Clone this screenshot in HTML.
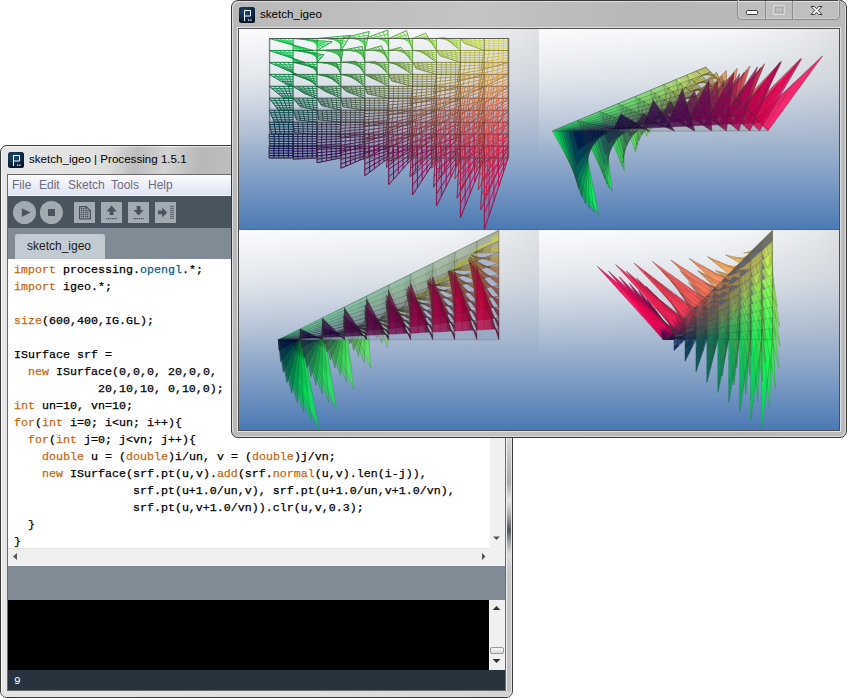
<!DOCTYPE html>
<html><head><meta charset="utf-8">
<style>
*{margin:0;padding:0;box-sizing:border-box}
html,body{width:847px;height:698px;overflow:hidden;background:#fff;position:relative;font-family:"Liberation Sans",sans-serif}
.a{position:absolute}
.ttl{font-size:11.6px;color:#000;white-space:nowrap;letter-spacing:0}
</style></head><body>
<!-- ============ Processing window ============ -->
<div class="a" style="left:0;top:145px;width:513px;height:553px;border:1px solid #3c3c3c;border-radius:7px 7px 7px 7px;overflow:hidden;
 background:linear-gradient(90deg,#e6e6e6 0,#e2e2e2 90px,#d2d2d2 135px,#c8c8c8 190px,#c4c4c4 260px,#bababa 513px);box-shadow:inset 1px 1px 0 #f4f4f4,inset -1px -1px 0 #f0f0f0">
 <div class="a" style="left:0;top:545px;width:513px;height:8px;background:linear-gradient(90deg,#e4e4e4,#e0e0e0 60%,#d4d4d4)"></div>
</div>
<div class="a" style="left:1px;top:146px;width:230px;height:28px;background:linear-gradient(100deg,rgba(0,0,0,0) 0,rgba(0,0,0,0) 110px,rgba(0,0,0,.1) 135px,rgba(255,255,255,.12) 165px,rgba(0,0,0,.08) 200px,rgba(0,0,0,.04) 230px)"></div>
<svg class="a" style="left:8px;top:152px" width="16" height="16" viewBox="0 0 16 16"><defs><radialGradient id="ig" cx="0.4" cy="0.3" r="0.9"><stop offset="0" stop-color="#1d4f7a"/><stop offset="0.6" stop-color="#0b2440"/><stop offset="1" stop-color="#000"/></radialGradient></defs><rect width="16" height="16" rx="2.5" fill="url(#ig)"/><path d="M5.5 14V3.5H11.5V9H5.5" fill="none" stroke="#fff" stroke-width="1"/><rect x="9" y="12.5" width="1.3" height="1.3" fill="#fff"/><rect x="11.3" y="12.5" width="1.3" height="1.3" fill="#fff"/></svg>
<div class="a ttl" style="left:29px;top:152px">sketch_igeo | Processing 1.5.1</div>
<div class="a" style="left:506px;top:438px;width:6px;height:253px;border-left:1px solid #eee;border-right:1px solid #e4e4e4;background:linear-gradient(#d8d8d8 0,#bcbcbc 25px,#ababab 45px,#e6e6e6 62px,#a8a8a8 78px,#4e565e 92px,#9ea2a6 104px,#dedede 116px,#c6c6c6 135px,#c2c2c2 253px)"></div>
<!-- client -->
<div class="a" style="left:7px;top:174px;width:499px;height:517px;border:1px solid #6a6a6a;background:#fff;overflow:hidden">
 <div class="a" style="left:0;top:0;width:497px;height:21px;background:linear-gradient(#fcfcfe,#eef1f8 45%,#dde3f1);border-bottom:1px solid #f6f7fb;font-size:12px;color:#6d6d80">
  <span class="a" style="left:4px;top:3px">File</span><span class="a" style="left:31px;top:3px">Edit</span><span class="a" style="left:60px;top:3px">Sketch</span><span class="a" style="left:103px;top:3px">Tools</span><span class="a" style="left:140px;top:3px">Help</span>
 </div>
 <div class="a" style="left:0;top:21px;width:497px;height:32px;background:#4a545e">
  <svg class="a" style="left:0;top:0" width="180" height="32" viewBox="8 196 180 32">
   <circle cx="24.5" cy="212.5" r="11.5" fill="#a2aab2"/>
   <path d="M21.8 208.2L30.5 212.6L21.8 217Z" fill="#4a545e"/>
   <circle cx="51.4" cy="212.5" r="11.5" fill="#a2aab2"/>
   <rect x="48" y="209" width="7" height="7" fill="#4a545e"/>
   <rect x="74" y="202" width="21" height="21" fill="#a2aab2"/>
   <path d="M79.6 206.6H86.2L90.4 210.8V218.9H79.6Z" fill="none" stroke="#4a545e" stroke-width="1.3"/>
   <path d="M86 206.6V211H90.4" fill="none" stroke="#4a545e" stroke-width="1.2"/>
   <g fill="#4a545e"><rect x="81" y="208" width="1.4" height="1.4"/><rect x="83" y="208" width="1.4" height="1.4"/><rect x="81" y="210" width="1.4" height="1.4"/><rect x="83" y="210" width="1.4" height="1.4"/><rect x="81" y="212" width="1.4" height="1.4"/><rect x="83" y="212" width="1.4" height="1.4"/><rect x="85" y="212" width="1.4" height="1.4"/><rect x="87" y="212" width="1.4" height="1.4"/><rect x="81" y="214" width="1.4" height="1.4"/><rect x="83" y="214" width="1.4" height="1.4"/><rect x="85" y="214" width="1.4" height="1.4"/><rect x="87" y="214" width="1.4" height="1.4"/><rect x="81" y="216" width="1.4" height="1.4"/><rect x="83" y="216" width="1.4" height="1.4"/><rect x="85" y="216" width="1.4" height="1.4"/><rect x="87" y="216" width="1.4" height="1.4"/></g>
   <rect x="101" y="202" width="21" height="21" fill="#a2aab2"/>
   <path d="M106.5 211.4L111.6 205.6L116.7 211.4H113.5V215H109.7V211.4Z" fill="#4a545e"/>
   <path d="M106.3 218.6H117.3" stroke="#4a545e" stroke-width="1.4" stroke-dasharray="1.2 .65"/>
   <rect x="128" y="202" width="21" height="21" fill="#a2aab2"/>
   <path d="M133.5 210L138.6 215.6L143.7 210H140.5V206H136.7V210Z" fill="#4a545e"/>
   <path d="M133.3 218.6H144.3" stroke="#4a545e" stroke-width="1.4" stroke-dasharray="1.2 .65"/>
   <rect x="155" y="202" width="21" height="21" fill="#a2aab2"/>
   <path d="M158 210.6H162.2V207.4L167.2 212.4L162.2 217.4V214.2H158Z" fill="#4a545e"/>
   <path d="M171 205.8V219.5M173.1 205.8V219.5" stroke="#4a545e" stroke-width="1.4" stroke-dasharray="1.2 .8"/>
  </svg>
 </div>
 <div class="a" style="left:0;top:53px;width:497px;height:31px;background:#818b95">
  <div class="a" style="left:7px;top:6px;width:90px;height:25px;background:#c2cad2;border-radius:3px 3px 0 0"></div>
  <span class="a" style="left:19px;top:11px;font-size:12px;color:#1a1a1a">sketch_igeo</span>
 </div>
 <div class="a" style="left:0;top:84px;width:481px;height:289px;background:#fff"></div>
 <pre class="a" style="left:6px;top:87px;font-family:'Liberation Mono',monospace;font-size:11.67px;line-height:17px;color:#000;-webkit-text-stroke:.25px"><span style="color:#c66a12">import</span> processing.<span style="color:#0a6088">opengl</span>.*;
<span style="color:#c66a12">import</span> igeo.*;

<span style="color:#c66a12">size</span>(600,400,IG.GL);

ISurface srf =
  <span style="color:#c66a12">new</span> ISurface(0,0,0, 20,0,0,
            20,10,10, 0,10,0);
<span style="color:#c66a12">int</span> un=10, vn=10;
<span style="color:#c66a12">for</span>(<span style="color:#c66a12">int</span> i=0; i&lt;un; i++){
  <span style="color:#c66a12">for</span>(<span style="color:#c66a12">int</span> j=0; j&lt;vn; j++){
    <span style="color:#c66a12">double</span> u = (<span style="color:#c66a12">double</span>)i/un, v = (<span style="color:#c66a12">double</span>)j/vn;
    <span style="color:#c66a12">new</span> ISurface(srf.pt(u,v).<span style="color:#c66a12">add</span>(srf.<span style="color:#c66a12">normal</span>(u,v).len(i-j)),
                 srf.pt(u+1.0/un,v), srf.pt(u+1.0/un,v+1.0/vn),
                 srf.pt(u,v+1.0/vn)).clr(u,v,0.3);
  }
}</pre>
 <!-- editor v scrollbar -->
 <div class="a" style="left:481px;top:84px;width:16px;height:289px;background:#f0f0f0;border-left:1px solid #f8f8f8"></div>
 <!-- h scrollbar -->
 <div class="a" style="left:0;top:373px;width:481px;height:18px;background:#efefef;border-top:1px solid #e2e2e2"></div>
 <div class="a" style="left:481px;top:373px;width:16px;height:18px;background:#f0f0f0"></div>
 <div class="a" style="left:0;top:391px;width:497px;height:34px;background:#818b95"></div>
 <div class="a" style="left:0;top:425px;width:481px;height:70px;background:#000"></div>
 <div class="a" style="left:481px;top:425px;width:16px;height:70px;background:#f0f0f0"></div>
 <div class="a" style="left:482px;top:472px;width:14px;height:7px;border:1px solid #9a9a9a;border-radius:2px;background:linear-gradient(#f6f6f6,#dcdcdc)"></div>
 <div class="a" style="left:0;top:495px;width:497px;height:20px;background:#29333d"></div>
 <svg class="a" style="left:0;top:0" width="497" height="517" viewBox="8 175 497 517">
  <path d="M493 536.5H500L496.5 540Z" fill="#555"/>
  <path d="M13 556.5L17 553V560Z" fill="#555"/>
  <path d="M482 553V560L485.5 556.5Z" fill="#555"/>
  <path d="M492.5 610L496.5 606L500.5 610Z" fill="#333"/>
  <path d="M492.5 659H500.5L496.5 663Z" fill="#333"/>
 </svg>
 <span class="a" style="left:6px;top:500px;font-family:'Liberation Mono',monospace;font-size:11px;color:#fff">9</span>
</div>
<!-- ============ Sketch window ============ -->
<div class="a" style="left:231px;top:0;width:616px;height:438px;border:1px solid #383838;border-radius:7px;
 background:linear-gradient(90deg,#b9b9b9,#bfbfbf 25%,#c4c4c4 40%,#b7b7b7 65%,#bababa 100%);box-shadow:inset 1px 1px 0 #dedede,inset -1px -1px 0 #dcdcdc"></div>
<div class="a" style="left:237px;top:27px;width:604px;height:405px;border:1px solid #e4e2de;border-right-color:#e0e0e0"></div>
<svg class="a" style="left:239px;top:7px" width="16" height="16" viewBox="0 0 16 16"><rect width="16" height="16" rx="2.5" fill="url(#ig)"/><path d="M5.5 14V3.5H11.5V9H5.5" fill="none" stroke="#fff" stroke-width="1"/><rect x="9" y="12.5" width="1.3" height="1.3" fill="#fff"/><rect x="11.3" y="12.5" width="1.3" height="1.3" fill="#fff"/></svg>
<div class="a ttl" style="left:260px;top:7px">sketch_igeo</div>
<!-- caption buttons -->
<svg class="a" style="left:737px;top:0" width="104" height="21" viewBox="737 0 104 21">
 <path d="M737.5 0V15.5Q737.5 19.5 741.5 19.5H835.5Q839.5 19.5 839.5 15.5V0" fill="rgba(255,255,255,.08)" stroke="#8c8c8c"/>
 <path d="M738.5 0V15Q738.5 18.5 742 18.5H835Q838.5 18.5 838.5 15V0" fill="none" stroke="#d6d6d6" stroke-opacity=".7"/>
 <path d="M765.5 1V19M792.5 1V19" stroke="#8c8c8c"/>
 <path d="M766.5 1V19M793.5 1V19" stroke="#d0d0d0" stroke-opacity=".6"/>
 <rect x="746.5" y="10.5" width="11" height="4" rx="1" fill="#fff" stroke="#3a3a3a"/>
 <rect x="773.5" y="5.5" width="11" height="9" fill="none" stroke="#d8d8d8"/>
 <rect x="775.5" y="7.5" width="7" height="5" fill="none" stroke="#a8a8a8"/>
 <path d="M811 6.5H814.5L816.5 8.8L818.5 6.5H822L818.3 10.5L822 14.5H818.5L816.5 12.2L814.5 14.5H811L814.7 10.5Z" fill="#fff" stroke="#3a3a3a" stroke-width="1" stroke-linejoin="round"/>
</svg>
<!-- sketch client -->
<div class="a" style="left:238px;top:28px;width:602px;height:403px;border:1px solid #4e4e4e;overflow:hidden;background:#4a78b2">
<svg class="a" style="left:0;top:0" width="600" height="401" viewBox="239 29 600 401"><defs><linearGradient id="gv" x1="0" y1="0" x2="0" y2="1"><stop offset="0" stop-color="#f8f9fb"/><stop offset="0.25" stop-color="#dde2e9"/><stop offset="0.5" stop-color="#b0bfd4"/><stop offset="0.75" stop-color="#7f9dc4"/><stop offset="1" stop-color="#4a79b4"/></linearGradient><linearGradient id="gh" x1="0" y1="0" x2="1" y2="0"><stop offset="0" stop-color="#fff" stop-opacity=".3"/><stop offset=".45" stop-color="#fff" stop-opacity="0"/><stop offset="1" stop-color="#606870" stop-opacity=".16"/></linearGradient><linearGradient id="gm" x1="0" y1="0" x2="0" y2="1"><stop offset="0" stop-color="#fff"/><stop offset=".65" stop-color="#000"/></linearGradient><pattern id="stripe" width="4" height="3" patternUnits="userSpaceOnUse"><rect width="4" height="2" fill="#fff"/><rect y="2" width="4" height="1" fill="#fff" fill-opacity=".35"/></pattern><pattern id="hstripe" width="6" height="3" patternUnits="userSpaceOnUse" y="38.5"><rect width="6" height="1" fill="#6c7280" fill-opacity=".45"/></pattern><mask id="mt" maskContentUnits="objectBoundingBox"><rect width="1" height="1" fill="url(#gm)"/></mask><mask id="mstripe" maskUnits="userSpaceOnUse" x="239" y="29" width="300" height="201"><rect x="239" y="29" width="300" height="201" fill="url(#stripe)"/></mask><clipPath id="c_top"><rect x="239" y="29" width="300" height="201"/></clipPath><clipPath id="c_persp"><rect x="539" y="29" width="300" height="201"/></clipPath><clipPath id="c_front"><rect x="239" y="230" width="300" height="200"/></clipPath><clipPath id="c_right"><rect x="539" y="230" width="300" height="200"/></clipPath></defs><style>.vtop path{fill-opacity:0.1;stroke-opacity:0;stroke-width:0.6}.vpersp path{fill-opacity:0.8;stroke-opacity:0.5;stroke-width:0.6}.vfront path{fill-opacity:0.75;stroke-opacity:0.55;stroke-width:0.6}.vright path{fill-opacity:0.88;stroke-opacity:0.6;stroke-width:0.6}</style><g clip-path="url(#c_top)"><rect x="239" y="29" width="300" height="201" fill="url(#gv)"/><rect x="239" y="29" width="300" height="201" fill="url(#gh)" mask="url(#mt)"/><rect x="269.2" y="107.5" width="239" height="50.5" fill="url(#hstripe)"/><g class="vtop"><path fill="#00e64c" d="M313.3 50.5L293.1 50.4L293.1 38.5L269.2 38.5Z"/><path fill="#00cc4c" d="M304.7 62.4L293.1 62.4L293.1 50.4L269.2 50.5Z"/><path fill="#00b24c" d="M296.8 74.4L293.1 74.4L293.1 62.4L269.2 62.4Z"/><path fill="#00994c" d="M289.8 86.3L293.1 86.3L293.1 74.4L269.2 74.4Z"/><path fill="#00804c" d="M283.7 98.2L293.1 98.2L293.1 86.3L269.2 86.3Z"/><path fill="#00664c" d="M278.6 110.2L293.1 110.2L293.1 98.2L269.2 98.2Z"/><path fill="#004c4c" d="M274.5 122.2L293.1 122.2L293.1 110.2L269.2 110.2Z"/><path fill="#1ae64c" d="M332.2 41.8L317 50.4L317 38.5L293.1 38.5Z"/><path fill="#00334c" d="M271.6 134.1L293.1 134.1L293.1 122.1L269.2 122.2Z"/><path fill="#1acc4c" d="M324 54.7L317 62.4L317 50.4L293.1 50.4Z"/><path fill="#1ab24c" d="M316.7 67.6L317 74.4L317 62.4L293.1 62.4Z"/><path fill="#1a994c" d="M310.2 80.6L317 86.3L317 74.4L293.1 74.4Z"/><path fill="#001a4c" d="M269.8 146.1L293.1 146.1L293.1 134.1L269.2 134.1Z"/><path fill="#1a804c" d="M304.6 93.6L317 98.2L317 86.3L293.1 86.3Z"/><path fill="#1a664c" d="M300.1 106.7L317 110.2L317 98.2L293.1 98.2Z"/><path fill="#bfc7d6" style="fill-opacity:0" d="M269.2 158L293.1 158L293.1 146.1L269.2 146.1Z"/><path fill="#00004c" d="M269.2 158L293.1 158L293.1 146.1L269.2 146.1Z"/><path fill="#1a4c4c" d="M296.6 119.8L317 122.2L317 110.2L293.1 110.2Z"/><path fill="#bfc7d6" style="fill-opacity:0" d="M269.2 146.1L293.1 146.1L293.1 134.1L269.2 134.1Z"/><path fill="#bfc7d6" style="fill-opacity:0" d="M293.1 158L317 158L317 146.1L293.1 146.1Z"/><path fill="#bfc7d6" style="fill-opacity:0" d="M269.2 134.1L293.1 134.1L293.1 122.2L269.2 122.2Z"/><path fill="#bfc7d6" style="fill-opacity:0" d="M317 158L340.9 158L340.9 146.1L317 146.1Z"/><path fill="#1a334c" d="M294.3 132.9L317 134.1L317 122.2L293.1 122.1Z"/><path fill="#bfc7d6" style="fill-opacity:0" d="M269.2 122.2L293.1 122.2L293.1 110.2L269.2 110.2Z"/><path fill="#bfc7d6" style="fill-opacity:0" d="M340.9 158L364.8 158L364.8 146.1L340.9 146.1Z"/><path fill="#bfc7d6" style="fill-opacity:0" d="M269.2 110.2L293.1 110.2L293.1 98.2L269.2 98.2Z"/><path fill="#bfc7d6" style="fill-opacity:0" d="M364.8 158L388.7 158L388.7 146.1L364.8 146.1Z"/><path fill="#bfc7d6" style="fill-opacity:0" d="M293.1 146.1L317 146.1L317 134.1L293.1 134.1Z"/><path fill="#1a1a4c" d="M293.1 146.1L317 146.1L317 134.1L293.1 134.1Z"/><path fill="#bfc7d6" style="fill-opacity:0" d="M269.2 98.2L293.1 98.2L293.1 86.3L269.2 86.3Z"/><path fill="#bfc7d6" style="fill-opacity:0" d="M388.7 158L412.6 158L412.6 146.1L388.7 146.1Z"/><path fill="#1a004c" d="M293.1 159.2L317 158L317 146.1L293.1 146.1Z"/><path fill="#bfc7d6" style="fill-opacity:0" d="M269.2 86.3L293.1 86.3L293.1 74.4L269.2 74.4Z"/><path fill="#bfc7d6" style="fill-opacity:0" d="M412.6 158L436.5 158L436.5 146.1L412.6 146.1Z"/><path fill="#bfc7d6" style="fill-opacity:0" d="M269.2 74.4L293.1 74.4L293.1 62.4L269.2 62.4Z"/><path fill="#bfc7d6" style="fill-opacity:0" d="M436.5 158L460.4 158L460.4 146.1L436.5 146.1Z"/><path fill="#bfc7d6" style="fill-opacity:0" d="M293.1 134.1L317 134.1L317 122.2L293.1 122.2Z"/><path fill="#bfc7d6" style="fill-opacity:0" d="M317 146.1L340.9 146.1L340.9 134.1L317 134.1Z"/><path fill="#bfc7d6" style="fill-opacity:0" d="M269.2 62.4L293.1 62.4L293.1 50.4L269.2 50.5Z"/><path fill="#bfc7d6" style="fill-opacity:0" d="M460.4 158L484.3 158L484.3 146.1L460.4 146.1Z"/><path fill="#bfc7d6" style="fill-opacity:0" d="M269.2 50.5L293.1 50.4L293.1 38.5L269.2 38.5Z"/><path fill="#bfc7d6" style="fill-opacity:0" d="M484.3 158L508.2 158L508.2 146.1L484.3 146.1Z"/><path fill="#bfc7d6" style="fill-opacity:0" d="M293.1 122.2L317 122.2L317 110.2L293.1 110.2Z"/><path fill="#bfc7d6" style="fill-opacity:0" d="M340.9 146.1L364.8 146.1L364.8 134.1L340.9 134.1Z"/><path fill="#33004c" d="M317 162.7L340.9 158L340.9 146.1L317 146.1Z"/><path fill="#331a4c" d="M316.4 148.4L340.9 146.1L340.9 134.1L317 134.1Z"/><path fill="#bfc7d6" style="fill-opacity:0" d="M317 134.1L340.9 134.1L340.9 122.2L317 122.2Z"/><path fill="#33334c" d="M317 134.1L340.9 134.1L340.9 122.2L317 122.2Z"/><path fill="#334c4c" d="M318.7 119.8L340.9 122.2L340.9 110.2L317 110.2Z"/><path fill="#33664c" d="M321.6 105.6L340.9 110.2L340.9 98.2L317 98.2Z"/><path fill="#33804c" d="M325.5 91.4L340.9 98.2L340.9 86.3L317 86.3Z"/><path fill="#bfc7d6" style="fill-opacity:0" d="M293.1 110.2L317 110.2L317 98.2L293.1 98.2Z"/><path fill="#bfc7d6" style="fill-opacity:0" d="M364.8 146.1L388.7 146.1L388.7 134.1L364.8 134.1Z"/><path fill="#33994c" d="M330.5 77.3L340.9 86.3L340.9 74.4L317 74.4Z"/><path fill="#33b24c" d="M336.4 63.3L340.9 74.4L340.9 62.4L317 62.4Z"/><path fill="#33cc4c" d="M343.2 49.3L340.9 62.4L340.9 50.5L317 50.4Z"/><path fill="#33e64c" d="M350.8 35.4L340.9 50.5L340.9 38.5L317 38.5Z"/><path fill="#bfc7d6" style="fill-opacity:0" d="M388.7 146.1L412.6 146.1L412.6 134.1L388.7 134.1Z"/><path fill="#bfc7d6" style="fill-opacity:0" d="M293.1 98.2L317 98.2L317 86.3L293.1 86.3Z"/><path fill="#bfc7d6" style="fill-opacity:0" d="M340.9 134.1L364.8 134.1L364.8 122.2L340.9 122.2Z"/><path fill="#bfc7d6" style="fill-opacity:0" d="M317 122.2L340.9 122.2L340.9 110.2L317 110.2Z"/><path fill="#4c004c" d="M340.9 168.3L364.8 158L364.8 146.1L340.9 146.1Z"/><path fill="#bfc7d6" style="fill-opacity:0" d="M293.1 86.3L317 86.3L317 74.4L293.1 74.4Z"/><path fill="#bfc7d6" style="fill-opacity:0" d="M412.6 146.1L436.5 146.1L436.5 134.1L412.6 134.1Z"/><path fill="#4c1a4c" d="M339.8 152.9L364.8 146.1L364.8 134.1L340.9 134.1Z"/><path fill="#4c334c" d="M339.8 137.5L364.8 134.1L364.8 122.2L340.9 122.2Z"/><path fill="#bfc7d6" style="fill-opacity:0" d="M293.1 74.4L317 74.4L317 62.4L293.1 62.4Z"/><path fill="#bfc7d6" style="fill-opacity:0" d="M317 110.2L340.9 110.2L340.9 98.2L317 98.2Z"/><path fill="#bfc7d6" style="fill-opacity:0" d="M364.8 134.1L388.7 134.1L388.7 122.2L364.8 122.2Z"/><path fill="#bfc7d6" style="fill-opacity:0" d="M436.5 146.1L460.4 146.1L460.4 134.1L436.5 134.1Z"/><path fill="#66004c" d="M364.8 175.8L388.7 158L388.7 146.1L364.8 146.1Z"/><path fill="#bfc7d6" style="fill-opacity:0" d="M340.9 122.2L364.8 122.2L364.8 110.2L340.9 110.2Z"/><path fill="#4c4c4c" d="M340.9 122.2L364.8 122.2L364.8 110.2L340.9 110.2Z"/><path fill="#bfc7d6" style="fill-opacity:0" d="M460.4 146.1L484.3 146.1L484.3 134.1L460.4 134.1Z"/><path fill="#bfc7d6" style="fill-opacity:0" d="M293.1 62.4L317 62.4L317 50.4L293.1 50.4Z"/><path fill="#4c664c" d="M343.1 106.8L364.8 110.2L364.8 98.2L340.9 98.2Z"/><path fill="#661a4c" d="M363.1 159.4L388.7 146.1L388.7 134.1L364.8 134.1Z"/><path fill="#bfc7d6" style="fill-opacity:0" d="M317 98.2L340.9 98.2L340.9 86.3L317 86.3Z"/><path fill="#bfc7d6" style="fill-opacity:0" d="M388.7 134.1L412.6 134.1L412.6 122.2L388.7 122.2Z"/><path fill="#80004c" d="M388.7 184.7L412.6 158L412.6 146.1L388.7 146.1Z"/><path fill="#bfc7d6" style="fill-opacity:0" d="M293.1 50.4L317 50.4L317 38.5L293.1 38.5Z"/><path fill="#bfc7d6" style="fill-opacity:0" d="M484.3 146.1L508.2 146.1L508.2 134.1L484.3 134.1Z"/><path fill="#4c804c" d="M346.5 91.6L364.8 98.2L364.8 86.3L340.9 86.3Z"/><path fill="#bfc7d6" style="fill-opacity:0" d="M340.9 110.2L364.8 110.2L364.8 98.2L340.9 98.2Z"/><path fill="#bfc7d6" style="fill-opacity:0" d="M364.8 122.2L388.7 122.2L388.7 110.2L364.8 110.2Z"/><path fill="#4c994c" d="M350.8 76.4L364.8 86.3L364.8 74.4L340.9 74.4Z"/><path fill="#66334c" d="M362.6 142.9L388.7 134.1L388.7 122.2L364.8 122.2Z"/><path fill="#99004c" d="M412.6 194.9L436.5 158L436.5 146.1L412.6 146.1Z"/><path fill="#bfc7d6" style="fill-opacity:0" d="M412.6 134.1L436.5 134.1L436.5 122.2L412.6 122.2Z"/><path fill="#bfc7d6" style="fill-opacity:0" d="M317 86.3L340.9 86.3L340.9 74.4L317 74.4Z"/><path fill="#4cb24c" d="M356.1 61.3L364.8 74.4L364.8 62.4L340.9 62.4Z"/><path fill="#801a4c" d="M386.6 167.4L412.6 146.1L412.6 134.1L388.7 134.1Z"/><path fill="#664c4c" d="M363.2 126.5L388.7 122.2L388.7 110.2L364.8 110.2Z"/><path fill="#b2004c" d="M436.5 206L460.4 158L460.4 146.1L436.5 146.1Z"/><path fill="#4ccc4c" d="M362.3 46.4L364.8 62.4L364.8 50.5L340.9 50.5Z"/><path fill="#bfc7d6" style="fill-opacity:0" d="M436.5 134.1L460.4 134.1L460.4 122.2L436.5 122.2Z"/><path fill="#bfc7d6" style="fill-opacity:0" d="M317 74.4L340.9 74.4L340.9 62.4L317 62.4Z"/><path fill="#bfc7d6" style="fill-opacity:0" d="M388.7 122.2L412.6 122.2L412.6 110.2L388.7 110.2Z"/><path fill="#bfc7d6" style="fill-opacity:0" d="M340.9 98.2L364.8 98.2L364.8 86.3L340.9 86.3Z"/><path fill="#cc004c" d="M460.4 217.7L484.3 158L484.3 146.1L460.4 146.1Z"/><path fill="#4ce64c" d="M369.3 31.5L364.8 50.5L364.8 38.5L340.9 38.5Z"/><path fill="#bfc7d6" style="fill-opacity:0" d="M364.8 110.2L388.7 110.2L388.7 98.2L364.8 98.2Z"/><path fill="#66664c" d="M364.8 110.2L388.7 110.2L388.7 98.2L364.8 98.2Z"/><path fill="#80334c" d="M385.5 150.1L412.6 134.1L412.6 122.2L388.7 122.2Z"/><path fill="#991a4c" d="M410 176.8L436.5 146.1L436.5 134.1L412.6 134.1Z"/><path fill="#bfc7d6" style="fill-opacity:0" d="M317 62.4L340.9 62.4L340.9 50.5L317 50.4Z"/><path fill="#bfc7d6" style="fill-opacity:0" d="M460.4 134.1L484.3 134.1L484.3 122.2L460.4 122.2Z"/><path fill="#e6004c" d="M484.3 229.9L508.2 158L508.2 146.1L484.3 146.1Z"/><path fill="#66804c" d="M367.5 93.9L388.7 98.2L388.7 86.3L364.8 86.3Z"/><path fill="#bfc7d6" style="fill-opacity:0" d="M340.9 86.3L364.8 86.3L364.8 74.4L340.9 74.4Z"/><path fill="#bfc7d6" style="fill-opacity:0" d="M412.6 122.2L436.5 122.2L436.5 110.2L412.6 110.2Z"/><path fill="#b21a4c" d="M433.6 187.1L460.4 146.1L460.4 134.1L436.5 134.1Z"/><path fill="#804c4c" d="M385.5 132.7L412.6 122.2L412.6 110.2L388.7 110.2Z"/><path fill="#bfc7d6" style="fill-opacity:0" d="M317 50.4L340.9 50.5L340.9 38.5L317 38.5Z"/><path fill="#bfc7d6" style="fill-opacity:0" d="M484.3 134.1L508.2 134.1L508.2 122.2L484.3 122.2Z"/><path fill="#bfc7d6" style="fill-opacity:0" d="M364.8 98.2L388.7 98.2L388.7 86.3L364.8 86.3Z"/><path fill="#bfc7d6" style="fill-opacity:0" d="M388.7 110.2L412.6 110.2L412.6 98.2L388.7 98.2Z"/><path fill="#66994c" d="M371.2 77.7L388.7 86.3L388.7 74.4L364.8 74.4Z"/><path fill="#99334c" d="M408.5 158.6L436.5 134.1L436.5 122.2L412.6 122.2Z"/><path fill="#bfc7d6" style="fill-opacity:0" d="M436.5 122.2L460.4 122.2L460.4 110.2L436.5 110.2Z"/><path fill="#bfc7d6" style="fill-opacity:0" d="M340.9 74.4L364.8 74.4L364.8 62.4L340.9 62.4Z"/><path fill="#cc1a4c" d="M457.1 198.3L484.3 146.1L484.3 134.1L460.4 134.1Z"/><path fill="#80664c" d="M386.6 115.5L412.6 110.2L412.6 98.2L388.7 98.2Z"/><path fill="#66b24c" d="M375.9 61.7L388.7 74.4L388.7 62.4L364.8 62.4Z"/><path fill="#b2334c" d="M431.6 168.2L460.4 134.1L460.4 122.1L436.5 122.2Z"/><path fill="#e61a4c" d="M480.7 210L508.2 146.1L508.2 134.1L484.3 134.1Z"/><path fill="#994c4c" d="M408 140.4L436.5 122.2L436.5 110.2L412.6 110.2Z"/><path fill="#bfc7d6" style="fill-opacity:0" d="M364.8 86.3L388.7 86.3L388.7 74.4L364.8 74.4Z"/><path fill="#bfc7d6" style="fill-opacity:0" d="M412.6 110.2L436.5 110.2L436.5 98.2L412.6 98.2Z"/><path fill="#66cc4c" d="M381.4 45.8L388.7 62.4L388.7 50.5L364.8 50.5Z"/><path fill="#bfc7d6" style="fill-opacity:0" d="M460.4 122.2L484.3 122.2L484.3 110.2L460.4 110.2Z"/><path fill="#bfc7d6" style="fill-opacity:0" d="M340.9 62.4L364.8 62.4L364.8 50.5L340.9 50.5Z"/><path fill="#bfc7d6" style="fill-opacity:0" d="M388.7 98.2L412.6 98.2L412.6 86.3L388.7 86.3Z"/><path fill="#80804c" d="M388.7 98.2L412.6 98.2L412.6 86.3L388.7 86.3Z"/><path fill="#66e64c" d="M387.8 30L388.7 50.5L388.7 38.5L364.8 38.5Z"/><path fill="#cc334c" d="M454.8 178.8L484.3 134.1L484.3 122.2L460.4 122.2Z"/><path fill="#bfc7d6" style="fill-opacity:0" d="M340.9 50.5L364.8 50.5L364.8 38.5L340.9 38.5Z"/><path fill="#bfc7d6" style="fill-opacity:0" d="M484.3 122.2L508.2 122.2L508.2 110.2L484.3 110.2Z"/><path fill="#99664c" d="M408.6 122.3L436.5 110.2L436.5 98.2L412.6 98.2Z"/><path fill="#80994c" d="M391.8 81.1L412.6 86.3L412.6 74.4L388.7 74.4Z"/><path fill="#bfc7d6" style="fill-opacity:0" d="M436.5 110.2L460.4 110.2L460.4 98.2L436.5 98.2Z"/><path fill="#bfc7d6" style="fill-opacity:0" d="M364.8 74.4L388.7 74.4L388.7 62.4L364.8 62.4Z"/><path fill="#b24c4c" d="M430.7 149.4L460.4 122.2L460.4 110.2L436.5 110.2Z"/><path fill="#bfc7d6" style="fill-opacity:0" d="M412.6 98.2L436.5 98.2L436.5 86.3L412.6 86.3Z"/><path fill="#bfc7d6" style="fill-opacity:0" d="M388.7 86.3L412.6 86.3L412.6 74.4L388.7 74.4Z"/><path fill="#e6334c" d="M478.1 189.9L508.2 134.1L508.2 122.2L484.3 122.2Z"/><path fill="#80b24c" d="M395.8 64.1L412.6 74.4L412.6 62.4L388.7 62.4Z"/><path fill="#99804c" d="M410.1 104.3L436.5 98.2L436.5 86.3L412.6 86.3Z"/><path fill="#bfc7d6" style="fill-opacity:0" d="M364.8 62.4L388.7 62.4L388.7 50.5L364.8 50.5Z"/><path fill="#bfc7d6" style="fill-opacity:0" d="M460.4 110.2L484.3 110.2L484.3 98.2L460.4 98.2Z"/><path fill="#cc4c4c" d="M453.4 159.2L484.3 122.2L484.3 110.2L460.4 110.2Z"/><path fill="#b2664c" d="M430.7 130.5L460.4 110.2L460.4 98.2L436.5 98.2Z"/><path fill="#80cc4c" d="M400.8 47.3L412.6 62.4L412.6 50.5L388.7 50.5Z"/><path fill="#bfc7d6" style="fill-opacity:0" d="M388.7 74.4L412.6 74.4L412.6 62.4L388.7 62.4Z"/><path fill="#bfc7d6" style="fill-opacity:0" d="M436.5 98.2L460.4 98.2L460.4 86.3L436.5 86.3Z"/><path fill="#bfc7d6" style="fill-opacity:0" d="M412.6 86.3L436.5 86.3L436.5 74.4L412.6 74.4Z"/><path fill="#99994c" d="M412.6 86.3L436.5 86.3L436.5 74.4L412.6 74.4Z"/><path fill="#bfc7d6" style="fill-opacity:0" d="M364.8 50.5L388.7 50.5L388.7 38.5L364.8 38.5Z"/><path fill="#bfc7d6" style="fill-opacity:0" d="M484.3 110.2L508.2 110.2L508.2 98.2L484.3 98.2Z"/><path fill="#80e64c" d="M406.5 30.6L412.6 50.5L412.6 38.5L388.7 38.5Z"/><path fill="#e64c4c" d="M476.4 169.8L508.2 122.2L508.2 110.2L484.3 110.2Z"/><path fill="#b2804c" d="M431.7 111.7L460.4 98.2L460.4 86.3L436.5 86.3Z"/><path fill="#cc664c" d="M453 139.7L484.3 110.2L484.3 98.2L460.4 98.2Z"/><path fill="#99b24c" d="M416 68.5L436.5 74.4L436.5 62.4L412.6 62.4Z"/><path fill="#bfc7d6" style="fill-opacity:0" d="M460.4 98.2L484.3 98.2L484.3 86.3L460.4 86.3Z"/><path fill="#bfc7d6" style="fill-opacity:0" d="M388.7 62.4L412.6 62.4L412.6 50.5L388.7 50.5Z"/><path fill="#bfc7d6" style="fill-opacity:0" d="M412.6 74.4L436.5 74.4L436.5 62.4L412.6 62.4Z"/><path fill="#bfc7d6" style="fill-opacity:0" d="M436.5 86.3L460.4 86.3L460.4 74.4L436.5 74.4Z"/><path fill="#b2994c" d="M433.6 93L460.4 86.3L460.4 74.4L436.5 74.4Z"/><path fill="#99cc4c" d="M420.4 50.8L436.5 62.4L436.5 50.5L412.6 50.5Z"/><path fill="#e6664c" d="M475.5 149.7L508.2 110.2L508.2 98.2L484.3 98.2Z"/><path fill="#bfc7d6" style="fill-opacity:0" d="M388.7 50.5L412.6 50.5L412.6 38.5L388.7 38.5Z"/><path fill="#bfc7d6" style="fill-opacity:0" d="M484.3 98.2L508.2 98.2L508.2 86.3L484.3 86.3Z"/><path fill="#cc804c" d="M453.5 120.2L484.3 98.2L484.3 86.3L460.4 86.3Z"/><path fill="#bfc7d6" style="fill-opacity:0" d="M412.6 62.4L436.5 62.4L436.5 50.5L412.6 50.5Z"/><path fill="#bfc7d6" style="fill-opacity:0" d="M460.4 86.3L484.3 86.3L484.3 74.4L460.4 74.4Z"/><path fill="#99e64c" d="M425.5 33.2L436.5 50.5L436.5 38.5L412.6 38.5Z"/><path fill="#bfc7d6" style="fill-opacity:0" d="M436.5 74.4L460.4 74.4L460.4 62.4L436.5 62.4Z"/><path fill="#b2b24c" d="M436.5 74.4L460.4 74.4L460.4 62.4L436.5 62.4Z"/><path fill="#cc994c" d="M454.9 100.8L484.3 86.3L484.3 74.4L460.4 74.4Z"/><path fill="#e6804c" d="M475.6 129.7L508.2 98.2L508.2 86.3L484.3 86.3Z"/><path fill="#bfc7d6" style="fill-opacity:0" d="M412.6 50.5L436.5 50.5L436.5 38.5L412.6 38.5Z"/><path fill="#bfc7d6" style="fill-opacity:0" d="M484.3 86.3L508.2 86.3L508.2 74.4L484.3 74.4Z"/><path fill="#b2cc4c" d="M440.2 55.9L460.4 62.4L460.4 50.5L436.5 50.5Z"/><path fill="#bfc7d6" style="fill-opacity:0" d="M436.5 62.4L460.4 62.4L460.4 50.5L436.5 50.5Z"/><path fill="#bfc7d6" style="fill-opacity:0" d="M460.4 74.4L484.3 74.4L484.3 62.4L460.4 62.4Z"/><path fill="#ccb24c" d="M457.2 81.6L484.3 74.4L484.3 62.4L460.4 62.4Z"/><path fill="#e6994c" d="M476.5 109.7L508.2 86.3L508.2 74.4L484.3 74.4Z"/><path fill="#b2e64c" d="M444.8 37.6L460.4 50.5L460.4 38.5L436.5 38.5Z"/><path fill="#bfc7d6" style="fill-opacity:0" d="M436.5 50.5L460.4 50.5L460.4 38.5L436.5 38.5Z"/><path fill="#bfc7d6" style="fill-opacity:0" d="M484.3 74.4L508.2 74.4L508.2 62.4L484.3 62.4Z"/><path fill="#bfc7d6" style="fill-opacity:0" d="M460.4 62.4L484.3 62.4L484.3 50.4L460.4 50.5Z"/><path fill="#cccc4c" d="M460.4 62.4L484.3 62.4L484.3 50.4L460.4 50.5Z"/><path fill="#e6b24c" d="M478.3 89.8L508.2 74.4L508.2 62.4L484.3 62.4Z"/><path fill="#cce64c" d="M464.4 43.4L484.3 50.4L484.3 38.5L460.4 38.5Z"/><path fill="#bfc7d6" style="fill-opacity:0" d="M460.4 50.5L484.3 50.4L484.3 38.5L460.4 38.5Z"/><path fill="#bfc7d6" style="fill-opacity:0" d="M484.3 62.4L508.2 62.4L508.2 50.5L484.3 50.4Z"/><path fill="#e6cc4c" d="M480.9 70.1L508.2 62.4L508.2 50.5L484.3 50.4Z"/><path fill="#bfc7d6" style="fill-opacity:0" d="M484.3 50.4L508.2 50.5L508.2 38.5L484.3 38.5Z"/><path fill="#e6e64c" d="M484.3 50.4L508.2 50.5L508.2 38.5L484.3 38.5Z"/></g><g fill="none" stroke-width="0.95" stroke-opacity="0.95"><path stroke="#00d346" d="M313.3 50.5L269.2 38.5M313.3 50.5L293.1 50.4M309.3 50.5L274 38.5M304.5 48.1L293.1 48.1M305.2 50.5L278.8 38.5M295.7 45.7L293.1 45.7M301.2 50.4L283.5 38.5M286.9 43.3L293.1 43.3M297.1 50.4L288.3 38.5M278 40.9L293.1 40.9M293.1 50.4L293.1 38.5M269.2 38.5L293.1 38.5"/><path stroke="#00bc46" d="M304.7 62.4L269.2 50.5M304.7 62.4L293.1 62.4M302.4 62.4L274 50.5M297.6 60L293.1 60M300.1 62.4L278.8 50.5M290.5 57.6L293.1 57.6M297.7 62.4L283.5 50.4M283.4 55.2L293.1 55.2M295.4 62.4L288.3 50.4M276.3 52.8L293.1 52.8M293.1 62.4L293.1 50.4M269.2 50.5L293.1 50.4"/><path stroke="#00a446" d="M296.8 74.4L269.2 62.4M296.8 74.4L293.1 74.4M296.1 74.3L274 62.4M291.3 72L293.1 72M295.3 74.4L278.8 62.4M285.8 69.6L293.1 69.6M294.6 74.4L283.5 62.4M280.3 67.2L293.1 67.2M293.8 74.4L288.3 62.4M274.7 64.8L293.1 64.8M293.1 74.4L293.1 62.4M269.2 62.4L293.1 62.4"/><path stroke="#008d46" d="M289.8 86.3L269.2 74.4M289.8 86.3L293.1 86.3M290.5 86.3L274 74.3M285.7 83.9L293.1 83.9M291.1 86.3L278.8 74.4M281.6 81.5L293.1 81.5M291.8 86.3L283.5 74.4M277.4 79.1L293.1 79.1M292.4 86.3L288.3 74.4M273.3 76.7L293.1 76.7M293.1 86.3L293.1 74.4M269.2 74.4L293.1 74.4"/><path stroke="#007546" d="M283.7 98.2L269.2 86.3M283.7 98.2L293.1 98.2M285.6 98.2L274 86.3M280.8 95.9L293.1 95.9M287.5 98.2L278.8 86.3M277.9 93.5L293.1 93.5M289.3 98.2L283.5 86.3M275 91.1L293.1 91.1M291.2 98.2L288.3 86.3M272.1 88.7L293.1 88.7M293.1 98.2L293.1 86.3M269.2 86.3L293.1 86.3"/><path stroke="#005e46" d="M278.6 110.2L269.2 98.2M278.6 110.2L293.1 110.2M281.5 110.2L274 98.2M276.7 107.8L293.1 107.8M284.4 110.2L278.8 98.2M274.8 105.4L293.1 105.4M287.3 110.2L283.5 98.2M272.9 103L293.1 103M290.2 110.2L288.3 98.2M271.1 100.6L293.1 100.6M293.1 110.2L293.1 98.2M269.2 98.2L293.1 98.2"/><path stroke="#004646" d="M274.5 122.2L269.2 110.2M274.5 122.2L293.1 122.2M278.2 122.2L274 110.2M273.5 119.8L293.1 119.8M282 122.2L278.8 110.2M272.4 117.4L293.1 117.4M285.7 122.2L283.5 110.2M271.3 115L293.1 115M289.4 122.2L288.3 110.2M270.3 112.6L293.1 112.6M293.1 122.2L293.1 110.2M269.2 110.2L293.1 110.2"/><path stroke="#17d346" d="M332.2 41.8L293.1 38.5M332.2 41.8L317 50.4M329.1 43.5L297.9 38.5M324.4 41.1L317 48.1M326.1 45.2L302.7 38.5M316.5 40.5L317 45.7M323.1 47L307.4 38.5M308.7 39.8L317 43.3M320 48.7L312.2 38.5M300.9 39.2L317 40.9M317 50.4L317 38.5M293.1 38.5L317 38.5"/><path stroke="#002f46" d="M271.6 134.1L269.2 122.2M271.6 134.1L293.1 134.1M275.9 134.1L274 122.2M271.1 131.7L293.1 131.7M280.2 134.1L278.8 122.1M270.6 129.3L293.1 129.3M284.5 134.1L283.5 122.1M270.2 126.9L293.1 126.9M288.8 134.1L288.3 122.1M269.7 124.5L293.1 124.5M293.1 134.1L293.1 122.1M269.2 122.2L293.1 122.1"/><path stroke="#17bc46" d="M324 54.7L293.1 50.4M324 54.7L317 62.4M322.6 56.2L297.9 50.4M317.8 53.8L317 60M321.2 57.8L302.7 50.4M311.7 53L317 57.6M319.8 59.3L307.4 50.4M305.5 52.1L317 55.2M318.4 60.9L312.2 50.4M299.3 51.3L317 52.8M317 62.4L317 50.4M293.1 50.4L317 50.4"/><path stroke="#17a446" d="M316.7 67.6L293.1 62.4M316.7 67.6L317 74.4M316.7 69L297.9 62.4M312 66.6L317 72M316.8 70.3L302.7 62.4M307.2 65.5L317 69.6M316.9 71.7L307.4 62.4M302.5 64.5L317 67.2M316.9 73L312.2 62.4M297.8 63.4L317 64.8M317 74.4L317 62.4M293.1 62.4L317 62.4"/><path stroke="#178d46" d="M310.2 80.6L293.1 74.4M310.2 80.6L317 86.3M311.6 81.7L297.9 74.3M306.8 79.4L317 83.9M312.9 82.9L302.7 74.4M303.4 78.1L317 81.5M314.3 84L307.4 74.4M299.9 76.9L317 79.1M315.6 85.2L312.2 74.4M296.5 75.6L317 76.7M317 86.3L317 74.4M293.1 74.4L317 74.4"/><path stroke="#001746" d="M269.8 146.1L269.2 134.1M269.8 146.1L293.1 146.1M274.5 146.1L274 134.1M269.7 143.7L293.1 143.7M279.1 146.1L278.8 134.1M269.6 141.3L293.1 141.3M283.8 146.1L283.5 134.1M269.4 138.9L293.1 138.9M288.4 146.1L288.3 134.1M269.3 136.5L293.1 136.5M293.1 146.1L293.1 134.1M269.2 134.1L293.1 134.1"/><path stroke="#177546" d="M304.6 93.6L293.1 86.3M304.6 93.6L317 98.2M307.1 94.6L297.9 86.3M302.3 92.2L317 95.9M309.6 95.5L302.7 86.3M300 90.7L317 93.5M312.1 96.4L307.4 86.3M297.7 89.2L317 91.1M314.5 97.3L312.2 86.3M295.4 87.8L317 88.7M317 98.2L317 86.3M293.1 86.3L317 86.3"/><path stroke="#175e46" d="M300.1 106.7L293.1 98.2M300.1 106.7L317 110.2M303.5 107.4L297.9 98.2M298.7 105L317 107.8M306.9 108.1L302.7 98.2M297.3 103.3L317 105.4M310.2 108.8L307.4 98.2M295.9 101.6L317 103M313.6 109.5L312.2 98.2M294.5 99.9L317 100.6M317 110.2L317 98.2M293.1 98.2L317 98.2"/><path stroke="#000046" d="M269.2 158L269.2 146.1M269.2 158L293.1 158M274 158L274 146.1M269.2 155.6L293.1 155.6M278.8 158L278.8 146.1M269.2 153.2L293.1 153.2M283.5 158L283.5 146.1M269.2 150.8L293.1 150.8M288.3 158L288.3 146.1M269.2 148.4L293.1 148.4M293.1 158L293.1 146.1M269.2 146.1L293.1 146.1"/><path stroke="#174646" d="M296.6 119.8L293.1 110.2M296.6 119.8L317 122.2M300.7 120.3L297.9 110.2M295.9 117.9L317 119.8M304.8 120.7L302.7 110.2M295.2 116L317 117.4M308.9 121.2L307.4 110.2M294.5 114L317 115M312.9 121.7L312.2 110.2M293.8 112.1L317 112.6M317 122.2L317 110.2M293.1 110.2L317 110.2"/><path stroke="#172f46" d="M294.3 132.9L293.1 122.1M294.3 132.9L317 134.1M298.8 133.2L297.9 122.1M294 130.8L317 131.7M303.4 133.4L302.7 122.1M293.8 128.6L317 129.3M307.9 133.6L307.4 122.1M293.6 126.5L317 126.9M312.5 133.9L312.2 122.2M293.3 124.3L317 124.5M317 134.1L317 122.2M293.1 122.1L317 122.2"/><path stroke="#171746" d="M293.1 146.1L293.1 134.1M293.1 146.1L317 146.1M297.9 146L297.9 134.1M293.1 143.7L317 143.7M302.7 146.1L302.7 134.1M293.1 141.3L317 141.3M307.4 146.1L307.4 134.1M293.1 138.9L317 138.9M312.2 146.1L312.2 134.1M293.1 136.5L317 136.5M317 146.1L317 134.1M293.1 134.1L317 134.1"/><path stroke="#170046" d="M293.1 159.2L293.1 146.1M293.1 159.2L317 158M297.9 159L297.9 146M293.1 156.6L317 155.6M302.7 158.7L302.7 146.1M293.1 153.9L317 153.2M307.4 158.5L307.4 146.1M293.1 151.3L317 150.8M312.2 158.2L312.2 146.1M293.1 148.7L317 148.4M317 158L317 146.1M293.1 146.1L317 146.1"/><path stroke="#2f0046" d="M317 162.7L317 146.1M317 162.7L340.9 158M321.8 161.7L321.8 146.1M317 159.4L340.9 155.6M326.6 160.8L326.6 146.1M317 156L340.9 153.2M331.3 159.9L331.3 146.1M317 152.7L340.9 150.8M336.1 158.9L336.1 146.1M317 149.4L340.9 148.4M340.9 158L340.9 146.1M317 146.1L340.9 146.1"/><path stroke="#2f1746" d="M316.4 148.4L317 134.1M316.4 148.4L340.9 146.1M321.3 147.9L321.8 134.1M316.5 145.5L340.9 143.7M326.2 147.5L326.6 134.1M316.6 142.7L340.9 141.3M331.1 147L331.3 134.1M316.8 139.8L340.9 138.9M336 146.5L336.1 134.1M316.9 137L340.9 136.5M340.9 146.1L340.9 134.1M317 134.1L340.9 134.1"/><path stroke="#2f2f46" d="M317 134.1L317 122.2M317 134.1L340.9 134.1M321.8 134.1L321.8 122.2M317 131.7L340.9 131.7M326.6 134.1L326.6 122.2M317 129.3L340.9 129.3M331.3 134.1L331.3 122.2M317 126.9L340.9 126.9M336.1 134.1L336.1 122.2M317 124.5L340.9 124.5M340.9 134.1L340.9 122.2M317 122.2L340.9 122.2"/><path stroke="#2f4646" d="M318.7 119.8L317 110.2M318.7 119.8L340.9 122.2M323.2 120.3L321.8 110.2M318.4 117.9L340.9 119.8M327.6 120.8L326.6 110.2M318 116L340.9 117.4M332 121.2L331.3 110.2M317.7 114.1L340.9 115M336.5 121.7L336.1 110.2M317.3 112.1L340.9 112.6M340.9 122.2L340.9 110.2M317 110.2L340.9 110.2"/><path stroke="#2f5e46" d="M321.6 105.6L317 98.2M321.6 105.6L340.9 110.2M325.5 106.5L321.8 98.2M320.7 104.1L340.9 107.8M329.3 107.4L326.6 98.2M319.8 102.7L340.9 105.4M333.2 108.4L331.3 98.2M318.8 101.2L340.9 103M337 109.3L336.1 98.2M317.9 99.7L340.9 100.6M340.9 110.2L340.9 98.2M317 98.2L340.9 98.2"/><path stroke="#2f7546" d="M325.5 91.4L317 86.3M325.5 91.4L340.9 98.2M328.6 92.8L321.8 86.3M323.8 90.4L340.9 95.9M331.7 94.2L326.6 86.3M322.1 89.4L340.9 93.5M334.8 95.5L331.3 86.3M320.4 88.3L340.9 91.1M337.8 96.9L336.1 86.3M318.7 87.3L340.9 88.7M340.9 98.2L340.9 86.3M317 86.3L340.9 86.3"/><path stroke="#2f8d46" d="M330.5 77.3L317 74.4M330.5 77.3L340.9 86.3M332.6 79.1L321.8 74.3M327.8 76.7L340.9 83.9M334.7 80.9L326.6 74.4M325.1 76.1L340.9 81.5M336.7 82.7L331.3 74.4M322.4 75.5L340.9 79.1M338.8 84.5L336.1 74.4M319.7 74.9L340.9 76.7M340.9 86.3L340.9 74.4M317 74.4L340.9 74.4"/><path stroke="#2fa446" d="M336.4 63.3L317 62.4M336.4 63.3L340.9 74.4M337.3 65.5L321.8 62.4M332.5 63.1L340.9 72M338.2 67.7L326.6 62.4M328.6 62.9L340.9 69.6M339.1 69.9L331.3 62.4M324.8 62.7L340.9 67.2M340 72.1L336.1 62.4M320.9 62.6L340.9 64.8M340.9 74.4L340.9 62.4M317 62.4L340.9 62.4"/><path stroke="#2fbc46" d="M343.2 49.3L317 50.4M343.2 49.3L340.9 62.4M342.7 51.9L321.8 50.4M337.9 49.5L340.9 60M342.3 54.5L326.6 50.4M332.7 49.8L340.9 57.6M341.8 57.2L331.3 50.5M327.5 50L340.9 55.2M341.4 59.8L336.1 50.5M322.2 50.2L340.9 52.8M340.9 62.4L340.9 50.5M317 50.4L340.9 50.5"/><path stroke="#2fd346" d="M350.8 35.4L317 38.5M350.8 35.4L340.9 50.5M348.8 38.4L321.8 38.5M344 36.1L340.9 48.1M346.8 41.4L326.6 38.5M337.3 36.7L340.9 45.7M344.8 44.4L331.3 38.5M330.5 37.3L340.9 43.3M342.9 47.4L336.1 38.5M323.8 37.9L340.9 40.9M340.9 50.5L340.9 38.5M317 38.5L340.9 38.5"/><path stroke="#460046" d="M340.9 168.3L340.9 146.1M340.9 168.3L364.8 158M345.7 166.2L345.7 146.1M340.9 163.9L364.8 155.6M350.5 164.2L350.5 146.1M340.9 159.4L364.8 153.2M355.2 162.1L355.2 146.1M340.9 155L364.8 150.8M360 160.1L360 146.1M340.9 150.5L364.8 148.4M364.8 158L364.8 146.1M340.9 146.1L364.8 146.1"/><path stroke="#461746" d="M339.8 152.9L340.9 134.1M339.8 152.9L364.8 146.1M344.8 151.5L345.7 134.1M340 149.1L364.8 143.7M349.8 150.2L350.5 134.1M340.2 145.4L364.8 141.3M354.8 148.8L355.2 134.1M340.4 141.6L364.8 138.9M359.8 147.4L360 134.1M340.7 137.9L364.8 136.5M364.8 146.1L364.8 134.1M340.9 134.1L364.8 134.1"/><path stroke="#462f46" d="M339.8 137.5L340.9 122.2M339.8 137.5L364.8 134.1M344.8 136.8L345.7 122.2M340 134.4L364.8 131.7M349.8 136.2L350.5 122.2M340.2 131.4L364.8 129.3M354.8 135.5L355.2 122.2M340.4 128.3L364.8 126.9M359.8 134.8L360 122.2M340.7 125.2L364.8 124.5M364.8 134.1L364.8 122.2M340.9 122.2L364.8 122.2"/><path stroke="#5e0046" d="M364.8 175.8L364.8 146.1M364.8 175.8L388.7 158M369.6 172.2L369.6 146.1M364.8 169.8L388.7 155.6M374.4 168.7L374.4 146.1M364.8 163.9L388.7 153.2M379.1 165.1L379.1 146.1M364.8 157.9L388.7 150.8M383.9 161.6L383.9 146.1M364.8 152L388.7 148.4M388.7 158L388.7 146.1M364.8 146.1L388.7 146.1"/><path stroke="#464646" d="M340.9 122.2L340.9 110.2M340.9 122.2L364.8 122.2M345.7 122.2L345.7 110.2M340.9 119.8L364.8 119.8M350.5 122.2L350.5 110.2M340.9 117.4L364.8 117.4M355.2 122.2L355.2 110.2M340.9 115L364.8 115M360 122.2L360 110.2M340.9 112.6L364.8 112.6M364.8 122.2L364.8 110.2M340.9 110.2L364.8 110.2"/><path stroke="#465e46" d="M343.1 106.8L340.9 98.2M343.1 106.8L364.8 110.2M347.5 107.5L345.7 98.2M342.7 105.1L364.8 107.8M351.8 108.2L350.5 98.2M342.2 103.4L364.8 105.4M356.1 108.9L355.2 98.2M341.8 101.7L364.8 103M360.5 109.5L360 98.2M341.3 100L364.8 100.6M364.8 110.2L364.8 98.2M340.9 98.2L364.8 98.2"/><path stroke="#5e1746" d="M363.1 159.4L364.8 134.1M363.1 159.4L388.7 146.1M368.2 156.7L369.6 134.1M363.5 154.3L388.7 143.7M373.4 154L374.4 134.1M363.8 149.3L388.7 141.3M378.5 151.4L379.1 134.1M364.1 144.2L388.7 138.9M383.6 148.7L383.9 134.1M364.5 139.2L388.7 136.5M388.7 146.1L388.7 134.1M364.8 134.1L388.7 134.1"/><path stroke="#750046" d="M388.7 184.7L388.7 146.1M388.7 184.7L412.6 158M393.5 179.4L393.5 146.1M388.7 177L412.6 155.6M398.3 174L398.3 146.1M388.7 169.3L412.6 153.2M403 168.7L403 146.1M388.7 161.5L412.6 150.8M407.8 163.3L407.8 146.1M388.7 153.8L412.6 148.4M412.6 158L412.6 146.1M388.7 146.1L412.6 146.1"/><path stroke="#467546" d="M346.5 91.6L340.9 86.3M346.5 91.6L364.8 98.2M350.1 92.9L345.7 86.3M345.4 90.5L364.8 95.9M353.8 94.2L350.5 86.3M344.2 89.5L364.8 93.5M357.5 95.6L355.2 86.3M343.1 88.4L364.8 91.1M361.1 96.9L360 86.3M342 87.4L364.8 88.7M364.8 98.2L364.8 86.3M340.9 86.3L364.8 86.3"/><path stroke="#468d46" d="M350.8 76.4L340.9 74.4M350.8 76.4L364.8 86.3M353.6 78.4L345.7 74.3M348.8 76L364.8 83.9M356.4 80.4L350.5 74.4M346.8 75.6L364.8 81.5M359.2 82.3L355.2 74.4M344.9 75.2L364.8 79.1M362 84.3L360 74.4M342.9 74.8L364.8 76.7M364.8 86.3L364.8 74.4M340.9 74.4L364.8 74.4"/><path stroke="#5e2f46" d="M362.6 142.9L364.8 122.2M362.6 142.9L388.7 134.1M367.8 141.2L369.6 122.2M363 138.8L388.7 131.7M373 139.4L374.4 122.2M363.5 134.6L388.7 129.3M378.3 137.6L379.1 122.2M363.9 130.5L388.7 126.9M383.5 135.9L383.9 122.2M364.4 126.3L388.7 124.5M388.7 134.1L388.7 122.2M364.8 122.2L388.7 122.2"/><path stroke="#8d0046" d="M412.6 194.9L412.6 146.1M412.6 194.9L436.5 158M417.4 187.5L417.4 146.1M412.6 185.1L436.5 155.6M422.2 180.1L422.2 146.1M412.6 175.4L436.5 153.2M426.9 172.8L426.9 146.1M412.6 165.6L436.5 150.8M431.7 165.4L431.7 146.1M412.6 155.8L436.5 148.4M436.5 158L436.5 146.1M412.6 146.1L436.5 146.1"/><path stroke="#46a446" d="M356.1 61.3L340.9 62.4M356.1 61.3L364.8 74.4M357.8 63.9L345.7 62.4M353.1 61.5L364.8 72M359.6 66.5L350.5 62.4M350 61.8L364.8 69.6M361.3 69.1L355.2 62.4M347 62L364.8 67.2M363.1 71.7L360 62.4M343.9 62.2L364.8 64.8M364.8 74.4L364.8 62.4M340.9 62.4L364.8 62.4"/><path stroke="#751746" d="M386.6 167.4L388.7 134.1M386.6 167.4L412.6 146.1M391.8 163.1L393.5 134.1M387 160.7L412.6 143.7M397 158.9L398.3 134.1M387.4 154.1L412.6 141.3M402.2 154.6L403 134.1M387.8 147.4L412.6 138.9M407.4 150.3L407.8 134.1M388.3 140.8L412.6 136.5M412.6 146.1L412.6 134.1M388.7 134.1L412.6 134.1"/><path stroke="#5e4646" d="M363.2 126.5L364.8 110.2M363.2 126.5L388.7 122.2M368.3 125.7L369.6 110.2M363.5 123.3L388.7 119.8M373.4 124.8L374.4 110.2M363.8 120L388.7 117.4M378.5 123.9L379.1 110.2M364.1 116.7L388.7 115M383.6 123L383.9 110.2M364.5 113.5L388.7 112.6M388.7 122.2L388.7 110.2M364.8 110.2L388.7 110.2"/><path stroke="#a40046" d="M436.5 206L436.5 146.1M436.5 206L460.4 158M441.3 196.4L441.3 146.1M436.5 194L460.4 155.6M446.1 186.8L446.1 146.1M436.5 182L460.4 153.2M450.8 177.2L450.8 146.1M436.5 170L460.4 150.8M455.6 167.6L455.6 146.1M436.5 158L460.4 148.4M460.4 158L460.4 146.1M436.5 146.1L460.4 146.1"/><path stroke="#46bc46" d="M362.3 46.4L340.9 50.5M362.3 46.4L364.8 62.4M362.8 49.6L345.7 50.5M358 47.2L364.8 60M363.3 52.8L350.5 50.5M353.7 48L364.8 57.6M363.8 56L355.2 50.5M349.5 48.8L364.8 55.2M364.3 59.2L360 50.5M345.2 49.6L364.8 52.8M364.8 62.4L364.8 50.5M340.9 50.5L364.8 50.5"/><path stroke="#bc0046" d="M460.4 217.7L460.4 146.1M460.4 217.7L484.3 158M465.2 205.8L465.2 146.1M460.4 203.4L484.3 155.6M470 193.8L470 146.1M460.4 189.1L484.3 153.2M474.7 181.9L474.7 146.1M460.4 174.7L484.3 150.8M479.5 169.9L479.5 146.1M460.4 160.4L484.3 148.4M484.3 158L484.3 146.1M460.4 146.1L484.3 146.1"/><path stroke="#46d346" d="M369.3 31.5L340.9 38.5M369.3 31.5L364.8 50.5M368.4 35.3L345.7 38.5M363.6 32.9L364.8 48.1M367.5 39.1L350.5 38.5M357.9 34.3L364.8 45.7M366.6 42.9L355.2 38.5M352.3 35.7L364.8 43.3M365.7 46.7L360 38.5M346.6 37.1L364.8 40.9M364.8 50.5L364.8 38.5M340.9 38.5L364.8 38.5"/><path stroke="#5e5e46" d="M364.8 110.2L364.8 98.2M364.8 110.2L388.7 110.2M369.6 110.2L369.6 98.2M364.8 107.8L388.7 107.8M374.4 110.2L374.4 98.2M364.8 105.4L388.7 105.4M379.1 110.2L379.1 98.2M364.8 103L388.7 103M383.9 110.2L383.9 98.2M364.8 100.6L388.7 100.6M388.7 110.2L388.7 98.2M364.8 98.2L388.7 98.2"/><path stroke="#752f46" d="M385.5 150.1L388.7 122.2M385.5 150.1L412.6 134.1M390.9 146.9L393.5 122.2M386.1 144.5L412.6 131.7M396.3 143.7L398.3 122.2M386.8 138.9L412.6 129.3M401.8 140.5L403 122.2M387.4 133.3L412.6 126.9M407.2 137.3L407.8 122.2M388.1 127.7L412.6 124.5M412.6 134.1L412.6 122.2M388.7 122.2L412.6 122.2"/><path stroke="#8d1746" d="M410 176.8L412.6 134.1M410 176.8L436.5 146.1M415.3 170.6L417.4 134.1M410.6 168.2L436.5 143.7M420.6 164.5L422.2 134.1M411.1 159.7L436.5 141.3M425.9 158.3L426.9 134.1M411.6 151.2L436.5 138.9M431.2 152.2L431.7 134.1M412.1 142.6L436.5 136.5M436.5 146.1L436.5 134.1M412.6 134.1L436.5 134.1"/><path stroke="#d30046" d="M484.3 229.9L484.3 146.1M484.3 229.9L508.2 158M489.1 215.6L489.1 146.1M484.3 213.2L508.2 155.6M493.9 201.2L493.9 146.1M484.3 196.4L508.2 153.2M498.6 186.8L498.6 146.1M484.3 179.6L508.2 150.8M503.4 172.4L503.4 146.1M484.3 162.8L508.2 148.4M508.2 158L508.2 146.1M484.3 146.1L508.2 146.1"/><path stroke="#5e7546" d="M367.5 93.9L364.8 86.3M367.5 93.9L388.7 98.2M371.7 94.8L369.6 86.3M367 92.4L388.7 95.9M376 95.7L374.4 86.3M366.4 90.9L388.7 93.5M380.2 96.5L379.1 86.3M365.9 89.4L388.7 91.1M384.5 97.4L383.9 86.3M365.3 87.8L388.7 88.7M388.7 98.2L388.7 86.3M364.8 86.3L388.7 86.3"/><path stroke="#a41746" d="M433.6 187.1L436.5 134.1M433.6 187.1L460.4 146.1M438.9 178.9L441.3 134.1M434.2 176.5L460.4 143.7M444.3 170.7L446.1 134.1M434.7 165.9L460.4 141.3M449.7 162.5L450.8 134.1M435.3 155.3L460.4 138.9M455 154.3L455.6 134.1M435.9 144.7L460.4 136.5M460.4 146.1L460.4 134.1M436.5 134.1L460.4 134.1"/><path stroke="#754646" d="M385.5 132.7L388.7 110.2M385.5 132.7L412.6 122.2M390.9 130.6L393.5 110.2M386.2 128.2L412.6 119.8M396.4 128.5L398.3 110.2M386.8 123.7L412.6 117.4M401.8 126.4L403 110.2M387.4 119.2L412.6 115M407.2 124.3L407.8 110.2M388.1 114.7L412.6 112.6M412.6 122.2L412.6 110.2M388.7 110.2L412.6 110.2"/><path stroke="#5e8d46" d="M371.2 77.7L364.8 74.4M371.2 77.7L388.7 86.3M374.7 79.5L369.6 74.3M369.9 77.1L388.7 83.9M378.2 81.2L374.4 74.4M368.6 76.4L388.7 81.5M381.7 82.9L379.1 74.4M367.4 75.7L388.7 79.1M385.2 84.6L383.9 74.4M366.1 75L388.7 76.7M388.7 86.3L388.7 74.4M364.8 74.4L388.7 74.4"/><path stroke="#8d2f46" d="M408.5 158.6L412.6 122.2M408.5 158.6L436.5 134.1M414.1 153.7L417.4 122.2M409.3 151.3L436.5 131.7M419.7 148.8L422.2 122.2M410.1 144L436.5 129.3M425.3 143.9L426.9 122.2M411 136.7L436.5 126.9M430.9 139L431.7 122.2M411.8 129.4L436.5 124.5M436.5 134.1L436.5 122.2M412.6 122.2L436.5 122.2"/><path stroke="#bc1746" d="M457.1 198.3L460.4 134.1M457.1 198.3L484.3 146.1M462.6 187.8L465.2 134.1M457.8 185.4L484.3 143.7M468 177.4L470 134.1M458.4 172.6L484.3 141.3M473.4 166.9L474.7 134.1M459.1 159.8L484.3 138.9M478.9 156.5L479.5 134.1M459.7 146.9L484.3 136.5M484.3 146.1L484.3 134.1M460.4 134.1L484.3 134.1"/><path stroke="#755e46" d="M386.6 115.5L388.7 98.2M386.6 115.5L412.6 110.2M391.8 114.4L393.5 98.2M387 112L412.6 107.8M397 113.4L398.3 98.2M387.4 108.6L412.6 105.4M402.2 112.3L403 98.2M387.9 105.1L412.6 103M407.4 111.3L407.8 98.2M388.3 101.7L412.6 100.6M412.6 110.2L412.6 98.2M388.7 98.2L412.6 98.2"/><path stroke="#5ea446" d="M375.9 61.7L364.8 62.4M375.9 61.7L388.7 74.4M378.4 64.2L369.6 62.4M373.7 61.8L388.7 72M381 66.8L374.4 62.4M371.4 62L388.7 69.6M383.6 69.3L379.1 62.4M369.2 62.1L388.7 67.2M386.1 71.8L383.9 62.4M367 62.3L388.7 64.8M388.7 74.4L388.7 62.4M364.8 62.4L388.7 62.4"/><path stroke="#a42f46" d="M431.6 168.2L436.5 122.2M431.6 168.2L460.4 134.1M437.4 161.4L441.3 122.2M432.6 159L460.4 131.7M443.1 154.6L446.1 122.1M433.6 149.8L460.4 129.3M448.9 147.8L450.8 122.1M434.5 140.6L460.4 126.9M454.6 140.9L455.6 122.1M435.5 131.4L460.4 124.5M460.4 134.1L460.4 122.1M436.5 122.2L460.4 122.1"/><path stroke="#d31746" d="M480.7 210L484.3 134.1M480.7 210L508.2 146.1M486.2 197.2L489.1 134.1M481.5 194.8L508.2 143.7M491.7 184.4L493.9 134.1M482.2 179.6L508.2 141.3M497.2 171.6L498.6 134.1M482.9 164.4L508.2 138.9M502.7 158.8L503.4 134.1M483.6 149.3L508.2 136.5M508.2 146.1L508.2 134.1M484.3 134.1L508.2 134.1"/><path stroke="#8d4646" d="M408 140.4L412.6 110.2M408 140.4L436.5 122.2M413.7 136.8L417.4 110.2M408.9 134.4L436.5 119.8M419.4 133.1L422.2 110.2M409.9 128.3L436.5 117.4M425.1 129.5L426.9 110.2M410.8 122.3L436.5 115M430.8 125.8L431.7 110.2M411.7 116.2L436.5 112.6M436.5 122.2L436.5 110.2M412.6 110.2L436.5 110.2"/><path stroke="#5ebc46" d="M381.4 45.8L364.8 50.5M381.4 45.8L388.7 62.4M382.9 49.1L369.6 50.5M378.1 46.7L388.7 60M384.3 52.4L374.4 50.5M374.8 47.6L388.7 57.6M385.8 55.7L379.1 50.5M371.5 48.6L388.7 55.2M387.2 59.1L383.9 50.5M368.1 49.5L388.7 52.8M388.7 62.4L388.7 50.5M364.8 50.5L388.7 50.5"/><path stroke="#757546" d="M388.7 98.2L388.7 86.3M388.7 98.2L412.6 98.2M393.5 98.2L393.5 86.3M388.7 95.9L412.6 95.9M398.3 98.2L398.3 86.3M388.7 93.5L412.6 93.5M403 98.2L403 86.3M388.7 91.1L412.6 91.1M407.8 98.2L407.8 86.3M388.7 88.7L412.6 88.7M412.6 98.2L412.6 86.3M388.7 86.3L412.6 86.3"/><path stroke="#5ed346" d="M387.8 30L364.8 38.5M387.8 30L388.7 50.5M388 34.1L369.6 38.5M383.2 31.7L388.7 48.1M388.2 38.2L374.4 38.5M378.6 33.4L388.7 45.7M388.4 42.3L379.1 38.5M374 35.1L388.7 43.3M388.5 46.4L383.9 38.5M369.4 36.8L388.7 40.9M388.7 50.5L388.7 38.5M364.8 38.5L388.7 38.5"/><path stroke="#bc2f46" d="M454.8 178.8L460.4 122.2M454.8 178.8L484.3 134.1M460.7 169.8L465.2 122.2M455.9 167.4L484.3 131.7M466.6 160.9L470 122.2M457.1 156.1L484.3 129.3M472.5 152L474.7 122.2M458.2 144.8L484.3 126.9M478.4 143L479.5 122.2M459.3 133.5L484.3 124.5M484.3 134.1L484.3 122.2M460.4 122.2L484.3 122.2"/><path stroke="#8d5e46" d="M408.6 122.3L412.6 98.2M408.6 122.3L436.5 110.2M414.1 119.9L417.4 98.2M409.4 117.5L436.5 107.8M419.7 117.5L422.2 98.2M410.2 112.7L436.5 105.4M425.3 115L426.9 98.2M411 107.9L436.5 103M430.9 112.6L431.7 98.2M411.8 103.1L436.5 100.6M436.5 110.2L436.5 98.2M412.6 98.2L436.5 98.2"/><path stroke="#758d46" d="M391.8 81.1L388.7 74.4M391.8 81.1L412.6 86.3M396 82.2L393.5 74.3M391.2 79.8L412.6 83.9M400.1 83.2L398.3 74.4M390.6 78.4L412.6 81.5M404.3 84.2L403 74.4M389.9 77.1L412.6 79.1M408.4 85.3L407.8 74.4M389.3 75.7L412.6 76.7M412.6 86.3L412.6 74.4M388.7 74.4L412.6 74.4"/><path stroke="#a44646" d="M430.7 149.4L436.5 110.2M430.7 149.4L460.4 122.2M436.6 143.9L441.3 110.2M431.8 141.5L460.4 119.8M442.6 138.5L446.1 110.2M433 133.7L460.4 117.4M448.5 133L450.8 110.2M434.2 125.9L460.4 115M454.5 127.6L455.6 110.2M435.3 118L460.4 112.6M460.4 122.2L460.4 110.2M436.5 110.2L460.4 110.2"/><path stroke="#d32f46" d="M478.1 189.9L484.3 122.2M478.1 189.9L508.2 134.1M484.1 178.7L489.1 122.2M479.3 176.4L508.2 131.7M490.1 167.6L493.9 122.2M480.6 162.8L508.2 129.3M496.2 156.4L498.6 122.2M481.8 149.3L508.2 126.9M502.2 145.3L503.4 122.2M483.1 135.7L508.2 124.5M508.2 134.1L508.2 122.2M484.3 122.2L508.2 122.2"/><path stroke="#75a446" d="M395.8 64.1L388.7 62.4M395.8 64.1L412.6 74.4M399.2 66.2L393.5 62.4M394.4 63.8L412.6 72M402.5 68.2L398.3 62.4M393 63.4L412.6 69.6M405.9 70.3L403 62.4M391.6 63.1L412.6 67.2M409.2 72.3L407.8 62.4M390.1 62.7L412.6 64.8M412.6 74.4L412.6 62.4M388.7 62.4L412.6 62.4"/><path stroke="#8d7546" d="M410.1 104.3L412.6 86.3M410.1 104.3L436.5 98.2M415.4 103.1L417.4 86.3M410.6 100.7L436.5 95.9M420.7 101.9L422.2 86.3M411.1 97.1L436.5 93.5M425.9 100.7L426.9 86.3M411.6 93.5L436.5 91.1M431.2 99.5L431.7 86.3M412.1 89.9L436.5 88.7M436.5 98.2L436.5 86.3M412.6 86.3L436.5 86.3"/><path stroke="#bc4646" d="M453.4 159.2L460.4 110.2M453.4 159.2L484.3 122.2M459.6 151.8L465.2 110.2M454.8 149.4L484.3 119.8M465.8 144.4L470 110.2M456.2 139.6L484.3 117.4M472 137L474.7 110.2M457.6 129.8L484.3 115M478.1 129.6L479.5 110.2M459 120L484.3 112.6M484.3 122.2L484.3 110.2M460.4 110.2L484.3 110.2"/><path stroke="#a45e46" d="M430.7 130.5L436.5 98.2M430.7 130.5L460.4 110.2M436.6 126.4L441.3 98.2M431.9 124L460.4 107.8M442.6 122.4L446.1 98.2M433 117.6L460.4 105.4M448.5 118.3L450.8 98.2M434.2 111.1L460.4 103M454.5 114.3L455.6 98.2M435.3 104.7L460.4 100.6M460.4 110.2L460.4 98.2M436.5 98.2L460.4 98.2"/><path stroke="#75bc46" d="M400.8 47.3L388.7 50.5M400.8 47.3L412.6 62.4M403.1 50.3L393.5 50.5M398.4 47.9L412.6 60M405.5 53.3L398.3 50.5M395.9 48.6L412.6 57.6M407.9 56.4L403 50.5M393.5 49.2L412.6 55.2M410.2 59.4L407.8 50.5M391.1 49.8L412.6 52.8M412.6 62.4L412.6 50.5M388.7 50.5L412.6 50.5"/><path stroke="#8d8d46" d="M412.6 86.3L412.6 74.4M412.6 86.3L436.5 86.3M417.4 86.3L417.4 74.3M412.6 83.9L436.5 83.9M422.2 86.3L422.2 74.4M412.6 81.5L436.5 81.5M426.9 86.3L426.9 74.4M412.6 79.1L436.5 79.1M431.7 86.3L431.7 74.4M412.6 76.7L436.5 76.7M436.5 86.3L436.5 74.4M412.6 74.4L436.5 74.4"/><path stroke="#75d346" d="M406.5 30.6L388.7 38.5M406.5 30.6L412.6 50.5M407.8 34.6L393.5 38.5M403 32.2L412.6 48.1M409 38.6L398.3 38.5M399.4 33.8L412.6 45.7M410.2 42.5L403 38.5M395.8 35.3L412.6 43.3M411.4 46.5L407.8 38.5M392.3 36.9L412.6 40.9M412.6 50.5L412.6 38.5M388.7 38.5L412.6 38.5"/><path stroke="#d34646" d="M476.4 169.8L484.3 110.2M476.4 169.8L508.2 122.2M482.7 160.3L489.1 110.2M477.9 157.9L508.2 119.8M489.1 150.8L493.9 110.2M479.5 146L508.2 117.4M495.5 141.2L498.6 110.2M481.1 134L508.2 115M501.8 131.7L503.4 110.2M482.7 122.1L508.2 112.6M508.2 122.2L508.2 110.2M484.3 110.2L508.2 110.2"/><path stroke="#a47546" d="M431.7 111.7L436.5 86.3M431.7 111.7L460.4 98.2M437.4 109L441.3 86.3M432.7 106.6L460.4 95.9M443.2 106.3L446.1 86.3M433.6 101.5L460.4 93.5M448.9 103.6L450.8 86.3M434.6 96.5L460.4 91.1M454.7 100.9L455.6 86.3M435.5 91.4L460.4 88.7M460.4 98.2L460.4 86.3M436.5 86.3L460.4 86.3"/><path stroke="#bc5e46" d="M453 139.7L460.4 98.2M453 139.7L484.3 110.2M459.3 133.8L465.2 98.2M454.5 131.4L484.3 107.8M465.5 127.9L470 98.2M456 123.1L484.3 105.4M471.8 122L474.7 98.2M457.4 114.8L484.3 103M478 116.1L479.5 98.2M458.9 106.5L484.3 100.6M484.3 110.2L484.3 98.2M460.4 98.2L484.3 98.2"/><path stroke="#8da446" d="M416 68.5L412.6 62.4M416 68.5L436.5 74.4M420.1 69.6L417.4 62.4M415.3 67.2L436.5 72M424.2 70.8L422.2 62.4M414.7 66L436.5 69.6M428.3 72L426.9 62.4M414 64.8L436.5 67.2M432.4 73.2L431.7 62.4M413.3 63.6L436.5 64.8M436.5 74.4L436.5 62.4M412.6 62.4L436.5 62.4"/><path stroke="#a48d46" d="M433.6 93L436.5 74.4M433.6 93L460.4 86.3M439 91.6L441.3 74.3M434.2 89.2L460.4 83.9M444.3 90.3L446.1 74.4M434.8 85.5L460.4 81.5M449.7 89L450.8 74.4M435.4 81.8L460.4 79.1M455 87.6L455.6 74.4M435.9 78.1L460.4 76.7M460.4 86.3L460.4 74.4M436.5 74.4L460.4 74.4"/><path stroke="#8dbc46" d="M420.4 50.8L412.6 50.5M420.4 50.8L436.5 62.4M423.6 53.1L417.4 50.5M418.8 50.7L436.5 60M426.8 55.4L422.2 50.5M417.3 50.6L436.5 57.6M430 57.7L426.9 50.5M415.7 50.6L436.5 55.2M433.3 60.1L431.7 50.5M414.2 50.5L436.5 52.8M436.5 62.4L436.5 50.5M412.6 50.5L436.5 50.5"/><path stroke="#d35e46" d="M475.5 149.7L484.3 98.2M475.5 149.7L508.2 110.2M482.1 141.8L489.1 98.2M477.3 139.4L508.2 107.8M488.6 133.9L493.9 98.2M479 129.1L508.2 105.4M495.1 126L498.6 98.2M480.8 118.8L508.2 103M501.7 118.1L503.4 98.2M482.5 108.5L508.2 100.6M508.2 110.2L508.2 98.2M484.3 98.2L508.2 98.2"/><path stroke="#bc7546" d="M453.5 120.2L460.4 86.3M453.5 120.2L484.3 98.2M459.7 115.8L465.2 86.3M454.9 113.4L484.3 95.9M465.8 111.4L470 86.3M456.3 106.7L484.3 93.5M472 107L474.7 86.3M457.7 99.9L484.3 91.1M478.1 102.6L479.5 86.3M459 93.1L484.3 88.7M484.3 98.2L484.3 86.3M460.4 86.3L484.3 86.3"/><path stroke="#8dd346" d="M425.5 33.2L412.6 38.5M425.5 33.2L436.5 50.5M427.7 36.7L417.4 38.5M422.9 34.3L436.5 48.1M429.9 40.1L422.2 38.5M420.3 35.3L436.5 45.7M432.1 43.6L426.9 38.5M417.8 36.4L436.5 43.3M434.3 47L431.7 38.5M415.2 37.4L436.5 40.9M436.5 50.5L436.5 38.5M412.6 38.5L436.5 38.5"/><path stroke="#a4a446" d="M436.5 74.4L436.5 62.4M436.5 74.4L460.4 74.4M441.3 74.3L441.3 62.4M436.5 72L460.4 72M446.1 74.4L446.1 62.4M436.5 69.6L460.4 69.6M450.8 74.4L450.8 62.4M436.5 67.2L460.4 67.2M455.6 74.4L455.6 62.4M436.5 64.8L460.4 64.8M460.4 74.4L460.4 62.4M436.5 62.4L460.4 62.4"/><path stroke="#bc8d46" d="M454.9 100.8L460.4 74.4M454.9 100.8L484.3 86.3M460.8 97.9L465.2 74.4M456 95.5L484.3 83.9M466.7 95L470 74.4M457.1 90.2L484.3 81.5M472.6 92.1L474.7 74.4M458.2 84.9L484.3 79.1M478.4 89.2L479.5 74.4M459.3 79.6L484.3 76.7M484.3 86.3L484.3 74.4M460.4 74.4L484.3 74.4"/><path stroke="#d37546" d="M475.6 129.7L484.3 86.3M475.6 129.7L508.2 98.2M482.1 123.4L489.1 86.3M477.3 121L508.2 95.9M488.6 117.1L493.9 86.3M479.1 112.3L508.2 93.5M495.1 110.8L498.6 86.3M480.8 103.7L508.2 91.1M501.7 104.5L503.4 86.3M482.6 95L508.2 88.7M508.2 98.2L508.2 86.3M484.3 86.3L508.2 86.3"/><path stroke="#a4bc46" d="M440.2 55.9L436.5 50.5M440.2 55.9L460.4 62.4M444.3 57.2L441.3 50.5M439.5 54.8L460.4 60M448.3 58.5L446.1 50.5M438.7 53.7L460.4 57.6M452.3 59.8L450.8 50.5M438 52.6L460.4 55.2M456.4 61.1L455.6 50.5M437.2 51.5L460.4 52.8M460.4 62.4L460.4 50.5M436.5 50.5L460.4 50.5"/><path stroke="#bca446" d="M457.2 81.6L460.4 62.4M457.2 81.6L484.3 74.4M462.7 80.1L465.2 62.4M457.9 77.7L484.3 72M468.1 78.7L470 62.4M458.5 73.9L484.3 69.6M473.5 77.2L474.7 62.4M459.1 70.1L484.3 67.2M478.9 75.8L479.5 62.4M459.8 66.2L484.3 64.8M484.3 74.4L484.3 62.4M460.4 62.4L484.3 62.4"/><path stroke="#d38d46" d="M476.5 109.7L484.3 74.4M476.5 109.7L508.2 86.3M482.8 105L489.1 74.3M478.1 102.6L508.2 83.9M489.2 100.3L493.9 74.4M479.6 95.6L508.2 81.5M495.5 95.7L498.6 74.4M481.2 88.5L508.2 79.1M501.9 91L503.4 74.4M482.7 81.4L508.2 76.7M508.2 86.3L508.2 74.4M484.3 74.4L508.2 74.4"/><path stroke="#a4d346" d="M444.8 37.6L436.5 38.5M444.8 37.6L460.4 50.5M447.9 40.2L441.3 38.5M443.1 37.8L460.4 48.1M451 42.7L446.1 38.5M441.5 38L460.4 45.7M454.1 45.3L450.8 38.5M439.8 38.1L460.4 43.3M457.3 47.9L455.6 38.5M438.2 38.3L460.4 40.9M460.4 50.5L460.4 38.5M436.5 38.5L460.4 38.5"/><path stroke="#bcbc46" d="M460.4 62.4L460.4 50.5M460.4 62.4L484.3 62.4M465.2 62.4L465.2 50.5M460.4 60L484.3 60M470 62.4L470 50.5M460.4 57.6L484.3 57.6M474.7 62.4L474.7 50.4M460.4 55.2L484.3 55.2M479.5 62.4L479.5 50.4M460.4 52.8L484.3 52.8M484.3 62.4L484.3 50.4M460.4 50.5L484.3 50.4"/><path stroke="#d3a446" d="M478.3 89.8L484.3 62.4M478.3 89.8L508.2 74.4M484.3 86.7L489.1 62.4M479.5 84.3L508.2 72M490.2 83.6L493.9 62.4M480.7 78.9L508.2 69.6M496.2 80.5L498.6 62.4M481.9 73.4L508.2 67.2M502.2 77.4L503.4 62.4M483.1 67.9L508.2 64.8M508.2 74.4L508.2 62.4M484.3 62.4L508.2 62.4"/><path stroke="#bcd346" d="M464.4 43.4L460.4 38.5M464.4 43.4L484.3 50.4M468.3 44.8L465.2 38.5M463.6 42.4L484.3 48.1M472.3 46.2L470 38.5M462.8 41.4L484.3 45.7M476.3 47.6L474.7 38.5M462 40.5L484.3 43.3M480.3 49L479.5 38.5M461.2 39.5L484.3 40.9M484.3 50.4L484.3 38.5M460.4 38.5L484.3 38.5"/><path stroke="#d3bc46" d="M480.9 70.1L484.3 50.4M480.9 70.1L508.2 62.4M486.4 68.5L489.1 50.4M481.6 66.1L508.2 60M491.8 67L493.9 50.4M482.3 62.2L508.2 57.6M497.3 65.5L498.6 50.5M482.9 58.3L508.2 55.2M502.7 63.9L503.4 50.5M483.6 54.4L508.2 52.8M508.2 62.4L508.2 50.5M484.3 50.4L508.2 50.5"/><path stroke="#d3d346" d="M484.3 50.4L484.3 38.5M484.3 50.4L508.2 50.5M489.1 50.4L489.1 38.5M484.3 48.1L508.2 48.1M493.9 50.4L493.9 38.5M484.3 45.7L508.2 45.7M498.6 50.5L498.6 38.5M484.3 43.3L508.2 43.3M503.4 50.5L503.4 38.5M484.3 40.9L508.2 40.9M508.2 50.5L508.2 38.5M484.3 38.5L508.2 38.5"/></g><path d="M269.2 158L508.2 158L508.2 38.5L269.2 38.5ZM269.2 158L293.1 158L293.1 146.1L269.2 146.1ZM269.8 146.1L293.1 146.1L293.1 134.1L269.2 134.1ZM271.6 134.1L293.1 134.1L293.1 122.1L269.2 122.2ZM274.5 122.2L293.1 122.2L293.1 110.2L269.2 110.2ZM278.6 110.2L293.1 110.2L293.1 98.2L269.2 98.2ZM283.7 98.2L293.1 98.2L293.1 86.3L269.2 86.3ZM289.8 86.3L293.1 86.3L293.1 74.4L269.2 74.4ZM296.8 74.4L293.1 74.4L293.1 62.4L269.2 62.4ZM304.7 62.4L293.1 62.4L293.1 50.4L269.2 50.5ZM313.3 50.5L293.1 50.4L293.1 38.5L269.2 38.5ZM293.1 159.2L317 158L317 146.1L293.1 146.1ZM293.1 146.1L317 146.1L317 134.1L293.1 134.1ZM294.3 132.9L317 134.1L317 122.2L293.1 122.1ZM296.6 119.8L317 122.2L317 110.2L293.1 110.2ZM300.1 106.7L317 110.2L317 98.2L293.1 98.2ZM304.6 93.6L317 98.2L317 86.3L293.1 86.3ZM310.2 80.6L317 86.3L317 74.4L293.1 74.4ZM316.7 67.6L317 74.4L317 62.4L293.1 62.4ZM324 54.7L317 62.4L317 50.4L293.1 50.4ZM332.2 41.8L317 50.4L317 38.5L293.1 38.5ZM317 162.7L340.9 158L340.9 146.1L317 146.1ZM316.4 148.4L340.9 146.1L340.9 134.1L317 134.1ZM317 134.1L340.9 134.1L340.9 122.2L317 122.2ZM318.7 119.8L340.9 122.2L340.9 110.2L317 110.2ZM321.6 105.6L340.9 110.2L340.9 98.2L317 98.2ZM325.5 91.4L340.9 98.2L340.9 86.3L317 86.3ZM330.5 77.3L340.9 86.3L340.9 74.4L317 74.4ZM336.4 63.3L340.9 74.4L340.9 62.4L317 62.4ZM343.2 49.3L340.9 62.4L340.9 50.5L317 50.4ZM350.8 35.4L340.9 50.5L340.9 38.5L317 38.5ZM340.9 168.3L364.8 158L364.8 146.1L340.9 146.1ZM339.8 152.9L364.8 146.1L364.8 134.1L340.9 134.1ZM339.8 137.5L364.8 134.1L364.8 122.2L340.9 122.2ZM340.9 122.2L364.8 122.2L364.8 110.2L340.9 110.2ZM343.1 106.8L364.8 110.2L364.8 98.2L340.9 98.2ZM346.5 91.6L364.8 98.2L364.8 86.3L340.9 86.3ZM350.8 76.4L364.8 86.3L364.8 74.4L340.9 74.4ZM356.1 61.3L364.8 74.4L364.8 62.4L340.9 62.4ZM362.3 46.4L364.8 62.4L364.8 50.5L340.9 50.5ZM369.3 31.5L364.8 50.5L364.8 38.5L340.9 38.5ZM364.8 175.8L388.7 158L388.7 146.1L364.8 146.1ZM363.1 159.4L388.7 146.1L388.7 134.1L364.8 134.1ZM362.6 142.9L388.7 134.1L388.7 122.2L364.8 122.2ZM363.2 126.5L388.7 122.2L388.7 110.2L364.8 110.2ZM364.8 110.2L388.7 110.2L388.7 98.2L364.8 98.2ZM367.5 93.9L388.7 98.2L388.7 86.3L364.8 86.3ZM371.2 77.7L388.7 86.3L388.7 74.4L364.8 74.4ZM375.9 61.7L388.7 74.4L388.7 62.4L364.8 62.4ZM381.4 45.8L388.7 62.4L388.7 50.5L364.8 50.5ZM387.8 30L388.7 50.5L388.7 38.5L364.8 38.5ZM388.7 184.7L412.6 158L412.6 146.1L388.7 146.1ZM386.6 167.4L412.6 146.1L412.6 134.1L388.7 134.1ZM385.5 150.1L412.6 134.1L412.6 122.2L388.7 122.2ZM385.5 132.7L412.6 122.2L412.6 110.2L388.7 110.2ZM386.6 115.5L412.6 110.2L412.6 98.2L388.7 98.2ZM388.7 98.2L412.6 98.2L412.6 86.3L388.7 86.3ZM391.8 81.1L412.6 86.3L412.6 74.4L388.7 74.4ZM395.8 64.1L412.6 74.4L412.6 62.4L388.7 62.4ZM400.8 47.3L412.6 62.4L412.6 50.5L388.7 50.5ZM406.5 30.6L412.6 50.5L412.6 38.5L388.7 38.5ZM412.6 194.9L436.5 158L436.5 146.1L412.6 146.1ZM410 176.8L436.5 146.1L436.5 134.1L412.6 134.1ZM408.5 158.6L436.5 134.1L436.5 122.2L412.6 122.2ZM408 140.4L436.5 122.2L436.5 110.2L412.6 110.2ZM408.6 122.3L436.5 110.2L436.5 98.2L412.6 98.2ZM410.1 104.3L436.5 98.2L436.5 86.3L412.6 86.3ZM412.6 86.3L436.5 86.3L436.5 74.4L412.6 74.4ZM416 68.5L436.5 74.4L436.5 62.4L412.6 62.4ZM420.4 50.8L436.5 62.4L436.5 50.5L412.6 50.5ZM425.5 33.2L436.5 50.5L436.5 38.5L412.6 38.5ZM436.5 206L460.4 158L460.4 146.1L436.5 146.1ZM433.6 187.1L460.4 146.1L460.4 134.1L436.5 134.1ZM431.6 168.2L460.4 134.1L460.4 122.1L436.5 122.2ZM430.7 149.4L460.4 122.2L460.4 110.2L436.5 110.2ZM430.7 130.5L460.4 110.2L460.4 98.2L436.5 98.2ZM431.7 111.7L460.4 98.2L460.4 86.3L436.5 86.3ZM433.6 93L460.4 86.3L460.4 74.4L436.5 74.4ZM436.5 74.4L460.4 74.4L460.4 62.4L436.5 62.4ZM440.2 55.9L460.4 62.4L460.4 50.5L436.5 50.5ZM444.8 37.6L460.4 50.5L460.4 38.5L436.5 38.5ZM460.4 217.7L484.3 158L484.3 146.1L460.4 146.1ZM457.1 198.3L484.3 146.1L484.3 134.1L460.4 134.1ZM454.8 178.8L484.3 134.1L484.3 122.2L460.4 122.2ZM453.4 159.2L484.3 122.2L484.3 110.2L460.4 110.2ZM453 139.7L484.3 110.2L484.3 98.2L460.4 98.2ZM453.5 120.2L484.3 98.2L484.3 86.3L460.4 86.3ZM454.9 100.8L484.3 86.3L484.3 74.4L460.4 74.4ZM457.2 81.6L484.3 74.4L484.3 62.4L460.4 62.4ZM460.4 62.4L484.3 62.4L484.3 50.4L460.4 50.5ZM464.4 43.4L484.3 50.4L484.3 38.5L460.4 38.5ZM484.3 229.9L508.2 158L508.2 146.1L484.3 146.1ZM480.7 210L508.2 146.1L508.2 134.1L484.3 134.1ZM478.1 189.9L508.2 134.1L508.2 122.2L484.3 122.2ZM476.4 169.8L508.2 122.2L508.2 110.2L484.3 110.2ZM475.5 149.7L508.2 110.2L508.2 98.2L484.3 98.2ZM475.6 129.7L508.2 98.2L508.2 86.3L484.3 86.3ZM476.5 109.7L508.2 86.3L508.2 74.4L484.3 74.4ZM478.3 89.8L508.2 74.4L508.2 62.4L484.3 62.4ZM480.9 70.1L508.2 62.4L508.2 50.5L484.3 50.4ZM484.3 50.4L508.2 50.5L508.2 38.5L484.3 38.5Z" fill="none" stroke="#333" stroke-opacity="0.3" stroke-width="0.8"/><rect x="269.7" y="38.5" width="239" height="119.5" fill="none" stroke="#555" stroke-opacity=".8"/></g><g clip-path="url(#c_persp)"><rect x="539" y="29" width="300" height="201" fill="url(#gv)"/><rect x="539" y="29" width="300" height="201" fill="url(#gh)" mask="url(#mt)"/><g class="vpersp"><path fill="#c9c943" stroke="#b5b53c" d="M704.5 69.9L707.4 68.7L705.8 67.1L702.9 68.3Z"/><path fill="#c9c943" stroke="#b5b53c" d="M706.1 71.5L709 70.3L707.4 68.7L704.5 69.9Z"/><path fill="#c9c943" stroke="#b5b53c" d="M701.4 71.1L704.5 69.9L702.9 68.3L699.9 69.6Z"/><path fill="#c9c943" stroke="#b5b53c" d="M707.7 73.1L710.6 72L709 70.3L706.1 71.5Z"/><path fill="#c9c943" stroke="#b5b53c" d="M703 72.7L706.1 71.5L704.5 69.9L701.4 71.1Z"/><path fill="#999e99" style="fill-opacity:0.35" d="M701.5 75.5L710.6 72L705.8 67.1L696.7 70.9Z"/><path fill="#bba63e" stroke="#a89538" d="M709.6 74.1L712.3 73.7L710.6 72L707.7 73.1Z"/><path fill="#c9c943" stroke="#b5b53c" d="M698.3 72.4L701.4 71.1L699.9 69.6L696.7 70.9Z"/><path fill="#c9c943" stroke="#b5b53c" d="M704.6 74.3L707.7 73.1L706.1 71.5L703 72.7Z"/><path fill="#ad9a3a" stroke="#9c8a34" d="M711.5 75.1L714 75.4L712.3 73.7L709.6 74.1Z"/><path fill="#c9c943" stroke="#b5b53c" d="M699.9 73.9L703 72.7L701.4 71.1L698.3 72.4Z"/><path fill="#aa9739" stroke="#998833" d="M706.7 74.5L709.6 74.1L707.7 73.1L704.6 74.3Z"/><path fill="#bfd647" stroke="#acc140" d="M694.9 74.4L698.3 72.4L696.7 70.9L693.5 72.2Z"/><path fill="#9f8d35" stroke="#8f7f30" d="M713.4 76.2L715.7 77.2L714 75.4L711.5 75.1Z"/><path fill="#c9c943" stroke="#b5b53c" d="M701.5 75.5L704.6 74.3L703 72.7L699.9 73.9Z"/><path fill="#999e99" style="fill-opacity:0.35" d="M706.6 80.3L715.7 77.2L710.6 72L701.5 75.5Z"/><path fill="#c7e04b" stroke="#b3ca43" d="M696.4 76.6L699.9 73.9L698.3 72.4L694.9 74.4Z"/><path fill="#ab8539" stroke="#9a7833" d="M715 78.6L717.4 79L715.7 77.2L712.7 78.2Z"/><path fill="#9d8b34" stroke="#8d7d2f" d="M708.8 74.8L711.5 75.1L709.6 74.1L706.7 74.5Z"/><path fill="#cae34c" stroke="#b6cc44" d="M691.5 76.4L694.9 74.4L693.5 72.2L690.2 73.6Z"/><path fill="#988733" stroke="#897a2e" d="M703.8 75L706.7 74.5L704.6 74.3L701.5 75.5Z"/><path fill="#cee74d" stroke="#b9d045" d="M697.9 78.8L701.5 75.5L699.9 73.9L696.4 76.6Z"/><path fill="#d2ed4f" stroke="#bdd547" d="M692.8 79.3L696.4 76.6L694.9 74.4L691.5 76.4Z"/><path fill="#907030" stroke="#81642b" d="M717.3 79L719.2 80.8L717.4 79L715 78.6Z"/><path fill="#908030" stroke="#81732b" d="M711 75.1L713.4 76.2L711.5 75.1L708.8 74.8Z"/><path fill="#d9f451" stroke="#c3dc49" d="M694.2 82.1L697.9 78.8L696.4 76.6L692.8 79.3Z"/><path fill="#999e99" style="fill-opacity:0.35" d="M691.5 79.2L701.5 75.5L696.7 70.9L686.8 75Z"/><path fill="#8f6f30" stroke="#81642b" d="M712.4 78.2L715 78.6L712.7 78.2L709.7 79.2Z"/><path fill="#b2b243" stroke="#a0a03c" d="M699.9 78.2L703.2 77L701.5 75.5L698.3 76.7Z"/><path fill="#d1eb4e" stroke="#bcd447" d="M688 78.5L691.5 76.4L690.2 73.6L686.8 75Z"/><path fill="#908030" stroke="#81732b" d="M706.1 74.5L708.8 74.8L706.7 74.5L703.8 75Z"/><path fill="#d9f451" stroke="#c3dc49" d="M689.2 82L692.8 79.3L691.5 76.4L688 78.5Z"/><path fill="#a48037" stroke="#947331" d="M719.7 79.4L721 82.6L719.2 80.8L717.3 79Z"/><path fill="#999e99" style="fill-opacity:0.35" d="M711.9 85.4L721 82.6L715.7 77.2L706.6 80.3Z"/><path fill="#e0fc54" stroke="#c9e34c" d="M690.4 85.6L694.2 82.1L692.8 79.3L689.2 82Z"/><path fill="#9b6734" stroke="#8c5d2f" d="M720.8 83.3L722.8 84.5L721 82.6L718.1 83.5Z"/><path fill="#b2b243" stroke="#a0a03c" d="M701.6 79.8L704.8 78.6L703.2 77L699.9 78.2Z"/><path fill="#b2b243" stroke="#a0a03c" d="M696.6 79.4L699.9 78.2L698.3 76.7L694.9 77.9Z"/><path fill="#a68137" stroke="#957432" d="M715.3 77.1L717.3 79L715 78.6L712.4 78.2Z"/><path fill="#a47f37" stroke="#937331" d="M709.8 77.7L712.4 78.2L709.7 79.2L706.6 80.3Z"/><path fill="#b2b243" stroke="#a0a03c" d="M703.3 81.4L706.6 80.3L704.8 78.6L701.6 79.8Z"/><path fill="#9c8a34" stroke="#8c7c2f" d="M708.5 74L711 75.1L708.8 74.8L706.1 74.5Z"/><path fill="#b0e34c" stroke="#9fcc44" d="M684.6 79.3L688.3 76.4L686.8 75L683.2 76.5Z"/><path fill="#a87038" stroke="#976532" d="M723.6 83.1L724.7 86.4L722.8 84.5L720.8 83.3Z"/><path fill="#999e99" style="fill-opacity:0.35" d="M696.5 83.7L706.6 80.3L701.5 75.5L691.5 79.2Z"/><path fill="#b2b243" stroke="#a0a03c" d="M698.3 80.9L701.6 79.8L699.9 78.2L696.6 79.4Z"/><path fill="#bbf050" stroke="#a8d848" d="M686 82.1L689.9 77.8L688.3 76.4L684.6 79.3Z"/><path fill="#a4903e" stroke="#948137" d="M705.3 82.3L708.3 81.9L706.6 80.3L703.3 81.4Z"/><path fill="#a36d36" stroke="#936231" d="M718.6 82L720.8 83.3L718.1 83.5L715 84.4Z"/><path fill="#b2b243" stroke="#a0a03c" d="M693.1 80.7L696.6 79.4L694.9 77.9L691.5 79.2Z"/><path fill="#999e99" style="fill-opacity:0.35" d="M717.5 90.7L726.6 88.4L721 82.6L711.9 85.4Z"/><path fill="#bff652" stroke="#acdd4a" d="M687.5 85L691.5 79.2L689.9 77.8L686 82.1Z"/><path fill="#bdf351" stroke="#aadb49" d="M680.9 82.3L684.6 79.3L683.2 76.5L679.6 78Z"/><path fill="#ba903e" stroke="#a78238" d="M718.3 76L719.7 79.4L717.3 79L715.3 77.1Z"/><path fill="#b2b243" stroke="#a0a03c" d="M700 82.5L703.3 81.4L701.6 79.8L698.3 80.9Z"/><path fill="#c08040" stroke="#ad733a" d="M726.5 82.9L726.6 88.4L724.7 86.4L723.6 83.1Z"/><path fill="#c7ff55" stroke="#b3e74d" d="M682.1 86.5L686 82.1L684.6 79.3L680.9 82.3Z"/><path fill="#cdff58" stroke="#b8ed4f" d="M683.4 90.8L687.5 85L686 82.1L682.1 86.5Z"/><path fill="#915030" stroke="#82482b" d="M727 88.3L728.6 90.4L726.6 88.4L723.7 89.1Z"/><path fill="#988539" stroke="#897833" d="M707.3 83.2L710.1 83.6L708.3 81.9L705.3 82.3Z"/><path fill="#b68e3d" stroke="#a48037" d="M713.2 75.1L715.3 77.1L712.4 78.2L709.8 77.7Z"/><path fill="#ceff58" stroke="#b9ee4f" d="M679.4 96.5L683.4 90.8L682.1 86.5L678.2 91Z"/><path fill="#b2b243" stroke="#a0a03c" d="M694.8 82.2L698.3 80.9L696.6 79.4L693.1 80.7Z"/><path fill="#c8ff56" stroke="#b4e74d" d="M678.2 91L682.1 86.5L680.9 82.3L677 85.3Z"/><path fill="#938137" stroke="#847432" d="M702.1 82.6L705.3 82.3L703.3 81.4L700 82.5Z"/><path fill="#999e99" style="fill-opacity:0.35" d="M680.5 83.4L691.5 79.2L686.8 75L675.8 79.6Z"/><path fill="#bff652" stroke="#acdd4a" d="M677 85.3L680.9 82.3L679.6 78L675.8 79.6Z"/><path fill="#a7be47" stroke="#96ab40" d="M689.5 82.7L693.1 80.7L691.5 79.2L688 80.6Z"/><path fill="#b4783c" stroke="#a26c36" d="M716.4 80.7L718.6 82L715 84.4L711.9 85.4Z"/><path fill="#8b7a34" stroke="#7d6e2f" d="M709.3 84.1L711.9 85.4L710.1 83.6L707.3 83.2Z"/><path fill="#c08040" stroke="#ad733a" d="M722.4 79.5L723.6 83.1L720.8 83.3L718.6 82Z"/><path fill="#b1b143" stroke="#a0a03c" d="M696.5 83.7L700 82.5L698.3 80.9L694.8 82.2Z"/><path fill="#bd693f" stroke="#aa5f39" d="M730.4 87.5L730.5 92.4L728.6 90.4L727 88.3Z"/><path fill="#999e99" style="fill-opacity:0.35" d="M701.8 88.3L711.9 85.4L706.6 80.3L696.5 83.7Z"/><path fill="#aec74a" stroke="#9cb343" d="M691 84.9L694.8 82.2L693.1 80.7L689.5 82.7Z"/><path fill="#957038" stroke="#866532" d="M711 86.6L713.7 87.1L711.9 85.4L708.6 86.3Z"/><path fill="#b1623b" stroke="#9f5835" d="M725.3 86.2L727 88.3L723.7 89.1L720.6 89.9Z"/><path fill="#887733" stroke="#7a6b2e" d="M704.3 82.7L707.3 83.2L705.3 82.3L702.1 82.6Z"/><path fill="#999e99" style="fill-opacity:0.35" d="M723.5 96.4L732.5 94.5L726.6 88.4L717.5 90.7Z"/><path fill="#c79b42" stroke="#b38b3c" d="M716.7 72.3L718.3 76L715.3 77.1L713.2 75.1Z"/><path fill="#b2cb4c" stroke="#a0b744" d="M685.7 84.8L689.5 82.7L688 80.6L684.3 82Z"/><path fill="#837231" stroke="#76672c" d="M698.8 83L702.1 82.6L700 82.5L696.5 83.7Z"/><path fill="#b4cd4d" stroke="#a2b945" d="M692.6 87.1L696.5 83.7L694.8 82.2L691 84.9Z"/><path fill="#d37546" stroke="#be6a3f" d="M734 86.6L732.5 94.5L730.5 92.4L730.4 87.5Z"/><path fill="#9f4735" stroke="#8f4030" d="M733.6 93.7L734.6 96.6L732.5 94.5L729.6 95.1Z"/><path fill="#9eed4f" stroke="#8ed647" d="M673.4 84.8L677.3 80.8L675.8 79.6L671.9 81.2Z"/><path fill="#806030" stroke="#73562b" d="M713.4 86.8L715.6 88.9L713.7 87.1L711 86.6Z"/><path fill="#b9d34f" stroke="#a6be47" d="M687.1 87.7L691 84.9L689.5 82.7L685.7 84.8Z"/><path fill="#d58e47" stroke="#c08040" d="M726.4 76.9L726.5 82.9L723.6 83.1L722.4 79.5Z"/><path fill="#817130" stroke="#74652b" d="M706.6 82.8L709.3 84.1L707.3 83.2L704.3 82.7Z"/><path fill="#a6f953" stroke="#96e04b" d="M674.9 88.3L678.9 82.1L677.3 80.8L673.4 84.8Z"/><path fill="#999e99" style="fill-opacity:0.35" d="M685.4 87.4L696.5 83.7L691.5 79.2L680.5 83.4Z"/><path fill="#beda52" stroke="#abc449" d="M688.6 90.7L692.6 87.1L691 84.9L687.1 87.7Z"/><path fill="#846332" stroke="#77592d" d="M708.1 86L711 86.6L708.6 86.3L705.3 87.3Z"/><path fill="#b1ff59" stroke="#9fef50" d="M668.4 108.6L672.4 100.3L670.9 94.5L666.9 100.8Z"/><path fill="#9b9b42" stroke="#8b8b3c" d="M694.7 86.4L698.2 85.2L696.5 83.7L692.9 84.9Z"/><path fill="#ca8743" stroke="#b6793d" d="M721.1 75.7L722.4 79.5L718.6 82L716.4 80.7Z"/><path fill="#b3ff59" stroke="#a1f150" d="M672.4 100.3L676.4 91.9L674.9 88.3L670.9 94.5Z"/><path fill="#b8d34f" stroke="#a6be47" d="M681.8 87L685.7 84.8L684.3 82L680.5 83.4Z"/><path fill="#857432" stroke="#77682d" d="M701.2 82.2L704.3 82.7L702.1 82.6L698.8 83Z"/><path fill="#b0ff58" stroke="#9fee4f" d="M670.9 94.5L674.9 88.3L673.4 84.8L669.4 88.7Z"/><path fill="#a6f953" stroke="#95e04b" d="M676.4 91.9L680.5 83.4L678.9 82.1L674.9 88.3Z"/><path fill="#bd693f" stroke="#aa5e39" d="M723.6 83.9L725.3 86.2L720.6 89.9L717.5 90.7Z"/><path fill="#946f38" stroke="#856432" d="M715.9 87.1L717.5 90.7L715.6 88.9L713.4 86.8Z"/><path fill="#a8fb54" stroke="#97e24b" d="M669.4 88.7L673.4 84.8L671.9 81.2L667.9 82.9Z"/><path fill="#cf5c45" stroke="#ba533e" d="M737.8 92.2L736.7 98.7L734.6 96.6L733.6 93.7Z"/><path fill="#999e99" style="fill-opacity:0.35" d="M707.4 93.3L717.5 90.7L711.9 85.4L701.8 88.3Z"/><path fill="#bfdb52" stroke="#acc54a" d="M683.1 90.6L687.1 87.7L685.7 84.8L681.8 87Z"/><path fill="#d17446" stroke="#bc693f" d="M730.3 82.2L730.4 87.5L727 88.3L725.3 86.2Z"/><path fill="#c5e154" stroke="#b1ca4c" d="M684.5 94.3L688.6 90.7L687.1 87.7L683.1 90.6Z"/><path fill="#adff57" stroke="#9cea4e" d="M666.9 100.8L670.9 94.5L669.4 88.7L665.3 92.8Z"/><path fill="#865432" stroke="#794c2d" d="M717.1 91.1L719.5 92.6L717.5 90.7L714.3 91.6Z"/><path fill="#9b9b42" stroke="#8b8b3c" d="M696.4 87.9L700 86.8L698.2 85.2L694.7 86.4Z"/><path fill="#ba533e" stroke="#a74a38" d="M732.6 90.6L733.6 93.7L729.6 95.1L726.6 95.7Z"/><path fill="#999e99" style="fill-opacity:0.35" d="M729.8 102.5L738.8 100.9L732.5 94.5L723.5 96.4Z"/><path fill="#987239" stroke="#896733" d="M711.1 84.6L713.4 86.8L711 86.6L708.1 86Z"/><path fill="#9b9b42" stroke="#8b8b3c" d="M691 87.6L694.7 86.4L692.9 84.9L689.2 86.1Z"/><path fill="#a6f953" stroke="#96e04b" d="M665.3 92.8L669.4 88.7L667.9 82.9L663.7 84.6Z"/><path fill="#977239" stroke="#886633" d="M705.1 85.4L708.1 86L705.3 87.3L701.8 88.3Z"/><path fill="#ac3939" stroke="#9b3434" d="M740.7 99.4L741 103.1L738.8 100.9L735.9 101.4Z"/><path fill="#8f7d36" stroke="#817130" d="M703.7 81.5L706.6 82.8L704.3 82.7L701.2 82.2Z"/><path fill="#9a9a42" stroke="#8b8b3c" d="M698.2 89.4L701.8 88.3L700 86.8L696.4 87.9Z"/><path fill="#999e99" style="fill-opacity:0.35" d="M668.3 88L680.5 83.4L675.8 79.6L663.7 84.6Z"/><path fill="#e1644b" stroke="#cb5a44" d="M742.1 90.6L738.8 100.9L736.7 98.7L737.8 92.2Z"/><path fill="#97ca4c" stroke="#88b544" d="M678.1 87.7L682.1 84.7L680.5 83.4L676.5 84.9Z"/><path fill="#985f39" stroke="#895633" d="M720 90.7L721.4 94.5L719.5 92.6L717.1 91.1Z"/><path fill="#999e99" style="fill-opacity:0.35" d="M690.7 91.7L701.8 88.3L696.5 83.7L685.4 87.4Z"/><path fill="#9a9a42" stroke="#8b8b3c" d="M692.7 89L696.4 87.9L694.7 86.4L691 87.6Z"/><path fill="#a0d550" stroke="#90c048" d="M679.6 90.6L683.7 86L682.1 84.7L678.1 87.7Z"/><path fill="#8e793d" stroke="#7f6d37" d="M700.3 90.2L703.6 90L701.8 88.3L698.2 89.4Z"/><path fill="#975e39" stroke="#885533" d="M714.6 89.6L717.1 91.1L714.3 91.6L710.9 92.4Z"/><path fill="#dd934a" stroke="#c78542" d="M726.3 70.4L726.4 76.9L722.4 79.5L721.1 75.7Z"/><path fill="#e6804d" stroke="#cf7345" d="M735.5 77.9L734 86.6L730.4 87.5L730.3 82.2Z"/><path fill="#a97f3f" stroke="#987239" d="M714.1 83.2L715.9 87.1L713.4 86.8L711.1 84.6Z"/><path fill="#9a9a42" stroke="#8b8b3b" d="M687.1 88.8L691 87.6L689.2 86.1L685.4 87.4Z"/><path fill="#999e99" style="fill-opacity:0.35" d="M713.4 98.6L723.5 96.4L717.5 90.7L707.4 93.3Z"/><path fill="#c15640" stroke="#ae4d3a" d="M731.4 87.3L732.6 90.6L726.6 95.7L723.5 96.4Z"/><path fill="#a3da52" stroke="#93c449" d="M681.1 93.6L685.4 87.4L683.7 86L679.6 90.6Z"/><path fill="#a3da52" stroke="#93c44a" d="M673.9 90.9L678.1 87.7L676.5 84.9L672.5 86.4Z"/><path fill="#dc4949" stroke="#c64242" d="M745.7 97.2L743.2 105.4L741 103.1L740.7 99.4Z"/><path fill="#ad6c41" stroke="#9c613a" d="M723.1 90.3L723.5 96.4L721.4 94.5L720 90.7Z"/><path fill="#9a9a42" stroke="#8b8b3b" d="M694.5 90.5L698.2 89.4L696.4 87.9L692.7 89Z"/><path fill="#ace556" stroke="#9ace4d" d="M675.4 95.3L679.6 90.6L678.1 87.7L673.9 90.9Z"/><path fill="#d57647" stroke="#c06b40" d="M730.1 76.4L730.3 82.2L725.3 86.2L723.6 83.9Z"/><path fill="#854232" stroke="#783c2d" d="M723.7 96L725.5 98.4L723.5 96.4L720.2 97.1Z"/><path fill="#93ff58" stroke="#84ee4f" d="M657.5 121.7L661 110.7L659 103.4L655.2 111.6Z"/><path fill="#dc6249" stroke="#c65842" d="M739 85.1L737.8 92.2L733.6 93.7L732.6 90.6Z"/><path fill="#b0ea58" stroke="#9ed34f" d="M676.8 99.7L681.1 93.6L679.6 90.6L675.4 95.3Z"/><path fill="#837038" stroke="#766532" d="M702.3 91L705.5 91.6L703.6 90L700.3 90.2Z"/><path fill="#a87e3f" stroke="#977139" d="M708.6 82.3L711.1 84.6L708.1 86L705.1 85.4Z"/><path fill="#89f652" stroke="#7bdd4a" d="M661.1 90.8L665.2 85.7L663.7 84.6L659.4 86.4Z"/><path fill="#999e99" style="fill-opacity:0.35" d="M736.5 108.9L745.5 107.7L738.8 100.9L729.8 102.5Z"/><path fill="#c04040" stroke="#ad3a3a" d="M740.4 95.3L740.7 99.4L735.9 101.4L732.9 101.9Z"/><path fill="#9a9a42" stroke="#8b8b3b" d="M688.9 90.2L692.7 89L691 87.6L687.1 88.8Z"/><path fill="#b1ec59" stroke="#9fd550" d="M672.5 106L676.8 99.7L675.4 95.3L671.1 100Z"/><path fill="#95ff59" stroke="#86f150" d="M661 110.7L664.6 99.5L662.9 95.1L659 103.4Z"/><path fill="#8dfd54" stroke="#7fe44c" d="M662.9 95.1L666.7 86.9L665.2 85.7L661.1 90.8Z"/><path fill="#ade656" stroke="#9ccf4e" d="M671.1 100L675.4 95.3L673.9 90.9L669.7 94Z"/><path fill="#7d6b36" stroke="#706030" d="M696.7 90.5L700.3 90.2L698.2 89.4L694.5 90.5Z"/><path fill="#b7293d" stroke="#a52537" d="M748.3 105.4L747.8 110.1L745.5 107.7L742.6 108.1Z"/><path fill="#999e99" style="fill-opacity:0.35" d="M673.1 91.6L685.4 87.4L680.5 83.4L668.3 88Z"/><path fill="#94ff59" stroke="#86f050" d="M659 103.4L662.9 95.1L661.1 90.8L657 95.9Z"/><path fill="#a6dd53" stroke="#95c74b" d="M669.7 94L673.9 90.9L672.5 86.4L668.3 88Z"/><path fill="#8ea647" stroke="#809540" d="M683.1 90.9L687.1 88.8L685.4 87.4L681.5 88.7Z"/><path fill="#a6673e" stroke="#955d38" d="M712 88L714.6 89.6L710.9 92.4L707.4 93.3Z"/><path fill="#b06e42" stroke="#9e633b" d="M718.5 86.7L720 90.7L717.1 91.1L714.6 89.6Z"/><path fill="#786733" stroke="#6c5c2e" d="M704.5 91.9L707.4 93.3L705.5 91.6L702.3 91Z"/><path fill="#89f752" stroke="#7bde4a" d="M664.6 99.5L668.3 88L666.7 86.9L662.9 95.1Z"/><path fill="#ec4f4f" stroke="#d44747" d="M751 94.9L745.5 107.7L743.2 105.4L745.7 97.2Z"/><path fill="#91ff57" stroke="#83eb4e" d="M655.2 111.6L659 103.4L657 95.9L652.8 101.1Z"/><path fill="#ac5640" stroke="#9b4d3a" d="M727.3 94.9L727.6 100.4L725.5 98.4L723.7 96Z"/><path fill="#9a9a42" stroke="#8a8a3b" d="M690.7 91.7L694.5 90.5L692.7 89L688.9 90.2Z"/><path fill="#8eff55" stroke="#80e74d" d="M657 95.9L661.1 90.8L659.4 86.4L654.9 88.3Z"/><path fill="#999e99" style="fill-opacity:0.35" d="M696.2 96.2L707.4 93.3L701.8 88.3L690.7 91.7Z"/><path fill="#94ad4a" stroke="#859c43" d="M684.7 93.1L688.9 90.2L687.1 88.8L683.1 90.9Z"/><path fill="#805b37" stroke="#735231" d="M706.3 94.3L709.4 95L707.4 93.3L703.8 94.2Z"/><path fill="#a3513d" stroke="#924937" d="M721.7 93.5L723.7 96L720.2 97.1L716.9 97.9Z"/><path fill="#736231" stroke="#67592c" d="M699 90.4L702.3 91L700.3 90.2L696.7 90.5Z"/><path fill="#b68844" stroke="#a47b3d" d="M712.2 79L714.1 83.2L711.1 84.6L708.6 82.3Z"/><path fill="#999e99" style="fill-opacity:0.35" d="M719.8 104.2L729.8 102.5L723.5 96.4L713.4 98.6Z"/><path fill="#e6334d" stroke="#cf2e45" d="M754.4 102.6L750.1 112.5L747.8 110.1L748.3 105.4Z"/><path fill="#706030" stroke="#65572b" d="M693 90.7L696.7 90.5L694.5 90.5L690.7 91.7Z"/><path fill="#99b24c" stroke="#89a045" d="M678.9 93.1L683.1 90.9L681.5 88.7L677.3 90.1Z"/><path fill="#8cfd54" stroke="#7ee34c" d="M652.8 101.1L657 95.9L654.9 88.3L650.3 90.2Z"/><path fill="#c44141" stroke="#b13b3b" d="M740.1 91.1L740.4 95.3L732.9 101.9L729.8 102.5Z"/><path fill="#99b34d" stroke="#8aa145" d="M686.4 95.3L690.7 91.7L688.9 90.2L684.7 93.1Z"/><path fill="#bf5f47" stroke="#ac5640" d="M731 93.7L729.8 102.5L727.6 100.4L727.3 94.9Z"/><path fill="#f06b50" stroke="#d86048" d="M745.8 79.1L742.1 90.6L737.8 92.2L739 85.1Z"/><path fill="#923737" stroke="#833131" d="M730.8 101.3L732 104.6L729.8 102.5L726.6 103Z"/><path fill="#999e99" style="fill-opacity:0.35" d="M654.7 93.1L668.3 88L663.7 84.6L650.3 90.2Z"/><path fill="#999e99" style="fill-opacity:0.35" d="M743.7 115.7L752.5 114.9L745.5 107.7L736.5 108.9Z"/><path fill="#c17948" stroke="#ae6d41" d="M722.7 83.6L723.1 90.3L720 90.7L718.5 86.7Z"/><path fill="#84d34f" stroke="#77be47" d="M665.5 93.3L669.8 89.2L668.3 88L663.9 89.6Z"/><path fill="#735231" stroke="#684a2c" d="M708.8 94.4L711.4 96.8L709.4 95L706.3 94.3Z"/><path fill="#9fb94f" stroke="#8fa647" d="M680.4 96.1L684.7 93.1L683.1 90.9L678.9 93.1Z"/><path fill="#c42c41" stroke="#b0273b" d="M748.9 100.5L748.3 105.4L742.6 108.1L739.6 108.5Z"/><path fill="#e44c4c" stroke="#cd4444" d="M748.5 88.2L745.7 97.2L740.7 99.4L740.4 95.3Z"/><path fill="#e9814e" stroke="#d27446" d="M737.3 68.3L735.5 77.9L730.3 82.2L730.1 76.4Z"/><path fill="#756432" stroke="#695a2d" d="M701.3 90.3L704.5 91.9L702.3 91L699 90.4Z"/><path fill="#dc6249" stroke="#c65842" d="M740.2 77.3L739 85.1L732.6 90.6L731.4 87.3Z"/><path fill="#8adc53" stroke="#7cc64a" d="M667.2 97L671.4 90.4L669.8 89.2L665.5 93.3Z"/><path fill="#999e99" style="fill-opacity:0.35" d="M678.2 95.4L690.7 91.7L685.4 87.4L673.1 91.6Z"/><path fill="#c11540" stroke="#ad133a" d="M756.5 111.9L755 117.4L752.5 114.9L749.7 115.2Z"/><path fill="#b97345" stroke="#a6683e" d="M716.9 82.4L718.5 86.7L714.6 89.6L712 88Z"/><path fill="#795734" stroke="#6d4e2f" d="M703 93.6L706.3 94.3L703.8 94.2L700.1 95.2Z"/><path fill="#a3be52" stroke="#93ab49" d="M682 99.1L686.4 95.3L684.7 93.1L680.4 96.1Z"/><path fill="#838342" stroke="#76763b" d="M688.5 94.3L692.5 93.1L690.7 91.7L686.7 92.9Z"/><path fill="#796834" stroke="#6d5e2f" d="M695.5 89.7L699 90.4L696.7 90.5L693 90.7Z"/><path fill="#9fba50" stroke="#8fa748" d="M674.6 95.3L678.9 93.1L677.3 90.1L673.1 91.6Z"/><path fill="#ad5641" stroke="#9c4e3a" d="M719.6 90.9L721.7 93.5L716.9 97.9L713.4 98.6Z"/><path fill="#75ff58" stroke="#69ec4f" d="M646.7 136.2L649.2 122.3L646.4 113.2L643.1 123.6Z"/><path fill="#855f39" stroke="#775533" d="M711.4 94.5L713.4 98.6L711.4 96.8L708.8 94.4Z"/><path fill="#f43651" stroke="#dc3149" d="M760.8 99.6L752.5 114.9L750.1 112.5L754.4 102.6Z"/><path fill="#bb4646" stroke="#a83f3f" d="M735.1 99.4L734.2 106.7L732 104.6L730.8 101.3Z"/><path fill="#89dc52" stroke="#7cc64a" d="M668.8 100.7L673.1 91.6L671.4 90.4L667.2 97Z"/><path fill="#95ee59" stroke="#86d650" d="M664.6 109.8L668.8 100.7L667.2 97L662.9 103.7Z"/><path fill="#be5f47" stroke="#ab5640" d="M726.9 88.9L727.3 94.9L723.7 96L721.7 93.5Z"/><path fill="#94ed59" stroke="#85d550" d="M660.5 118.9L664.6 109.8L662.9 103.7L658.6 110.5Z"/><path fill="#93ec58" stroke="#85d450" d="M662.9 103.7L667.2 97L665.5 93.3L661.1 97.6Z"/><path fill="#999e99" style="fill-opacity:0.35" d="M702.2 101L713.4 98.6L707.4 93.3L696.2 96.2Z"/><path fill="#8de255" stroke="#7fcb4c" d="M661.1 97.6L665.5 93.3L663.9 89.6L659.4 91.4Z"/><path fill="#a5c052" stroke="#94ad4a" d="M676 99.1L680.4 96.1L678.9 93.1L674.6 95.3Z"/><path fill="#724131" stroke="#663a2c" d="M712.8 98.7L715.5 100.4L713.4 98.6L709.8 99.4Z"/><path fill="#838342" stroke="#76763b" d="M690.3 95.7L694.3 94.7L692.5 93.1L688.5 94.3Z"/><path fill="#a9c555" stroke="#98b24c" d="M677.5 102.9L682 99.1L680.4 96.1L676 99.1Z"/><path fill="#aa4040" stroke="#993939" d="M729.4 97.7L730.8 101.3L726.6 103L723.2 103.6Z"/><path fill="#92e957" stroke="#83d24f" d="M658.6 110.5L662.9 103.7L661.1 97.6L656.6 101.9Z"/><path fill="#76ff59" stroke="#6aef50" d="M649.2 122.3L651.9 108L649.8 102.7L646.4 113.2Z"/><path fill="#999e99" style="fill-opacity:0.35" d="M726.5 110.2L736.5 108.9L729.8 102.5L719.8 104.2Z"/><path fill="#70fc54" stroke="#65e34c" d="M647.6 97.5L651.7 91.2L650.3 90.2L645.5 92.2Z"/><path fill="#8a633b" stroke="#7c5935" d="M706 91.8L708.8 94.4L706.3 94.3L703 93.6Z"/><path fill="#ef1b50" stroke="#d71848" d="M763.7 108.5L757.5 120L755 117.4L756.5 111.9Z"/><path fill="#71fd54" stroke="#65e44c" d="M649.8 102.7L653.2 92.1L651.7 91.2L647.6 97.5Z"/><path fill="#838341" stroke="#76763b" d="M684.3 95.5L688.5 94.3L686.7 92.9L682.5 94.1Z"/><path fill="#827038" stroke="#756432" d="M698.1 88.7L701.3 90.3L699 90.4L695.5 89.7Z"/><path fill="#8a633b" stroke="#7c5935" d="M699.6 92.8L703 93.6L700.1 95.2L696.2 96.2Z"/><path fill="#c62c42" stroke="#b2283b" d="M749.5 95.1L748.9 100.5L739.6 108.5L736.5 108.9Z"/><path fill="#77ff59" stroke="#6bf150" d="M646.4 113.2L649.8 102.7L647.6 97.5L643.5 103.9Z"/><path fill="#9e273b" stroke="#8e2335" d="M738.4 106.8L738.9 111.1L736.5 108.9L733.3 109.3Z"/><path fill="#8de154" stroke="#7fcb4c" d="M656.6 101.9L661.1 97.6L659.4 91.4L654.7 93.1Z"/><path fill="#75ff57" stroke="#69ec4f" d="M643.1 123.6L646.4 113.2L643.5 103.9L639.3 110.4Z"/><path fill="#cb4c4c" stroke="#b74545" d="M739.7 97.4L736.5 108.9L734.2 106.7L735.1 99.4Z"/><path fill="#838341" stroke="#76763b" d="M692.2 97.2L696.2 96.2L694.3 94.7L690.3 95.7Z"/><path fill="#999e99" style="fill-opacity:0.35" d="M659.3 96.2L673.1 91.6L668.3 88L654.7 93.1Z"/><path fill="#999e99" style="fill-opacity:0.35" d="M751.3 123L760 122.6L752.5 114.9L743.7 115.7Z"/><path fill="#7db04b" stroke="#719e44" d="M670.3 96L674.8 92.8L673.1 91.6L668.7 93.1Z"/><path fill="#6cf251" stroke="#61da49" d="M651.9 108L654.7 93.1L653.2 92.1L649.8 102.7Z"/><path fill="#894e3b" stroke="#7b4635" d="M715.8 98L717.6 102.3L715.5 100.4L712.8 98.7Z"/><path fill="#c61642" stroke="#b3143c" d="M758.1 106L756.5 111.9L749.7 115.2L746.7 115.5Z"/><path fill="#74ff57" stroke="#68ea4e" d="M643.5 103.9L647.6 97.5L645.5 92.2L640.5 94.3Z"/><path fill="#f75252" stroke="#df4a4a" d="M757.4 80.4L751 94.9L745.7 97.2L748.5 88.2Z"/><path fill="#c87d4b" stroke="#b47144" d="M722.2 76.3L722.7 83.6L718.5 86.7L716.9 82.4Z"/><path fill="#838341" stroke="#76763b" d="M686.2 96.9L690.3 95.7L688.5 94.3L684.3 95.5Z"/><path fill="#999e99" style="fill-opacity:0.35" d="M683.7 99.4L696.2 96.2L690.7 91.7L678.2 95.4Z"/><path fill="#e9344e" stroke="#d22f46" d="M759.1 91.7L754.4 102.6L748.3 105.4L748.9 100.5Z"/><path fill="#c90043" stroke="#b5003c" d="M765.2 118.9L762.6 125.3L760 122.6L757.2 122.8Z"/><path fill="#cf684e" stroke="#bb5d46" d="M732.4 84L731 93.7L727.3 94.9L726.9 88.9Z"/><path fill="#84b94f" stroke="#77a747" d="M671.9 99L676.5 94.1L674.8 92.8L670.3 96Z"/><path fill="#8a4f3b" stroke="#7c4735" d="M709.9 96.9L712.8 98.7L709.8 99.4L706.1 100.2Z"/><path fill="#77633c" stroke="#6b5936" d="M694.3 97.9L698.2 97.8L696.2 96.2L692.2 97.2Z"/><path fill="#986d41" stroke="#89623b" d="M709.2 90L711.4 94.5L708.8 94.4L706 91.8Z"/><path fill="#e04b4b" stroke="#c94343" d="M751.6 78.2L748.5 88.2L740.4 95.3L740.1 91.1Z"/><path fill="#b14242" stroke="#9f3c3c" d="M728 94L729.4 97.7L723.2 103.6L719.8 104.2Z"/><path fill="#828241" stroke="#75753b" d="M680 96.7L684.3 95.5L682.5 94.1L678.2 95.4Z"/><path fill="#999e99" style="fill-opacity:0.35" d="M708.5 106.2L719.8 104.2L713.4 98.6L702.2 101Z"/><path fill="#c7324b" stroke="#b32d43" d="M743.7 104.2L741.2 113.4L738.9 111.1L738.4 106.8Z"/><path fill="#fb1c54" stroke="#e2194b" d="M771.4 104.8L760 122.6L757.5 120L763.7 108.5Z"/><path fill="#9a5842" stroke="#8b4f3c" d="M719 97.3L719.8 104.2L717.6 102.3L715.8 98Z"/><path fill="#c26149" stroke="#af5741" d="M726.4 82.5L726.9 88.9L721.7 93.5L719.6 90.9Z"/><path fill="#89c052" stroke="#7bad4a" d="M665.7 99.3L670.3 96L668.7 93.1L664.1 94.6Z"/><path fill="#87bd51" stroke="#7aaa49" d="M673.6 102L678.2 95.4L676.5 94.1L671.9 99Z"/><path fill="#72ff55" stroke="#67e74d" d="M639.3 110.4L643.5 103.9L640.5 94.3L635.3 96.5Z"/><path fill="#f06b50" stroke="#d86048" d="M750 66.1L745.8 79.1L739 85.1L740.2 77.3Z"/><path fill="#828241" stroke="#75753b" d="M688 98.3L692.2 97.2L690.3 95.7L686.2 96.9Z"/><path fill="#c84b4b" stroke="#b44343" d="M736.1 91.4L735.1 99.4L730.8 101.3L729.4 97.7Z"/><path fill="#793434" stroke="#6d2f2f" d="M719.8 103.4L722 106.2L719.8 104.2L716.2 104.9Z"/><path fill="#8fc956" stroke="#81b54d" d="M667.3 104L671.9 99L670.3 96L665.7 99.3Z"/><path fill="#986d41" stroke="#89623b" d="M703.1 89.1L706 91.8L703 93.6L699.6 92.8Z"/><path fill="#6e5b37" stroke="#635231" d="M696.5 98.6L700.2 99.4L698.2 97.8L694.3 97.9Z"/><path fill="#af2c42" stroke="#9e273b" d="M737.8 102.3L738.4 106.8L733.3 109.3L730 109.8Z"/><path fill="#999e99" style="fill-opacity:0.35" d="M733.8 116.6L743.7 115.7L736.5 108.9L726.5 110.2Z"/><path fill="#999e99" style="fill-opacity:0.35" d="M639.4 98.9L654.7 93.1L650.3 90.2L635.3 96.5Z"/><path fill="#6dda52" stroke="#62c44a" d="M651.7 99.5L656.2 94.1L654.7 93.1L649.8 95Z"/><path fill="#92cd58" stroke="#84b84f" d="M669 108.7L673.6 102L671.9 99L667.3 104Z"/><path fill="#828241" stroke="#75753b" d="M681.8 98L686.2 96.9L684.3 95.5L680 96.7Z"/><path fill="#f50052" stroke="#dd004a" d="M773.8 114.8L765.3 128L762.6 125.3L765.2 118.9Z"/><path fill="#76ec58" stroke="#6ad450" d="M648.4 133.2L652 121.1L649.6 113.1L645.5 122.1Z"/><path fill="#70df54" stroke="#64c94b" d="M653.6 104.1L657.7 95.2L656.2 94.1L651.7 99.5Z"/><path fill="#675633" stroke="#5d4d2e" d="M690.3 98L694.3 97.9L692.2 97.2L688 98.3Z"/><path fill="#a7153f" stroke="#971339" d="M746.6 112.8L746.2 118.1L743.7 115.7L740.5 116Z"/><path fill="#94cf59" stroke="#85bb50" d="M664.3 115.5L669 108.7L667.3 104L662.6 109.1Z"/><path fill="#999e99" style="fill-opacity:0.35" d="M664.3 99.5L678.2 95.4L673.1 91.6L659.3 96.2Z"/><path fill="#57ff57" stroke="#4eeb4e" d="M635.7 152.4L636.9 135.2L632.8 124.2L630.2 137Z"/><path fill="#9f5b44" stroke="#8f523d" d="M713.9 93.4L715.8 98L712.8 98.7L709.9 96.9Z"/><path fill="#c61642" stroke="#b3143c" d="M759.8 99.5L758.1 106L746.7 115.5L743.7 115.7Z"/><path fill="#999e99" style="fill-opacity:0.35" d="M759.5 130.8L768 130.8L760 122.6L751.3 123Z"/><path fill="#975641" stroke="#874d3a" d="M706.9 95L709.9 96.9L706.1 100.2L702.2 101Z"/><path fill="#91cb57" stroke="#83b74e" d="M662.6 109.1L667.3 104L665.7 99.3L661 102.7Z"/><path fill="#77ed59" stroke="#6bd650" d="M652 121.1L655.6 108.7L653.6 104.1L649.6 113.1Z"/><path fill="#758d46" stroke="#6a7f3f" d="M675.5 98.9L680 96.7L678.2 95.4L673.8 96.7Z"/><path fill="#d43550" stroke="#bf3048" d="M749.3 101.5L743.7 115.7L741.2 113.4L743.7 104.2Z"/><path fill="#8cc454" stroke="#7eb04c" d="M661 102.7L665.7 99.3L664.1 94.6L659.3 96.2Z"/><path fill="#645432" stroke="#5a4b2d" d="M698.7 99.3L702.2 101L700.2 99.4L696.5 98.6Z"/><path fill="#77ee59" stroke="#6bd650" d="M649.6 113.1L653.6 104.1L651.7 99.5L647.1 105.1Z"/><path fill="#9a4242" stroke="#8a3b3b" d="M723.5 101.9L724.2 108.2L722 106.2L719.8 103.4Z"/><path fill="#6dd951" stroke="#62c449" d="M655.6 108.7L659.3 96.2L657.7 95.2L653.6 104.1Z"/><path fill="#828241" stroke="#75753a" d="M683.7 99.4L688 98.3L686.2 96.9L681.8 98Z"/><path fill="#c80043" stroke="#b4003c" d="M768.1 111.9L765.2 118.9L757.2 122.8L754.3 122.9Z"/><path fill="#73e656" stroke="#68cf4e" d="M647.1 105.1L651.7 99.5L649.8 95L644.7 96.9Z"/><path fill="#999e99" style="fill-opacity:0.35" d="M689.6 103.8L702.2 101L696.2 96.2L683.7 99.4Z"/><path fill="#75ea58" stroke="#69d34f" d="M645.5 122.1L649.6 113.1L647.1 105.1L642.5 110.7Z"/><path fill="#7a9349" stroke="#6e8442" d="M677.2 101.1L681.8 98L680 96.7L675.5 98.9Z"/><path fill="#6a4735" stroke="#604030" d="M700.7 101.8L704.2 102.7L702.2 101L698.1 101.9Z"/><path fill="#ec1a4f" stroke="#d51847" d="M770.7 95.5L763.7 108.5L756.5 111.9L758.1 106Z"/><path fill="#943f3f" stroke="#853939" d="M717.4 100.5L719.8 103.4L716.2 104.9L712.4 105.5Z"/><path fill="#58ff58" stroke="#4fed4f" d="M636.9 135.2L638.1 117.4L635.4 111.2L632.8 124.2Z"/><path fill="#a47546" stroke="#94693f" d="M706.9 85.3L709.2 90L706 91.8L703.1 89.1Z"/><path fill="#fc3854" stroke="#e3324c" d="M770.3 82L760.8 99.6L754.4 102.6L759.1 91.7Z"/><path fill="#5f4f30" stroke="#56482b" d="M692.7 97.7L696.5 98.6L694.3 97.9L690.3 98Z"/><path fill="#999e99" style="fill-opacity:0.35" d="M715.3 111.7L726.5 110.2L719.8 104.2L708.5 106.2Z"/><path fill="#55ff55" stroke="#4de64d" d="M632.6 105L636.6 97.3L635.3 96.5L629.9 98.7Z"/><path fill="#d85151" stroke="#c34949" d="M743.3 84.5L739.7 97.4L735.1 99.4L736.1 91.4Z"/><path fill="#d01a4e" stroke="#bb1746" d="M753 109.5L748.7 120.6L746.2 118.1L746.6 112.8Z"/><path fill="#b32d43" stroke="#a1283c" d="M737.3 97.3L737.8 102.3L730 109.8L726.5 110.2Z"/><path fill="#ff0055" stroke="#e6004d" d="M782.9 110.3L768 130.8L765.3 128L773.8 114.8Z"/><path fill="#655533" stroke="#5b4c2e" d="M686.1 98.1L690.3 98L688 98.3L683.7 99.4Z"/><path fill="#aa4949" stroke="#994141" d="M727.5 100.3L726.5 110.2L724.2 108.2L723.5 101.9Z"/><path fill="#7f994c" stroke="#728945" d="M670.8 101.1L675.5 98.9L673.8 96.7L669.1 98.1Z"/><path fill="#54fb54" stroke="#4be24b" d="M635.4 111.2L638 98.1L636.6 97.3L632.6 105Z"/><path fill="#59ff59" stroke="#50f150" d="M632.8 124.2L635.4 111.2L632.6 105L628.6 112.8Z"/><path fill="#58ff58" stroke="#4fed4f" d="M630.2 137L632.8 124.2L628.6 112.8L624.5 120.7Z"/><path fill="#e2324b" stroke="#cc2d44" d="M764.3 79.4L759.1 91.7L748.9 100.5L749.5 95.1Z"/><path fill="#7e984c" stroke="#728844" d="M679 103.3L683.7 99.4L681.8 98L677.2 101.1Z"/><path fill="#72e456" stroke="#67ce4d" d="M642.5 110.7L647.1 105.1L644.7 96.9L639.4 98.9Z"/><path fill="#852639" stroke="#772233" d="M727.3 108.5L728.9 112.3L726.5 110.2L722.9 110.7Z"/><path fill="#ad634a" stroke="#9c5943" d="M718.2 89.7L719 97.3L715.8 98L713.9 93.4Z"/><path fill="#d2694f" stroke="#bd5f47" d="M733.9 73.3L732.4 84L726.9 88.9L726.4 82.5Z"/><path fill="#ce334d" stroke="#b92e45" d="M746.4 94.1L743.7 104.2L738.4 106.8L737.8 102.3Z"/><path fill="#999e99" style="fill-opacity:0.35" d="M643.8 101.4L659.3 96.2L654.7 93.1L639.4 98.9Z"/><path fill="#999e99" style="fill-opacity:0.35" d="M741.5 123.5L751.3 123L743.7 115.7L733.8 116.6Z"/><path fill="#664433" stroke="#5c3d2e" d="M703.3 101.6L706.4 104.4L704.2 102.7L700.7 101.8Z"/><path fill="#4fed4f" stroke="#47d547" d="M638.1 117.4L639.4 98.9L638 98.1L635.4 111.2Z"/><path fill="#c74b4b" stroke="#b34343" d="M737.2 82.6L736.1 91.4L729.4 97.7L728 94Z"/><path fill="#69b84f" stroke="#5ea547" d="M656.2 101.7L660.9 97.3L659.3 96.2L654.4 97.9Z"/><path fill="#b21643" stroke="#a1143c" d="M747 107.2L746.6 112.8L740.5 116L737.2 116.3Z"/><path fill="#849e4f" stroke="#778e47" d="M672.4 104.2L677.2 101.1L675.5 98.9L670.8 101.1Z"/><path fill="#685734" stroke="#5d4e2f" d="M695.1 97.4L698.7 99.3L696.5 98.6L692.7 97.7Z"/><path fill="#58ff58" stroke="#4fed4f" d="M628.6 112.8L632.6 105L629.9 98.7L624.3 101.1Z"/><path fill="#a75f47" stroke="#965640" d="M711.9 88.5L713.9 93.4L709.9 96.9L706.9 95Z"/><path fill="#b00042" stroke="#9e003b" d="M755.4 119.3L754 125.6L751.3 123L748.2 123.2Z"/><path fill="#f45151" stroke="#dc4949" d="M764.7 63.7L757.4 80.4L748.5 88.2L751.6 78.2Z"/><path fill="#999e99" style="fill-opacity:0.35" d="M669.6 103.1L683.7 99.4L678.2 95.4L664.3 99.5Z"/><path fill="#6d4937" stroke="#624231" d="M696.9 100.7L700.7 101.8L698.1 101.9L693.9 102.8Z"/><path fill="#6dbf52" stroke="#62ac4a" d="M658 105.6L662.6 98.4L660.9 97.3L656.2 101.7Z"/><path fill="#88a351" stroke="#7a9249" d="M674.1 107.4L679 103.3L677.2 101.1L672.4 104.2Z"/><path fill="#c60042" stroke="#b2003b" d="M771.1 104.4L768.1 111.9L754.3 122.9L751.3 123Z"/><path fill="#6c6c41" stroke="#61613a" d="M681.1 101.9L685.6 100.8L683.7 99.4L679.2 100.6Z"/><path fill="#6d5b37" stroke="#625231" d="M688.7 96.8L692.7 97.7L690.3 98L686.1 98.1Z"/><path fill="#9d4343" stroke="#8d3c3c" d="M715 97.4L717.4 100.5L712.4 105.5L708.5 106.2Z"/><path fill="#dc1b52" stroke="#c6194a" d="M759.8 105.9L751.3 123L748.7 120.6L753 109.5Z"/><path fill="#ab4949" stroke="#9a4242" d="M722.8 95.1L723.5 101.9L719.8 103.4L717.4 100.5Z"/><path fill="#86a050" stroke="#789048" d="M665.9 103.5L670.8 101.1L669.1 98.1L664.3 99.5Z"/><path fill="#744e3a" stroke="#694634" d="M706 101.4L708.5 106.2L706.4 104.4L703.3 101.6Z"/><path fill="#a73048" stroke="#962b40" d="M732 106.1L731.3 114.5L728.9 112.3L727.3 108.5Z"/><path fill="#999e99" style="fill-opacity:0.35" d="M695.9 108.4L708.5 106.2L702.2 101L689.6 103.8Z"/><path fill="#6dbe52" stroke="#62ab49" d="M659.8 109.5L664.3 99.5L662.6 98.4L658 105.6Z"/><path fill="#72c755" stroke="#66b34d" d="M651.3 106.3L656.2 101.7L654.4 97.9L649.2 99.6Z"/><path fill="#57ff57" stroke="#4eea4e" d="M624.5 120.7L628.6 112.8L624.3 101.1L618.4 103.5Z"/><path fill="#76cf59" stroke="#6aba50" d="M653.3 112.9L658 105.6L656.2 101.7L651.3 106.3Z"/><path fill="#8aa553" stroke="#7c954a" d="M667.5 107.5L672.4 104.2L670.8 101.1L665.9 103.5Z"/><path fill="#77d059" stroke="#6bbb50" d="M655.3 119.5L659.8 109.5L658 105.6L653.3 112.9Z"/><path fill="#603030" stroke="#572b2b" d="M707.6 105.9L710.7 108L708.5 106.2L704.5 106.9Z"/><path fill="#6b6b40" stroke="#61613a" d="M683 103.3L687.6 102.3L685.6 100.8L681.1 101.9Z"/><path fill="#9a2c42" stroke="#8b283b" d="M725.7 104.4L727.3 108.5L722.9 110.7L719.2 111.2Z"/><path fill="#77d059" stroke="#6bbb50" d="M650.9 129.5L655.3 119.5L653.3 112.9L648.6 120.3Z"/><path fill="#ee004f" stroke="#d60047" d="M783.4 99.7L773.8 114.8L765.2 118.9L768.1 111.9Z"/><path fill="#8da955" stroke="#7f994c" d="M669.2 111.5L674.1 107.4L672.4 104.2L667.5 107.5Z"/><path fill="#999e99" style="fill-opacity:0.35" d="M722.6 117.7L733.8 116.6L726.5 110.2L715.3 111.7Z"/><path fill="#58eb58" stroke="#4fd34f" d="M636 149.2L638.6 133.7L635.2 123.7L631.6 135.2Z"/><path fill="#54df54" stroke="#4bc84b" d="M636.3 106.5L640.8 99.7L639.4 98.9L633.9 100.9Z"/><path fill="#999e99" style="fill-opacity:0.35" d="M622.2 105.4L639.4 98.9L635.3 96.5L618.4 103.5Z"/><path fill="#7b523e" stroke="#6f4a38" d="M700.1 98.6L703.3 101.6L700.7 101.8L696.9 100.7Z"/><path fill="#d70051" stroke="#c10049" d="M763.1 115.1L756.7 128.2L754 125.6L755.4 119.3Z"/><path fill="#76ce58" stroke="#6ab94f" d="M648.6 120.3L653.3 112.9L651.3 106.3L646.2 111Z"/><path fill="#ff1c55" stroke="#e61a4d" d="M784.7 83.7L771.4 104.8L763.7 108.5L770.7 95.5Z"/><path fill="#75613a" stroke="#695734" d="M691.3 95.4L695.1 97.4L692.7 97.7L688.7 96.8Z"/><path fill="#b41744" stroke="#a2143d" d="M747.4 101L747 107.2L737.2 116.3L733.8 116.6Z"/><path fill="#6b6b40" stroke="#60603a" d="M676.4 103.1L681.1 101.9L679.2 100.6L674.5 101.8Z"/><path fill="#7c533e" stroke="#704b38" d="M693 99.7L696.9 100.7L693.9 102.8L689.6 103.8Z"/><path fill="#b4344d" stroke="#a22e46" d="M736.8 103.7L733.8 116.6L731.3 114.5L732 106.1Z"/><path fill="#8f143d" stroke="#801237" d="M735.5 113.9L736.3 118.9L733.8 116.6L730.2 117Z"/><path fill="#58eb58" stroke="#4fd44f" d="M638.6 133.7L641.2 117.8L638.7 112.1L635.2 123.7Z"/><path fill="#53de53" stroke="#4bc84b" d="M638.7 112.1L642.3 100.6L640.8 99.7L636.3 106.5Z"/><path fill="#3aff57" stroke="#34ea4e" d="M624.3 170.6L623.6 149.7L617.9 136.5L616.5 152.1Z"/><path fill="#6b6b40" stroke="#60603a" d="M685 104.8L689.6 103.8L687.6 102.3L683 103.3Z"/><path fill="#de3853" stroke="#c8324b" d="M755.7 85.2L749.3 101.5L743.7 104.2L746.4 94.1Z"/><path fill="#999e99" style="fill-opacity:0.35" d="M648.6 104.2L664.3 99.5L659.3 96.2L643.8 101.4Z"/><path fill="#72c856" stroke="#67b44d" d="M646.2 111L651.3 106.3L649.2 99.6L643.8 101.4Z"/><path fill="#999e99" style="fill-opacity:0.35" d="M749.9 130.9L759.5 130.8L751.3 123L741.5 123.5Z"/><path fill="#63954b" stroke="#5a8643" d="M661 104.1L666 100.7L664.3 99.5L659.3 101Z"/><path fill="#793c3c" stroke="#6c3636" d="M710.8 104.9L713 109.8L710.7 108L707.6 105.9Z"/><path fill="#5aef5a" stroke="#51d751" d="M635.2 123.7L638.7 112.1L636.3 106.5L631.7 113.5Z"/><path fill="#b40044" stroke="#a2003d" d="M757 112.5L755.4 119.3L748.2 123.2L744.9 123.3Z"/><path fill="#b4674d" stroke="#a25c45" d="M717.3 81.5L718.2 89.7L713.9 93.4L711.9 88.5Z"/><path fill="#e3194c" stroke="#cc1744" d="M778.6 80.7L770.7 95.5L758.1 106L759.8 99.5Z"/><path fill="#d21a4f" stroke="#bd1847" d="M757.7 97.1L753 109.5L746.6 112.8L747 107.2Z"/><path fill="#50d550" stroke="#48bf48" d="M641.2 117.8L643.8 101.4L642.3 100.6L638.7 112.1Z"/><path fill="#b94f4f" stroke="#a64747" d="M728.5 89.4L727.5 100.3L723.5 101.9L722.8 95.1Z"/><path fill="#58eb58" stroke="#4fd44f" d="M631.6 135.2L635.2 123.7L631.7 113.5L627 120.6Z"/><path fill="#58ea58" stroke="#4fd24f" d="M631.7 113.5L636.3 106.5L633.9 100.9L628.2 103.1Z"/><path fill="#999e99" style="fill-opacity:0.35" d="M675.4 106.8L689.6 103.8L683.7 99.4L669.6 103.1Z"/><path fill="#6b6b40" stroke="#60603a" d="M678.3 104.4L683 103.3L681.1 101.9L676.4 103.1Z"/><path fill="#ca334c" stroke="#b62e44" d="M749.4 82.8L746.4 94.1L737.8 102.3L737.3 97.3Z"/><path fill="#7b3e3e" stroke="#6f3838" d="M704.2 103.7L707.6 105.9L704.5 106.9L700.3 107.7Z"/><path fill="#699d4e" stroke="#5e8d47" d="M662.8 107.1L667.8 101.8L666 100.7L661 104.1Z"/><path fill="#d85151" stroke="#c34949" d="M747.4 70L743.3 84.5L736.1 91.4L737.2 82.6Z"/><path fill="#614d3a" stroke="#574634" d="M687.2 105.2L691.6 105.3L689.6 103.8L685 104.8Z"/><path fill="#875a43" stroke="#79513d" d="M703.3 96.3L706 101.4L703.3 101.6L700.1 98.6Z"/><path fill="#3aff57" stroke="#34ea4e" d="M623.6 149.7L622.9 128L619.4 120.7L617.9 136.5Z"/><path fill="#ae4b4b" stroke="#9d4343" d="M722 87.8L722.8 95.1L717.4 100.5L715 97.4Z"/><path fill="#a02e44" stroke="#90293e" d="M723.9 100L725.7 104.4L719.2 111.2L715.3 111.7Z"/><path fill="#e10054" stroke="#cb004c" d="M771.3 110.7L759.5 130.8L756.7 128.2L763.1 115.1Z"/><path fill="#b1194c" stroke="#9f1744" d="M741.2 110.7L738.9 121.2L736.3 118.9L735.5 113.9Z"/><path fill="#874444" stroke="#7a3d3d" d="M714.1 103.8L715.3 111.7L713 109.8L710.8 104.9Z"/><path fill="#999e99" style="fill-opacity:0.35" d="M702.6 113.4L715.3 111.7L708.5 106.2L695.9 108.4Z"/><path fill="#6a6a40" stroke="#606039" d="M671.5 104.3L676.4 103.1L674.5 101.8L669.6 103.1Z"/><path fill="#39ff56" stroke="#33e74d" d="M615.9 113.4L619.7 104.1L618.4 103.5L612.3 106Z"/><path fill="#b2334c" stroke="#a12e45" d="M732.7 97L732 106.1L727.3 108.5L725.7 104.4Z"/><path fill="#6ea553" stroke="#63954a" d="M655.8 107.6L661 104.1L659.3 101L654 102.6Z"/><path fill="#6b6b40" stroke="#60603a" d="M680.3 105.8L685 104.8L683 103.3L678.3 104.4Z"/><path fill="#6ba050" stroke="#609048" d="M664.6 110.3L669.6 103.1L667.8 101.8L662.8 107.1Z"/><path fill="#885a44" stroke="#7a513d" d="M696.6 95.4L700.1 98.6L696.9 100.7L693 99.7Z"/><path fill="#f73752" stroke="#de314a" d="M781.4 61.2L770.3 82L759.1 91.7L764.3 79.4Z"/><path fill="#57e857" stroke="#4ed14e" d="M627 120.6L631.7 113.5L628.2 103.1L622.2 105.4Z"/><path fill="#3bff58" stroke="#35ee4f" d="M616.5 152.1L617.9 136.5L612.1 122.8L608.2 132.4Z"/><path fill="#6c2436" stroke="#612031" d="M715.1 110.4L717.7 113.7L715.3 111.7L711.3 112.3Z"/><path fill="#3bff59" stroke="#36f150" d="M617.9 136.5L619.4 120.7L615.9 113.4L612.1 122.8Z"/><path fill="#37f752" stroke="#31de4a" d="M619.4 120.7L620.9 104.7L619.7 104.1L615.9 113.4Z"/><path fill="#594735" stroke="#504030" d="M689.5 105.7L693.7 106.8L691.6 105.3L687.2 105.2Z"/><path fill="#9e1744" stroke="#8e143d" d="M734.7 108.6L735.5 113.9L730.2 117L726.5 117.3Z"/><path fill="#73ac56" stroke="#679b4d" d="M657.7 112.6L662.8 107.1L661 104.1L655.8 107.6Z"/><path fill="#999e99" style="fill-opacity:0.35" d="M730.5 124L741.5 123.5L733.8 116.6L722.6 117.7Z"/><path fill="#999e99" style="fill-opacity:0.35" d="M626.3 107.4L643.8 101.4L639.4 98.9L622.2 105.4Z"/><path fill="#33e74d" stroke="#2ed045" d="M622.9 128L622.2 105.4L620.9 104.7L619.4 120.7Z"/><path fill="#51bd51" stroke="#49aa49" d="M640.4 108.2L645.4 102.3L643.8 101.4L638.2 103.3Z"/><path fill="#6a6a40" stroke="#606039" d="M673.4 105.6L678.3 104.4L676.4 103.1L671.5 104.3Z"/><path fill="#75af57" stroke="#699d4f" d="M659.5 117.6L664.6 110.3L662.8 107.1L657.7 112.6Z"/><path fill="#3bff59" stroke="#35f050" d="M612.1 122.8L615.9 113.4L612.3 106L606 108.7Z"/><path fill="#b40044" stroke="#a2003d" d="M758.6 105.1L757 112.5L744.9 123.3L741.5 123.5Z"/><path fill="#8d4646" stroke="#7e3f3f" d="M708.4 99.5L710.8 104.9L707.6 105.9L704.2 103.7Z"/><path fill="#970041" stroke="#88003a" d="M744.4 119.8L744.2 125.9L741.5 123.5L738 123.7Z"/><path fill="#524131" stroke="#493b2c" d="M682.6 105.2L687.2 105.2L685 104.8L680.3 105.8Z"/><path fill="#bc1b51" stroke="#a91849" d="M747.1 107.3L741.5 123.5L738.9 121.2L741.2 110.7Z"/><path fill="#864343" stroke="#793c3c" d="M700.7 101.4L704.2 103.7L700.3 107.7L695.9 108.4Z"/><path fill="#53c153" stroke="#4aad4a" d="M642.5 113.1L646.9 103.3L645.4 102.3L640.4 108.2Z"/><path fill="#999e99" style="fill-opacity:0.35" d="M653.6 107.2L669.6 103.1L664.3 99.5L648.6 104.2Z"/><path fill="#ff0056" stroke="#e7004d" d="M800.7 85.8L782.9 110.3L773.8 114.8L783.4 99.7Z"/><path fill="#5d7445" stroke="#53683e" d="M666.3 106.5L671.5 104.3L669.6 103.1L664.5 104.4Z"/><path fill="#514131" stroke="#493a2c" d="M691.8 106.3L695.9 108.4L693.7 106.8L689.5 105.7Z"/><path fill="#71aa55" stroke="#66994c" d="M650.5 111.2L655.8 107.6L654 102.6L648.6 104.2Z"/><path fill="#872d44" stroke="#7a293d" d="M719 108.4L720.1 115.6L717.7 113.7L715.1 110.4Z"/><path fill="#75af58" stroke="#699e4f" d="M652.4 118.1L657.7 112.6L655.8 107.6L650.5 111.2Z"/><path fill="#77b259" stroke="#6ba050" d="M654.3 125.1L659.5 117.6L657.7 112.6L652.4 118.1Z"/><path fill="#6a6a40" stroke="#5f5f39" d="M675.4 106.8L680.3 105.8L678.3 104.4L673.4 105.6Z"/><path fill="#e21c55" stroke="#cc194c" d="M769.6 86L759.8 105.9L753 109.5L757.7 97.1Z"/><path fill="#d40050" stroke="#bf0048" d="M770.3 100.4L763.1 115.1L755.4 119.3L757 112.5Z"/><path fill="#50bb50" stroke="#48a948" d="M644.7 118L648.6 104.2L646.9 103.3L642.5 113.1Z"/><path fill="#59cf59" stroke="#50ba50" d="M640.9 131.7L644.7 118L642.5 113.1L638.1 123Z"/><path fill="#59cf59" stroke="#50ba50" d="M637.1 145.3L640.9 131.7L638.1 123L633.6 133Z"/><path fill="#59d059" stroke="#50bc50" d="M638.1 123L642.5 113.1L640.4 108.2L635.2 114.2Z"/><path fill="#999e99" style="fill-opacity:0.35" d="M681.5 110.9L695.9 108.4L689.6 103.8L675.4 106.8Z"/><path fill="#57cb57" stroke="#4eb74e" d="M635.2 114.2L640.4 108.2L638.2 103.3L632.4 105.3Z"/><path fill="#e3004c" stroke="#cc0044" d="M794.5 82.4L783.4 99.7L768.1 111.9L771.1 104.4Z"/><path fill="#916149" stroke="#835741" d="M700.4 90.8L703.3 96.3L700.1 98.6L696.6 95.4Z"/><path fill="#3bff58" stroke="#35ee4f" d="M608.2 132.4L612.1 122.8L606 108.7L599.3 111.4Z"/><path fill="#842c42" stroke="#77283b" d="M712.2 106.9L715.1 110.4L711.3 112.3L707 112.8Z"/><path fill="#553333" stroke="#4d2e2e" d="M693.9 108.8L698.1 110L695.9 108.4L691.3 109.2Z"/><path fill="#607848" stroke="#576c41" d="M668.2 108.8L673.4 105.6L671.5 104.3L666.3 106.5Z"/><path fill="#c03752" stroke="#ad314a" d="M740.2 89.1L736.8 103.7L732 106.1L732.7 97Z"/><path fill="#544332" stroke="#4b3c2d" d="M685.1 104.6L689.5 105.7L687.2 105.2L682.6 105.2Z"/><path fill="#cc194c" stroke="#b81745" d="M763.1 83.2L757.7 97.1L747 107.2L747.4 101Z"/><path fill="#3ae957" stroke="#34d24f" d="M623.2 167.4L624.2 147.9L619.4 135.6L616.7 150Z"/><path fill="#bc5050" stroke="#a94848" d="M729.6 77.3L728.5 89.4L722.8 95.1L722 87.8Z"/><path fill="#59cf59" stroke="#50ba50" d="M633.6 133L638.1 123L635.2 114.2L630 120.4Z"/><path fill="#a11745" stroke="#91153e" d="M733.8 102.9L734.7 108.6L726.5 117.3L722.6 117.7Z"/><path fill="#b9004f" stroke="#a60047" d="M751.2 115.7L747 128.4L744.2 125.9L744.4 119.8Z"/><path fill="#999e99" style="fill-opacity:0.35" d="M709.9 118.8L722.6 117.7L715.3 111.7L702.6 113.4Z"/><path fill="#38e154" stroke="#33cb4c" d="M619.1 114.4L623.5 106L622.2 105.4L616 107.7Z"/><path fill="#999e99" style="fill-opacity:0.35" d="M602.6 112.7L622.2 105.4L618.4 103.5L599.3 111.4Z"/><path fill="#94314a" stroke="#852c43" d="M723.1 106.4L722.6 117.7L720.1 115.6L719 108.4Z"/><path fill="#984c4c" stroke="#894444" d="M712.8 95.1L714.1 103.8L710.8 104.9L708.4 99.5Z"/><path fill="#5a4836" stroke="#514130" d="M677.8 105.1L682.6 105.2L680.3 105.8L675.4 106.8Z"/><path fill="#b2334c" stroke="#a02e45" d="M733.4 87L732.7 97L725.7 104.4L723.9 100Z"/><path fill="#657f4c" stroke="#5b7244" d="M661 108.9L666.3 106.5L664.5 104.4L659.2 105.7Z"/><path fill="#b71a4f" stroke="#a51847" d="M743.7 99.2L741.2 110.7L735.5 113.9L734.7 108.6Z"/><path fill="#76143b" stroke="#6a1235" d="M723.2 115.2L725.2 119.7L722.6 117.7L718.6 118Z"/><path fill="#3ae957" stroke="#34d14f" d="M624.2 147.9L625.2 127.9L622.1 121.2L619.4 135.6Z"/><path fill="#647c4b" stroke="#5a7043" d="M670.1 111.1L675.4 106.8L673.4 105.6L668.2 108.8Z"/><path fill="#dc3752" stroke="#c6314a" d="M763.1 66.4L755.7 85.2L746.4 94.1L749.4 82.8Z"/><path fill="#37db52" stroke="#31c54a" d="M622.1 121.2L624.9 106.7L623.5 106L619.1 114.4Z"/><path fill="#57cb57" stroke="#4eb74e" d="M630 120.4L635.2 114.2L632.4 105.3L626.3 107.4Z"/><path fill="#a00045" stroke="#90003e" d="M744.6 113.2L744.4 119.8L738 123.7L734.3 123.9Z"/><path fill="#583535" stroke="#4f2f2f" d="M696.7 108.3L700.3 111.7L698.1 110L693.9 108.8Z"/><path fill="#999e99" style="fill-opacity:0.35" d="M738.9 130.9L749.9 130.9L741.5 123.5L730.5 124Z"/><path fill="#999e99" style="fill-opacity:0.35" d="M630.6 109.5L648.6 104.2L643.8 101.4L626.3 107.4Z"/><path fill="#4e9c4e" stroke="#468c46" d="M644.8 109.9L650.2 105.2L648.6 104.2L642.8 105.9Z"/><path fill="#3cee59" stroke="#36d650" d="M619.4 135.6L622.1 121.2L619.1 114.4L614.5 123Z"/><path fill="#5b4836" stroke="#514131" d="M687.6 104L691.8 106.3L689.5 105.7L685.1 104.6Z"/><path fill="#944a4a" stroke="#854242" d="M705.8 93.8L708.4 99.5L704.2 103.7L700.7 101.4Z"/><path fill="#1dff56" stroke="#1ae84d" d="M612.2 191.3L609.1 166.2L601.4 150.4L601.3 169.1Z"/><path fill="#69834f" stroke="#5e7647" d="M662.8 112.1L668.2 108.8L666.3 106.5L661 108.9Z"/><path fill="#34cf4e" stroke="#2fba46" d="M625.2 127.9L626.3 107.4L624.9 106.7L622.1 121.2Z"/><path fill="#3bec59" stroke="#35d550" d="M616.7 150L619.4 135.6L614.5 123L609.8 131.8Z"/><path fill="#f71b52" stroke="#df194a" d="M800.6 58.6L784.7 83.7L770.7 95.5L778.6 80.7Z"/><path fill="#3bec59" stroke="#35d550" d="M614.5 123L619.1 114.4L616 107.7L609.5 110.2Z"/><path fill="#999e99" style="fill-opacity:0.35" d="M659.1 110.4L675.4 106.8L669.6 103.1L653.6 107.2Z"/><path fill="#603a3a" stroke="#573434" d="M689.6 107.5L693.9 108.8L691.3 109.2L686.5 110.1Z"/><path fill="#c20053" stroke="#af004b" d="M758.4 111.4L749.9 130.9L747 128.4L751.2 115.7Z"/><path fill="#51a151" stroke="#499149" d="M646.8 114L651.9 106.1L650.2 105.2L644.8 109.9Z"/><path fill="#8b2e46" stroke="#7d2a3f" d="M709.3 103.2L712.2 106.9L707 112.8L702.6 113.4Z"/><path fill="#96324b" stroke="#872d44" d="M717.8 100.6L719 108.4L715.1 110.4L712.2 106.9Z"/><path fill="#604d3a" stroke="#564534" d="M680.4 103.4L685.1 104.6L682.6 105.2L677.8 105.1Z"/><path fill="#54543f" stroke="#4c4c39" d="M672.2 109.2L677.4 108.2L675.4 106.8L670.2 108Z"/><path fill="#6c8751" stroke="#617949" d="M664.6 115.4L670.1 111.1L668.2 108.8L662.8 112.1Z"/><path fill="#921849" stroke="#841642" d="M728 112.3L727.8 121.9L725.2 119.7L723.2 115.2Z"/><path fill="#643c3c" stroke="#5a3636" d="M699.5 107.9L702.6 113.4L700.3 111.7L696.7 108.3Z"/><path fill="#6b8650" stroke="#607948" d="M655.4 111.4L661 108.9L659.2 105.7L653.6 107.2Z"/><path fill="#1dff56" stroke="#1ae74d" d="M609.1 166.2L605.9 140L601.4 131.5L601.4 150.4Z"/><path fill="#999e99" style="fill-opacity:0.35" d="M688.2 115.4L702.6 113.4L695.9 108.4L681.5 110.9Z"/><path fill="#1dff56" stroke="#1ae74d" d="M596.9 122.9L600.4 111.9L599.3 111.4L592.4 114.3Z"/><path fill="#50a050" stroke="#489048" d="M648.8 118.2L653.6 107.2L651.9 106.1L646.8 114Z"/><path fill="#56ac56" stroke="#4d9b4d" d="M639.2 114.9L644.8 109.9L642.8 105.9L636.9 107.7Z"/><path fill="#e40056" stroke="#cd004d" d="M785.1 87L771.3 110.7L763.1 115.1L770.3 100.4Z"/><path fill="#6e8a53" stroke="#637c4a" d="M657.2 115.6L662.8 112.1L661 108.9L655.4 111.4Z"/><path fill="#542233" stroke="#4c1e2d" d="M701.3 112.6L705 115.2L702.6 113.4L698 114Z"/><path fill="#891744" stroke="#7b153e" d="M721.1 110.4L723.2 115.2L718.6 118L714.3 118.4Z"/><path fill="#3beb58" stroke="#35d34f" d="M609.8 131.8L614.5 123L609.5 110.2L602.6 112.7Z"/><path fill="#58b158" stroke="#509f50" d="M641.6 122.1L646.8 114L644.8 109.9L639.2 114.9Z"/><path fill="#54543f" stroke="#4c4c39" d="M674.2 110.5L679.4 109.5L677.4 108.2L672.2 109.2Z"/><path fill="#1bf150" stroke="#18d948" d="M601.4 131.5L601.5 112.3L600.4 111.9L596.9 122.9Z"/><path fill="#1eff59" stroke="#1bf050" d="M601.4 150.4L601.4 131.5L596.9 122.9L593.4 134.2Z"/><path fill="#1dff58" stroke="#1aee4f" d="M601.3 169.1L601.4 150.4L593.4 134.2L589.8 145.6Z"/><path fill="#59b159" stroke="#509f50" d="M643.9 129.3L648.8 118.2L646.8 114L641.6 122.1Z"/><path fill="#999e99" style="fill-opacity:0.35" d="M717.8 124.6L730.5 124L722.6 117.7L709.9 118.8Z"/><path fill="#6c4141" stroke="#613a3a" d="M692.8 104.7L696.7 108.3L693.9 108.8L689.6 107.5Z"/><path fill="#999e99" style="fill-opacity:0.35" d="M606.2 114.1L626.3 107.4L622.2 105.4L602.6 112.7Z"/><path fill="#a20045" stroke="#92003e" d="M744.8 106.1L744.6 113.2L734.3 123.9L730.5 124Z"/><path fill="#37c153" stroke="#32ad4a" d="M622.6 115.5L627.7 108.1L626.3 107.4L619.9 109.5Z"/><path fill="#718d55" stroke="#667f4c" d="M659 119.9L664.6 115.4L662.8 112.1L657.2 115.6Z"/><path fill="#c51c54" stroke="#b1194c" d="M753.4 88.9L747.1 107.3L741.2 110.7L743.7 99.2Z"/><path fill="#66523d" stroke="#5c4937" d="M683 101.5L687.6 104L685.1 104.6L680.4 103.4Z"/><path fill="#19e04b" stroke="#16c943" d="M605.9 140L602.6 112.7L601.5 112.3L601.4 131.5Z"/><path fill="#cc004d" stroke="#b80045" d="M778.4 83.7L770.3 100.4L757 112.5L758.6 105.1Z"/><path fill="#9d1a4e" stroke="#8d1847" d="M733.1 109.2L730.5 124L727.8 121.9L728 112.3Z"/><path fill="#6d4141" stroke="#623b3b" d="M685 106.1L689.6 107.5L686.5 110.1L681.5 110.9Z"/><path fill="#59b359" stroke="#50a150" d="M639 140.5L643.9 129.3L641.6 122.1L636.3 130.3Z"/><path fill="#9e4f4f" stroke="#8e4747" d="M711.3 85.7L712.8 95.1L708.4 99.5L705.8 93.8Z"/><path fill="#53533f" stroke="#4b4b38" d="M666.8 110.3L672.2 109.2L670.2 108L664.8 109.1Z"/><path fill="#7f003f" stroke="#720039" d="M732.1 120.5L733.2 126.3L730.5 124L726.4 124.2Z"/><path fill="#1eff59" stroke="#1bf150" d="M593.4 134.2L596.9 122.9L592.4 114.3L585.1 117.4Z"/><path fill="#ba0050" stroke="#a80048" d="M755.9 101.6L751.2 115.7L744.4 119.8L744.6 113.2Z"/><path fill="#59b259" stroke="#50a050" d="M636.3 130.3L641.6 122.1L639.2 114.9L633.5 120Z"/><path fill="#54543f" stroke="#4b4b39" d="M676.3 111.9L681.5 110.9L679.4 109.5L674.2 110.5Z"/><path fill="#37bf52" stroke="#31ac4a" d="M625.3 121.6L629.1 108.8L627.7 108.1L622.6 115.5Z"/><path fill="#999e99" style="fill-opacity:0.35" d="M635.4 111.9L653.6 107.2L648.6 104.2L630.6 109.5Z"/><path fill="#a23651" stroke="#913049" d="M723.7 93.9L723.1 106.4L719 108.4L717.8 100.6Z"/><path fill="#68293e" stroke="#5d2538" d="M704.6 111.2L707.4 117L705 115.2L701.3 112.6Z"/><path fill="#b51a4d" stroke="#a21746" d="M746.5 86.3L743.7 99.2L734.7 108.6L733.8 102.9Z"/><path fill="#57ae57" stroke="#4e9c4e" d="M633.5 120L639.2 114.9L636.9 107.7L630.6 109.5Z"/><path fill="#4a7b4a" stroke="#426e42" d="M649.7 111.8L655.4 108.2L653.6 107.2L647.8 108.7Z"/><path fill="#c03752" stroke="#ad314a" d="M744 72.6L740.2 89.1L732.7 97L733.4 87Z"/><path fill="#3bce58" stroke="#35b94f" d="M622.7 163.3L625.3 145.6L621.3 134.5L617.4 147.4Z"/><path fill="#3acd58" stroke="#35b84f" d="M625.3 145.6L628 127.7L625.3 121.6L621.3 134.5Z"/><path fill="#34b64e" stroke="#2fa446" d="M628 127.7L630.6 109.5L629.1 108.8L625.3 121.6Z"/><path fill="#3cd159" stroke="#36bc50" d="M621.3 134.5L625.3 121.6L622.6 115.5L617.3 123.2Z"/><path fill="#999e99" style="fill-opacity:0.35" d="M665.1 113.8L681.5 110.9L675.4 106.8L659.1 110.4Z"/><path fill="#53533e" stroke="#4b4b38" d="M668.8 111.6L674.2 110.5L672.2 109.2L666.8 110.3Z"/><path fill="#3bce58" stroke="#35b94f" d="M617.3 123.2L622.6 115.5L619.9 109.5L613.2 111.8Z"/><path fill="#dd1c53" stroke="#c7194b" d="M781.1 62.7L769.6 86L757.7 97.1L763.1 83.2Z"/><path fill="#99334d" stroke="#8a2e45" d="M716.4 92.1L717.8 100.6L712.2 106.9L709.3 103.2Z"/><path fill="#744646" stroke="#693f3f" d="M696.1 101.9L699.5 107.9L696.7 108.3L692.8 104.7Z"/><path fill="#6c2b41" stroke="#61273a" d="M697.3 109.9L701.3 112.6L698 114L693.2 114.7Z"/><path fill="#1eff59" stroke="#1bf050" d="M589.8 145.6L593.4 134.2L585.1 117.4L577.5 120.5Z"/><path fill="#4b3838" stroke="#433232" d="M678.6 112.1L683.7 112.4L681.5 110.9L676.3 111.9Z"/><path fill="#4d804d" stroke="#457445" d="M651.6 115L657.3 109.3L655.4 108.2L649.7 111.8Z"/><path fill="#8e1847" stroke="#7f1540" d="M718.8 105.3L721.1 110.4L714.3 118.4L709.9 118.8Z"/><path fill="#9d1a4e" stroke="#8d1746" d="M728.3 101.8L728 112.3L723.2 115.2L721.1 110.4Z"/><path fill="#9b004d" stroke="#8b0046" d="M738 116.5L736 128.6L733.2 126.3L732.1 120.5Z"/><path fill="#3bd059" stroke="#35bb50" d="M617.4 147.4L621.3 134.5L617.3 123.2L611.9 131.1Z"/><path fill="#732e45" stroke="#68293e" d="M708.1 109.6L709.9 118.8L707.4 117L704.6 111.2Z"/><path fill="#f60052" stroke="#de004a" d="M822.4 56L800.7 85.8L783.4 99.7L794.5 82.4Z"/><path fill="#999e99" style="fill-opacity:0.35" d="M695.4 120.1L709.9 118.8L702.6 113.4L688.2 115.4Z"/><path fill="#53533e" stroke="#4a4a38" d="M661.1 111.5L666.8 110.3L664.8 109.1L659.1 110.4Z"/><path fill="#764747" stroke="#6a4040" d="M688.6 100.9L692.8 104.7L689.6 107.5L685 106.1Z"/><path fill="#1de757" stroke="#1ad04e" d="M609.5 188.2L608.4 164.1L601.8 149.2L600.2 166.9Z"/><path fill="#1ce154" stroke="#19cb4c" d="M599.4 123.4L603.8 113.2L602.6 112.7L595.5 115.4Z"/><path fill="#999e99" style="fill-opacity:0.35" d="M580.2 121.2L602.6 112.7L599.3 111.4L577.5 120.5Z"/><path fill="#53533e" stroke="#4b4b38" d="M670.8 112.8L676.3 111.9L674.2 110.5L668.8 111.6Z"/><path fill="#538a53" stroke="#4a7c4a" d="M643.8 115.6L649.7 111.8L647.8 108.7L641.8 110.2Z"/><path fill="#4f834f" stroke="#477647" d="M653.6 118.3L659.1 110.4L657.3 109.3L651.6 115Z"/><path fill="#5e1339" stroke="#551133" d="M709.3 116.8L712.5 120.7L709.9 118.8L705.3 119.2Z"/><path fill="#8c0046" stroke="#7e003f" d="M730.8 114.3L732.1 120.5L726.4 124.2L722.2 124.4Z"/><path fill="#443333" stroke="#3e2e2e" d="M680.9 112.4L685.9 113.8L683.7 112.4L678.6 112.1Z"/><path fill="#3bce58" stroke="#35b94f" d="M611.9 131.1L617.3 123.2L613.2 111.8L606.2 114.1Z"/><path fill="#1de556" stroke="#1ace4d" d="M608.4 164.1L607.3 139.5L603.4 131.4L601.8 149.2Z"/><path fill="#1bd650" stroke="#18c148" d="M603.4 131.4L605 113.7L603.8 113.2L599.4 123.4Z"/><path fill="#999e99" style="fill-opacity:0.35" d="M726.4 131L738.9 130.9L730.5 124L717.8 124.6Z"/><path fill="#999e99" style="fill-opacity:0.35" d="M610.1 115.6L630.6 109.5L626.3 107.4L606.2 114.1Z"/><path fill="#568f56" stroke="#4d804d" d="M645.8 121L651.6 115L649.7 111.8L643.8 115.6Z"/><path fill="#35a050" stroke="#309048" d="M626.5 116.7L632.2 110.3L630.6 109.5L624.1 111.5Z"/><path fill="#53533e" stroke="#4a4a38" d="M663.1 112.6L668.8 111.6L666.8 110.3L661.1 111.5Z"/><path fill="#1eed59" stroke="#1bd550" d="M601.8 149.2L603.4 131.4L599.4 123.4L595 133.9Z"/><path fill="#793149" stroke="#6d2c42" d="M701.6 104.9L704.6 111.2L701.3 112.6L697.3 109.9Z"/><path fill="#19c84b" stroke="#16b443" d="M607.3 139.5L606.2 114.1L605 113.7L603.4 131.4Z"/><path fill="#a40052" stroke="#93004a" d="M744.3 112.4L738.9 130.9L736 128.6L738 116.5Z"/><path fill="#c80056" stroke="#b4004d" d="M768.4 88.8L758.4 111.4L751.2 115.7L755.9 101.6Z"/><path fill="#413131" stroke="#3b2c2c" d="M673.2 111.9L678.6 112.1L676.3 111.9L670.8 112.8Z"/><path fill="#752f46" stroke="#692a3f" d="M693.1 107.1L697.3 109.9L693.2 114.7L688.2 115.4Z"/><path fill="#579157" stroke="#4e824e" d="M647.9 126.5L653.6 118.3L651.6 115L645.8 121Z"/><path fill="#1eec59" stroke="#1bd550" d="M600.2 166.9L601.8 149.2L595 133.9L590.4 144.6Z"/><path fill="#1eee59" stroke="#1bd650" d="M595 133.9L599.4 123.4L595.5 115.4L588 118.2Z"/><path fill="#999e99" style="fill-opacity:0.35" d="M640.5 114.4L659.1 110.4L653.6 107.2L635.4 111.9Z"/><path fill="#36a251" stroke="#309149" d="M628.8 121.9L633.8 111.1L632.2 110.3L626.5 116.7Z"/><path fill="#403030" stroke="#3a2b2b" d="M683.4 112.7L688.2 115.4L685.9 113.8L680.9 112.4Z"/><path fill="#741746" stroke="#68153f" d="M713.4 114.3L715.1 122.6L712.5 120.7L709.3 116.8Z"/><path fill="#445a44" stroke="#3d513d" d="M655.1 113.8L661.1 111.5L659.1 110.4L653.2 111.6Z"/><path fill="#00ff55" stroke="#00e64d" d="M598.7 215.4L592.7 185.1L582.5 166.4L584.1 188.8Z"/><path fill="#568f56" stroke="#4d814d" d="M637.6 119.5L643.8 115.6L641.8 110.2L635.4 111.9Z"/><path fill="#7d4b4b" stroke="#714444" d="M692.5 95.5L696.1 101.9L692.8 104.7L688.6 100.9Z"/><path fill="#52523e" stroke="#4a4a38" d="M665.1 113.8L670.8 112.8L668.8 111.6L663.1 112.6Z"/><path fill="#a81c54" stroke="#97194b" d="M736.2 92.5L733.1 109.2L728 112.3L728.3 101.8Z"/><path fill="#b5004e" stroke="#a30046" d="M761.2 85.7L755.9 101.6L744.6 113.2L744.8 106.1Z"/><path fill="#589358" stroke="#4f844f" d="M639.8 127.1L645.8 121L643.8 115.6L637.6 119.5Z"/><path fill="#a43752" stroke="#94314a" d="M724.3 80L723.7 93.9L717.8 100.6L716.4 92.1Z"/><path fill="#999e99" style="fill-opacity:0.35" d="M671.6 117.6L688.2 115.4L681.5 110.9L665.1 113.8Z"/><path fill="#349d4f" stroke="#2f8d47" d="M631.2 127.3L635.4 111.9L633.8 111.1L628.8 121.9Z"/><path fill="#599559" stroke="#508650" d="M642 134.8L647.9 126.5L645.8 121L639.8 127.1Z"/><path fill="#3aaf58" stroke="#359e4f" d="M620.5 123.3L626.5 116.7L624.1 111.5L617.3 113.5Z"/><path fill="#00fe55" stroke="#00e44c" d="M575.2 133.8L578.4 120.7L577.5 120.5L569.6 123.8Z"/><path fill="#731745" stroke="#67153e" d="M705.8 112.6L709.3 116.8L705.3 119.2L700.5 119.7Z"/><path fill="#412031" stroke="#3a1d2c" d="M685.6 115.3L690.5 116.9L688.2 115.4L682.9 116.1Z"/><path fill="#c21c53" stroke="#af194b" d="M760.7 67.6L753.4 88.9L743.7 99.2L746.5 86.3Z"/><path fill="#3bb259" stroke="#35a050" d="M623.8 133L628.8 121.9L626.5 116.7L620.5 123.3Z"/><path fill="#473535" stroke="#403030" d="M675.7 110.9L680.9 112.4L678.6 112.1L673.2 111.9Z"/><path fill="#00fd54" stroke="#00e34c" d="M592.7 185.1L586.6 153.7L580.9 143.8L582.5 166.4Z"/><path fill="#475e47" stroke="#405540" d="M657.1 116.1L663.1 112.6L661.1 111.5L655.1 113.8Z"/><path fill="#8f0047" stroke="#800040" d="M729.5 107.5L730.8 114.3L722.2 124.4L717.8 124.6Z"/><path fill="#3bb058" stroke="#359e4f" d="M627.1 142.7L631.2 127.3L628.8 121.9L623.8 133Z"/><path fill="#1eed59" stroke="#1bd650" d="M590.4 144.6L595 133.9L588 118.2L580.2 121.2Z"/><path fill="#9d1a4e" stroke="#8d1746" d="M728.7 90.3L728.3 101.8L721.1 110.4L718.8 105.3Z"/><path fill="#82344e" stroke="#752f46" d="M706.1 99.6L708.1 109.6L704.6 111.2L701.6 104.9Z"/><path fill="#00ea4e" stroke="#00d346" d="M580.9 143.8L579.3 121L578.4 120.7L575.2 133.8Z"/><path fill="#a00050" stroke="#900048" d="M740.2 103.2L738 116.5L732.1 120.5L730.8 114.3Z"/><path fill="#999e99" style="fill-opacity:0.35" d="M703.2 125.3L717.8 124.6L709.9 118.8L695.4 120.1Z"/><path fill="#7e194b" stroke="#711744" d="M717.7 111.6L717.8 124.6L715.1 122.6L713.4 114.3Z"/><path fill="#dd0053" stroke="#c7004a" d="M801.7 58.7L785.1 87L770.3 100.4L778.4 83.7Z"/><path fill="#3bb259" stroke="#35a050" d="M622.9 158.2L627.1 142.7L623.8 133L618.7 144.3Z"/><path fill="#999e99" style="fill-opacity:0.35" d="M583.1 121.9L606.2 114.1L602.6 112.7L580.2 121.2Z"/><path fill="#00ff58" stroke="#00ed4f" d="M582.5 166.4L580.9 143.8L575.2 133.8L572 147.1Z"/><path fill="#1cc253" stroke="#19ae4b" d="M602.3 123.9L607.5 114.6L606.2 114.1L598.9 116.6Z"/><path fill="#4d3939" stroke="#453434" d="M667.6 111.6L673.2 111.9L670.8 112.8L665.1 113.8Z"/><path fill="#00d848" stroke="#00c241" d="M586.6 153.7L580.2 121.2L579.3 121L580.9 143.8Z"/><path fill="#00ff58" stroke="#00ee4f" d="M584.1 188.8L582.5 166.4L572 147.1L568.7 160.7Z"/><path fill="#4b644b" stroke="#445a44" d="M648.9 116.3L655.1 113.8L653.2 111.6L647 113Z"/><path fill="#67003e" stroke="#5d0038" d="M718.1 121.3L720.6 126.7L717.8 124.6L713.2 124.9Z"/><path fill="#3cb359" stroke="#36a150" d="M618.7 144.3L623.8 133L620.5 123.3L614.4 130.1Z"/><path fill="#496149" stroke="#425842" d="M659.1 118.4L665.1 113.8L663.1 112.6L657.1 116.1Z"/><path fill="#7f334c" stroke="#732e45" d="M698.3 98.2L701.6 104.9L697.3 109.9L693.1 107.1Z"/><path fill="#00ff59" stroke="#00f150" d="M572 147.1L575.2 133.8L569.6 123.8L561.2 127.3Z"/><path fill="#492537" stroke="#422131" d="M688.5 114.4L692.9 118.5L690.5 116.9L685.6 115.3Z"/><path fill="#1bbb50" stroke="#18a848" d="M605.7 131.3L608.8 115.1L607.5 114.6L602.3 123.9Z"/><path fill="#999e99" style="fill-opacity:0.35" d="M614.3 117.3L635.4 111.9L630.6 109.5L610.1 115.6Z"/><path fill="#4c3939" stroke="#443333" d="M678.3 109.9L683.4 112.7L680.9 112.4L675.7 110.9Z"/><path fill="#3bb058" stroke="#359f4f" d="M614.4 130.1L620.5 123.3L617.3 113.5L610.1 115.6Z"/><path fill="#33804d" stroke="#2e7345" d="M630.8 117.9L637 112.7L635.4 111.9L628.7 113.6Z"/><path fill="#4e684e" stroke="#465d46" d="M650.9 119.7L657.1 116.1L655.1 113.8L648.9 116.3Z"/><path fill="#1dcc57" stroke="#1ab84f" d="M607.1 184.1L608.1 161.5L602.5 147.6L599.4 164.1Z"/><path fill="#811a4e" stroke="#741746" d="M711.6 105.1L713.4 114.3L709.3 116.8L705.8 112.6Z"/><path fill="#1dca56" stroke="#1ab54e" d="M608.1 161.5L609.1 138.7L605.7 131.3L602.5 147.6Z"/><path fill="#19b04b" stroke="#179f44" d="M609.1 138.7L610.1 115.6L608.8 115.1L605.7 131.3Z"/><path fill="#52293d" stroke="#492537" d="M680.5 113.5L685.6 115.3L682.9 116.1L677.4 116.8Z"/><path fill="#1ed059" stroke="#1bbb50" d="M602.5 147.6L605.7 131.3L602.3 123.9L596.9 133.5Z"/><path fill="#999e99" style="fill-opacity:0.35" d="M646.1 117.2L665.1 113.8L659.1 110.4L640.5 114.4Z"/><path fill="#791848" stroke="#6d1641" d="M702.2 108.2L705.8 112.6L700.5 119.7L695.4 120.1Z"/><path fill="#1ed059" stroke="#1bbb50" d="M596.9 133.5L602.3 123.9L598.9 116.6L591.2 119.2Z"/><path fill="#513d3d" stroke="#493737" d="M670.2 109.3L675.7 110.9L673.2 111.9L667.6 111.6Z"/><path fill="#3d3d3d" stroke="#373737" d="M661.1 116L667.2 115L665.1 113.8L659.1 114.9Z"/><path fill="#35834f" stroke="#2f7647" d="M632.9 122.3L638.8 113.5L637 112.7L630.8 117.9Z"/><path fill="#7d004b" stroke="#710044" d="M723.2 117.7L723.4 128.8L720.6 126.7L718.1 121.3Z"/><path fill="#52293e" stroke="#4a2537" d="M691.4 113.6L695.4 120.1L692.9 118.5L688.5 114.4Z"/><path fill="#00ff59" stroke="#00f150" d="M568.7 160.7L572 147.1L561.2 127.3L552.4 131Z"/><path fill="#506a50" stroke="#486048" d="M652.8 123.1L659.1 118.4L657.1 116.1L650.9 119.7Z"/><path fill="#506b50" stroke="#486048" d="M642.4 118.9L648.9 116.3L647 113L640.5 114.4Z"/><path fill="#1ed059" stroke="#1bbb50" d="M599.4 164.1L602.5 147.6L596.9 133.5L591.4 143.3Z"/><path fill="#999e99" style="fill-opacity:0.35" d="M678.6 121.7L695.4 120.1L688.2 115.4L671.6 117.6Z"/><path fill="#ab0056" stroke="#9a004d" d="M750.4 91.2L744.3 112.4L738 116.5L740.2 103.2Z"/><path fill="#999e99" style="fill-opacity:0.35" d="M554.2 131L580.2 121.2L577.5 120.5L552.4 131Z"/><path fill="#00df54" stroke="#00c94b" d="M576.9 133.7L581.1 121.4L580.2 121.2L572 124.3Z"/><path fill="#398f56" stroke="#34814d" d="M624.3 123.3L630.8 117.9L628.7 113.6L621.7 115.4Z"/><path fill="#760047" stroke="#6b0040" d="M715.4 115.6L718.1 121.3L713.2 124.9L708.3 125.1Z"/><path fill="#34834e" stroke="#2f7546" d="M635.1 126.7L640.5 114.4L638.8 113.5L632.9 122.3Z"/><path fill="#471235" stroke="#401030" d="M693.4 118.7L697.9 121.8L695.4 120.1L690.1 120.6Z"/><path fill="#526e52" stroke="#4a634a" d="M644.4 123.4L650.9 119.7L648.9 116.3L642.4 118.9Z"/><path fill="#3d3d3d" stroke="#373737" d="M663.3 117.2L669.3 116.3L667.2 115L661.1 116Z"/><path fill="#873651" stroke="#7a3149" d="M703.9 88.6L706.1 99.6L701.6 104.9L698.3 98.2Z"/><path fill="#5a2d44" stroke="#51293d" d="M683.7 110.1L688.5 114.4L685.6 115.3L680.5 113.5Z"/><path fill="#3b9358" stroke="#35844f" d="M627 131.3L632.9 122.3L630.8 117.9L624.3 123.3Z"/><path fill="#564040" stroke="#4d3a3a" d="M672.8 106.8L678.3 109.9L675.7 110.9L670.2 109.3Z"/><path fill="#1ed059" stroke="#1bbb50" d="M591.4 143.3L596.9 133.5L591.2 119.2L583.1 121.9Z"/><path fill="#a81c54" stroke="#97194b" d="M739.6 73.7L736.2 92.5L728.3 101.8L728.7 90.3Z"/><path fill="#999e99" style="fill-opacity:0.35" d="M711.8 131L726.4 131L717.8 124.6L703.2 125.3Z"/><path fill="#00d04e" stroke="#00bb46" d="M581.8 143.2L582.1 121.7L581.1 121.4L576.9 133.7Z"/><path fill="#999e99" style="fill-opacity:0.35" d="M586.2 122.7L610.1 115.6L606.2 114.1L583.1 121.9Z"/><path fill="#00e556" stroke="#00ce4d" d="M594 212.6L590.4 182.9L581.6 164.8L581.3 186.5Z"/><path fill="#850050" stroke="#780048" d="M728.5 113.8L726.4 131L723.4 128.8L723.2 117.7Z"/><path fill="#9e004f" stroke="#8e0047" d="M742.7 88.4L740.2 103.2L730.8 114.3L729.5 107.5Z"/><path fill="#1ba251" stroke="#189249" d="M605.4 124.4L611.4 116.2L610.1 115.6L602.5 117.9Z"/><path fill="#c30053" stroke="#af004b" d="M780 62.2L768.4 88.8L755.9 101.6L761.2 85.7Z"/><path fill="#8a1c53" stroke="#7c194a" d="M717.6 97.1L717.7 111.6L713.4 114.3L711.6 105.1Z"/><path fill="#5c2e45" stroke="#53293e" d="M675 111.7L680.5 113.5L677.4 116.8L671.6 117.6Z"/><path fill="#00e154" stroke="#00cb4c" d="M590.4 182.9L586.8 152.7L581.8 143.2L581.6 164.8Z"/><path fill="#3a9258" stroke="#35844f" d="M629.6 139.3L635.1 126.7L632.9 122.3L627 131.3Z"/><path fill="#547054" stroke="#4c654c" d="M646.3 128L652.8 123.1L650.9 119.7L644.4 123.4Z"/><path fill="#3c3c3c" stroke="#363636" d="M654.8 117L661.1 116L659.1 114.9L652.8 116Z"/><path fill="#00eb58" stroke="#00d34f" d="M581.6 164.8L581.8 143.2L576.9 133.7L572.5 146.4Z"/><path fill="#00c048" stroke="#00ad41" d="M586.8 152.7L583.1 121.9L582.1 121.7L581.8 143.2Z"/><path fill="#3d3d3d" stroke="#373737" d="M665.4 118.4L671.6 117.6L669.3 116.3L663.3 117.2Z"/><path fill="#561540" stroke="#4d133a" d="M696.9 116.7L700.6 123.6L697.9 121.8L693.4 118.7Z"/><path fill="#999e99" style="fill-opacity:0.35" d="M618.9 119.1L640.5 114.4L635.4 111.9L614.3 117.3Z"/><path fill="#00ee59" stroke="#00d650" d="M572.5 146.4L576.9 133.7L572 124.3L563.3 127.6Z"/><path fill="#1b9f50" stroke="#188f48" d="M608.3 131L612.8 116.7L611.4 116.2L605.4 124.4Z"/><path fill="#306048" stroke="#2b5641" d="M635.6 119.2L642.3 115.3L640.5 114.4L633.7 115.9Z"/><path fill="#841a4f" stroke="#771847" d="M709.5 95.2L711.6 105.1L705.8 112.6L702.2 108.2Z"/><path fill="#3a9258" stroke="#35844f" d="M617.5 128.9L624.3 123.3L621.7 115.4L614.3 117.3Z"/><path fill="#3b9559" stroke="#368650" d="M620.8 140.5L627 131.3L624.3 123.3L617.5 128.9Z"/><path fill="#00ec58" stroke="#00d450" d="M581.3 186.5L581.6 164.8L572.5 146.4L568 159.4Z"/><path fill="#3c9559" stroke="#368650" d="M624 152.1L629.6 139.3L627 131.3L620.8 140.5Z"/><path fill="#613048" stroke="#572b41" d="M687.2 106.5L691.4 113.6L688.5 114.4L683.7 110.1Z"/><path fill="#3c3c3c" stroke="#363636" d="M656.9 118.1L663.3 117.2L661.1 116L654.8 117Z"/><path fill="#999e99" style="fill-opacity:0.35" d="M652.2 120.2L671.6 117.6L665.1 113.8L646.1 117.2Z"/><path fill="#5b1744" stroke="#52143d" d="M688.6 115.4L693.4 118.7L690.1 120.6L684.5 121.1Z"/><path fill="#860050" stroke="#780048" d="M722.9 105.4L723.2 117.7L718.1 121.3L715.4 115.6Z"/><path fill="#7a0049" stroke="#6e0042" d="M712.5 109.5L715.4 115.6L708.3 125.1L703.2 125.3Z"/><path fill="#19984c" stroke="#178944" d="M611.3 137.7L614.3 117.3L612.8 116.7L608.3 131Z"/><path fill="#1db158" stroke="#1b9f50" d="M599.2 133L605.4 124.4L602.5 117.9L594.6 120.3Z"/><path fill="#352435" stroke="#302030" d="M667.8 118.4L673.8 118.9L671.6 117.6L665.4 118.4Z"/><path fill="#32644b" stroke="#2d5a44" d="M637.7 122.6L644.2 116.2L642.3 115.3L635.6 119.2Z"/><path fill="#1eb259" stroke="#1ba050" d="M603.8 145.6L608.3 131L605.4 124.4L599.2 133Z"/><path fill="#5e1847" stroke="#551540" d="M700.6 114.6L703.2 125.3L700.6 123.6L696.9 116.7Z"/><path fill="#1dad57" stroke="#1a9c4e" d="M608.3 158.3L611.3 137.7L608.3 131L603.8 145.6Z"/><path fill="#63314a" stroke="#592c43" d="M678.7 105.5L683.7 110.1L680.5 113.5L675 111.7Z"/><path fill="#00ef59" stroke="#00d751" d="M568 159.4L572.5 146.4L563.3 127.6L554.2 131Z"/><path fill="#999e99" style="fill-opacity:0.35" d="M686.3 126.2L703.2 125.3L695.4 120.1L678.6 121.7Z"/><path fill="#3c3c3c" stroke="#363636" d="M648.1 118.1L654.8 117L652.8 116L646.1 117.2Z"/><path fill="#999e99" style="fill-opacity:0.35" d="M556.1 131L583.1 121.9L580.2 121.2L554.2 131Z"/><path fill="#1db058" stroke="#1a9f4f" d="M605.3 178.9L608.3 158.3L603.8 145.6L599.1 160.5Z"/><path fill="#00c052" stroke="#00ad4a" d="M578.8 133.6L584.1 122.2L583.1 121.9L574.6 124.8Z"/><path fill="#3c3c3c" stroke="#363636" d="M659 119.3L665.4 118.4L663.3 117.2L656.9 118.1Z"/><path fill="#4f003c" stroke="#470036" d="M702 122.4L706 127.2L703.2 125.3L697.9 125.6Z"/><path fill="#376e52" stroke="#31634a" d="M628.7 123.3L635.6 119.2L633.7 115.9L626.5 117.4Z"/><path fill="#33664c" stroke="#2e5c45" d="M639.7 126L646.1 117.2L644.2 116.2L637.7 122.6Z"/><path fill="#1eb359" stroke="#1ba150" d="M599.1 160.5L603.8 145.6L599.2 133L592.7 141.8Z"/><path fill="#312131" stroke="#2c1d2c" d="M670.3 118.4L676.2 120.3L673.8 118.9L667.8 118.4Z"/><path fill="#999e99" style="fill-opacity:0.35" d="M589.7 123.6L614.3 117.3L610.1 115.6L586.2 122.7Z"/><path fill="#65194c" stroke="#5b1744" d="M693 109.3L696.9 116.7L693.4 118.7L688.6 115.4Z"/><path fill="#00b54e" stroke="#00a346" d="M583 142.5L585.1 122.5L584.1 122.2L578.8 133.6Z"/><path fill="#1eb259" stroke="#1ba050" d="M592.7 141.8L599.2 133L594.6 120.3L586.2 122.7Z"/><path fill="#1a824e" stroke="#177546" d="M609 124.9L615.8 117.9L614.3 117.3L606.5 119.3Z"/><path fill="#3c3c3c" stroke="#363636" d="M650.1 119.1L656.9 118.1L654.8 117L648.1 118.1Z"/><path fill="#397155" stroke="#33664c" d="M630.9 129.2L637.7 122.6L635.6 119.2L628.7 123.3Z"/><path fill="#62194a" stroke="#581642" d="M683.5 111.8L688.6 115.4L684.5 121.1L678.6 121.7Z"/><path fill="#342334" stroke="#2f1f2f" d="M661.4 117.8L667.8 118.4L665.4 118.4L659 119.3Z"/><path fill="#8c1c54" stroke="#7e194c" d="M717.6 81.1L717.6 97.1L711.6 105.1L709.5 95.2Z"/><path fill="#a90054" stroke="#98004c" d="M757.4 66.9L750.4 91.2L740.2 103.2L742.7 88.4Z"/><path fill="#8e0055" stroke="#80004d" d="M731 94.5L728.5 113.8L723.2 117.7L722.9 105.4Z"/><path fill="#68344e" stroke="#5e2f46" d="M682.5 98.9L687.2 106.5L683.7 110.1L678.7 105.5Z"/><path fill="#999e99" style="fill-opacity:0.35" d="M623.9 121L646.1 117.2L640.5 114.4L618.9 119.1Z"/><path fill="#00a948" stroke="#009841" d="M587.3 151.5L586.2 122.7L585.1 122.5L583 142.5Z"/><path fill="#5f0048" stroke="#560040" d="M706.4 119.2L708.9 129.1L706 127.2L702 122.4Z"/><path fill="#322132" stroke="#2d1e2d" d="M672.8 118.4L678.6 121.7L676.2 120.3L670.3 118.4Z"/><path fill="#397256" stroke="#33674d" d="M633.1 135.2L639.7 126L637.7 122.6L630.9 129.2Z"/><path fill="#00d059" stroke="#00bb50" d="M573.3 145.4L578.8 133.6L574.6 124.8L565.6 127.8Z"/><path fill="#00cd58" stroke="#00b94f" d="M580.9 162.8L583 142.5L578.8 133.6L573.3 145.4Z"/><path fill="#2c4242" stroke="#273b3b" d="M641.1 120.6L648.1 118.1L646.1 117.2L639.1 118.4Z"/><path fill="#1a834e" stroke="#187647" d="M611.5 130.7L617.3 118.5L615.8 117.9L609 124.9Z"/><path fill="#00c655" stroke="#00b24c" d="M588.4 180.1L587.3 151.5L583 142.5L580.9 162.8Z"/><path fill="#00ca56" stroke="#00b54e" d="M589.5 208.7L588.4 180.1L580.9 162.8L578.7 183.5Z"/><path fill="#3b3b3b" stroke="#353535" d="M652.2 120.2L659 119.3L656.9 118.1L650.1 119.1Z"/><path fill="#397356" stroke="#34674d" d="M621.3 127.5L628.7 123.3L626.5 117.4L618.9 119.1Z"/><path fill="#860050" stroke="#780048" d="M722.6 92L722.9 105.4L715.4 115.6L712.5 109.5Z"/><path fill="#999e99" style="fill-opacity:0.35" d="M658.9 123.5L678.6 121.7L671.6 117.6L652.2 120.2Z"/><path fill="#600048" stroke="#560041" d="M697.8 117.4L702 122.4L697.9 125.6L692.2 125.9Z"/><path fill="#3b7558" stroke="#356a4f" d="M623.8 136L630.9 129.2L628.7 123.3L621.3 127.5Z"/><path fill="#6b1b50" stroke="#601848" d="M697.6 102.8L700.6 114.6L696.9 116.7L693 109.3Z"/><path fill="#382638" stroke="#332233" d="M664 116.4L670.3 118.4L667.8 118.4L661.4 117.8Z"/><path fill="#1d9258" stroke="#1a834f" d="M601.9 132.3L609 124.9L606.5 119.3L598.3 121.4Z"/><path fill="#311031" stroke="#2c0f2c" d="M675.2 121L681.1 123.1L678.6 121.7L672.4 122.2Z"/><path fill="#00cf59" stroke="#00ba50" d="M578.7 183.5L580.9 162.8L573.3 145.4L567.5 157.6Z"/><path fill="#197f4c" stroke="#177244" d="M614.1 136.5L618.9 119.1L617.3 118.5L611.5 130.7Z"/><path fill="#2e4444" stroke="#293e3e" d="M643.1 122.8L650.1 119.1L648.1 118.1L641.1 120.6Z"/><path fill="#66004d" stroke="#5c0045" d="M710.9 115.7L711.8 131L708.9 129.1L706.4 119.2Z"/><path fill="#3b7659" stroke="#356b50" d="M626.3 144.7L633.1 135.2L630.9 129.2L623.8 136Z"/><path fill="#1d9358" stroke="#1b8550" d="M605.6 143.2L611.5 130.7L609 124.9L601.9 132.3Z"/><path fill="#999e99" style="fill-opacity:0.35" d="M694.8 131.1L711.8 131L703.2 125.3L686.3 126.2Z"/><path fill="#00d159" stroke="#00bc51" d="M567.5 157.6L573.3 145.4L565.6 127.8L556.1 131Z"/><path fill="#999e99" style="fill-opacity:0.35" d="M558.2 131.1L586.2 122.7L583.1 121.9L556.1 131Z"/><path fill="#3d293d" stroke="#372537" d="M654.7 117.3L661.4 117.8L659 119.3L652.2 120.2Z"/><path fill="#6a1a4f" stroke="#5f1847" d="M688.8 101.3L693 109.3L688.6 115.4L683.5 111.8Z"/><path fill="#00a251" stroke="#009149" d="M581 133.4L587.3 123L586.2 122.7L577.4 125.4Z"/><path fill="#1d9157" stroke="#1a824e" d="M609.2 154.3L614.1 136.5L611.5 130.7L605.6 143.2Z"/><path fill="#314a4a" stroke="#2c4343" d="M633.7 123.2L641.1 120.6L639.1 118.4L631.7 119.7Z"/><path fill="#2f4747" stroke="#2a4040" d="M645.2 125.2L652.2 120.2L650.1 119.1L643.1 122.8Z"/><path fill="#391339" stroke="#341134" d="M678.2 119.7L683.6 124.6L681.1 123.1L675.2 121Z"/><path fill="#3c283c" stroke="#362436" d="M666.6 114.8L672.8 118.4L670.3 118.4L664 116.4Z"/><path fill="#999e99" style="fill-opacity:0.35" d="M593.5 124.6L618.9 119.1L614.3 117.3L589.7 123.6Z"/><path fill="#19634a" stroke="#165943" d="M613.1 125.4L620.5 119.7L618.9 119.1L610.9 120.8Z"/><path fill="#009a4d" stroke="#008b45" d="M584.6 141.6L588.5 123.3L587.3 123L581 133.4Z"/><path fill="#6b0050" stroke="#600048" d="M703.7 108.4L706.4 119.2L702 122.4L697.8 117.4Z"/><path fill="#1e9459" stroke="#1b8550" d="M594.6 139.9L601.9 132.3L598.3 121.4L589.7 123.6Z"/><path fill="#1e955a" stroke="#1b8651" d="M599.4 156.2L605.6 143.2L601.9 132.3L594.6 139.9Z"/><path fill="#1e9459" stroke="#1b8550" d="M604.2 172.4L609.2 154.3L605.6 143.2L599.4 156.2Z"/><path fill="#334c4c" stroke="#2e4545" d="M635.7 126.7L643.1 122.8L641.1 120.6L633.7 123.2Z"/><path fill="#65004b" stroke="#5b0044" d="M693.2 112L697.8 117.4L692.2 125.9L686.3 126.2Z"/><path fill="#411641" stroke="#3b143b" d="M669 118.7L675.2 121L672.4 122.2L665.8 122.8Z"/><path fill="#412b41" stroke="#3a273a" d="M657.3 114.2L664 116.4L661.4 117.8L654.7 117.3Z"/><path fill="#999e99" style="fill-opacity:0.35" d="M629.5 123.2L652.2 120.2L646.1 117.2L623.9 121Z"/><path fill="#3f153f" stroke="#391339" d="M681.2 118.3L686.3 126.2L683.6 124.6L678.2 119.7Z"/><path fill="#27273a" stroke="#232335" d="M647.2 122.1L654.4 121.2L652.2 120.2L645.1 121.1Z"/><path fill="#009149" stroke="#008341" d="M588.2 149.9L589.7 123.6L588.5 123.3L584.6 141.6Z"/><path fill="#00b159" stroke="#00a050" d="M574.3 144.2L581 133.4L577.4 125.4L568.1 128.1Z"/><path fill="#19664c" stroke="#175b45" d="M615.3 130.2L622.2 120.4L620.5 119.7L613.1 125.4Z"/><path fill="#8e0055" stroke="#80004d" d="M733.8 72.7L731 94.5L722.9 105.4L722.6 92Z"/><path fill="#00b058" stroke="#009e4f" d="M580.5 160.4L584.6 141.6L581 133.4L574.3 144.2Z"/><path fill="#344e4e" stroke="#2f4646" d="M637.8 130.4L645.2 125.2L643.1 122.8L635.7 126.7Z"/><path fill="#355050" stroke="#304848" d="M625.9 125.9L633.7 123.2L631.7 119.7L623.9 121Z"/><path fill="#6f1c53" stroke="#64194b" d="M694.4 90L697.6 102.8L693 109.3L688.8 101.3Z"/><path fill="#999e99" style="fill-opacity:0.35" d="M666.3 127.1L686.3 126.2L678.6 121.7L658.9 123.5Z"/><path fill="#00aa55" stroke="#00994c" d="M586.8 176.5L588.2 149.9L584.6 141.6L580.5 160.4Z"/><path fill="#390039" stroke="#330033" d="M683.5 123.8L689 127.7L686.3 126.2L680 126.5Z"/><path fill="#1d7256" stroke="#1a674d" d="M605.2 131.4L613.1 125.4L610.9 120.8L602.4 122.6Z"/><path fill="#471847" stroke="#401540" d="M672.3 114.4L678.2 119.7L675.2 121L669 118.7Z"/><path fill="#442d44" stroke="#3d293d" d="M660 111.1L666.6 114.8L664 116.4L657.3 114.2Z"/><path fill="#19654c" stroke="#175b44" d="M617.6 135L623.9 121L622.2 120.4L615.3 130.2Z"/><path fill="#710054" stroke="#65004c" d="M709.9 98.8L710.9 115.7L706.4 119.2L703.7 108.4Z"/><path fill="#27273a" stroke="#232334" d="M649.3 123.1L656.6 122.3L654.4 121.2L647.2 122.1Z"/><path fill="#365252" stroke="#314949" d="M628 130.8L635.7 126.7L633.7 123.2L625.9 125.9Z"/><path fill="#00ae57" stroke="#009d4e" d="M585.3 203.5L586.8 176.5L580.5 160.4L576.4 179.7Z"/><path fill="#999e99" style="fill-opacity:0.35" d="M560.6 131.1L589.7 123.6L586.2 122.7L558.2 131.1Z"/><path fill="#00b259" stroke="#00a050" d="M576.4 179.7L580.5 160.4L574.3 144.2L567.4 155.5Z"/><path fill="#1d7457" stroke="#1a684e" d="M608.1 140.4L615.3 130.2L613.1 125.4L605.2 131.4Z"/><path fill="#491849" stroke="#411641" d="M662.4 116.3L669 118.7L665.8 122.8L658.9 123.5Z"/><path fill="#00834f" stroke="#007647" d="M583.5 133.2L590.9 123.9L589.7 123.6L580.5 126Z"/><path fill="#00b359" stroke="#00a150" d="M567.4 155.5L574.3 144.2L568.1 128.1L558.2 131.1Z"/><path fill="#6d0052" stroke="#620049" d="M700.7 96.7L703.7 108.4L697.8 117.4L693.2 112Z"/><path fill="#26263a" stroke="#232334" d="M639.5 123L647.2 122.1L645.1 121.1L637.5 122.1Z"/><path fill="#375353" stroke="#324b4b" d="M630.1 135.9L637.8 130.4L635.7 126.7L628 130.8Z"/><path fill="#430043" stroke="#3c003c" d="M687.2 121.1L691.8 129.4L689 127.7L683.5 123.8Z"/><path fill="#27273a" stroke="#232334" d="M651.6 124.1L658.9 123.5L656.6 122.3L649.3 123.1Z"/><path fill="#999e99" style="fill-opacity:0.35" d="M597.6 125.7L623.9 121L618.9 119.1L593.5 124.6Z"/><path fill="#1d7356" stroke="#1a684e" d="M611 149.4L617.6 135L615.3 130.2L608.1 140.4Z"/><path fill="#174545" stroke="#153e3e" d="M617.7 126L625.7 121.7L623.9 121L615.7 122.5Z"/><path fill="#4b194b" stroke="#441744" d="M675.8 109.9L681.2 118.3L678.2 119.7L672.3 114.4Z"/><path fill="#007f4c" stroke="#007345" d="M586.5 140.5L592.2 124.3L590.9 123.9L583.5 133.2Z"/><path fill="#1d7558" stroke="#1a6a4f" d="M597 137.7L605.2 131.4L602.4 122.6L593.5 124.6Z"/><path fill="#480048" stroke="#410041" d="M677.6 119.7L683.5 123.8L680 126.5L673.4 126.8Z"/><path fill="#262639" stroke="#222234" d="M641.6 123.9L649.3 123.1L647.2 122.1L639.5 123Z"/><path fill="#999e99" style="fill-opacity:0.35" d="M635.6 125.6L658.9 123.5L652.2 120.2L629.5 123.2Z"/><path fill="#1e7759" stroke="#1b6b50" d="M600.6 151L608.1 140.4L605.2 131.4L597 137.7Z"/><path fill="#4d1a4d" stroke="#461746" d="M666 108.7L672.3 114.4L669 118.7L662.4 116.3Z"/><path fill="#221132" stroke="#1e0f2d" d="M654 123.8L661.3 124.6L658.9 123.5L651.6 124.1Z"/><path fill="#480048" stroke="#410041" d="M691 118.3L694.8 131.1L691.8 129.4L687.2 121.1Z"/><path fill="#009358" stroke="#00844f" d="M575.7 142.8L583.5 133.2L580.5 126L570.8 128.5Z"/><path fill="#184848" stroke="#164141" d="M619.7 129.5L627.6 122.5L625.7 121.7L617.7 126Z"/><path fill="#007949" stroke="#006d41" d="M589.6 148L593.5 124.6L592.2 124.3L586.5 140.5Z"/><path fill="#1e7759" stroke="#1b6b50" d="M604.2 164.4L611 149.4L608.1 140.4L600.6 151Z"/><path fill="#999e99" style="fill-opacity:0.35" d="M674.5 131.1L694.8 131.1L686.3 126.2L666.3 127.1Z"/><path fill="#262639" stroke="#222233" d="M631.4 124L639.5 123L637.5 122.1L629.5 123.2Z"/><path fill="#009258" stroke="#00834f" d="M580.6 157.3L586.5 140.5L583.5 133.2L575.7 142.8Z"/><path fill="#262639" stroke="#222234" d="M643.8 124.8L651.6 124.1L649.3 123.1L641.6 123.9Z"/><path fill="#720056" stroke="#67004d" d="M708.9 80L709.9 98.8L703.7 108.4L700.7 96.7Z"/><path fill="#1b5151" stroke="#184949" d="M609.2 130.4L617.7 126L615.7 122.5L606.9 124Z"/><path fill="#201031" stroke="#1d0f2c" d="M656.5 123.4L663.8 125.9L661.3 124.6L654 123.8Z"/><path fill="#4f004f" stroke="#470047" d="M682.1 112.2L687.2 121.1L683.5 123.8L677.6 119.7Z"/><path fill="#184949" stroke="#164242" d="M621.8 133.2L629.5 123.2L627.6 122.5L619.7 129.5Z"/><path fill="#008e55" stroke="#00804d" d="M585.6 172L589.6 148L586.5 140.5L580.6 157.3Z"/><path fill="#999e99" style="fill-opacity:0.35" d="M563.1 131.2L593.5 124.6L589.7 123.6L560.6 131.1Z"/><path fill="#262639" stroke="#222233" d="M633.5 124.8L641.6 123.9L639.5 123L631.4 124Z"/><path fill="#511b51" stroke="#491849" d="M669.9 100.7L675.8 109.9L672.3 114.4L666 108.7Z"/><path fill="#00654c" stroke="#005b44" d="M586.4 132.8L594.8 124.9L593.5 124.6L584 126.6Z"/><path fill="#4d004d" stroke="#450045" d="M671.3 115.2L677.6 119.7L673.4 126.8L666.3 127.1Z"/><path fill="#009559" stroke="#008650" d="M567.5 153L575.7 142.8L570.8 128.5L560.6 131.1Z"/><path fill="#1c5353" stroke="#194b4b" d="M611.5 137L619.7 129.5L617.7 126L609.2 130.4Z"/><path fill="#261338" stroke="#221133" d="M646.3 122.8L654 123.8L651.6 124.1L643.8 124.8Z"/><path fill="#009559" stroke="#008650" d="M574.6 174.9L580.6 157.3L575.7 142.8L567.5 153Z"/><path fill="#999e99" style="fill-opacity:0.35" d="M602.3 126.8L629.5 123.2L623.9 121L597.6 125.7Z"/><path fill="#231235" stroke="#20102f" d="M659.1 123L666.3 127.1L663.8 125.9L656.5 123.4Z"/><path fill="#009258" stroke="#00834f" d="M581.6 196.8L585.6 172L580.6 157.3L574.6 174.9Z"/><path fill="#152a3f" stroke="#132639" d="M622.9 126.5L631.4 124L629.5 123.2L621 124.3Z"/><path fill="#00644b" stroke="#005a43" d="M589 139.1L596.2 125.3L594.8 124.9L586.4 132.8Z"/><path fill="#530053" stroke="#4a004a" d="M686.8 104.4L691 118.3L687.2 121.1L682.1 112.2Z"/><path fill="#262638" stroke="#222233" d="M635.6 125.6L643.8 124.8L641.6 123.9L633.5 124.8Z"/><path fill="#1c5454" stroke="#194b4b" d="M613.8 143.7L621.8 133.2L619.7 129.5L611.5 137Z"/><path fill="#1d5656" stroke="#1a4d4d" d="M600.2 135.1L609.2 130.4L606.9 124L597.6 125.7Z"/><path fill="#999e99" style="fill-opacity:0.35" d="M642.4 128.3L666.3 127.1L658.9 123.5L635.6 125.6Z"/><path fill="#28143c" stroke="#241236" d="M648.8 120.7L656.5 123.4L654 123.8L646.3 122.8Z"/><path fill="#230035" stroke="#20002f" d="M661.8 125.6L668.9 128.4L666.3 127.1L658.8 127.5Z"/><path fill="#007457" stroke="#00684e" d="M577.6 141.1L586.4 132.8L584 126.6L573.9 128.8Z"/><path fill="#162c41" stroke="#14273b" d="M624.9 128.8L633.5 124.8L631.4 124L622.9 126.5Z"/><path fill="#520052" stroke="#4a004a" d="M676.6 102.6L682.1 112.2L677.6 119.7L671.3 115.2Z"/><path fill="#1d5757" stroke="#1a4f4f" d="M602.8 144.8L611.5 137L609.2 130.4L600.2 135.1Z"/><path fill="#006149" stroke="#005741" d="M591.6 145.7L597.6 125.7L596.2 125.3L589 139.1Z"/><path fill="#2c1642" stroke="#27143b" d="M638 121.8L646.3 122.8L643.8 124.8L635.6 125.6Z"/><path fill="#007457" stroke="#00684e" d="M581.4 153.7L589 139.1L586.4 132.8L577.6 141.1Z"/><path fill="#1d5858" stroke="#1a4f4f" d="M605.4 154.7L613.8 143.7L611.5 137L602.8 144.8Z"/><path fill="#183048" stroke="#162b41" d="M613.9 129.2L622.9 126.5L621 124.3L611.9 125.6Z"/><path fill="#2a153f" stroke="#261339" d="M651.5 118.5L659.1 123L656.5 123.4L648.8 120.7Z"/><path fill="#28003c" stroke="#240036" d="M664.8 123.7L671.7 129.8L668.9 128.4L661.8 125.6Z"/><path fill="#162d43" stroke="#14283d" d="M627 131.1L635.6 125.6L633.5 124.8L624.9 128.8Z"/><path fill="#999e99" style="fill-opacity:0.35" d="M566 131.2L597.6 125.7L593.5 124.6L563.1 131.2Z"/><path fill="#004747" stroke="#004040" d="M589.8 132.4L599.1 126L597.6 125.7L587.8 127.4Z"/><path fill="#007155" stroke="#00664c" d="M585.2 166.5L591.6 145.7L589 139.1L581.4 153.7Z"/><path fill="#2e1745" stroke="#29153e" d="M640.6 117.9L648.8 120.7L646.3 122.8L638 121.8Z"/><path fill="#2e0045" stroke="#2a003e" d="M654.1 122.6L661.8 125.6L658.8 127.5L650.9 127.8Z"/><path fill="#007659" stroke="#006b50" d="M568.2 149.9L577.6 141.1L573.9 128.8L563.1 131.2Z"/><path fill="#560056" stroke="#4d004d" d="M682.3 89.1L686.8 104.4L682.1 112.2L676.6 102.6Z"/><path fill="#19314a" stroke="#162c43" d="M615.9 133L624.9 128.8L622.9 126.5L613.9 129.2Z"/><path fill="#999e99" style="fill-opacity:0.35" d="M607.5 128.2L635.6 125.6L629.5 123.2L602.3 126.8Z"/><path fill="#2c0041" stroke="#27003b" d="M668 121.7L674.5 131.1L671.7 129.8L664.8 123.7Z"/><path fill="#121237" stroke="#111132" d="M628.9 127.1L637.8 126.5L635.6 125.6L626.8 126.4Z"/><path fill="#007759" stroke="#006b50" d="M573.4 168.9L581.4 153.7L577.6 141.1L568.2 149.9Z"/><path fill="#004949" stroke="#004141" d="M592 137.5L600.7 126.4L599.1 126L589.8 132.4Z"/><path fill="#1a344e" stroke="#172f46" d="M604.2 132.1L613.9 129.2L611.9 125.6L602.3 126.8Z"/><path fill="#999e99" style="fill-opacity:0.35" d="M650 131.2L674.5 131.1L666.3 127.1L642.4 128.3Z"/><path fill="#19324c" stroke="#172d44" d="M618 136.9L627 131.1L624.9 128.8L615.9 133Z"/><path fill="#007558" stroke="#00694f" d="M578.6 188.2L585.2 166.5L581.4 153.7L573.4 168.9Z"/><path fill="#301848" stroke="#2b1540" d="M643.2 113.7L651.5 118.5L648.8 120.7L640.6 117.9Z"/><path fill="#32004a" stroke="#2d0043" d="M657.4 117.1L664.8 123.7L661.8 125.6L654.1 122.6Z"/><path fill="#005454" stroke="#004c4c" d="M580 139.1L589.8 132.4L587.8 127.4L577.2 129.2Z"/><path fill="#121237" stroke="#111132" d="M631.1 127.9L640 127.3L637.8 126.5L628.9 127.1Z"/><path fill="#004848" stroke="#004141" d="M594.2 142.9L602.3 126.8L600.7 126.4L592 137.5Z"/><path fill="#1b3550" stroke="#183048" d="M606.3 137.5L615.9 133L613.9 129.2L604.2 132.1Z"/><path fill="#33004d" stroke="#2e0045" d="M645.9 119.4L654.1 122.6L650.9 127.8L642.4 128.3Z"/><path fill="#121236" stroke="#101031" d="M619.4 127.9L628.9 127.1L626.8 126.4L617.5 127.3Z"/><path fill="#005555" stroke="#004d4d" d="M582.8 149.3L592 137.5L589.8 132.4L580 139.1Z"/><path fill="#34004e" stroke="#2f0046" d="M661 111.4L668 121.7L664.8 123.7L657.4 117.1Z"/><path fill="#121237" stroke="#101031" d="M633.3 128.7L642.4 128.3L640 127.3L631.1 127.9Z"/><path fill="#999e99" style="fill-opacity:0.35" d="M569.2 131.3L602.3 126.8L597.6 125.7L566 131.2Z"/><path fill="#1b3651" stroke="#183149" d="M608.3 143.1L618 136.9L615.9 133L606.3 137.5Z"/><path fill="#002c42" stroke="#00283c" d="M593.9 131.9L603.9 127.3L602.3 126.8L592 128.2Z"/><path fill="#005454" stroke="#004c4c" d="M585.7 159.8L594.2 142.9L592 137.5L582.8 149.3Z"/><path fill="#360051" stroke="#310049" d="M649.5 110.1L657.4 117.1L654.1 122.6L645.9 119.4Z"/><path fill="#005858" stroke="#004f4f" d="M569.5 146.3L580 139.1L577.2 129.2L566 131.2Z"/><path fill="#999e99" style="fill-opacity:0.35" d="M613.3 129.6L642.4 128.3L635.6 125.6L607.5 128.2Z"/><path fill="#121236" stroke="#101031" d="M621.5 128.5L631.1 127.9L628.9 127.1L619.4 127.9Z"/><path fill="#100030" stroke="#0e002b" d="M635.8 127.8L644.8 129.2L642.4 128.3L633.3 128.7Z"/><path fill="#002e44" stroke="#00293d" d="M595.8 135.7L605.7 127.7L603.9 127.3L593.9 131.9Z"/><path fill="#005858" stroke="#005050" d="M573.1 161.8L582.8 149.3L580 139.1L569.5 146.3Z"/><path fill="#121235" stroke="#101030" d="M609.3 128.6L619.4 127.9L617.5 127.3L607.5 128.2Z"/><path fill="#121236" stroke="#101030" d="M623.7 129.2L633.3 128.7L631.1 127.9L621.5 128.5Z"/><path fill="#380054" stroke="#32004b" d="M653.3 100.3L661 111.4L657.4 117.1L649.5 110.1Z"/><path fill="#003550" stroke="#003048" d="M583.1 136.8L593.9 131.9L592 128.2L581 129.7Z"/><path fill="#110034" stroke="#10002f" d="M638.3 126.9L647.4 130.2L644.8 129.2L635.8 127.8Z"/><path fill="#005858" stroke="#004f4f" d="M576.8 177.7L585.7 159.8L582.8 149.3L573.1 161.8Z"/><path fill="#002e45" stroke="#00293e" d="M597.8 139.6L607.5 128.2L605.7 127.7L595.8 135.7Z"/><path fill="#121235" stroke="#101030" d="M611.3 129.1L621.5 128.5L619.4 127.9L609.3 128.6Z"/><path fill="#14003d" stroke="#120037" d="M626.1 126.3L635.8 127.8L633.3 128.7L623.7 129.2Z"/><path fill="#003651" stroke="#003149" d="M585.2 144.2L595.8 135.7L593.9 131.9L583.1 136.8Z"/><path fill="#120037" stroke="#110032" d="M641 125.9L650 131.2L647.4 130.2L638.3 126.9Z"/><path fill="#999e99" style="fill-opacity:0.35" d="M572.9 131.3L607.5 128.2L602.3 126.8L569.2 131.3Z"/><path fill="#00143b" stroke="#001235" d="M598.5 131.3L609.3 128.6L607.5 128.2L596.7 129.1Z"/><path fill="#121235" stroke="#10102f" d="M613.3 129.6L623.7 129.2L621.5 128.5L611.3 129.1Z"/><path fill="#999e99" style="fill-opacity:0.35" d="M619.9 131.3L650 131.2L642.4 128.3L613.3 129.6Z"/><path fill="#003955" stroke="#00334d" d="M571.5 142.1L583.1 136.8L581 129.7L569.2 131.3Z"/><path fill="#150040" stroke="#13003a" d="M628.6 123.3L638.3 126.9L635.8 127.8L626.1 126.3Z"/><path fill="#003651" stroke="#003149" d="M587.4 151.8L597.8 139.6L595.8 135.7L585.2 144.2Z"/><path fill="#00143d" stroke="#001237" d="M600.4 133.5L611.3 129.1L609.3 128.6L598.5 131.3Z"/><path fill="#170046" stroke="#15003f" d="M615.6 124.7L626.1 126.3L623.7 129.2L613.3 129.6Z"/><path fill="#003956" stroke="#00344d" d="M573.9 153.3L585.2 144.2L583.1 136.8L571.5 142.1Z"/><path fill="#160043" stroke="#14003c" d="M631.2 120.2L641 125.9L638.3 126.9L628.6 123.3Z"/><path fill="#001745" stroke="#00153e" d="M587 134.1L598.5 131.3L596.7 129.1L585.3 130.2Z"/><path fill="#00153f" stroke="#001339" d="M602.4 135.8L613.3 129.6L611.3 129.1L600.4 133.5Z"/><path fill="#003956" stroke="#00344e" d="M576.4 164.9L587.4 151.8L585.2 144.2L573.9 153.3Z"/><path fill="#180049" stroke="#160042" d="M618.1 119.5L628.6 123.3L626.1 126.3L615.6 124.7Z"/><path fill="#001847" stroke="#001540" d="M588.7 138.1L600.4 133.5L598.5 131.3L587 134.1Z"/><path fill="#999e99" style="fill-opacity:0.35" d="M577 131.4L613.3 129.6L607.5 128.2L572.9 131.3Z"/><path fill="#000033" stroke="#00002e" d="M604 130.6L615.4 130.2L613.3 129.6L602.1 130.2Z"/><path fill="#19004b" stroke="#170044" d="M620.7 114.1L631.2 120.2L628.6 123.3L618.1 119.5Z"/><path fill="#00194c" stroke="#001744" d="M574.5 137.1L587 134.1L585.3 130.2L572.9 131.3Z"/><path fill="#001848" stroke="#001641" d="M590.6 142.4L602.4 135.8L600.4 133.5L588.7 138.1Z"/><path fill="#000033" stroke="#00002e" d="M606.1 131L617.6 130.7L615.4 130.2L604 130.6Z"/><path fill="#001a4d" stroke="#001746" d="M576.1 143.2L588.7 138.1L587 134.1L574.5 137.1Z"/><path fill="#000032" stroke="#00002d" d="M591.8 131L604 130.6L602.1 130.2L590.1 130.8Z"/><path fill="#000033" stroke="#00002e" d="M608.2 131.4L619.9 131.3L617.6 130.7L606.1 131Z"/><path fill="#001a4e" stroke="#001746" d="M577.9 149.5L590.6 142.4L588.7 138.1L576.1 143.2Z"/><path fill="#999e99" style="fill-opacity:0.35" d="M581.8 131.5L619.9 131.3L613.3 129.6L577 131.4Z"/><path fill="#000032" stroke="#00002d" d="M593.6 131.2L606.1 131L604 130.6L591.8 131Z"/><path fill="#000031" stroke="#00002c" d="M578.5 131.4L591.8 131L590.1 130.8L577 131.4Z"/><path fill="#000032" stroke="#00002d" d="M595.6 131.4L608.2 131.4L606.1 131L593.6 131.2Z"/><path fill="#000031" stroke="#00002c" d="M580.1 131.4L593.6 131.2L591.8 131L578.5 131.4Z"/><path fill="#000030" stroke="#00002c" d="M581.8 131.5L595.6 131.4L593.6 131.2L580.1 131.4Z"/></g><path d="M581.8 131.5L768 130.8L705.8 67.1L552.4 131ZM581.8 131.5L619.9 131.3L613.3 129.6L577 131.4ZM577.9 149.5L613.3 129.6L607.5 128.2L572.9 131.3ZM576.4 164.9L607.5 128.2L602.3 126.8L569.2 131.3ZM576.8 177.7L602.3 126.8L597.6 125.7L566 131.2ZM578.6 188.2L597.6 125.7L593.5 124.6L563.1 131.2ZM581.6 196.8L593.5 124.6L589.7 123.6L560.6 131.1ZM585.3 203.5L589.7 123.6L586.2 122.7L558.2 131.1ZM589.5 208.7L586.2 122.7L583.1 121.9L556.1 131ZM594 212.6L583.1 121.9L580.2 121.2L554.2 131ZM598.7 215.4L580.2 121.2L577.5 120.5L552.4 131ZM620.7 114.1L650 131.2L642.4 128.3L613.3 129.6ZM613.3 129.6L642.4 128.3L635.6 125.6L607.5 128.2ZM608.3 143.1L635.6 125.6L629.5 123.2L602.3 126.8ZM605.4 154.7L629.5 123.2L623.9 121L597.6 125.7ZM604.2 164.4L623.9 121L618.9 119.1L593.5 124.6ZM604.2 172.4L618.9 119.1L614.3 117.3L589.7 123.6ZM605.3 178.9L614.3 117.3L610.1 115.6L586.2 122.7ZM607.1 184.1L610.1 115.6L606.2 114.1L583.1 121.9ZM609.5 188.2L606.2 114.1L602.6 112.7L580.2 121.2ZM612.2 191.3L602.6 112.7L599.3 111.4L577.5 120.5ZM653.3 100.3L674.5 131.1L666.3 127.1L642.4 128.3ZM643.2 113.7L666.3 127.1L658.9 123.5L635.6 125.6ZM635.6 125.6L658.9 123.5L652.2 120.2L629.5 123.2ZM630.1 135.9L652.2 120.2L646.1 117.2L623.9 121ZM626.3 144.7L646.1 117.2L640.5 114.4L618.9 119.1ZM624 152.1L640.5 114.4L635.4 111.9L614.3 117.3ZM622.9 158.2L635.4 111.9L630.6 109.5L610.1 115.6ZM622.7 163.3L630.6 109.5L626.3 107.4L606.2 114.1ZM623.2 167.4L626.3 107.4L622.2 105.4L602.6 112.7ZM624.3 170.6L622.2 105.4L618.4 103.5L599.3 111.4ZM682.3 89.1L694.8 131.1L686.3 126.2L666.3 127.1ZM669.9 100.7L686.3 126.2L678.6 121.7L658.9 123.5ZM660 111.1L678.6 121.7L671.6 117.6L652.2 120.2ZM652.2 120.2L671.6 117.6L665.1 113.8L646.1 117.2ZM646.3 128L665.1 113.8L659.1 110.4L640.5 114.4ZM642 134.8L659.1 110.4L653.6 107.2L635.4 111.9ZM639 140.5L653.6 107.2L648.6 104.2L630.6 109.5ZM637.1 145.3L648.6 104.2L643.8 101.4L626.3 107.4ZM636 149.2L643.8 101.4L639.4 98.9L622.2 105.4ZM635.7 152.4L639.4 98.9L635.3 96.5L618.4 103.5ZM708.9 80L711.8 131L703.2 125.3L686.3 126.2ZM694.4 90L703.2 125.3L695.4 120.1L678.6 121.7ZM682.5 98.9L695.4 120.1L688.2 115.4L671.6 117.6ZM672.8 106.8L688.2 115.4L681.5 110.9L665.1 113.8ZM665.1 113.8L681.5 110.9L675.4 106.8L659.1 110.4ZM659 119.9L675.4 106.8L669.6 103.1L653.6 107.2ZM654.3 125.1L669.6 103.1L664.3 99.5L648.6 104.2ZM650.9 129.5L664.3 99.5L659.3 96.2L643.8 101.4ZM648.4 133.2L659.3 96.2L654.7 93.1L639.4 98.9ZM646.7 136.2L654.7 93.1L650.3 90.2L635.3 96.5ZM733.8 72.7L726.4 131L717.8 124.6L703.2 125.3ZM717.6 81.1L717.8 124.6L709.9 118.8L695.4 120.1ZM703.9 88.6L709.9 118.8L702.6 113.4L688.2 115.4ZM692.5 95.5L702.6 113.4L695.9 108.4L681.5 110.9ZM683 101.5L695.9 108.4L689.6 103.8L675.4 106.8ZM675.4 106.8L689.6 103.8L683.7 99.4L669.6 103.1ZM669.2 111.5L683.7 99.4L678.2 95.4L664.3 99.5ZM664.3 115.5L678.2 95.4L673.1 91.6L659.3 96.2ZM660.5 118.9L673.1 91.6L668.3 88L654.7 93.1ZM657.5 121.7L668.3 88L663.7 84.6L650.3 90.2ZM757.4 66.9L738.9 130.9L730.5 124L717.8 124.6ZM739.6 73.7L730.5 124L722.6 117.7L709.9 118.8ZM724.3 80L722.6 117.7L715.3 111.7L702.6 113.4ZM711.3 85.7L715.3 111.7L708.5 106.2L695.9 108.4ZM700.4 90.8L708.5 106.2L702.2 101L689.6 103.8ZM691.3 95.4L702.2 101L696.2 96.2L683.7 99.4ZM683.7 99.4L696.2 96.2L690.7 91.7L678.2 95.4ZM677.5 102.9L690.7 91.7L685.4 87.4L673.1 91.6ZM672.5 106L685.4 87.4L680.5 83.4L668.3 88ZM668.4 108.6L680.5 83.4L675.8 79.6L663.7 84.6ZM780 62.2L749.9 130.9L741.5 123.5L730.5 124ZM760.7 67.6L741.5 123.5L733.8 116.6L722.6 117.7ZM744 72.6L733.8 116.6L726.5 110.2L715.3 111.7ZM729.6 77.3L726.5 110.2L719.8 104.2L708.5 106.2ZM717.3 81.5L719.8 104.2L713.4 98.6L702.2 101ZM706.9 85.3L713.4 98.6L707.4 93.3L696.2 96.2ZM698.1 88.7L707.4 93.3L701.8 88.3L690.7 91.7ZM690.7 91.7L701.8 88.3L696.5 83.7L685.4 87.4ZM684.5 94.3L696.5 83.7L691.5 79.2L680.5 83.4ZM679.4 96.5L691.5 79.2L686.8 75L675.8 79.6ZM801.7 58.7L759.5 130.8L751.3 123L741.5 123.5ZM781.1 62.7L751.3 123L743.7 115.7L733.8 116.6ZM763.1 66.4L743.7 115.7L736.5 108.9L726.5 110.2ZM747.4 70L736.5 108.9L729.8 102.5L719.8 104.2ZM733.9 73.3L729.8 102.5L723.5 96.4L713.4 98.6ZM722.2 76.3L723.5 96.4L717.5 90.7L707.4 93.3ZM712.2 79L717.5 90.7L711.9 85.4L701.8 88.3ZM703.7 81.5L711.9 85.4L706.6 80.3L696.5 83.7ZM696.5 83.7L706.6 80.3L701.5 75.5L691.5 79.2ZM690.4 85.6L701.5 75.5L696.7 70.9L686.8 75ZM822.4 56L768 130.8L760 122.6L751.3 123ZM800.6 58.6L760 122.6L752.5 114.9L743.7 115.7ZM781.4 61.2L752.5 114.9L745.5 107.7L736.5 108.9ZM764.7 63.7L745.5 107.7L738.8 100.9L729.8 102.5ZM750 66.1L738.8 100.9L732.5 94.5L723.5 96.4ZM737.3 68.3L732.5 94.5L726.6 88.4L717.5 90.7ZM726.3 70.4L726.6 88.4L721 82.6L711.9 85.4ZM716.7 72.3L721 82.6L715.7 77.2L706.6 80.3ZM708.5 74L715.7 77.2L710.6 72L701.5 75.5ZM701.5 75.5L710.6 72L705.8 67.1L696.7 70.9Z" fill="none" stroke="#333" stroke-opacity="0.45" stroke-width="0.6"/></g><g clip-path="url(#c_front)"><rect x="239" y="230" width="300" height="200" fill="url(#gv)"/><rect x="239" y="230" width="300" height="200" fill="url(#gh)" mask="url(#mt)"/><g class="vfront"><path fill="#69ec4f" stroke="#69ec4f" d="M387.8 347.3L388.1 328.4L383.3 316.4L380.7 330.2Z"/><path fill="#83eb4e" stroke="#83eb4e" d="M405.1 326.9L406.9 311.5L403.3 301.4L399.6 312.9Z"/><path fill="#4fed4f" stroke="#4fed4f" d="M370.7 368L369.3 345.5L363.5 331.4L362 347.7Z"/><path fill="#6df652" stroke="#6df652" d="M380.7 330.2L383.3 316.4L378.6 304.4L373.6 313.1Z"/><path fill="#88f652" stroke="#88f652" d="M399.6 312.9L403.3 301.4L399.6 291.4L394.1 299Z"/><path fill="#9dec4f" stroke="#9dec4f" d="M422.5 307L425.9 294.9L423.3 286.8L418.6 296Z"/><path fill="#52f752" stroke="#52f752" d="M362 347.7L363.5 331.4L357.7 317.4L353.2 327.3Z"/><path fill="#a4f652" stroke="#a4f652" d="M418.6 296L423.3 286.8L420.6 278.6L414.6 285.1Z"/><path fill="#70fb54" stroke="#70fb54" d="M373.6 313.1L378.6 304.4L373.9 292.4L366.6 296Z"/><path fill="#8bfb54" stroke="#8bfb54" d="M394.1 299L399.6 291.4L395.9 281.4L388.6 285.1Z"/><path fill="#54fc54" stroke="#54fc54" d="M353.2 327.3L357.7 317.4L351.9 303.3L344.5 307Z"/><path fill="#35ee4f" stroke="#35ee4f" d="M353.6 388.9L350.6 362.6L343.7 346.5L343.2 365.2Z"/><path fill="#a8fc54" stroke="#a8fc54" d="M414.6 285.1L420.6 278.6L418 270.5L410.6 274.1Z"/><path fill="#37f752" stroke="#37f752" d="M343.2 365.2L343.7 346.5L336.7 330.4L332.9 341.6Z"/><path fill="#38fc54" stroke="#38fc54" d="M332.9 341.6L336.7 330.4L329.8 314.2L322.5 317.9Z"/><path fill="#c4fc54" stroke="#c4fc54" d="M435.2 271.3L441.7 265.9L440 259.5L432.7 263.2Z"/><path fill="#6ffa53" stroke="#6ffa53" d="M378.6 304.4L383.6 295.6L381.3 288.7L373.9 292.4Z"/><path fill="#8bfa53" stroke="#8bfa53" d="M399.6 291.4L405.1 283.9L403.3 277.8L395.9 281.4Z"/><path fill="#53fa53" stroke="#53fa53" d="M357.7 317.4L362.1 307.4L359.2 299.7L351.9 303.3Z"/><path fill="#a6f953" stroke="#a6f953" d="M420.6 278.6L426.7 272.2L425.3 266.8L418 270.5Z"/><path fill="#c0f652" stroke="#c0f652" d="M437.8 279.5L443.4 272.3L441.7 265.9L435.2 271.3Z"/><path fill="#38fa53" stroke="#38fa53" d="M336.7 330.4L340.6 319.2L337.2 310.6L329.8 314.2Z"/><path fill="#1cfc54" stroke="#1cfc54" d="M312.4 355.7L315.8 343.4L307.8 325.2L300.4 328.9Z"/><path fill="#6aed4f" stroke="#6aed4f" d="M383.3 316.4L386 302.5L383.6 295.6L378.6 304.4Z"/><path fill="#bef451" stroke="#bef451" d="M441.7 265.9L448.2 260.5L447.4 255.9L440 259.5Z"/><path fill="#d8f251" stroke="#d8f251" d="M455.9 257.8L462.9 253.4L462.1 248.6L454.7 252.2Z"/><path fill="#84ed4f" stroke="#84ed4f" d="M403.3 301.4L407 290L405.1 283.9L399.6 291.4Z"/><path fill="#b8ed4f" stroke="#b8ed4f" d="M440.3 287.6L445.1 278.8L443.4 272.3L437.8 279.5Z"/><path fill="#4fee4f" stroke="#4fee4f" d="M363.5 331.4L365 315.2L362.1 307.4L357.7 317.4Z"/><path fill="#1cf953" stroke="#1cf953" d="M315.8 343.4L319.1 331L315.1 321.6L307.8 325.2Z"/><path fill="#cce54c" stroke="#cce54c" d="M462.9 253.4L469.8 249L469.4 244.9L462.1 248.6Z"/><path fill="#63df4a" stroke="#63df4a" d="M383.6 295.6L388.6 286.9L388.6 285.1L381.3 288.7Z"/><path fill="#60d948" stroke="#60d948" d="M388.1 328.4L388.3 309.4L386 302.5L383.3 316.4Z"/><path fill="#7bdd4a" stroke="#7bdd4a" d="M405.1 283.9L410.6 276.3L410.6 274.1L403.3 277.8Z"/><path fill="#4be04b" stroke="#4be04b" d="M362.1 307.4L366.6 297.5L366.6 296L359.2 299.7Z"/><path fill="#91d948" stroke="#91d948" d="M426.7 272.2L432.7 265.7L432.7 263.2L425.3 266.8Z"/><path fill="#32e04b" stroke="#32e04b" d="M340.6 319.2L344.5 308L344.5 306.9L337.2 310.6Z"/><path fill="#a6d547" stroke="#a6d547" d="M448.2 260.5L454.7 255.1L454.7 252.2L447.4 255.9Z"/><path fill="#9eed4f" stroke="#9eed4f" d="M423.3 286.8L428 277.5L426.7 272.2L420.6 278.6Z"/><path fill="#78d848" stroke="#78d848" d="M406.9 311.5L408.8 296.1L407 290L403.3 301.4Z"/><path fill="#19df4a" stroke="#19df4a" d="M319.1 331L322.5 318.6L322.5 317.9L315.1 321.6Z"/><path fill="#b9d045" stroke="#b9d045" d="M469.8 249L476.8 244.5L476.8 241.2L469.4 244.9Z"/><path fill="#00fb54" stroke="#00fb54" d="M292 369.8L294.8 356.2L285.7 336.2L278.4 339.8Z"/><path fill="#00f752" stroke="#00f752" d="M294.8 356.2L297.6 342.7L293.1 332.5L285.7 336.2Z"/><path fill="#00dc49" stroke="#00dc49" d="M297.6 342.7L300.4 329.2L300.4 328.9L293.1 332.5Z"/><path fill="#c6c642" stroke="#c6c642" d="M476.8 244.5L484.1 241L484.1 237.6L476.8 241.2Z"/><path fill="#c8c843" stroke="#c8c843" d="M484.1 241L491.5 237.5L491.5 234L484.1 237.6Z"/><path fill="#caca43" stroke="#caca43" d="M491.5 237.5L498.8 234L498.8 230.3L491.5 234Z"/><path fill="#49da49" stroke="#49da49" d="M369.3 345.5L367.9 322.9L365 315.2L363.5 331.4Z"/><path fill="#35ee4f" stroke="#35ee4f" d="M343.7 346.5L344.1 327.8L340.6 319.2L336.7 330.4Z"/><path fill="#1bf752" stroke="#1bf752" d="M324.5 382.6L323.8 361.5L315.8 343.4L312.4 355.7Z"/><path fill="#b6ea4e" stroke="#b6ea4e" d="M443.4 272.3L449.1 265.2L448.2 260.5L441.7 265.9Z"/><path fill="#91d948" stroke="#91d948" d="M425.9 294.9L429.3 282.9L428 277.5L423.3 286.8Z"/><path fill="#d4ef50" stroke="#d4ef50" d="M457.2 263.4L463.7 258.2L462.9 253.4L455.9 257.8Z"/><path fill="#31db49" stroke="#31db49" d="M350.6 362.6L347.6 336.4L344.1 327.8L343.7 346.5Z"/><path fill="#1aed4f" stroke="#1aed4f" d="M323.8 361.5L323.1 340.4L319.1 331L315.8 343.4Z"/><path fill="#1aee4f" stroke="#1aee4f" d="M336.5 409.5L331.8 379.7L323.8 361.5L324.5 382.6Z"/><path fill="#c7e04b" stroke="#c7e04b" d="M463.7 258.2L470.2 253L469.8 249L462.9 253.4Z"/><path fill="#53bb3e" stroke="#53bb3e" d="M386 302.5L388.6 288.7L388.6 286.9L383.6 295.6Z"/><path fill="#69be3f" stroke="#69be3f" d="M407 290L410.6 278.5L410.6 276.3L405.1 283.9Z"/><path fill="#3eba3e" stroke="#3eba3e" d="M365 315.2L366.6 298.9L366.6 297.5L362.1 307.4Z"/><path fill="#81c140" stroke="#81c140" d="M428 277.5L432.7 268.3L432.7 265.7L426.7 272.2Z"/><path fill="#aadb49" stroke="#aadb49" d="M445.1 278.8L449.9 269.9L449.1 265.2L443.4 272.3Z"/><path fill="#29ba3e" stroke="#29ba3e" d="M344.1 327.8L344.5 309.1L344.5 308L340.6 319.2Z"/><path fill="#9ac542" stroke="#9ac542" d="M449.1 265.2L454.7 258L454.7 255.1L448.2 260.5Z"/><path fill="#cfe94e" stroke="#cfe94e" d="M458.4 269L464.5 263.1L463.7 258.2L457.2 263.4Z"/><path fill="#15ba3e" stroke="#15ba3e" d="M323.1 340.4L322.5 319.4L322.5 318.6L319.1 331Z"/><path fill="#b3c943" stroke="#b3c943" d="M470.2 253L476.8 247.8L476.8 244.5L469.8 249Z"/><path fill="#00f652" stroke="#00f652" d="M305.5 399.7L303.8 376.3L294.8 356.2L292 369.8Z"/><path fill="#00ec4f" stroke="#00ec4f" d="M303.8 376.3L302.1 353L297.6 342.7L294.8 356.2Z"/><path fill="#00b93e" stroke="#00b93e" d="M302.1 353L300.4 329.6L300.4 329.2L297.6 342.7Z"/><path fill="#c6c642" stroke="#c6c642" d="M476.8 247.8L484.1 244.4L484.1 241L476.8 244.5Z"/><path fill="#c8c843" stroke="#c8c843" d="M484.1 244.4L491.5 241L491.5 237.5L484.1 241Z"/><path fill="#94a3bd" style="fill-opacity:0.7" d="M278.4 339.8L300.4 329.9L300.4 328.9L278.4 339.8Z"/><path fill="#94a3bd" style="fill-opacity:0.7" d="M300.4 329.9L322.5 320.1L322.5 317.9L300.4 328.9Z"/><path fill="#94a3bd" style="fill-opacity:0.7" d="M322.5 320.1L344.5 310.2L344.5 307L322.5 317.9Z"/><path fill="#94a3bd" style="fill-opacity:0.7" d="M344.5 310.2L366.6 300.4L366.6 296L344.5 307Z"/><path fill="#94a3bd" style="fill-opacity:0.7" d="M366.6 300.4L388.6 290.5L388.6 285.1L366.6 296Z"/><path fill="#94a3bd" style="fill-opacity:0.7" d="M388.6 290.5L410.6 280.7L410.6 274.1L388.6 285.1Z"/><path fill="#94a3bd" style="fill-opacity:0.7" d="M410.6 280.7L432.7 270.8L432.7 263.2L410.6 274.1Z"/><path fill="#94a3bd" style="fill-opacity:0.7" d="M432.7 270.8L454.7 261L454.7 252.2L432.7 263.2Z"/><path fill="#94a3bd" style="fill-opacity:0.7" d="M454.7 261L476.8 251.1L476.8 241.2L454.7 252.2Z"/><path fill="#94a3bd" style="fill-opacity:0.7" d="M476.8 251.1L498.8 241.2L498.8 230.3L476.8 241.2Z"/><path fill="#caca43" stroke="#caca43" d="M491.5 241L498.8 237.6L498.8 234L491.5 237.5Z"/><path fill="#18dc49" stroke="#18dc49" d="M331.8 379.7L327.1 349.9L323.1 340.4L323.8 361.5Z"/><path fill="#c0d848" stroke="#c0d848" d="M464.5 263.1L470.6 257.1L470.2 253L463.7 258.2Z"/><path fill="#469d34" stroke="#469d34" d="M388.3 309.4L388.6 290.5L388.6 288.7L386 302.5Z"/><path fill="#59a136" stroke="#59a136" d="M408.8 296.1L410.6 280.7L410.6 278.5L407 290Z"/><path fill="#349c34" stroke="#349c34" d="M367.9 322.9L366.6 300.4L366.6 298.9L365 315.2Z"/><path fill="#70a838" stroke="#70a838" d="M429.3 282.9L432.7 270.8L432.7 268.3L428 277.5Z"/><path fill="#239d34" stroke="#239d34" d="M347.6 336.4L344.5 310.2L344.5 309.1L344.1 327.8Z"/><path fill="#8bb33c" stroke="#8bb33c" d="M449.9 269.9L454.7 261L454.7 258L449.1 265.2Z"/><path fill="#129e35" stroke="#129e35" d="M327.1 349.9L322.5 320.1L322.5 319.4L323.1 340.4Z"/><path fill="#acc140" stroke="#acc140" d="M470.6 257.1L476.8 251.1L476.8 247.8L470.2 253Z"/><path fill="#00ee4f" stroke="#00ee4f" d="M319.1 429.7L312.9 396.4L303.8 376.3L305.5 399.7Z"/><path fill="#00dc49" stroke="#00dc49" d="M312.9 396.4L306.7 363.2L302.1 353L303.8 376.3Z"/><path fill="#00a035" stroke="#00a035" d="M306.7 363.2L300.4 329.9L300.4 329.6L302.1 353Z"/><path fill="#c7c742" stroke="#c7c742" d="M476.8 251.1L484.1 247.8L484.1 244.4L476.8 247.8Z"/><path fill="#c9c943" stroke="#c9c943" d="M484.1 247.8L491.5 244.5L491.5 241L484.1 244.4Z"/><path fill="#cbcb44" stroke="#cbcb44" d="M491.5 244.5L498.8 241.2L498.8 237.6L491.5 241Z"/><path fill="#69d24f" stroke="#69d24f" d="M381.9 342.9L384.1 327.3L380.7 317.2L376.8 328.7Z"/><path fill="#4fd34f" stroke="#4fd34f" d="M364.2 362.5L365 343.2L360.6 331.1L357.7 345.1Z"/><path fill="#6edb52" stroke="#6edb52" d="M376.8 328.7L380.7 317.2L377.3 307.1L371.7 314.5Z"/><path fill="#52db52" stroke="#52db52" d="M357.7 345.1L360.6 331.1L356.2 319L351.1 327.7Z"/><path fill="#83d24f" stroke="#83d24f" d="M399.7 323.7L403.4 311.5L400.9 303.4L396 312.6Z"/><path fill="#70e054" stroke="#70e054" d="M371.7 314.5L377.3 307.1L373.9 297.1L366.6 300.4Z"/><path fill="#89db52" stroke="#89db52" d="M396 312.6L400.9 303.4L398.4 295.3L392.3 301.6Z"/><path fill="#54e054" stroke="#54e054" d="M351.1 327.7L356.2 319L351.9 306.9L344.5 310.2Z"/><path fill="#8ce054" stroke="#8ce054" d="M392.3 301.6L398.4 295.3L395.9 287.2L388.6 290.5Z"/><path fill="#38e054" stroke="#38e054" d="M330.5 340.8L335.2 331L329.8 316.8L322.5 320.1Z"/><path fill="#a7df54" stroke="#a7df54" d="M413 288.8L419.6 283.6L418 277.4L410.6 280.7Z"/><path fill="#37db52" stroke="#37db52" d="M338.6 361.5L340.6 345.2L335.2 331L330.5 340.8Z"/><path fill="#6fde53" stroke="#6fde53" d="M377.3 307.1L383 299.7L381.3 293.8L373.9 297.1Z"/><path fill="#53de53" stroke="#53de53" d="M356.2 319L361.4 310.4L359.2 303.7L351.9 306.9Z"/><path fill="#8adc53" stroke="#8adc53" d="M398.4 295.3L404.5 289.1L403.3 284L395.9 287.2Z"/><path fill="#35d34f" stroke="#35d34f" d="M346.6 382.3L345.9 359.3L340.6 345.2L338.6 361.5Z"/><path fill="#37dd53" stroke="#37dd53" d="M335.2 331L339.9 321.2L337.2 313.5L329.8 316.8Z"/><path fill="#1cdf54" stroke="#1cdf54" d="M309.9 353.9L314.1 342.9L307.8 326.7L300.4 329.9Z"/><path fill="#a1d751" stroke="#a1d751" d="M419.6 283.6L426.1 278.5L425.3 274.1L418 277.4Z"/><path fill="#bbd650" stroke="#bbd650" d="M433.8 276.2L440.8 272.1L440 267.5L432.7 270.8Z"/><path fill="#a4db52" stroke="#a4db52" d="M415.4 296.9L421.2 289.9L419.6 283.6L413 288.8Z"/><path fill="#1cdd53" stroke="#1cdd53" d="M314.1 342.9L318.3 331.9L315.1 323.4L307.8 326.7Z"/><path fill="#b0c94b" stroke="#b0c94b" d="M440.8 272.1L447.8 268L447.4 264.2L440 267.5Z"/><path fill="#60c148" stroke="#60c148" d="M383 299.7L388.6 292.4L388.6 290.5L381.3 293.8Z"/><path fill="#49c249" stroke="#49c249" d="M361.4 310.4L366.6 301.8L366.6 300.4L359.2 303.7Z"/><path fill="#77be47" stroke="#77be47" d="M404.5 289.1L410.6 282.9L410.6 280.7L403.3 284Z"/><path fill="#31c349" stroke="#31c349" d="M339.9 321.2L344.5 311.3L344.5 310.2L337.2 313.5Z"/><path fill="#8bba46" stroke="#8bba46" d="M426.1 278.5L432.7 273.4L432.7 270.8L425.3 274.1Z"/><path fill="#18c249" stroke="#18c249" d="M318.3 331.9L322.5 320.8L322.5 320.1L315.1 323.4Z"/><path fill="#9eb544" stroke="#9eb544" d="M447.8 268L454.7 263.9L454.7 261L447.4 264.2Z"/><path fill="#69d34f" stroke="#69d34f" d="M380.7 317.2L384.7 305.7L383 299.7L377.3 307.1Z"/><path fill="#9ed34f" stroke="#9ed34f" d="M417.8 305L422.8 296.2L421.2 289.9L415.4 296.9Z"/><path fill="#4fd34f" stroke="#4fd34f" d="M360.6 331.1L363.6 317.2L361.4 310.4L356.2 319Z"/><path fill="#00de53" stroke="#00de53" d="M289.3 366.9L293 354.7L285.7 336.5L278.4 339.8Z"/><path fill="#00db52" stroke="#00db52" d="M293 354.7L296.7 342.5L293.1 333.2L285.7 336.5Z"/><path fill="#00c148" stroke="#00c148" d="M296.7 342.5L300.4 330.3L300.4 329.9L293.1 333.2Z"/><path fill="#abab40" stroke="#abab40" d="M454.7 263.9L462.1 260.7L462.1 257.7L454.7 261Z"/><path fill="#adad41" stroke="#adad41" d="M462.1 260.7L469.4 257.6L469.4 254.4L462.1 257.7Z"/><path fill="#afaf42" stroke="#afaf42" d="M469.4 257.6L476.8 254.4L476.8 251.1L469.4 254.4Z"/><path fill="#83d24f" stroke="#83d24f" d="M400.9 303.4L405.8 294.2L404.5 289.1L398.4 295.3Z"/><path fill="#bfaa40" stroke="#bfaa40" d="M491.1 247.2L498.8 244.9L498.8 241.2L491.5 244.5Z"/><path fill="#9d8c34" stroke="#9d8c34" d="M483.4 249.5L491.1 247.2L491.5 244.5L484.1 247.8Z"/><path fill="#35d34f" stroke="#35d34f" d="M340.6 345.2L342.5 328.8L339.9 321.2L335.2 331Z"/><path fill="#1bdb52" stroke="#1bdb52" d="M319.5 377.9L320.5 359.1L314.1 342.9L309.9 353.9Z"/><path fill="#61c149" stroke="#61c149" d="M384.1 327.3L386.4 311.6L384.7 305.7L380.7 317.2Z"/><path fill="#7d6f2a" stroke="#7d6f2a" d="M475.7 251.8L483.4 249.5L484.1 247.8L476.8 251.1Z"/><path fill="#9bcf4e" stroke="#9bcf4e" d="M421.2 289.9L426.9 282.9L426.1 278.5L419.6 283.6Z"/><path fill="#b8d34f" stroke="#b8d34f" d="M435 281.6L441.6 276.7L440.8 272.1L433.8 276.2Z"/><path fill="#49c249" stroke="#49c249" d="M365 343.2L365.8 324L363.6 317.2L360.6 331.1Z"/><path fill="#79c249" stroke="#79c249" d="M403.4 311.5L407 299.4L405.8 294.2L400.9 303.4Z"/><path fill="#1ad24f" stroke="#1ad24f" d="M320.5 359.1L321.5 340.3L318.3 331.9L314.1 342.9Z"/><path fill="#acc54a" stroke="#acc54a" d="M441.6 276.7L448.1 271.7L447.8 268L440.8 272.1Z"/><path fill="#31c249" stroke="#31c249" d="M345.9 359.3L345.2 336.4L342.5 328.8L340.6 345.2Z"/><path fill="#1ad44f" stroke="#1ad44f" d="M329 401.9L326.8 375.4L320.5 359.1L319.5 377.9Z"/><path fill="#54a83f" stroke="#54a83f" d="M384.7 305.7L388.6 294.2L388.6 292.4L383 299.7Z"/><path fill="#3ea63e" stroke="#3ea63e" d="M363.6 317.2L366.6 303.3L366.6 301.8L361.4 310.4Z"/><path fill="#6aaa40" stroke="#6aaa40" d="M405.8 294.2L410.6 285.1L410.6 282.9L404.5 289.1Z"/><path fill="#29a53e" stroke="#29a53e" d="M342.5 328.8L344.5 312.4L344.5 311.3L339.9 321.2Z"/><path fill="#82ad41" stroke="#82ad41" d="M426.9 282.9L432.7 275.9L432.7 273.4L426.1 278.5Z"/><path fill="#91c249" stroke="#91c249" d="M422.8 296.2L427.7 287.3L426.9 282.9L421.2 289.9Z"/><path fill="#15a43e" stroke="#15a43e" d="M321.5 340.3L322.5 321.6L322.5 320.8L318.3 331.9Z"/><path fill="#99af42" stroke="#99af42" d="M448.1 271.7L454.7 266.8L454.7 263.9L447.8 268Z"/><path fill="#b4ce4d" stroke="#b4ce4d" d="M436.1 287L442.3 281.2L441.6 276.7L435 281.6Z"/><path fill="#94a3bd" style="fill-opacity:0.7" d="M300.4 331L322.5 322.3L322.5 320.1L300.4 329.9Z"/><path fill="#00da52" stroke="#00da52" d="M300.2 394L300.3 372.9L293 354.7L289.3 366.9Z"/><path fill="#00d14e" stroke="#00d14e" d="M300.3 372.9L300.4 351.8L296.7 342.5L293 354.7Z"/><path fill="#00a33d" stroke="#00a33d" d="M300.4 351.8L300.4 330.7L300.4 330.3L296.7 342.5Z"/><path fill="#94a3bd" style="fill-opacity:0.7" d="M278.4 339.8L300.4 331L300.4 329.9L278.4 339.8Z"/><path fill="#94a3bd" style="fill-opacity:0.7" d="M322.5 322.3L344.5 313.5L344.5 310.2L322.5 320.1Z"/><path fill="#94a3bd" style="fill-opacity:0.7" d="M344.5 313.5L366.6 304.8L366.6 300.4L344.5 310.2Z"/><path fill="#94a3bd" style="fill-opacity:0.7" d="M366.6 304.8L388.6 296L388.6 290.5L366.6 300.4Z"/><path fill="#94a3bd" style="fill-opacity:0.7" d="M388.6 296L410.6 287.2L410.6 280.7L388.6 290.5Z"/><path fill="#94a3bd" style="fill-opacity:0.7" d="M410.6 287.2L432.7 278.5L432.7 270.8L410.6 280.7Z"/><path fill="#94a3bd" style="fill-opacity:0.7" d="M432.7 278.5L454.7 269.7L454.7 261L432.7 270.8Z"/><path fill="#94a3bd" style="fill-opacity:0.7" d="M454.7 269.7L476.8 261L476.8 251.1L454.7 261Z"/><path fill="#94a3bd" style="fill-opacity:0.7" d="M476.8 261L498.8 252.2L498.8 241.2L476.8 251.1Z"/><path fill="#abab40" stroke="#abab40" d="M454.7 266.8L462.1 263.8L462.1 260.7L454.7 263.9Z"/><path fill="#aeae41" stroke="#aeae41" d="M462.1 263.8L469.4 260.7L469.4 257.6L462.1 260.7Z"/><path fill="#afaf42" stroke="#afaf42" d="M469.4 260.7L476.8 257.7L476.8 254.4L469.4 257.6Z"/><path fill="#c2ad41" stroke="#c2ad41" d="M490.8 249.9L498.8 248.6L498.8 244.9L491.1 247.2Z"/><path fill="#18c349" stroke="#18c349" d="M326.8 375.4L324.6 348.8L321.5 340.3L320.5 359.1Z"/><path fill="#a7be47" stroke="#a7be47" d="M442.3 281.2L448.5 275.5L448.1 271.7L441.6 276.7Z"/><path fill="#489036" stroke="#489036" d="M386.4 311.6L388.6 296L388.6 294.2L384.7 305.7Z"/><path fill="#358d35" stroke="#358d35" d="M365.8 324L366.6 304.8L366.6 303.3L363.6 317.2Z"/><path fill="#5d9538" stroke="#5d9538" d="M407 299.4L410.6 287.2L410.6 285.1L405.8 294.2Z"/><path fill="#a29036" stroke="#a29036" d="M482.7 251.2L490.8 249.9L491.1 247.2L483.4 249.5Z"/><path fill="#238d35" stroke="#238d35" d="M345.2 336.4L344.5 313.5L344.5 312.4L342.5 328.8Z"/><path fill="#769e3b" stroke="#769e3b" d="M427.7 287.3L432.7 278.5L432.7 275.9L426.9 282.9Z"/><path fill="#128d35" stroke="#128d35" d="M324.6 348.8L322.5 322.3L322.5 321.6L321.5 340.3Z"/><path fill="#94a93f" stroke="#94a93f" d="M448.5 275.5L454.7 269.7L454.7 266.8L448.1 271.7Z"/><path fill="#81732b" stroke="#81732b" d="M474.7 252.5L482.7 251.2L483.4 249.5L475.7 251.8Z"/><path fill="#00d34f" stroke="#00d34f" d="M311.1 421.1L307.6 391.1L300.3 372.9L300.2 394Z"/><path fill="#00c349" stroke="#00c349" d="M307.6 391.1L304 361.1L300.4 351.8L300.3 372.9Z"/><path fill="#008e35" stroke="#008e35" d="M304 361.1L300.4 331L300.4 330.7L300.4 351.8Z"/><path fill="#acac40" stroke="#acac40" d="M454.7 269.7L462.1 266.8L462.1 263.8L454.7 266.8Z"/><path fill="#aeae41" stroke="#aeae41" d="M462.1 266.8L469.4 263.9L469.4 260.7L462.1 263.8Z"/><path fill="#b0b042" stroke="#b0b042" d="M469.4 263.9L476.8 261L476.8 257.7L469.4 260.7Z"/><path fill="#c3ad41" stroke="#c3ad41" d="M490.4 252.5L498.8 252.2L498.8 248.6L490.8 249.9Z"/><path fill="#54c454" stroke="#54c454" d="M349.2 327.9L355 320.7L351.9 310.6L344.5 313.5Z"/><path fill="#70c454" stroke="#70c454" d="M370 315.9L376.2 309.9L373.9 301.8L366.6 304.8Z"/><path fill="#38c454" stroke="#38c454" d="M328.4 339.9L333.8 331.5L329.8 319.4L322.5 322.3Z"/><path fill="#52c052" stroke="#52c052" d="M353.9 342.2L358.1 330.7L355 320.7L349.2 327.9Z"/><path fill="#8bc353" stroke="#8bc353" d="M390.8 304.1L397.4 299.2L395.9 293.1L388.6 296Z"/><path fill="#6ec052" stroke="#6ec052" d="M373.4 327L378.4 317.9L376.2 309.9L370 315.9Z"/><path fill="#53c153" stroke="#53c153" d="M355 320.7L360.8 313.4L359.2 307.7L351.9 310.6Z"/><path fill="#4fb84f" stroke="#4fb84f" d="M358.5 356.6L361.2 340.8L358.1 330.7L353.9 342.2Z"/><path fill="#6dbf52" stroke="#6dbf52" d="M376.2 309.9L382.4 303.8L381.3 298.9L373.9 301.8Z"/><path fill="#1cc354" stroke="#1cc354" d="M307.7 352L312.6 342.3L307.8 328.1L300.4 331Z"/><path fill="#37c153" stroke="#37c153" d="M333.8 331.5L339.2 323.1L337.2 316.4L329.8 319.4Z"/><path fill="#85ba50" stroke="#85ba50" d="M397.4 299.2L404 294.3L403.3 290.2L395.9 293.1Z"/><path fill="#69b84f" stroke="#69b84f" d="M376.8 338.1L380.7 325.9L378.4 317.9L373.4 327Z"/><path fill="#9fb94f" stroke="#9fb94f" d="M411.7 292.4L418.7 288.6L418 284.3L410.6 287.2Z"/><path fill="#a59237" stroke="#a59237" d="M482 252.8L490.4 252.5L490.8 249.9L482.7 251.2Z"/><path fill="#37c052" stroke="#37c052" d="M334.4 357.6L337.8 343.6L333.8 331.5L328.4 339.9Z"/><path fill="#1bc052" stroke="#1bc052" d="M312.6 342.3L317.5 332.7L315.1 325.2L307.8 328.1Z"/><path fill="#94ad4a" stroke="#94ad4a" d="M418.7 288.6L425.7 284.8L425.3 281.4L418 284.3Z"/><path fill="#47a547" stroke="#47a547" d="M360.8 313.4L366.6 306.2L366.6 304.8L359.2 307.7Z"/><path fill="#5da246" stroke="#5da246" d="M382.4 303.8L388.6 297.8L388.6 296L381.3 298.9Z"/><path fill="#2fa647" stroke="#2fa647" d="M339.2 323.1L344.5 314.6L344.5 313.5L337.2 316.4Z"/><path fill="#719f44" stroke="#719f44" d="M404 294.3L410.6 289.4L410.6 287.2L403.3 290.2Z"/><path fill="#88bf52" stroke="#88bf52" d="M393 312.1L398.9 305.3L397.4 299.2L390.8 304.1Z"/><path fill="#18a647" stroke="#18a647" d="M317.5 332.7L322.5 323L322.5 322.3L315.1 325.2Z"/><path fill="#849a42" stroke="#849a42" d="M425.7 284.8L432.7 281L432.7 278.5L425.3 281.4Z"/><path fill="#00c253" stroke="#00c253" d="M286.9 363.9L291.4 353.1L285.7 336.9L278.4 339.8Z"/><path fill="#91913e" stroke="#91913e" d="M432.7 281L440 278.2L440 275.6L432.7 278.5Z"/><path fill="#93933f" stroke="#93933f" d="M440 278.2L447.4 275.4L447.4 272.6L440 275.6Z"/><path fill="#959540" stroke="#959540" d="M447.4 275.4L454.7 272.6L454.7 269.7L447.4 272.6Z"/><path fill="#00bf52" stroke="#00bf52" d="M291.4 353.1L295.9 342.2L293.1 334L285.7 336.9Z"/><path fill="#00a547" stroke="#00a547" d="M295.9 342.2L300.4 331.4L300.4 331L293.1 334Z"/><path fill="#a4903e" stroke="#a4903e" d="M469.1 266.1L476.8 264.2L476.8 261L469.4 263.9Z"/><path fill="#35b94f" stroke="#35b94f" d="M340.4 375.2L341.8 355.8L337.8 343.6L334.4 357.6Z"/><path fill="#b38b3c" stroke="#b38b3c" d="M490.8 256.9L498.8 255.9L498.8 252.2L491.5 255.1Z"/><path fill="#847432" stroke="#847432" d="M461.4 268L469.1 266.1L469.4 263.9L462.1 266.8Z"/><path fill="#4fb74f" stroke="#4fb74f" d="M358.1 330.7L362.3 319.2L360.8 313.4L355 320.7Z"/><path fill="#68b74e" stroke="#68b74e" d="M378.4 317.9L383.5 308.8L382.4 303.8L376.2 309.9Z"/><path fill="#83b84f" stroke="#83b84f" d="M395.2 320.2L400.3 311.4L398.9 305.3L393 312.1Z"/><path fill="#665926" stroke="#665926" d="M453.8 269.9L461.4 268L462.1 266.8L454.7 269.7Z"/><path fill="#1bbf52" stroke="#1bbf52" d="M314.9 372.9L317.5 356.5L312.6 342.3L307.7 352Z"/><path fill="#34b84f" stroke="#34b84f" d="M337.8 343.6L341.1 329.7L339.2 323.1L333.8 331.5Z"/><path fill="#765c27" stroke="#765c27" d="M482.9 257.9L490.8 256.9L491.5 255.1L484.1 258Z"/><path fill="#85762c" stroke="#85762c" d="M473.6 253.2L482 252.8L482.7 251.2L474.7 252.5Z"/><path fill="#80b44d" stroke="#80b44d" d="M398.9 305.3L404.8 298.5L404 294.3L397.4 299.2Z"/><path fill="#9db74e" stroke="#9db74e" d="M412.8 297.6L419.4 292.9L418.7 288.6L411.7 292.4Z"/><path fill="#82652b" stroke="#82652b" d="M474.9 259L482.9 257.9L484.1 258L476.8 261Z"/><path fill="#1ab74e" stroke="#1ab74e" d="M317.5 356.5L320 340.1L317.5 332.7L312.6 342.3Z"/><path fill="#91aa49" stroke="#91aa49" d="M419.4 292.9L426 288.3L425.7 284.8L418.7 288.6Z"/><path fill="#49aa49" stroke="#49aa49" d="M361.2 340.8L363.9 325L362.3 319.2L358.1 330.7Z"/><path fill="#61a949" stroke="#61a949" d="M380.7 325.9L384.7 313.7L383.5 308.8L378.4 317.9Z"/><path fill="#3e913e" stroke="#3e913e" d="M362.3 319.2L366.6 307.7L366.6 306.2L360.8 313.4Z"/><path fill="#54933f" stroke="#54933f" d="M383.5 308.8L388.6 299.7L388.6 297.8L382.4 303.8Z"/><path fill="#29903e" stroke="#29903e" d="M341.1 329.7L344.5 315.7L344.5 314.6L339.2 323.1Z"/><path fill="#6a9540" stroke="#6a9540" d="M404.8 298.5L410.6 291.6L410.6 289.4L404 294.3Z"/><path fill="#1ab94f" stroke="#1ab94f" d="M322.2 393.9L322.3 370.7L317.5 356.5L314.9 372.9Z"/><path fill="#30aa49" stroke="#30aa49" d="M341.8 355.8L343.1 336.3L341.1 329.7L337.8 343.6Z"/><path fill="#148e3d" stroke="#148e3d" d="M320 340.1L322.5 323.7L322.5 323L317.5 332.7Z"/><path fill="#809640" stroke="#809640" d="M426 288.3L432.7 283.6L432.7 281L425.7 284.8Z"/><path fill="#79a948" stroke="#79a948" d="M400.3 311.4L405.5 302.6L404.8 298.5L398.9 305.3Z"/><path fill="#99b34d" stroke="#99b34d" d="M413.8 302.8L420.1 297.3L419.4 292.9L412.8 297.6Z"/><path fill="#94a3bd" style="fill-opacity:0.7" d="M278.4 339.8L300.4 332.1L300.4 331L278.4 339.8Z"/><path fill="#94a3bd" style="fill-opacity:0.7" d="M300.4 332.1L322.5 324.5L322.5 322.3L300.4 331Z"/><path fill="#94a3bd" style="fill-opacity:0.7" d="M322.5 324.5L344.5 316.8L344.5 313.5L322.5 322.3Z"/><path fill="#94a3bd" style="fill-opacity:0.7" d="M344.5 316.8L366.6 309.1L366.6 304.8L344.5 313.5Z"/><path fill="#94a3bd" style="fill-opacity:0.7" d="M366.6 309.1L388.6 301.5L388.6 296L366.6 304.8Z"/><path fill="#94a3bd" style="fill-opacity:0.7" d="M388.6 301.5L410.6 293.8L410.6 287.2L388.6 296Z"/><path fill="#94a3bd" style="fill-opacity:0.7" d="M410.6 293.8L432.7 286.1L432.7 278.5L410.6 287.2Z"/><path fill="#94a3bd" style="fill-opacity:0.7" d="M432.7 286.1L454.7 278.5L454.7 269.7L432.7 278.5Z"/><path fill="#94a3bd" style="fill-opacity:0.7" d="M454.7 278.5L476.8 270.8L476.8 261L454.7 269.7Z"/><path fill="#94a3bd" style="fill-opacity:0.7" d="M476.8 270.8L498.8 263.2L498.8 252.2L476.8 261Z"/><path fill="#00be52" stroke="#00be52" d="M295.4 388L297.1 369.3L291.4 353.1L286.9 363.9Z"/><path fill="#00b64e" stroke="#00b64e" d="M297.1 369.3L298.8 350.5L295.9 342.2L291.4 353.1Z"/><path fill="#008d3d" stroke="#008d3d" d="M298.8 350.5L300.4 331.8L300.4 331.4L295.9 342.2Z"/><path fill="#91913e" stroke="#91913e" d="M432.7 283.6L440 280.9L440 278.2L432.7 281Z"/><path fill="#93933f" stroke="#93933f" d="M440 280.9L447.4 278.2L447.4 275.4L440 278.2Z"/><path fill="#959540" stroke="#959540" d="M447.4 278.2L454.7 275.6L454.7 272.6L447.4 275.4Z"/><path fill="#a7923e" stroke="#a7923e" d="M468.8 268.4L476.8 267.5L476.8 264.2L469.1 266.1Z"/><path fill="#18aa49" stroke="#18aa49" d="M322.3 370.7L322.4 347.6L320 340.1L317.5 356.5Z"/><path fill="#b58d3c" stroke="#b58d3c" d="M490.2 258.7L498.8 259.5L498.8 255.9L490.8 256.9Z"/><path fill="#8da547" stroke="#8da547" d="M420.1 297.3L426.4 291.7L426 288.3L419.4 292.9Z"/><path fill="#877633" stroke="#877633" d="M460.8 269.2L468.8 268.4L469.1 266.1L461.4 268Z"/><path fill="#367e36" stroke="#367e36" d="M363.9 325L366.6 309.1L366.6 307.7L362.3 319.2Z"/><path fill="#4a8238" stroke="#4a8238" d="M384.7 313.7L388.6 301.5L388.6 299.7L383.5 308.8Z"/><path fill="#247c35" stroke="#247c35" d="M343.1 336.3L344.5 316.8L344.5 315.7L341.1 329.7Z"/><path fill="#62893b" stroke="#62893b" d="M405.5 302.6L410.6 293.8L410.6 291.6L404.8 298.5Z"/><path fill="#695c27" stroke="#695c27" d="M452.8 270.1L460.8 269.2L461.4 268L453.8 269.9Z"/><path fill="#127c35" stroke="#127c35" d="M322.4 347.6L322.5 324.5L322.5 323.7L320 340.1Z"/><path fill="#7c903e" stroke="#7c903e" d="M426.4 291.7L432.7 286.1L432.7 283.6L426 288.3Z"/><path fill="#7d612a" stroke="#7d612a" d="M481.6 257.9L490.2 258.7L490.8 256.9L482.9 257.9Z"/><path fill="#00a949" stroke="#00a949" d="M302.7 385.5L301.6 358.8L298.8 350.5L297.1 369.3Z"/><path fill="#93933f" stroke="#93933f" d="M440 283.6L447.4 281L447.4 278.2L440 280.9Z"/><path fill="#00b84f" stroke="#00b84f" d="M303.9 412.1L302.7 385.5L297.1 369.3L295.4 388Z"/><path fill="#007b35" stroke="#007b35" d="M301.6 358.8L300.4 332.1L300.4 331.8L298.8 350.5Z"/><path fill="#91913e" stroke="#91913e" d="M432.7 286.1L440 283.6L440 280.9L432.7 283.6Z"/><path fill="#959540" stroke="#959540" d="M447.4 281L454.7 278.5L454.7 275.6L447.4 278.2Z"/><path fill="#a7923f" stroke="#a7923f" d="M468.4 270.6L476.8 270.8L476.8 267.5L468.8 268.4Z"/><path fill="#b28b3b" stroke="#b28b3b" d="M489.6 260.5L498.8 263.2L498.8 259.5L490.2 258.7Z"/><path fill="#7d612a" stroke="#7d612a" d="M473.1 257L481.6 257.9L482.9 257.9L474.9 259Z"/><path fill="#54a754" stroke="#54a754" d="M347.6 328L353.9 322.2L351.9 314.2L344.5 316.8Z"/><path fill="#38a754" stroke="#38a754" d="M326.6 338.9L332.6 331.9L329.8 321.9L322.5 324.5Z"/><path fill="#6ea653" stroke="#6ea653" d="M368.5 317.1L375.2 312.5L373.9 306.6L366.6 309.1Z"/><path fill="#8a7834" stroke="#8a7834" d="M460.1 270.4L468.4 270.6L468.8 268.4L460.8 269.2Z"/><path fill="#51a251" stroke="#51a251" d="M353.9 322.2L360.2 316.4L359.2 311.7L351.9 314.2Z"/><path fill="#1ca753" stroke="#1ca753" d="M305.7 349.9L311.3 341.7L307.8 329.6L300.4 332.1Z"/><path fill="#36a352" stroke="#36a352" d="M332.6 331.9L338.6 324.9L337.2 319.4L329.8 321.9Z"/><path fill="#839d4e" stroke="#839d4e" d="M389.6 306.5L396.6 303L395.9 298.9L388.6 301.5Z"/><path fill="#699e4f" stroke="#699e4f" d="M375.2 312.5L381.9 307.9L381.3 304L373.9 306.6Z"/><path fill="#1ba352" stroke="#1ba352" d="M311.3 341.7L316.9 333.4L315.1 327L307.8 329.6Z"/><path fill="#799149" stroke="#799149" d="M396.6 303L403.6 299.5L403.3 296.4L395.9 298.9Z"/><path fill="#448744" stroke="#448744" d="M360.2 316.4L366.6 310.6L366.6 309.1L359.2 311.7Z"/><path fill="#2e8945" stroke="#2e8945" d="M338.6 324.9L344.5 317.9L344.5 316.8L337.2 319.4Z"/><path fill="#588442" stroke="#588442" d="M381.9 307.9L388.6 303.3L388.6 301.5L381.3 304Z"/><path fill="#178a45" stroke="#178a45" d="M316.9 333.4L322.5 325.2L322.5 324.5L315.1 327Z"/><path fill="#6a8040" stroke="#6a8040" d="M403.6 299.5L410.6 296L410.6 293.8L403.3 296.4Z"/><path fill="#52a452" stroke="#52a452" d="M350.6 339.2L355.9 330.1L353.9 322.2L347.6 328Z"/><path fill="#00a653" stroke="#00a653" d="M284.7 360.8L290 351.4L285.7 337.2L278.4 339.8Z"/><path fill="#00a251" stroke="#00a251" d="M290 351.4L295.2 341.9L293.1 334.7L285.7 337.2Z"/><path fill="#008945" stroke="#008945" d="M295.2 341.9L300.4 332.5L300.4 332.1L293.1 334.7Z"/><path fill="#77773b" stroke="#77773b" d="M410.6 296L418 293.6L418 291.3L410.6 293.8Z"/><path fill="#79793c" stroke="#79793c" d="M418 293.6L425.3 291.1L425.3 288.7L418 291.3Z"/><path fill="#7b7b3d" stroke="#7b7b3d" d="M425.3 291.1L432.7 288.7L432.7 286.1L425.3 288.7Z"/><path fill="#8a763b" stroke="#8a763b" d="M447.1 282.9L454.7 281.4L454.7 278.5L447.4 281Z"/><path fill="#37a452" stroke="#37a452" d="M330.8 353.4L335.4 341.9L332.6 331.9L326.6 338.9Z"/><path fill="#987239" stroke="#987239" d="M468.9 274.7L476.8 274.1L476.8 270.8L469.4 273.4Z"/><path fill="#6ca351" stroke="#6ca351" d="M370.5 325.1L376.5 318.5L375.2 312.5L368.5 317.1Z"/><path fill="#6c5c2e" stroke="#6c5c2e" d="M439.4 284.3L447.1 282.9L447.4 281L440 283.6Z"/><path fill="#a66e37" stroke="#a66e37" d="M490.7 266.6L498.8 266.8L498.8 263.2L491.5 265.7Z"/><path fill="#504522" stroke="#504522" d="M431.8 285.8L439.4 284.3L440 283.6L432.7 286.1Z"/><path fill="#6c5f29" stroke="#6c5f29" d="M451.8 270.2L460.1 270.4L460.8 269.2L452.8 270.1Z"/><path fill="#4f9e4f" stroke="#4f9e4f" d="M353.7 350.3L358 338.1L355.9 330.1L350.6 339.2Z"/><path fill="#5f4724" stroke="#5f4724" d="M460.9 275.3L468.9 274.7L469.4 273.4L462.1 275.9Z"/><path fill="#4e9b4e" stroke="#4e9b4e" d="M355.9 330.1L361.2 321.1L360.2 316.4L353.9 322.2Z"/><path fill="#1ba452" stroke="#1ba452" d="M310.9 367.7L314.8 353.8L311.3 341.7L305.7 349.9Z"/><path fill="#359e4f" stroke="#359e4f" d="M334.9 367.9L338.1 351.9L335.4 341.9L330.8 353.4Z"/><path fill="#349c4e" stroke="#349c4e" d="M335.4 341.9L339.9 330.5L338.6 324.9L332.6 331.9Z"/><path fill="#819b4d" stroke="#819b4d" d="M390.5 311.4L397.2 307L396.6 303L389.6 306.5Z"/><path fill="#65984c" stroke="#65984c" d="M376.5 318.5L382.6 311.8L381.9 307.9L375.2 312.5Z"/><path fill="#764e27" stroke="#764e27" d="M482.5 266.4L490.7 266.6L491.5 265.7L484.1 268.3Z"/><path fill="#7d5e2f" stroke="#7d5e2f" d="M453 275.8L460.9 275.3L462.1 275.9L454.7 278.5Z"/><path fill="#699d4f" stroke="#699d4f" d="M372.5 333.1L377.8 324.4L376.5 318.5L370.5 325.1Z"/><path fill="#81642b" stroke="#81642b" d="M480.4 257.8L489.6 260.5L490.2 258.7L481.6 257.9Z"/><path fill="#1a9c4e" stroke="#1a9c4e" d="M314.8 353.8L318.6 339.8L316.9 333.4L311.3 341.7Z"/><path fill="#778f47" stroke="#778f47" d="M397.2 307L403.9 302.6L403.6 299.5L396.6 303Z"/><path fill="#3e7b3e" stroke="#3e7b3e" d="M361.2 321.1L366.6 312.1L366.6 310.6L360.2 316.4Z"/><path fill="#297a3d" stroke="#297a3d" d="M339.9 330.5L344.5 319L344.5 317.9L338.6 324.9Z"/><path fill="#9c6834" stroke="#9c6834" d="M474.4 266.2L482.5 266.4L484.1 268.3L476.8 270.8Z"/><path fill="#537c3e" stroke="#537c3e" d="M382.6 311.8L388.6 305.1L388.6 303.3L381.9 307.9Z"/><path fill="#14793c" stroke="#14793c" d="M318.6 339.8L322.5 325.9L322.5 325.2L316.9 333.4Z"/><path fill="#687d3e" stroke="#687d3e" d="M403.9 302.6L410.6 298.2L410.6 296L403.6 299.5Z"/><path fill="#489148" stroke="#489148" d="M358 338.1L362.3 325.8L361.2 321.1L355.9 330.1Z"/><path fill="#94a3bd" style="fill-opacity:0.7" d="M278.4 339.8L300.4 333.2L300.4 332.1L278.4 339.8Z"/><path fill="#94a3bd" style="fill-opacity:0.7" d="M300.4 333.2L322.5 326.7L322.5 324.5L300.4 332.1Z"/><path fill="#94a3bd" style="fill-opacity:0.7" d="M322.5 326.7L344.5 320.1L344.5 316.8L322.5 324.5Z"/><path fill="#94a3bd" style="fill-opacity:0.7" d="M344.5 320.1L366.6 313.5L366.6 309.1L344.5 316.8Z"/><path fill="#94a3bd" style="fill-opacity:0.7" d="M366.6 313.5L388.6 307L388.6 301.5L366.6 309.1Z"/><path fill="#94a3bd" style="fill-opacity:0.7" d="M388.6 307L410.6 300.4L410.6 293.8L388.6 301.5Z"/><path fill="#94a3bd" style="fill-opacity:0.7" d="M410.6 300.4L432.7 293.8L432.7 286.1L410.6 293.8Z"/><path fill="#94a3bd" style="fill-opacity:0.7" d="M432.7 293.8L454.7 287.2L454.7 278.5L432.7 286.1Z"/><path fill="#94a3bd" style="fill-opacity:0.7" d="M454.7 287.2L476.8 280.7L476.8 270.8L454.7 278.5Z"/><path fill="#94a3bd" style="fill-opacity:0.7" d="M476.8 280.7L498.8 274.1L498.8 263.2L476.8 270.8Z"/><path fill="#00a351" stroke="#00a351" d="M291.1 381.8L294.2 365.5L290 351.4L284.7 360.8Z"/><path fill="#009b4d" stroke="#009b4d" d="M294.2 365.5L297.3 349.2L295.2 341.9L290 351.4Z"/><path fill="#00783c" stroke="#00783c" d="M297.3 349.2L300.4 332.9L300.4 332.5L295.2 341.9Z"/><path fill="#77773c" stroke="#77773c" d="M410.6 298.2L418 295.9L418 293.6L410.6 296Z"/><path fill="#79793d" stroke="#79793d" d="M418 295.9L425.3 293.6L425.3 291.1L418 293.6Z"/><path fill="#7b7b3e" stroke="#7b7b3e" d="M425.3 293.6L432.7 291.3L432.7 288.7L425.3 291.1Z"/><path fill="#1a9e4f" stroke="#1a9e4f" d="M316.2 385.4L318.3 365.8L314.8 353.8L310.9 367.7Z"/><path fill="#309148" stroke="#309148" d="M338.1 351.9L341.3 336L339.9 330.5L335.4 341.9Z"/><path fill="#7e974c" stroke="#7e974c" d="M391.5 316.4L397.9 311.1L397.2 307L390.5 311.4Z"/><path fill="#609048" stroke="#609048" d="M377.8 324.4L383.2 315.7L382.6 311.8L376.5 318.5Z"/><path fill="#8c783c" stroke="#8c783c" d="M446.8 284.7L454.7 284.3L454.7 281.4L447.1 282.9Z"/><path fill="#9a733a" stroke="#9a733a" d="M468.3 276L476.8 277.4L476.8 274.1L468.9 274.7Z"/><path fill="#189148" stroke="#189148" d="M318.3 365.8L320.4 346.3L318.6 339.8L314.8 353.8Z"/><path fill="#6e5e2f" stroke="#6e5e2f" d="M438.9 285.1L446.8 284.7L447.1 282.9L439.4 284.3Z"/><path fill="#748b45" stroke="#748b45" d="M397.9 311.1L404.2 305.7L403.9 302.6L397.2 307Z"/><path fill="#a66f37" stroke="#a66f37" d="M489.9 267.5L498.8 270.5L498.8 266.8L490.7 266.6Z"/><path fill="#376f37" stroke="#376f37" d="M362.3 325.8L366.6 313.5L366.6 312.1L361.2 321.1Z"/><path fill="#246c36" stroke="#246c36" d="M341.3 336L344.5 320.1L344.5 319L339.9 330.5Z"/><path fill="#534723" stroke="#534723" d="M430.9 285.4L438.9 285.1L439.4 284.3L431.8 285.8Z"/><path fill="#775c28" stroke="#775c28" d="M471.2 255.1L480.4 257.8L481.6 257.9L473.1 257Z"/><path fill="#4d733a" stroke="#4d733a" d="M383.2 315.7L388.6 307L388.6 305.1L382.6 311.8Z"/><path fill="#126a35" stroke="#126a35" d="M320.4 346.3L322.5 326.7L322.5 325.9L318.6 339.8Z"/><path fill="#65793c" stroke="#65793c" d="M404.2 305.7L410.6 300.4L410.6 298.2L403.9 302.6Z"/><path fill="#644b26" stroke="#644b26" d="M459.8 274.6L468.3 276L468.9 274.7L460.9 275.3Z"/><path fill="#009d4f" stroke="#009d4f" d="M297.4 402.7L298.4 379.6L294.2 365.5L291.1 381.8Z"/><path fill="#009048" stroke="#009048" d="M298.4 379.6L299.4 356.4L297.3 349.2L294.2 365.5Z"/><path fill="#006935" stroke="#006935" d="M299.4 356.4L300.4 333.2L300.4 332.9L297.3 349.2Z"/><path fill="#77773c" stroke="#77773c" d="M410.6 300.4L418 298.2L418 295.9L410.6 298.2Z"/><path fill="#79793d" stroke="#79793d" d="M418 298.2L425.3 296L425.3 293.6L418 295.9Z"/><path fill="#7b7b3e" stroke="#7b7b3e" d="M425.3 296L432.7 293.8L432.7 291.3L425.3 293.6Z"/><path fill="#8c783c" stroke="#8c783c" d="M446.5 286.5L454.7 287.2L454.7 284.3L446.8 284.7Z"/><path fill="#6d4924" stroke="#6d4924" d="M480.9 264.5L489.9 267.5L490.7 266.6L482.5 266.4Z"/><path fill="#977138" stroke="#977138" d="M467.7 277.3L476.8 280.7L476.8 277.4L468.3 276Z"/><path fill="#795b2d" stroke="#795b2d" d="M451.4 273.2L459.8 274.6L460.9 275.3L453 275.8Z"/><path fill="#706030" stroke="#706030" d="M438.3 285.8L446.5 286.5L446.8 284.7L438.9 285.1Z"/><path fill="#378a53" stroke="#378a53" d="M325.1 337.8L331.6 332.3L329.8 324.5L322.5 326.7Z"/><path fill="#528952" stroke="#528952" d="M346.2 328L353 323.6L351.9 317.9L344.5 320.1Z"/><path fill="#a06b35" stroke="#a06b35" d="M489.1 268.3L498.8 274.1L498.8 270.5L489.9 267.5Z"/><path fill="#1c8a53" stroke="#1c8a53" d="M304 347.7L310.2 340.9L307.8 331L300.4 333.2Z"/><path fill="#67804d" stroke="#67804d" d="M367.4 318.3L374.5 315.1L373.9 311.3L366.6 313.5Z"/><path fill="#358550" stroke="#358550" d="M331.6 332.3L338 326.7L337.2 322.3L329.8 324.5Z"/><path fill="#4d814d" stroke="#4d814d" d="M353 323.6L359.8 319.3L359.2 315.7L351.9 317.9Z"/><path fill="#1b8650" stroke="#1b8650" d="M310.2 340.9L316.3 334.2L315.1 328.9L307.8 331Z"/><path fill="#5e7647" stroke="#5e7647" d="M374.5 315.1L381.5 311.9L381.3 309.1L373.9 311.3Z"/><path fill="#2b6d41" stroke="#2b6d41" d="M338 326.7L344.5 321.2L344.5 320.1L337.2 322.3Z"/><path fill="#406a40" stroke="#406a40" d="M359.8 319.3L366.6 315L366.6 313.5L359.2 315.7Z"/><path fill="#166e42" stroke="#166e42" d="M316.3 334.2L322.5 327.4L322.5 326.7L315.1 328.9Z"/><path fill="#52663d" stroke="#52663d" d="M381.5 311.9L388.6 308.8L388.6 307L381.3 309.1Z"/><path fill="#008a53" stroke="#008a53" d="M282.9 357.5L288.7 349.5L285.7 337.6L278.4 339.8Z"/><path fill="#008650" stroke="#008650" d="M288.7 349.5L294.6 341.6L293.1 335.4L285.7 337.6Z"/><path fill="#006e42" stroke="#006e42" d="M294.6 341.6L300.4 333.6L300.4 333.2L293.1 335.4Z"/><path fill="#5e5e39" stroke="#5e5e39" d="M388.6 308.8L395.9 306.7L395.9 304.8L388.6 307Z"/><path fill="#60603a" stroke="#60603a" d="M395.9 306.7L403.3 304.6L403.3 302.6L395.9 304.8Z"/><path fill="#62623b" stroke="#62623b" d="M403.3 304.6L410.6 302.6L410.6 300.4L403.3 302.6Z"/><path fill="#705e38" stroke="#705e38" d="M425.1 297.4L432.7 296.4L432.7 293.8L425.3 296Z"/><path fill="#7e5a36" stroke="#7e5a36" d="M446.9 290.3L454.7 290.2L454.7 287.2L447.4 289.4Z"/><path fill="#55472a" stroke="#55472a" d="M417.5 298.5L425.1 297.4L425.3 296L418 298.2Z"/><path fill="#8b5734" stroke="#8b5734" d="M468.7 283.2L476.8 284L476.8 280.7L469.4 282.9Z"/><path fill="#554924" stroke="#554924" d="M430 285.1L438.3 285.8L438.9 285.1L430.9 285.4Z"/><path fill="#4d4027" stroke="#4d4027" d="M409.9 299.5L417.5 298.5L418 298.2L410.6 300.4Z"/><path fill="#985533" stroke="#985533" d="M490.6 276.3L498.8 277.8L498.8 274.1L491.5 276.3Z"/><path fill="#563e25" stroke="#563e25" d="M439 290.4L446.9 290.3L447.4 289.4L440 291.6Z"/><path fill="#368851" stroke="#368851" d="M327.7 349L333.3 340.1L331.6 332.3L325.1 337.8Z"/><path fill="#518651" stroke="#518651" d="M347.9 335.9L354.1 329.4L353 323.6L346.2 328Z"/><path fill="#966432" stroke="#966432" d="M472 261.5L480.9 264.5L482.5 266.4L474.4 266.2Z"/><path fill="#72472b" stroke="#72472b" d="M460.7 282.5L468.7 283.2L469.4 282.9L462.1 285.1Z"/><path fill="#765533" stroke="#765533" d="M431.2 290.5L439 290.4L440 291.6L432.7 293.8Z"/><path fill="#1b8851" stroke="#1b8851" d="M307.5 362.2L312.5 350.8L310.2 340.9L304 347.7Z"/><path fill="#684e27" stroke="#684e27" d="M458.7 273.9L467.7 277.3L468.3 276L459.8 274.6Z"/><path fill="#657f4c" stroke="#657f4c" d="M368.2 323L375 318.9L374.5 315.1L367.4 318.3Z"/><path fill="#33804d" stroke="#33804d" d="M333.3 340.1L338.9 331.2L338 326.7L331.6 332.3Z"/><path fill="#4b7d4b" stroke="#4b7d4b" d="M354.1 329.4L360.4 322.9L359.8 319.3L353 323.6Z"/><path fill="#894c2e" stroke="#894c2e" d="M482.3 274.8L490.6 276.3L491.5 276.3L484.1 278.5Z"/><path fill="#1a804d" stroke="#1a804d" d="M312.5 350.8L317.5 339.5L316.3 334.2L310.2 340.9Z"/><path fill="#5d7446" stroke="#5d7446" d="M375 318.9L381.8 314.7L381.5 311.9L374.5 315.1Z"/><path fill="#935c37" stroke="#935c37" d="M452.6 281.8L460.7 282.5L462.1 285.1L454.7 287.2Z"/><path fill="#34834f" stroke="#34834f" d="M330.4 360.1L335.1 347.9L333.3 340.1L327.7 349Z"/><path fill="#4e824e" stroke="#4e824e" d="M349.7 343.8L355.3 335.1L354.1 329.4L347.9 335.9Z"/><path fill="#28643c" stroke="#28643c" d="M338.9 331.2L344.5 322.3L344.5 321.2L338 326.7Z"/><path fill="#3c643c" stroke="#3c643c" d="M360.4 322.9L366.6 316.4L366.6 315L359.8 319.3Z"/><path fill="#14633b" stroke="#14633b" d="M317.5 339.5L322.5 328.1L322.5 327.4L316.3 334.2Z"/><path fill="#50643c" stroke="#50643c" d="M381.8 314.7L388.6 310.6L388.6 308.8L381.5 311.9Z"/><path fill="#008751" stroke="#008751" d="M287.3 375.2L291.7 361.5L288.7 349.5L282.9 357.5Z"/><path fill="#00804d" stroke="#00804d" d="M291.7 361.5L296.1 347.7L294.6 341.6L288.7 349.5Z"/><path fill="#00623b" stroke="#00623b" d="M296.1 347.7L300.4 334L300.4 333.6L294.6 341.6Z"/><path fill="#5e5e39" stroke="#5e5e39" d="M388.6 310.6L395.9 308.7L395.9 306.7L388.6 308.8Z"/><path fill="#60603a" stroke="#60603a" d="M395.9 308.7L403.3 306.7L403.3 304.6L395.9 306.7Z"/><path fill="#62623b" stroke="#62623b" d="M403.3 306.7L410.6 304.8L410.6 302.6L403.3 304.6Z"/><path fill="#94a3bd" style="fill-opacity:0.7" d="M278.4 339.8L300.4 334.3L300.4 333.2L278.4 339.8Z"/><path fill="#94a3bd" style="fill-opacity:0.7" d="M300.4 334.3L322.5 328.9L322.5 326.7L300.4 333.2Z"/><path fill="#94a3bd" style="fill-opacity:0.7" d="M322.5 328.9L344.5 323.4L344.5 320.1L322.5 326.7Z"/><path fill="#94a3bd" style="fill-opacity:0.7" d="M344.5 323.4L366.6 317.9L366.6 313.5L344.5 320.1Z"/><path fill="#94a3bd" style="fill-opacity:0.7" d="M366.6 317.9L388.6 312.4L388.6 307L366.6 313.5Z"/><path fill="#94a3bd" style="fill-opacity:0.7" d="M388.6 312.4L410.6 307L410.6 300.4L388.6 307Z"/><path fill="#94a3bd" style="fill-opacity:0.7" d="M410.6 307L432.7 301.5L432.7 293.8L410.6 300.4Z"/><path fill="#94a3bd" style="fill-opacity:0.7" d="M432.7 301.5L454.7 296L454.7 287.2L432.7 293.8Z"/><path fill="#94a3bd" style="fill-opacity:0.7" d="M454.7 296L476.8 290.5L476.8 280.7L454.7 287.2Z"/><path fill="#94a3bd" style="fill-opacity:0.7" d="M476.8 290.5L498.8 285.1L498.8 274.1L476.8 280.7Z"/><path fill="#aa5e39" stroke="#aa5e39" d="M474.1 273.3L482.3 274.8L484.1 278.5L476.8 280.7Z"/><path fill="#715f39" stroke="#715f39" d="M424.8 298.8L432.7 298.9L432.7 296.4L425.1 297.4Z"/><path fill="#1a834f" stroke="#1a834f" d="M311.1 376.6L314.9 360.7L312.5 350.8L307.5 362.2Z"/><path fill="#637c4b" stroke="#637c4b" d="M369.1 327.8L375.6 322.7L375 318.9L368.2 323Z"/><path fill="#7f5b36" stroke="#7f5b36" d="M446.4 291.1L454.7 293.1L454.7 290.2L446.9 290.3Z"/><path fill="#307848" stroke="#307848" d="M335.1 347.9L339.8 335.6L338.9 331.2L333.3 340.1Z"/><path fill="#477647" stroke="#477647" d="M355.3 335.1L360.9 326.5L360.4 322.9L354.1 329.4Z"/><path fill="#57482b" stroke="#57482b" d="M417 298.7L424.8 298.8L425.1 297.4L417.5 298.5Z"/><path fill="#684623" stroke="#684623" d="M479.3 262.6L489.1 268.3L489.9 267.5L480.9 264.5Z"/><path fill="#8b5734" stroke="#8b5734" d="M468 283.6L476.8 287.2L476.8 284L468.7 283.2Z"/><path fill="#187848" stroke="#187848" d="M314.9 360.7L318.7 344.8L317.5 339.5L312.5 350.8Z"/><path fill="#74572b" stroke="#74572b" d="M449.7 270.6L458.7 273.9L459.8 274.6L451.4 273.2Z"/><path fill="#5b7144" stroke="#5b7144" d="M375.6 322.7L382.1 317.6L381.8 314.7L375 318.9Z"/><path fill="#4b3f26" stroke="#4b3f26" d="M409.1 298.6L417 298.7L417.5 298.5L409.9 299.5Z"/><path fill="#975432" stroke="#975432" d="M489.7 276.2L498.8 281.4L498.8 277.8L490.6 276.3Z"/><path fill="#245b36" stroke="#245b36" d="M339.8 335.6L344.5 323.4L344.5 322.3L338.9 331.2Z"/><path fill="#385e38" stroke="#385e38" d="M360.9 326.5L366.6 317.9L366.6 316.4L360.4 322.9Z"/><path fill="#125935" stroke="#125935" d="M318.7 344.8L322.5 328.9L322.5 328.1L317.5 339.5Z"/><path fill="#533b23" stroke="#533b23" d="M438.1 289.2L446.4 291.1L446.9 290.3L439 290.4Z"/><path fill="#4e613a" stroke="#4e613a" d="M382.1 317.6L388.6 312.4L388.6 310.6L381.8 314.7Z"/><path fill="#00824e" stroke="#00824e" d="M291.8 392.9L294.7 373.4L291.7 361.5L287.3 375.2Z"/><path fill="#007747" stroke="#007747" d="M294.7 373.4L297.5 353.9L296.1 347.7L291.7 361.5Z"/><path fill="#005734" stroke="#005734" d="M297.5 353.9L300.4 334.3L300.4 334L296.1 347.7Z"/><path fill="#5e5e39" stroke="#5e5e39" d="M388.6 312.4L395.9 310.6L395.9 308.7L388.6 310.6Z"/><path fill="#60603a" stroke="#60603a" d="M395.9 310.6L403.3 308.8L403.3 306.7L395.9 308.7Z"/><path fill="#62623b" stroke="#62623b" d="M403.3 308.8L410.6 307L410.6 304.8L403.3 306.7Z"/><path fill="#715e39" stroke="#715e39" d="M424.6 300.2L432.7 301.5L432.7 298.9L424.8 298.8Z"/><path fill="#6c4328" stroke="#6c4328" d="M459.3 279.9L468 283.6L468.7 283.2L460.7 282.5Z"/><path fill="#735231" stroke="#735231" d="M429.7 287.2L438.1 289.2L439 290.4L431.2 290.5Z"/><path fill="#7c5935" stroke="#7c5935" d="M445.9 292L454.7 296L454.7 293.1L446.4 291.1Z"/><path fill="#58492c" stroke="#58492c" d="M416.4 299L424.6 300.2L424.8 298.8L417 298.7Z"/><path fill="#875432" stroke="#875432" d="M467.3 284L476.8 290.5L476.8 287.2L468 283.6Z"/><path fill="#366c51" stroke="#366c51" d="M323.9 336.6L330.8 332.6L329.8 327L322.5 328.9Z"/><path fill="#1b6d52" stroke="#1b6d52" d="M302.6 345.4L309.2 340.1L307.8 332.5L300.4 334.3Z"/><path fill="#4b644b" stroke="#4b644b" d="M345.2 327.9L352.3 325.1L351.9 321.6L344.5 323.4Z"/><path fill="#32654b" stroke="#32654b" d="M330.8 332.6L337.6 328.5L337.2 325.2L329.8 327Z"/><path fill="#1a684e" stroke="#1a684e" d="M309.2 340.1L315.9 334.8L315.1 330.7L307.8 332.5Z"/><path fill="#445b44" stroke="#445b44" d="M352.3 325.1L359.4 322.2L359.2 319.7L351.9 321.6Z"/><path fill="#28513d" stroke="#28513d" d="M337.6 328.5L344.5 324.5L344.5 323.4L337.2 325.2Z"/><path fill="#80472b" stroke="#80472b" d="M480.5 271.1L489.7 276.2L490.6 276.3L482.3 274.8Z"/><path fill="#15533e" stroke="#15533e" d="M315.9 334.8L322.5 329.6L322.5 328.9L315.1 330.7Z"/><path fill="#3a4e3a" stroke="#3a4e3a" d="M359.4 322.2L366.6 319.4L366.6 317.9L359.2 319.7Z"/><path fill="#00694f" stroke="#00694f" d="M287.7 347.6L294.1 341.2L293.1 336.2L285.7 338Z"/><path fill="#00543f" stroke="#00543f" d="M294.1 341.2L300.4 334.7L300.4 334.3L293.1 336.2Z"/><path fill="#484836" stroke="#484836" d="M373.9 317.7L381.3 316L381.3 314.2L373.9 316.1Z"/><path fill="#006d52" stroke="#006d52" d="M281.3 354.1L287.7 347.6L285.7 338L278.4 339.8Z"/><path fill="#474735" stroke="#474735" d="M366.6 319.4L373.9 317.7L373.9 316.1L366.6 317.9Z"/><path fill="#4a4a38" stroke="#4a4a38" d="M381.3 316L388.6 314.2L388.6 312.4L381.3 314.2Z"/><path fill="#584635" stroke="#584635" d="M403.1 309.8L410.6 309.1L410.6 307L403.3 308.8Z"/><path fill="#4a3d25" stroke="#4a3d25" d="M408.3 297.8L416.4 299L417 298.7L409.1 298.6Z"/><path fill="#8e5f2f" stroke="#8e5f2f" d="M469.6 256.8L479.3 262.6L480.9 264.5L472 261.5Z"/><path fill="#654332" stroke="#654332" d="M424.9 303.7L432.7 304L432.7 301.5L425.3 303.3Z"/><path fill="#915130" stroke="#915130" d="M488.8 276.2L498.8 285.1L498.8 281.4L489.7 276.2Z"/><path fill="#403326" stroke="#403326" d="M395.5 310.4L403.1 309.8L403.3 308.8L395.9 310.6Z"/><path fill="#714131" stroke="#714131" d="M446.8 297.7L454.7 298.9L454.7 296L447.4 297.8Z"/><path fill="#48392b" stroke="#48392b" d="M388 311L395.5 310.4L395.9 310.6L388.6 312.4Z"/><path fill="#7e3f2f" stroke="#7e3f2f" d="M468.7 291.8L476.8 293.8L476.8 290.5L469.4 292.4Z"/><path fill="#533729" stroke="#533729" d="M417.2 303.3L424.9 303.7L425.3 303.3L418 305.1Z"/><path fill="#8b3e2e" stroke="#8b3e2e" d="M490.6 285.9L498.8 288.7L498.8 285.1L491.5 286.9Z"/><path fill="#8f5935" stroke="#8f5935" d="M450.5 276.3L459.3 279.9L460.7 282.5L452.6 281.8Z"/><path fill="#523a23" stroke="#523a23" d="M437.1 287.9L445.9 292L446.4 291.1L438.1 289.2Z"/><path fill="#6d4937" stroke="#6d4937" d="M409.4 303L417.2 303.3L418 305.1L410.6 307Z"/><path fill="#6d3f2f" stroke="#6d3f2f" d="M438.8 296.4L446.8 297.7L447.4 297.8L440 299.7Z"/><path fill="#356a4f" stroke="#356a4f" d="M325.3 344.4L331.7 338.1L330.8 332.6L323.9 336.6Z"/><path fill="#844231" stroke="#844231" d="M460.6 289.7L468.7 291.8L469.4 292.4L462.1 294.2Z"/><path fill="#1b6b50" stroke="#1b6b50" d="M304.7 356.4L310.7 347.7L309.2 340.1L302.6 345.4Z"/><path fill="#4a634a" stroke="#4a634a" d="M345.9 332.4L352.8 328.6L352.3 325.1L345.2 327.9Z"/><path fill="#894e3b" stroke="#894e3b" d="M430.9 295.2L438.8 296.4L440 299.7L432.7 301.5Z"/><path fill="#316249" stroke="#316249" d="M331.7 338.1L338.1 331.8L337.6 328.5L330.8 332.6Z"/><path fill="#19644b" stroke="#19644b" d="M310.7 347.7L316.6 339L315.9 334.8L309.2 340.1Z"/><path fill="#435a43" stroke="#435a43" d="M352.8 328.6L359.7 324.7L359.4 322.2L352.3 325.1Z"/><path fill="#974332" stroke="#974332" d="M482.3 283.2L490.6 285.9L491.5 286.9L484.1 288.7Z"/><path fill="#274d3a" stroke="#274d3a" d="M338.1 331.8L344.5 325.6L344.5 324.5L337.6 328.5Z"/><path fill="#134d3a" stroke="#134d3a" d="M316.6 339L322.5 330.3L322.5 329.6L315.9 334.8Z"/><path fill="#394c39" stroke="#394c39" d="M359.7 324.7L366.6 320.8L366.6 319.4L359.4 322.2Z"/><path fill="#00644b" stroke="#00644b" d="M289.6 357.3L295 346.2L294.1 341.2L287.7 347.6Z"/><path fill="#004c39" stroke="#004c39" d="M295 346.2L300.4 335.1L300.4 334.7L294.1 341.2Z"/><path fill="#494936" stroke="#494936" d="M373.9 319.2L381.3 317.7L381.3 316L373.9 317.7Z"/><path fill="#94a3bd" style="fill-opacity:0.7" d="M278.4 339.8L300.4 335.4L300.4 334.3L278.4 339.8Z"/><path fill="#94a3bd" style="fill-opacity:0.7" d="M300.4 335.4L322.5 331L322.5 328.9L300.4 334.3Z"/><path fill="#94a3bd" style="fill-opacity:0.7" d="M322.5 331L344.5 326.7L344.5 323.4L322.5 328.9Z"/><path fill="#94a3bd" style="fill-opacity:0.7" d="M344.5 326.7L366.6 322.3L366.6 317.9L344.5 323.4Z"/><path fill="#94a3bd" style="fill-opacity:0.7" d="M366.6 322.3L388.6 317.9L388.6 312.4L366.6 317.9Z"/><path fill="#94a3bd" style="fill-opacity:0.7" d="M388.6 317.9L410.6 313.5L410.6 307L388.6 312.4Z"/><path fill="#94a3bd" style="fill-opacity:0.7" d="M410.6 313.5L432.7 309.1L432.7 301.5L410.6 307Z"/><path fill="#94a3bd" style="fill-opacity:0.7" d="M432.7 309.1L454.7 304.8L454.7 296L432.7 301.5Z"/><path fill="#94a3bd" style="fill-opacity:0.7" d="M454.7 304.8L476.8 300.4L476.8 290.5L454.7 296Z"/><path fill="#94a3bd" style="fill-opacity:0.7" d="M476.8 300.4L498.8 296L498.8 285.1L476.8 290.5Z"/><path fill="#006b50" stroke="#006b50" d="M284.2 368.4L289.6 357.3L287.7 347.6L281.3 354.1Z"/><path fill="#474735" stroke="#474735" d="M366.6 320.8L373.9 319.2L373.9 317.7L366.6 319.4Z"/><path fill="#4a4a38" stroke="#4a4a38" d="M381.3 317.7L388.6 316.1L388.6 314.2L381.3 316Z"/><path fill="#9f503c" stroke="#9f503c" d="M452.5 287.7L460.6 289.7L462.1 294.2L454.7 296Z"/><path fill="#594735" stroke="#594735" d="M402.9 310.8L410.6 311.3L410.6 309.1L403.1 309.8Z"/><path fill="#33674d" stroke="#33674d" d="M326.7 352.1L332.7 343.6L331.7 338.1L325.3 344.4Z"/><path fill="#654333" stroke="#654333" d="M424.5 304.1L432.7 306.6L432.7 304L424.9 303.7Z"/><path fill="#a45b37" stroke="#a45b37" d="M471.4 265.9L480.5 271.1L482.3 274.8L474.1 273.3Z"/><path fill="#653f26" stroke="#653f26" d="M457.8 277.4L467.3 284L468 283.6L459.3 279.9Z"/><path fill="#413427" stroke="#413427" d="M395.1 310.2L402.9 310.8L403.1 309.8L395.5 310.4Z"/><path fill="#6f4f2f" stroke="#6f4f2f" d="M428.3 283.9L437.1 287.9L438.1 289.2L429.7 287.2Z"/><path fill="#b24f3b" stroke="#b24f3b" d="M474.1 280.4L482.3 283.2L484.1 288.7L476.8 290.5Z"/><path fill="#1a684e" stroke="#1a684e" d="M306.9 367.5L312.1 355.3L310.7 347.7L304.7 356.4Z"/><path fill="#496149" stroke="#496149" d="M346.6 337L353.2 332.1L352.8 328.6L345.9 332.4Z"/><path fill="#714130" stroke="#714130" d="M446.2 297.5L454.7 301.8L454.7 298.9L446.8 297.7Z"/><path fill="#2f5d46" stroke="#2f5d46" d="M332.7 343.6L338.6 335.1L338.1 331.8L331.7 338.1Z"/><path fill="#47382a" stroke="#47382a" d="M387.3 309.6L395.1 310.2L395.5 310.4L388 311Z"/><path fill="#7d3f2f" stroke="#7d3f2f" d="M467.9 291.2L476.8 297.1L476.8 293.8L468.7 291.8Z"/><path fill="#185e47" stroke="#185e47" d="M312.1 355.3L317.3 343.2L316.6 339L310.7 347.7Z"/><path fill="#425842" stroke="#425842" d="M353.2 332.1L359.9 327.2L359.7 324.7L352.8 328.6Z"/><path fill="#503528" stroke="#503528" d="M416.3 301.5L424.5 304.1L424.9 303.7L417.2 303.3Z"/><path fill="#8a3d2e" stroke="#8a3d2e" d="M489.7 285L498.8 292.4L498.8 288.7L490.6 285.9Z"/><path fill="#244936" stroke="#244936" d="M338.6 335.1L344.5 326.7L344.5 325.6L338.1 331.8Z"/><path fill="#124735" stroke="#124735" d="M317.3 343.2L322.5 331L322.5 330.3L316.6 339Z"/><path fill="#384a38" stroke="#384a38" d="M359.9 327.2L366.6 322.3L366.6 320.8L359.7 324.7Z"/><path fill="#00674e" stroke="#00674e" d="M287 382.7L291.5 367L289.6 357.3L284.2 368.4Z"/><path fill="#005e47" stroke="#005e47" d="M291.5 367L296 351.2L295 346.2L289.6 357.3Z"/><path fill="#004534" stroke="#004534" d="M296 351.2L300.4 335.4L300.4 335.1L295 346.2Z"/><path fill="#474735" stroke="#474735" d="M366.6 322.3L373.9 320.8L373.9 319.2L366.6 320.8Z"/><path fill="#494936" stroke="#494936" d="M373.9 320.8L381.3 319.4L381.3 317.7L373.9 319.2Z"/><path fill="#4a4a38" stroke="#4a4a38" d="M381.3 319.4L388.6 317.9L388.6 316.1L381.3 317.7Z"/><path fill="#584735" stroke="#584735" d="M402.6 311.8L410.6 313.5L410.6 311.3L402.9 310.8Z"/><path fill="#6b4735" stroke="#6b4735" d="M408.2 299L416.3 301.5L417.2 303.3L409.4 303Z"/><path fill="#683b2d" stroke="#683b2d" d="M437.7 293.2L446.2 297.5L446.8 297.7L438.8 296.4Z"/><path fill="#764227" stroke="#764227" d="M478.7 267.4L488.8 276.2L489.7 276.2L480.5 271.1Z"/><path fill="#634232" stroke="#634232" d="M424.1 304.4L432.7 309.1L432.7 306.6L424.5 304.1Z"/><path fill="#423527" stroke="#423527" d="M394.7 310L402.6 311.8L402.9 310.8L395.1 310.2Z"/><path fill="#6e3f2f" stroke="#6e3f2f" d="M445.6 297.4L454.7 304.8L454.7 301.8L446.2 297.5Z"/><path fill="#885533" stroke="#885533" d="M448.4 270.8L457.8 277.4L459.3 279.9L450.5 276.3Z"/><path fill="#7c3e2f" stroke="#7c3e2f" d="M459 285.2L467.9 291.2L468.7 291.8L460.6 289.7Z"/><path fill="#45372a" stroke="#45372a" d="M386.7 308.3L394.7 310L395.1 310.2L387.3 309.6Z"/><path fill="#1a4f4f" stroke="#1a4f4f" d="M301.5 343L308.5 339.2L307.8 334L300.4 335.4Z"/><path fill="#314949" stroke="#314949" d="M323 335.3L330.2 332.8L329.8 329.6L322.5 331Z"/><path fill="#184949" stroke="#184949" d="M308.5 339.2L315.5 335.5L315.1 332.5L307.8 334Z"/><path fill="#2c4242" stroke="#2c4242" d="M330.2 332.8L337.4 330.3L337.2 328.1L329.8 329.6Z"/><path fill="#133939" stroke="#133939" d="M315.5 335.5L322.5 331.8L322.5 331L315.1 332.5Z"/><path fill="#253737" stroke="#253737" d="M337.4 330.3L344.5 327.8L344.5 326.7L337.2 328.1Z"/><path fill="#003b3b" stroke="#003b3b" d="M293.6 340.7L300.4 335.8L300.4 335.4L293.1 336.9Z"/><path fill="#005050" stroke="#005050" d="M280 350.6L286.8 345.7L285.7 338.3L278.4 339.8Z"/><path fill="#004c4c" stroke="#004c4c" d="M286.8 345.7L293.6 340.7L293.1 336.9L285.7 338.3Z"/><path fill="#313131" stroke="#313131" d="M344.5 327.8L351.9 326.4L351.9 325.2L344.5 326.7Z"/><path fill="#333333" stroke="#333333" d="M351.9 326.4L359.2 325.1L359.2 323.7L351.9 325.2Z"/><path fill="#343434" stroke="#343434" d="M359.2 325.1L366.6 323.7L366.6 322.3L359.2 323.7Z"/><path fill="#793d2d" stroke="#793d2d" d="M467.1 290.6L476.8 300.4L476.8 297.1L467.9 291.2Z"/><path fill="#413131" stroke="#413131" d="M381.1 319.9L388.6 319.7L388.6 317.9L381.3 319.4Z"/><path fill="#4d2e2e" stroke="#4d2e2e" d="M403 314.9L410.6 315.7L410.6 313.5L403.3 315Z"/><path fill="#2f2323" stroke="#2f2323" d="M373.6 320.2L381.1 319.9L381.3 319.4L373.9 320.8Z"/><path fill="#854c39" stroke="#854c39" d="M429.1 288.9L437.7 293.2L438.8 296.4L430.9 295.2Z"/><path fill="#592d2d" stroke="#592d2d" d="M424.9 309.9L432.7 311.7L432.7 309.1L425.3 310.6Z"/><path fill="#403030" stroke="#403030" d="M366.1 320.4L373.6 320.2L373.9 320.8L366.6 322.3Z"/><path fill="#652b2b" stroke="#652b2b" d="M446.8 305.1L454.7 307.7L454.7 304.8L447.4 306.2Z"/><path fill="#4d2e2e" stroke="#4d2e2e" d="M395.3 314.1L403 314.9L403.3 315L395.9 316.4Z"/><path fill="#712b2b" stroke="#712b2b" d="M468.7 300.3L476.8 303.7L476.8 300.4L469.4 301.8Z"/><path fill="#4d3326" stroke="#4d3326" d="M415.5 299.7L424.1 304.4L424.5 304.1L416.3 301.5Z"/><path fill="#7f2a2a" stroke="#7f2a2a" d="M490.6 295.6L498.8 299.7L498.8 296L491.5 297.5Z"/><path fill="#623b3b" stroke="#623b3b" d="M387.6 313.3L395.3 314.1L395.9 316.4L388.6 317.9Z"/><path fill="#853b2c" stroke="#853b2c" d="M488.8 284L498.8 296L498.8 292.4L489.7 285Z"/><path fill="#663333" stroke="#663333" d="M417 308.2L424.9 309.9L425.3 310.6L418 312.1Z"/><path fill="#8d3f2f" stroke="#8d3f2f" d="M480.5 277.6L489.7 285L490.6 285.9L482.3 283.2Z"/><path fill="#7c3535" stroke="#7c3535" d="M438.8 302.4L446.8 305.1L447.4 306.2L440 307.7Z"/><path fill="#7c3e3e" stroke="#7c3e3e" d="M409.2 306.4L417 308.2L418 312.1L410.6 313.5Z"/><path fill="#1a4e4e" stroke="#1a4e4e" d="M302.6 350.5L309.2 344.5L308.5 339.2L301.5 343Z"/><path fill="#304848" stroke="#304848" d="M323.5 339.6L330.5 336L330.2 332.8L323 335.3Z"/><path fill="#903636" stroke="#903636" d="M460.6 296.9L468.7 300.3L469.4 301.8L462.1 303.3Z"/><path fill="#184747" stroke="#184747" d="M309.2 344.5L315.9 338.5L315.5 335.5L308.5 339.2Z"/><path fill="#2b4141" stroke="#2b4141" d="M330.5 336L337.5 332.4L337.4 330.3L330.2 332.8Z"/><path fill="#923f3f" stroke="#923f3f" d="M430.9 299.8L438.8 302.4L440 307.7L432.7 309.1Z"/><path fill="#123737" stroke="#123737" d="M315.9 338.5L322.5 332.5L322.5 331.8L315.5 335.5Z"/><path fill="#243636" stroke="#243636" d="M337.5 332.4L344.5 328.9L344.5 327.8L337.4 330.3Z"/><path fill="#a13636" stroke="#a13636" d="M482.5 291.5L490.6 295.6L491.5 297.5L484.1 298.9Z"/><path fill="#004949" stroke="#004949" d="M287.9 353L294.2 344.6L293.6 340.7L286.8 345.7Z"/><path fill="#003737" stroke="#003737" d="M294.2 344.6L300.4 336.2L300.4 335.8L293.6 340.7Z"/><path fill="#94a3bd" style="fill-opacity:0.7" d="M278.4 339.8L300.4 336.5L300.4 335.4L278.4 339.8Z"/><path fill="#94a3bd" style="fill-opacity:0.7" d="M300.4 336.5L322.5 333.2L322.5 331L300.4 335.4Z"/><path fill="#94a3bd" style="fill-opacity:0.7" d="M322.5 333.2L344.5 329.9L344.5 326.7L322.5 331Z"/><path fill="#94a3bd" style="fill-opacity:0.7" d="M344.5 329.9L366.6 326.7L366.6 322.3L344.5 326.7Z"/><path fill="#94a3bd" style="fill-opacity:0.7" d="M366.6 326.7L388.6 323.4L388.6 317.9L366.6 322.3Z"/><path fill="#94a3bd" style="fill-opacity:0.7" d="M388.6 323.4L410.6 320.1L410.6 313.5L388.6 317.9Z"/><path fill="#94a3bd" style="fill-opacity:0.7" d="M410.6 320.1L432.7 316.8L432.7 309.1L410.6 313.5Z"/><path fill="#94a3bd" style="fill-opacity:0.7" d="M432.7 316.8L454.7 313.5L454.7 304.8L432.7 309.1Z"/><path fill="#94a3bd" style="fill-opacity:0.7" d="M454.7 313.5L476.8 310.2L476.8 300.4L454.7 304.8Z"/><path fill="#94a3bd" style="fill-opacity:0.7" d="M476.8 310.2L498.8 307L498.8 296L476.8 300.4Z"/><path fill="#333333" stroke="#333333" d="M351.9 327.6L359.2 326.4L359.2 325.1L351.9 326.4Z"/><path fill="#004f4f" stroke="#004f4f" d="M281.7 361.5L287.9 353L286.8 345.7L280 350.6Z"/><path fill="#313131" stroke="#313131" d="M344.5 328.9L351.9 327.6L351.9 326.4L344.5 327.8Z"/><path fill="#343434" stroke="#343434" d="M359.2 326.4L366.6 325.2L366.6 323.7L359.2 325.1Z"/><path fill="#9a4d3a" stroke="#9a4d3a" d="M450.2 279.3L459 285.2L460.6 289.7L452.5 287.7Z"/><path fill="#423131" stroke="#423131" d="M380.9 320.5L388.6 321.6L388.6 319.7L381.1 319.9Z"/><path fill="#674534" stroke="#674534" d="M406.9 295L415.5 299.7L416.3 301.5L408.2 299Z"/><path fill="#62382a" stroke="#62382a" d="M436.5 290L445.6 297.4L446.2 297.5L437.7 293.2Z"/><path fill="#4e2f2f" stroke="#4e2f2f" d="M402.6 314.8L410.6 317.9L410.6 315.7L403 314.9Z"/><path fill="#2e2323" stroke="#2e2323" d="M373.2 319.5L380.9 320.5L381.1 319.9L373.6 320.2Z"/><path fill="#a63e3e" stroke="#a63e3e" d="M452.6 293.5L460.6 296.9L462.1 303.3L454.7 304.8Z"/><path fill="#592c2c" stroke="#592c2c" d="M424.4 309.3L432.7 314.2L432.7 311.7L424.9 309.9Z"/><path fill="#3f2f2f" stroke="#3f2f2f" d="M365.5 318.5L373.2 319.5L373.6 320.2L366.1 320.4Z"/><path fill="#9b5634" stroke="#9b5634" d="M468.7 258.5L478.7 267.4L480.5 271.1L471.4 265.9Z"/><path fill="#652b2b" stroke="#652b2b" d="M446.2 303.9L454.7 310.6L454.7 307.7L446.8 305.1Z"/><path fill="#194c4c" stroke="#194c4c" d="M303.7 358.1L310 349.8L309.2 344.5L302.6 350.5Z"/><path fill="#2f4747" stroke="#2f4747" d="M324.1 343.9L330.9 339.2L330.5 336L323.5 339.6Z"/><path fill="#b83d3d" stroke="#b83d3d" d="M474.3 287.5L482.5 291.5L484.1 298.9L476.8 300.4Z"/><path fill="#4a2d2d" stroke="#4a2d2d" d="M394.6 311.7L402.6 314.8L403 314.9L395.3 314.1Z"/><path fill="#174444" stroke="#174444" d="M310 349.8L316.2 341.5L315.9 338.5L309.2 344.5Z"/><path fill="#2a3f3f" stroke="#2a3f3f" d="M330.9 339.2L337.7 334.6L337.5 332.4L330.5 336Z"/><path fill="#712a2a" stroke="#712a2a" d="M468 298.7L476.8 306.9L476.8 303.7L468.7 300.3Z"/><path fill="#113434" stroke="#113434" d="M316.2 341.5L322.5 333.2L322.5 332.5L315.9 338.5Z"/><path fill="#233535" stroke="#233535" d="M337.7 334.6L344.5 329.9L344.5 328.9L337.5 332.4Z"/><path fill="#7e2a2a" stroke="#7e2a2a" d="M489.8 293.7L498.8 303.3L498.8 299.7L490.6 295.6Z"/><path fill="#004c4c" stroke="#004c4c" d="M283.3 372.3L289 360.4L287.9 353L281.7 361.5Z"/><path fill="#004545" stroke="#004545" d="M289 360.4L294.7 348.4L294.2 344.6L287.9 353Z"/><path fill="#003333" stroke="#003333" d="M294.7 348.4L300.4 336.5L300.4 336.2L294.2 344.6Z"/><path fill="#313131" stroke="#313131" d="M344.5 329.9L351.9 328.9L351.9 327.6L344.5 328.9Z"/><path fill="#333333" stroke="#333333" d="M351.9 328.9L359.2 327.8L359.2 326.4L351.9 327.6Z"/><path fill="#343434" stroke="#343434" d="M359.2 327.8L366.6 326.7L366.6 325.2L359.2 326.4Z"/><path fill="#733a2b" stroke="#733a2b" d="M457.5 280.8L467.1 290.6L467.9 291.2L459 285.2Z"/><path fill="#603a3a" stroke="#603a3a" d="M386.6 308.6L394.6 311.7L395.3 314.1L387.6 313.3Z"/><path fill="#ad4d3a" stroke="#ad4d3a" d="M471.4 270.3L480.5 277.6L482.3 283.2L474.1 280.4Z"/><path fill="#623131" stroke="#623131" d="M416.1 304.3L424.4 309.3L424.9 309.9L417 308.2Z"/><path fill="#413131" stroke="#413131" d="M380.7 321.1L388.6 323.4L388.6 321.6L380.9 320.5Z"/><path fill="#4c2e2e" stroke="#4c2e2e" d="M402.3 314.7L410.6 320.1L410.6 317.9L402.6 314.8Z"/><path fill="#2e2323" stroke="#2e2323" d="M372.9 318.9L380.7 321.1L380.9 320.5L373.2 319.5Z"/><path fill="#7f4937" stroke="#7f4937" d="M427.3 282.6L436.5 290L437.7 293.2L429.1 288.9Z"/><path fill="#572c2c" stroke="#572c2c" d="M423.9 308.6L432.7 316.8L432.7 314.2L424.4 309.3Z"/><path fill="#763333" stroke="#763333" d="M437.6 297.2L446.2 303.9L446.8 305.1L438.8 302.4Z"/><path fill="#3e2e2e" stroke="#3e2e2e" d="M365 316.6L372.9 318.9L373.2 319.5L365.5 318.5Z"/><path fill="#793d3d" stroke="#793d3d" d="M407.8 299.3L416.1 304.3L417 308.2L409.2 306.4Z"/><path fill="#622a2a" stroke="#622a2a" d="M445.6 302.7L454.7 313.5L454.7 310.6L446.2 303.9Z"/><path fill="#172f46" stroke="#172f46" d="M300.8 340.5L308 338.3L307.8 335.4L300.4 336.5Z"/><path fill="#15293e" stroke="#15293e" d="M308 338.3L315.3 336.1L315.1 334.3L307.8 335.4Z"/><path fill="#112233" stroke="#112233" d="M315.3 336.1L322.5 334L322.5 333.2L315.1 334.3Z"/><path fill="#00334d" stroke="#00334d" d="M279.1 347.1L286.2 343.7L285.7 338.7L278.4 339.8Z"/><path fill="#002f46" stroke="#002f46" d="M286.2 343.7L293.3 340.3L293.1 337.6L285.7 338.7Z"/><path fill="#002335" stroke="#002335" d="M293.3 340.3L300.4 336.9L300.4 336.5L293.1 337.6Z"/><path fill="#1e1e2d" stroke="#1e1e2d" d="M322.5 334L329.8 333L329.8 332.1L322.5 333.2Z"/><path fill="#1f1f2e" stroke="#1f1f2e" d="M329.8 333L337.2 332L337.2 331L329.8 332.1Z"/><path fill="#202030" stroke="#202030" d="M337.2 332L344.5 331L344.5 329.9L337.2 331Z"/><path fill="#2d1e2d" stroke="#2d1e2d" d="M359.1 327.9L366.6 328.1L366.6 326.7L359.2 327.8Z"/><path fill="#381c2a" stroke="#381c2a" d="M381 323.9L388.6 325.2L388.6 323.4L381.3 324.5Z"/><path fill="#281b28" stroke="#281b28" d="M351.6 327.7L359.1 327.9L359.2 327.8L351.9 328.9Z"/><path fill="#482b2b" stroke="#482b2b" d="M394 309.3L402.3 314.7L402.6 314.8L394.6 311.7Z"/><path fill="#431b28" stroke="#431b28" d="M403 320L410.6 322.3L410.6 320.1L403.3 321.2Z"/><path fill="#342334" stroke="#342334" d="M344.2 327.6L351.6 327.7L351.9 328.9L344.5 329.9Z"/><path fill="#823a2b" stroke="#823a2b" d="M478.7 272.1L488.8 284L489.7 285L480.5 277.6Z"/><path fill="#4e1a27" stroke="#4e1a27" d="M424.9 316.2L432.7 319.4L432.7 316.8L425.3 317.9Z"/><path fill="#442233" stroke="#442233" d="M373.5 322.6L381 323.9L381.3 324.5L373.9 325.6Z"/><path fill="#591a26" stroke="#591a26" d="M446.9 312.4L454.7 316.4L454.7 313.5L447.4 314.6Z"/><path fill="#6e2929" stroke="#6e2929" d="M467.3 297.2L476.8 310.2L476.8 306.9L468 298.7Z"/><path fill="#542a3f" stroke="#542a3f" d="M365.9 321.4L373.5 322.6L373.9 325.6L366.6 326.7Z"/><path fill="#661926" stroke="#661926" d="M468.8 308.8L476.8 313.5L476.8 310.2L469.4 311.3Z"/><path fill="#873333" stroke="#873333" d="M459.2 290.5L468 298.7L468.7 300.3L460.6 296.9Z"/><path fill="#5d2538" stroke="#5d2538" d="M395.3 317.7L403 320L403.3 321.2L395.9 322.3Z"/><path fill="#731a26" stroke="#731a26" d="M490.8 305.3L498.8 310.6L498.8 306.9L491.5 308Z"/><path fill="#732639" stroke="#732639" d="M417.1 313L424.9 316.2L425.3 317.9L418 319Z"/><path fill="#6e2c42" stroke="#6e2c42" d="M387.6 315.4L395.3 317.7L395.9 322.3L388.6 323.4Z"/><path fill="#7b2929" stroke="#7b2929" d="M489 291.9L498.8 307L498.8 303.3L489.8 293.7Z"/><path fill="#86263a" stroke="#86263a" d="M439 308.5L446.9 312.4L447.4 314.6L440 315.7Z"/><path fill="#8f3d3d" stroke="#8f3d3d" d="M429.1 290.5L437.6 297.2L438.8 302.4L430.9 299.8Z"/><path fill="#5d3838" stroke="#5d3838" d="M385.7 304L394 309.3L394.6 311.7L386.6 308.6Z"/><path fill="#842c42" stroke="#842c42" d="M409.4 309.8L417.1 313L418 319L410.6 320.1Z"/><path fill="#172e45" stroke="#172e45" d="M301.2 344.5L308.3 341.2L308 338.3L300.8 340.5Z"/><path fill="#5c2e2e" stroke="#5c2e2e" d="M415.2 300.4L423.9 308.6L424.4 309.3L416.1 304.3Z"/><path fill="#15293e" stroke="#15293e" d="M308.3 341.2L315.4 338L315.3 336.1L308 338.3Z"/><path fill="#982639" stroke="#982639" d="M460.9 304.1L468.8 308.8L469.4 311.3L462.1 312.4Z"/><path fill="#112232" stroke="#112232" d="M315.4 338L322.5 334.7L322.5 334L315.3 336.1Z"/><path fill="#963232" stroke="#963232" d="M480.9 284.2L489.8 293.7L490.6 295.6L482.5 291.5Z"/><path fill="#00324c" stroke="#00324c" d="M279.9 354.3L286.7 348.6L286.2 343.7L279.1 347.1Z"/><path fill="#002e44" stroke="#002e44" d="M286.7 348.6L293.6 342.9L293.3 340.3L286.2 343.7Z"/><path fill="#002233" stroke="#002233" d="M293.6 342.9L300.4 337.2L300.4 336.9L293.3 340.3Z"/><path fill="#1e1e2d" stroke="#1e1e2d" d="M322.5 334.7L329.8 333.8L329.8 333L322.5 334Z"/><path fill="#1f1f2e" stroke="#1f1f2e" d="M329.8 333.8L337.2 333L337.2 332L329.8 333Z"/><path fill="#94a3bd" style="fill-opacity:0.7" d="M278.4 339.8L300.4 337.6L300.4 336.5L278.4 339.8Z"/><path fill="#94a3bd" style="fill-opacity:0.7" d="M300.4 337.6L322.5 335.4L322.5 333.2L300.4 336.5Z"/><path fill="#94a3bd" style="fill-opacity:0.7" d="M322.5 335.4L344.5 333.2L344.5 329.9L322.5 333.2Z"/><path fill="#94a3bd" style="fill-opacity:0.7" d="M344.5 333.2L366.6 331L366.6 326.7L344.5 329.9Z"/><path fill="#94a3bd" style="fill-opacity:0.7" d="M366.6 331L388.6 328.9L388.6 323.4L366.6 326.7Z"/><path fill="#94a3bd" style="fill-opacity:0.7" d="M388.6 328.9L410.6 326.7L410.6 320.1L388.6 323.4Z"/><path fill="#94a3bd" style="fill-opacity:0.7" d="M410.6 326.7L432.7 324.5L432.7 316.8L410.6 320.1Z"/><path fill="#94a3bd" style="fill-opacity:0.7" d="M432.7 324.5L454.7 322.3L454.7 313.5L432.7 316.8Z"/><path fill="#94a3bd" style="fill-opacity:0.7" d="M454.7 322.3L476.8 320.1L476.8 310.2L454.7 313.5Z"/><path fill="#94a3bd" style="fill-opacity:0.7" d="M476.8 320.1L498.8 317.9L498.8 307L476.8 310.2Z"/><path fill="#202030" stroke="#202030" d="M337.2 333L344.5 332.1L344.5 331L337.2 332Z"/><path fill="#2d1e2d" stroke="#2d1e2d" d="M359 328.1L366.6 329.6L366.6 328.1L359.1 327.9Z"/><path fill="#934937" stroke="#934937" d="M447.9 271L457.5 280.8L459 285.2L450.2 279.3Z"/><path fill="#a82538" stroke="#a82538" d="M482.8 299.9L490.8 305.3L491.5 308L484.1 309.1Z"/><path fill="#381c2a" stroke="#381c2a" d="M380.8 323.4L388.6 327L388.6 325.2L381 323.9Z"/><path fill="#982c41" stroke="#982c41" d="M431.2 304.5L439 308.5L440 315.7L432.7 316.8Z"/><path fill="#281a28" stroke="#281a28" d="M351.4 326.6L359 328.1L359.1 327.9L351.6 327.7Z"/><path fill="#431b28" stroke="#431b28" d="M402.6 318.8L410.6 324.5L410.6 322.3L403 320Z"/><path fill="#342334" stroke="#342334" d="M343.8 325.2L351.4 326.6L351.6 327.7L344.2 327.6Z"/><path fill="#4e1a27" stroke="#4e1a27" d="M424.5 314.5L432.7 321.9L432.7 319.4L424.9 316.2Z"/><path fill="#422131" stroke="#422131" d="M373 319.7L380.8 323.4L381 323.9L373.5 322.6Z"/><path fill="#ab2b40" stroke="#ab2b40" d="M453 299.4L460.9 304.1L462.1 312.4L454.7 313.5Z"/><path fill="#5a1a27" stroke="#5a1a27" d="M446.4 310.3L454.7 319.4L454.7 316.4L446.9 312.4Z"/><path fill="#172e44" stroke="#172e44" d="M301.5 348.5L308.5 344.1L308.3 341.2L301.2 344.5Z"/><path fill="#6e2f2f" stroke="#6e2f2f" d="M436.4 292L445.6 302.7L446.2 303.9L437.6 297.2Z"/><path fill="#14283c" stroke="#14283c" d="M308.5 344.1L315.5 339.8L315.4 338L308.3 341.2Z"/><path fill="#a13d3d" stroke="#a13d3d" d="M450.4 282.3L459.2 290.5L460.6 296.9L452.6 293.5Z"/><path fill="#53293e" stroke="#53293e" d="M365.2 316.1L373 319.7L373.5 322.6L365.9 321.4Z"/><path fill="#661a26" stroke="#661a26" d="M468.3 306.3L476.8 316.8L476.8 313.5L468.8 308.8Z"/><path fill="#bc2a3f" stroke="#bc2a3f" d="M474.9 294.6L482.8 299.9L484.1 309.1L476.8 310.2Z"/><path fill="#102131" stroke="#102131" d="M315.5 339.8L322.5 335.4L322.5 334.7L315.4 338Z"/><path fill="#00314a" stroke="#00314a" d="M280.6 361.6L287.2 353.6L286.7 348.6L279.9 354.3Z"/><path fill="#002c42" stroke="#002c42" d="M287.2 353.6L293.8 345.6L293.6 342.9L286.7 348.6Z"/><path fill="#002131" stroke="#002131" d="M293.8 345.6L300.4 337.6L300.4 337.2L293.6 342.9Z"/><path fill="#1e1e2d" stroke="#1e1e2d" d="M322.5 335.4L329.8 334.7L329.8 333.8L322.5 334.7Z"/><path fill="#1f1f2e" stroke="#1f1f2e" d="M329.8 334.7L337.2 334L337.2 333L329.8 333.8Z"/><path fill="#202030" stroke="#202030" d="M337.2 334L344.5 333.2L344.5 332.1L337.2 333Z"/><path fill="#592435" stroke="#592435" d="M394.6 313.2L402.6 318.8L403 320L395.3 317.7Z"/><path fill="#2d1e2d" stroke="#2d1e2d" d="M358.9 328.3L366.6 331L366.6 329.6L359 328.1Z"/><path fill="#731a26" stroke="#731a26" d="M490.2 302.5L498.8 314.2L498.8 310.6L490.8 305.3Z"/><path fill="#753a3a" stroke="#753a3a" d="M406.4 292.2L415.2 300.4L416.1 304.3L407.8 299.3Z"/><path fill="#371c2a" stroke="#371c2a" d="M380.6 322.8L388.6 328.9L388.6 327L380.8 323.4Z"/><path fill="#271a27" stroke="#271a27" d="M351.2 325.5L358.9 328.3L359 328.1L351.4 326.6Z"/><path fill="#6d2437" stroke="#6d2437" d="M416.3 307L424.5 314.5L424.9 316.2L417.1 313Z"/><path fill="#421a28" stroke="#421a28" d="M402.3 317.6L410.6 326.7L410.6 324.5L402.6 318.8Z"/><path fill="#332233" stroke="#332233" d="M343.5 322.8L351.2 325.5L351.4 326.6L343.8 325.2Z"/><path fill="#6b2b40" stroke="#6b2b40" d="M386.6 307.5L394.6 313.2L395.3 317.7L387.6 315.4Z"/><path fill="#4d1a27" stroke="#4d1a27" d="M424.1 312.7L432.7 324.5L432.7 321.9L424.5 314.5Z"/><path fill="#7d2f2f" stroke="#7d2f2f" d="M457.8 284.1L467.3 297.2L468 298.7L459.2 290.5Z"/><path fill="#a34936" stroke="#a34936" d="M468.7 260.1L478.7 272.1L480.5 277.6L471.4 270.3Z"/><path fill="#3f2030" stroke="#3f2030" d="M372.5 316.8L380.6 322.8L380.8 323.4L373 319.7Z"/><path fill="#b23b3b" stroke="#b23b3b" d="M471.9 274.6L480.9 284.2L482.5 291.5L474.3 287.5Z"/><path fill="#0e0e2a" stroke="#0e0e2a" d="M307.8 337.4L315.1 336.8L315.1 336.2L307.8 336.9Z"/><path fill="#001642" stroke="#001642" d="M278.6 343.4L285.9 341.6L285.7 339.1L278.4 339.8Z"/><path fill="#00133a" stroke="#00133a" d="M285.9 341.6L293.2 339.8L293.1 338.3L285.7 339.1Z"/><path fill="#000f2e" stroke="#000f2e" d="M293.2 339.8L300.4 338L300.4 337.6L293.1 338.3Z"/><path fill="#0d0d28" stroke="#0d0d28" d="M300.4 338L307.8 337.4L307.8 336.9L300.4 337.6Z"/><path fill="#0e0e2b" stroke="#0e0e2b" d="M315.1 336.8L322.5 336.2L322.5 335.4L315.1 336.2Z"/><path fill="#1b0d28" stroke="#1b0d28" d="M337.1 333.7L344.5 334.3L344.5 333.2L337.2 334Z"/><path fill="#250c25" stroke="#250c25" d="M359.1 330.8L366.6 332.5L366.6 331L359.2 331.8Z"/><path fill="#1e0f2d" stroke="#1e0f2d" d="M329.7 333.2L337.1 333.7L337.2 334L329.8 334.7Z"/><path fill="#261339" stroke="#261339" d="M322.3 332.6L329.7 333.2L329.8 334.7L322.5 335.4Z"/><path fill="#2f0c23" stroke="#2f0c23" d="M381.1 327.9L388.6 330.7L388.6 328.9L381.3 329.6Z"/><path fill="#7f2436" stroke="#7f2436" d="M438 301.2L446.4 310.3L446.9 312.4L439 308.5Z"/><path fill="#381338" stroke="#381338" d="M351.6 329.1L359.1 330.8L359.2 331.8L351.9 332.5Z"/><path fill="#3a0c23" stroke="#3a0c23" d="M403.1 325.1L410.6 328.9L410.6 326.7L403.3 327.4Z"/><path fill="#591926" stroke="#591926" d="M445.9 308.1L454.7 322.3L454.7 319.4L446.4 310.3Z"/><path fill="#460c23" stroke="#460c23" d="M425.1 322.4L432.7 327L432.7 324.5L425.3 325.2Z"/><path fill="#431643" stroke="#431643" d="M344.2 327.3L351.6 329.1L351.9 332.5L344.5 333.2Z"/><path fill="#50143c" stroke="#50143c" d="M373.6 325.1L381.1 327.9L381.3 329.6L373.9 330.3Z"/><path fill="#520c23" stroke="#520c23" d="M447.1 319.8L454.7 325.2L454.7 322.3L447.4 323Z"/><path fill="#5d0c23" stroke="#5d0c23" d="M469.1 317.3L476.8 323.4L476.8 320.1L469.4 320.8Z"/><path fill="#680c23" stroke="#680c23" d="M491.1 314.9L498.8 321.6L498.8 317.9L491.5 318.6Z"/><path fill="#66143d" stroke="#66143d" d="M395.5 321.4L403.1 325.1L403.3 327.4L395.9 328.1Z"/><path fill="#5c1745" stroke="#5c1745" d="M366 322.3L373.6 325.1L373.9 330.3L366.6 331Z"/><path fill="#50283c" stroke="#50283c" d="M364.5 310.8L372.5 316.8L373 319.7L365.2 316.1Z"/><path fill="#661926" stroke="#661926" d="M467.7 303.8L476.8 320.1L476.8 316.8L468.3 306.3Z"/><path fill="#812b40" stroke="#812b40" d="M408.1 299.5L416.3 307L417.1 313L409.4 309.8Z"/><path fill="#7b143d" stroke="#7b143d" d="M417.5 317.8L425.1 322.4L425.3 325.2L418 325.9Z"/><path fill="#542232" stroke="#542232" d="M394 308.6L402.3 317.6L402.6 318.8L394.6 313.2Z"/><path fill="#883a3a" stroke="#883a3a" d="M427.3 281.2L436.4 292L437.6 297.2L429.1 290.5Z"/><path fill="#731745" stroke="#731745" d="M387.9 317.6L395.5 321.4L395.9 328.1L388.6 328.9Z"/><path fill="#8f2436" stroke="#8f2436" d="M459.8 295.8L468.3 306.3L468.8 308.8L460.9 304.1Z"/><path fill="#8d143c" stroke="#8d143c" d="M439.4 314.5L447.1 319.8L447.4 323L440 323.7Z"/><path fill="#721926" stroke="#721926" d="M489.5 299.7L498.8 317.9L498.8 314.2L490.2 302.5Z"/><path fill="#8a2e2e" stroke="#8a2e2e" d="M479.2 276.8L489 291.9L489.8 293.7L480.9 284.2Z"/><path fill="#94a3bd" style="fill-opacity:0.7" d="M300.4 338.7L322.5 337.6L322.5 335.4L300.4 337.6Z"/><path fill="#0d0d28" stroke="#0d0d28" d="M300.4 338.3L307.8 337.9L307.8 337.4L300.4 338Z"/><path fill="#0e0e2a" stroke="#0e0e2a" d="M307.8 337.9L315.1 337.4L315.1 336.8L307.8 337.4Z"/><path fill="#00133a" stroke="#00133a" d="M286 344.2L293.2 341.3L293.2 339.8L285.9 341.6Z"/><path fill="#000f2e" stroke="#000f2e" d="M293.2 341.3L300.4 338.3L300.4 338L293.2 339.8Z"/><path fill="#0e0e2b" stroke="#0e0e2b" d="M315.1 337.4L322.5 336.9L322.5 336.2L315.1 336.8Z"/><path fill="#94a3bd" style="fill-opacity:0.7" d="M278.4 339.8L300.4 338.7L300.4 337.6L278.4 339.8Z"/><path fill="#94a3bd" style="fill-opacity:0.7" d="M322.5 337.6L344.5 336.5L344.5 333.2L322.5 335.4Z"/><path fill="#94a3bd" style="fill-opacity:0.7" d="M344.5 336.5L366.6 335.4L366.6 331L344.5 333.2Z"/><path fill="#94a3bd" style="fill-opacity:0.7" d="M366.6 335.4L388.6 334.3L388.6 328.9L366.6 331Z"/><path fill="#94a3bd" style="fill-opacity:0.7" d="M388.6 334.3L410.6 333.2L410.6 326.7L388.6 328.9Z"/><path fill="#94a3bd" style="fill-opacity:0.7" d="M410.6 333.2L432.7 332.1L432.7 324.5L410.6 326.7Z"/><path fill="#94a3bd" style="fill-opacity:0.7" d="M432.7 332.1L454.7 331L454.7 322.3L432.7 324.5Z"/><path fill="#94a3bd" style="fill-opacity:0.7" d="M454.7 331L476.8 329.9L476.8 320.1L454.7 322.3Z"/><path fill="#94a3bd" style="fill-opacity:0.7" d="M476.8 329.9L498.8 328.9L498.8 317.9L476.8 320.1Z"/><path fill="#001642" stroke="#001642" d="M278.8 347.1L286 344.2L285.9 341.6L278.6 343.4Z"/><path fill="#1b0d28" stroke="#1b0d28" d="M337.1 333.5L344.5 335.4L344.5 334.3L337.1 333.7Z"/><path fill="#891744" stroke="#891744" d="M409.9 313.2L417.5 317.8L418 325.9L410.6 326.7Z"/><path fill="#9e143b" stroke="#9e143b" d="M461.4 311.3L469.1 317.3L469.4 320.8L462.1 321.6Z"/><path fill="#250c25" stroke="#250c25" d="M359 329.8L366.6 334L366.6 332.5L359.1 330.8Z"/><path fill="#1e0f2d" stroke="#1e0f2d" d="M329.6 331.6L337.1 333.5L337.1 333.7L329.7 333.2Z"/><path fill="#261339" stroke="#261339" d="M322.1 329.7L329.6 331.6L329.7 333.2L322.3 332.6Z"/><path fill="#300c24" stroke="#300c24" d="M380.9 326.2L388.6 332.5L388.6 330.7L381.1 327.9Z"/><path fill="#ae133a" stroke="#ae133a" d="M483.4 308.3L491.1 314.9L491.5 318.6L484.1 319.4Z"/><path fill="#361236" stroke="#361236" d="M351.4 325.6L359 329.8L359.1 330.8L351.6 329.1Z"/><path fill="#9c1643" stroke="#9c1643" d="M431.8 309.1L439.4 314.5L440 323.7L432.7 324.5Z"/><path fill="#3a0c23" stroke="#3a0c23" d="M402.9 322.8L410.6 331L410.6 328.9L403.1 325.1Z"/><path fill="#9d2334" stroke="#9d2334" d="M481.6 290.7L490.2 302.5L490.8 305.3L482.8 299.9Z"/><path fill="#662233" stroke="#662233" d="M415.5 301L424.1 312.7L424.5 314.5L416.3 307Z"/><path fill="#942a40" stroke="#942a40" d="M429.7 292.1L438 301.2L439 308.5L431.2 304.5Z"/><path fill="#450c23" stroke="#450c23" d="M424.8 319.6L432.7 329.6L432.7 327L425.1 322.4Z"/><path fill="#421642" stroke="#421642" d="M343.8 321.5L351.4 325.6L351.6 329.1L344.2 327.3Z"/><path fill="#67293e" stroke="#67293e" d="M385.7 299.6L394 308.6L394.6 313.2L386.6 307.5Z"/><path fill="#af1641" stroke="#af1641" d="M453.7 305.3L461.4 311.3L462.1 321.6L454.7 322.3Z"/><path fill="#4d133a" stroke="#4d133a" d="M373.2 319.9L380.9 326.2L381.1 327.9L373.6 325.1Z"/><path fill="#510c23" stroke="#510c23" d="M446.8 316.7L454.7 328.1L454.7 325.2L447.1 319.8Z"/><path fill="#001339" stroke="#001339" d="M286.1 346.7L293.3 342.7L293.2 341.3L286 344.2Z"/><path fill="#0d0d28" stroke="#0d0d28" d="M300.4 338.7L307.8 338.3L307.8 337.9L300.4 338.3Z"/><path fill="#0e0e2a" stroke="#0e0e2a" d="M307.8 338.3L315.1 338L315.1 337.4L307.8 337.9Z"/><path fill="#0e0e2b" stroke="#0e0e2b" d="M315.1 338L322.5 337.6L322.5 336.9L315.1 337.4Z"/><path fill="#001641" stroke="#001641" d="M279 350.7L286.1 346.7L286 344.2L278.8 347.1Z"/><path fill="#000f2d" stroke="#000f2d" d="M293.3 342.7L300.4 338.7L300.4 338.3L293.2 341.3Z"/><path fill="#1b0d28" stroke="#1b0d28" d="M337 333.3L344.5 336.5L344.5 335.4L337.1 333.5Z"/><path fill="#5d0c23" stroke="#5d0c23" d="M468.7 313.9L476.8 326.7L476.8 323.4L469.1 317.3Z"/><path fill="#c01540" stroke="#c01540" d="M475.7 301.7L483.4 308.3L484.1 319.4L476.8 320.1Z"/><path fill="#250c25" stroke="#250c25" d="M358.9 328.8L366.6 335.4L366.6 334L359 329.8Z"/><path fill="#1d0f2c" stroke="#1d0f2c" d="M329.5 330.1L337 333.3L337.1 333.5L329.6 331.6Z"/><path fill="#6a0c23" stroke="#6a0c23" d="M490.7 311.2L498.8 325.2L498.8 321.6L491.1 314.9Z"/><path fill="#62143b" stroke="#62143b" d="M395.1 314.6L402.9 322.8L403.1 325.1L395.5 321.4Z"/><path fill="#5b1744" stroke="#5b1744" d="M365.5 313.6L373.2 319.9L373.6 325.1L366 322.3Z"/><path fill="#251338" stroke="#251338" d="M321.9 326.9L329.5 330.1L329.6 331.6L322.1 329.7Z"/><path fill="#993a3a" stroke="#993a3a" d="M448.3 271.1L457.8 284.1L459.2 290.5L450.4 282.3Z"/><path fill="#300c24" stroke="#300c24" d="M380.7 324.5L388.6 334.3L388.6 332.5L380.9 326.2Z"/><path fill="#762232" stroke="#762232" d="M437 293.9L445.9 308.1L446.4 310.3L438 301.2Z"/><path fill="#a62a3e" stroke="#a62a3e" d="M451.3 285.3L459.8 295.8L460.9 304.1L453 299.4Z"/><path fill="#341134" stroke="#341134" d="M351.2 322.2L358.9 328.8L359 329.8L351.4 325.6Z"/><path fill="#3a0c23" stroke="#3a0c23" d="M402.6 320.5L410.6 333.2L410.6 331L402.9 322.8Z"/><path fill="#74133a" stroke="#74133a" d="M416.9 309.7L424.8 319.6L425.1 322.4L417.5 317.8Z"/><path fill="#000027" stroke="#000027" d="M293.1 339.3L300.4 339.1L300.4 338.7L293.1 339.1Z"/><path fill="#000023" stroke="#000023" d="M278.4 339.8L285.7 339.6L285.7 339.4L278.4 339.8Z"/><path fill="#000025" stroke="#000025" d="M285.7 339.6L293.1 339.3L293.1 339.1L285.7 339.4Z"/><path fill="#0c0023" stroke="#0c0023" d="M315.1 337.4L322.5 338.3L322.5 337.6L315.1 338Z"/><path fill="#110032" stroke="#110032" d="M307.8 336.4L315.1 337.4L315.1 338L307.8 338.3Z"/><path fill="#180024" stroke="#180024" d="M337.2 335.5L344.5 337.6L344.5 336.5L337.2 336.9Z"/><path fill="#15003e" stroke="#15003e" d="M300.4 335.4L307.8 336.4L307.8 338.3L300.4 338.7Z"/><path fill="#460c23" stroke="#460c23" d="M424.5 316.9L432.7 332.1L432.7 329.6L424.8 319.6Z"/><path fill="#260026" stroke="#260026" d="M359.2 333.6L366.6 336.9L366.6 335.4L359.2 335.8Z"/><path fill="#28003c" stroke="#28003c" d="M329.8 333.3L337.2 335.5L337.2 336.9L329.8 337.2Z"/><path fill="#350028" stroke="#350028" d="M381.3 331.9L388.6 336.2L388.6 334.3L381.3 334.7Z"/><path fill="#2f0047" stroke="#2f0047" d="M322.5 331.2L329.8 333.3L329.8 337.2L322.5 337.6Z"/><path fill="#430028" stroke="#430028" d="M403.3 330.2L410.6 335.4L410.6 333.2L403.3 333.6Z"/><path fill="#401540" stroke="#401540" d="M343.5 315.6L351.2 322.2L351.4 325.6L343.8 321.5Z"/><path fill="#400040" stroke="#400040" d="M351.9 330.4L359.2 333.6L359.2 335.8L351.9 336.2Z"/><path fill="#711744" stroke="#711744" d="M387.3 306.4L395.1 314.6L395.5 321.4L387.9 317.6Z"/><path fill="#500028" stroke="#500028" d="M425.3 328.7L432.7 334.7L432.7 332.1L425.3 332.5Z"/><path fill="#7c293e" stroke="#7c293e" d="M406.9 289.2L415.5 301L416.3 307L408.1 299.5Z"/><path fill="#5b0027" stroke="#5b0027" d="M447.4 327.2L454.7 334L454.7 331L447.4 331.4Z"/><path fill="#490049" stroke="#490049" d="M344.5 327.1L351.9 330.4L351.9 336.2L344.5 336.5Z"/><path fill="#570041" stroke="#570041" d="M373.9 327.6L381.3 331.9L381.3 334.7L373.9 335.1Z"/><path fill="#491237" stroke="#491237" d="M372.9 314.7L380.7 324.5L380.9 326.2L373.2 319.9Z"/><path fill="#660026" stroke="#660026" d="M469.4 325.9L476.8 333.2L476.8 329.9L469.4 330.3Z"/><path fill="#520c23" stroke="#520c23" d="M446.5 313.5L454.7 331L454.7 328.1L446.8 316.7Z"/><path fill="#700025" stroke="#700025" d="M491.5 324.6L498.8 332.5L498.8 328.9L491.5 329.2Z"/><path fill="#6c0041" stroke="#6c0041" d="M395.9 325L403.3 330.2L403.3 333.6L395.9 334Z"/><path fill="#851339" stroke="#851339" d="M438.8 305.2L446.8 316.7L447.1 319.8L439.4 314.5Z"/><path fill="#610048" stroke="#610048" d="M366.6 323.3L373.9 327.6L373.9 335.1L366.6 335.4Z"/><path fill="#842131" stroke="#842131" d="M458.6 287.5L467.7 303.8L468.3 306.3L459.8 295.8Z"/><path fill="#800040" stroke="#800040" d="M418 322.7L425.3 328.7L425.3 332.5L418 332.9Z"/><path fill="#5e0c23" stroke="#5e0c23" d="M468.4 310.4L476.8 329.9L476.8 326.7L468.7 313.9Z"/><path fill="#b7293d" stroke="#b7293d" d="M472.9 278.9L481.6 290.7L482.8 299.9L474.9 294.6Z"/><path fill="#770047" stroke="#770047" d="M388.6 319.8L395.9 325L395.9 334L388.6 334.3Z"/><path fill="#94a3bd" style="fill-opacity:0.7" d="M300.4 339.8L322.5 339.8L322.5 337.6L300.4 338.7Z"/><path fill="#94a3bd" style="fill-opacity:0.7" d="M278.4 339.8L300.4 339.8L300.4 338.7L278.4 339.8Z"/><path fill="#94a3bd" style="fill-opacity:0.7" d="M322.5 339.8L344.5 339.8L344.5 336.5L322.5 337.6Z"/><path fill="#94a3bd" style="fill-opacity:0.7" d="M344.5 339.8L366.6 339.8L366.6 335.4L344.5 336.5Z"/><path fill="#94a3bd" style="fill-opacity:0.7" d="M366.6 339.8L388.6 339.8L388.6 334.3L366.6 335.4Z"/><path fill="#94a3bd" style="fill-opacity:0.7" d="M388.6 339.8L410.6 339.8L410.6 333.2L388.6 334.3Z"/><path fill="#94a3bd" style="fill-opacity:0.7" d="M410.6 339.8L432.7 339.8L432.7 332.1L410.6 333.2Z"/><path fill="#94a3bd" style="fill-opacity:0.7" d="M432.7 339.8L454.7 339.8L454.7 331L432.7 332.1Z"/><path fill="#94a3bd" style="fill-opacity:0.7" d="M454.7 339.8L476.8 339.8L476.8 329.9L454.7 331Z"/><path fill="#94a3bd" style="fill-opacity:0.7" d="M476.8 339.8L498.8 339.8L498.8 328.9L476.8 329.9Z"/><path fill="#000023" stroke="#000023" d="M278.4 339.8L285.7 339.7L285.7 339.6L278.4 339.8Z"/><path fill="#000025" stroke="#000025" d="M285.7 339.7L293.1 339.6L293.1 339.3L285.7 339.6Z"/><path fill="#000027" stroke="#000027" d="M293.1 339.6L300.4 339.4L300.4 339.1L293.1 339.3Z"/><path fill="#92003f" stroke="#92003f" d="M440 320.5L447.4 327.2L447.4 331.4L440 331.8Z"/><path fill="#0c0023" stroke="#0c0023" d="M315.1 336.8L322.5 339.1L322.5 338.3L315.1 337.4Z"/><path fill="#110032" stroke="#110032" d="M307.8 334.5L315.1 336.8L315.1 337.4L307.8 336.4Z"/><path fill="#180024" stroke="#180024" d="M337.2 334.1L344.5 338.7L344.5 337.6L337.2 335.5Z"/><path fill="#14003d" stroke="#14003d" d="M300.4 332.2L307.8 334.5L307.8 336.4L300.4 335.4Z"/><path fill="#861643" stroke="#861643" d="M409.1 299.8L416.9 309.7L417.5 317.8L409.9 313.2Z"/><path fill="#260026" stroke="#260026" d="M359.2 331.5L366.6 338.3L366.6 336.9L359.2 333.6Z"/><path fill="#6b0c24" stroke="#6b0c24" d="M490.4 307.5L498.8 328.9L498.8 325.2L490.7 311.2Z"/><path fill="#5b1237" stroke="#5b1237" d="M394.6 307.9L402.6 320.5L402.9 322.8L395.1 314.6Z"/><path fill="#a3003d" stroke="#a3003d" d="M462.1 318.5L469.4 325.9L469.4 330.3L462.1 330.7Z"/><path fill="#951338" stroke="#951338" d="M460.7 301.1L468.7 313.9L469.1 317.3L461.4 311.3Z"/><path fill="#8c0046" stroke="#8c0046" d="M410.6 316.6L418 322.7L418 332.9L410.6 333.2Z"/><path fill="#27003b" stroke="#27003b" d="M329.8 329.4L337.2 334.1L337.2 335.5L329.8 333.3Z"/><path fill="#a93838" stroke="#a93838" d="M469.4 261.7L479.2 276.8L480.9 284.2L471.9 274.6Z"/><path fill="#571642" stroke="#571642" d="M365 305L372.9 314.7L373.2 319.9L365.5 313.6Z"/><path fill="#330027" stroke="#330027" d="M381.3 329.1L388.6 338L388.6 336.2L381.3 331.9Z"/><path fill="#2e0046" stroke="#2e0046" d="M322.5 324.8L329.8 329.4L329.8 333.3L322.5 331.2Z"/><path fill="#b2003b" stroke="#b2003b" d="M484.1 316.7L491.5 324.6L491.5 329.2L484.1 329.6Z"/><path fill="#400027" stroke="#400027" d="M403.3 326.8L410.6 337.6L410.6 335.4L403.3 330.2Z"/><path fill="#3e003e" stroke="#3e003e" d="M351.9 324.6L359.2 331.5L359.2 333.6L351.9 330.4Z"/><path fill="#9f0044" stroke="#9f0044" d="M432.7 313.8L440 320.5L440 331.8L432.7 332.1Z"/><path fill="#4c0026" stroke="#4c0026" d="M425.3 324.8L432.7 337.2L432.7 334.7L425.3 328.7Z"/><path fill="#912030" stroke="#912030" d="M480.3 281.5L489.5 299.7L490.2 302.5L481.6 290.7Z"/><path fill="#8e283d" stroke="#8e283d" d="M428.2 279.8L437 293.9L438 301.2L429.7 292.1Z"/><path fill="#000023" stroke="#000023" d="M278.4 339.8L285.7 339.8L285.7 339.7L278.4 339.8Z"/><path fill="#000025" stroke="#000025" d="M285.7 339.8L293.1 339.8L293.1 339.6L285.7 339.7Z"/><path fill="#000027" stroke="#000027" d="M293.1 339.8L300.4 339.8L300.4 339.4L293.1 339.6Z"/><path fill="#580026" stroke="#580026" d="M447.4 323L454.7 336.9L454.7 334L447.4 327.2Z"/><path fill="#a31236" stroke="#a31236" d="M482.7 297.3L490.7 311.2L491.1 314.9L483.4 308.3Z"/><path fill="#0c0023" stroke="#0c0023" d="M315.1 336.2L322.5 339.8L322.5 339.1L315.1 336.8Z"/><path fill="#470047" stroke="#470047" d="M344.5 317.7L351.9 324.6L351.9 330.4L344.5 327.1Z"/><path fill="#b10042" stroke="#b10042" d="M454.7 311.2L462.1 318.5L462.1 330.7L454.7 331Z"/><path fill="#54003f" stroke="#54003f" d="M373.9 320.1L381.3 329.1L381.3 331.9L373.9 327.6Z"/><path fill="#100031" stroke="#100031" d="M307.8 332.5L315.1 336.2L315.1 336.8L307.8 334.5Z"/><path fill="#180024" stroke="#180024" d="M337.2 332.6L344.5 339.8L344.5 338.7L337.2 334.1Z"/><path fill="#14003c" stroke="#14003c" d="M300.4 328.9L307.8 332.5L307.8 334.5L300.4 332.2Z"/><path fill="#6c1236" stroke="#6c1236" d="M416.4 301.6L424.5 316.9L424.8 319.6L416.9 309.7Z"/><path fill="#620025" stroke="#620025" d="M469.4 321.4L476.8 336.5L476.8 333.2L469.4 325.9Z"/><path fill="#981641" stroke="#981641" d="M430.9 293.7L438.8 305.2L439.4 314.5L431.8 309.1Z"/><path fill="#250025" stroke="#250025" d="M359.2 329.3L366.6 339.8L366.6 338.3L359.2 331.5Z"/><path fill="#260039" stroke="#260039" d="M329.8 325.5L337.2 332.6L337.2 334.1L329.8 329.4Z"/><path fill="#6d0024" stroke="#6d0024" d="M491.5 320L498.8 336.2L498.8 332.5L491.5 324.6Z"/><path fill="#c20041" stroke="#c20041" d="M476.8 308.8L484.1 316.7L484.1 329.6L476.8 329.9Z"/><path fill="#320025" stroke="#320025" d="M381.3 326.2L388.6 339.8L388.6 338L381.3 329.1Z"/><path fill="#67003e" stroke="#67003e" d="M395.9 316.1L403.3 326.8L403.3 330.2L395.9 325Z"/><path fill="#6d1641" stroke="#6d1641" d="M386.6 295.2L394.6 307.9L395.1 314.6L387.3 306.4Z"/><path fill="#2d0044" stroke="#2d0044" d="M322.5 318.3L329.8 325.5L329.8 329.4L322.5 324.8Z"/><path fill="#5f0047" stroke="#5f0047" d="M366.6 311.2L373.9 320.1L373.9 327.6L366.6 323.3Z"/><path fill="#3e0025" stroke="#3e0025" d="M403.3 323.5L410.6 339.8L410.6 337.6L403.3 326.8Z"/><path fill="#3b003b" stroke="#3b003b" d="M351.9 318.8L359.2 329.3L359.2 331.5L351.9 324.6Z"/><path fill="#4a0025" stroke="#4a0025" d="M425.3 321L432.7 339.8L432.7 337.2L425.3 324.8Z"/><path fill="#7b1235" stroke="#7b1235" d="M438.2 295.9L446.5 313.5L446.8 316.7L438.8 305.2Z"/><path fill="#7a003d" stroke="#7a003d" d="M418 312.4L425.3 324.8L425.3 328.7L418 322.7Z"/><path fill="#aa1540" stroke="#aa1540" d="M452.7 288.2L460.7 301.1L461.4 311.3L453.7 305.3Z"/><path fill="#550025" stroke="#550025" d="M447.4 318.9L454.7 339.8L454.7 336.9L447.4 323Z"/><path fill="#9e283b" stroke="#9e283b" d="M449.6 271.1L458.6 287.5L459.8 295.8L451.3 285.3Z"/><path fill="#740046" stroke="#740046" d="M388.6 305.3L395.9 316.1L395.9 325L388.6 319.8Z"/><path fill="#450045" stroke="#450045" d="M344.5 308.3L351.9 318.8L351.9 324.6L344.5 317.7Z"/><path fill="#4e003b" stroke="#4e003b" d="M373.9 312.7L381.3 326.2L381.3 329.1L373.9 320.1Z"/><path fill="#8a003b" stroke="#8a003b" d="M440 309.2L447.4 323L447.4 327.2L440 320.5Z"/><path fill="#600024" stroke="#600024" d="M469.4 317L476.8 339.8L476.8 336.5L469.4 321.4Z"/><path fill="#801540" stroke="#801540" d="M408.3 286.3L416.4 301.6L416.9 309.7L409.1 299.8Z"/><path fill="#891133" stroke="#891133" d="M460.1 290.8L468.4 310.4L468.7 313.9L460.7 301.1Z"/><path fill="#6b0024" stroke="#6b0024" d="M491.5 315.4L498.8 339.8L498.8 336.2L491.5 320Z"/><path fill="#ba153e" stroke="#ba153e" d="M474.6 283.3L482.7 297.3L483.4 308.3L475.7 301.7Z"/><path fill="#9a003a" stroke="#9a003a" d="M462.1 306.4L469.4 321.4L469.4 325.9L462.1 318.5Z"/><path fill="#60003a" stroke="#60003a" d="M395.9 307.2L403.3 323.5L403.3 326.8L395.9 316.1Z"/><path fill="#890044" stroke="#890044" d="M410.6 300.1L418 312.4L418 322.7L410.6 316.6Z"/><path fill="#5b0044" stroke="#5b0044" d="M366.6 299.1L373.9 312.7L373.9 320.1L366.6 311.2Z"/><path fill="#a80038" stroke="#a80038" d="M484.1 303.8L491.5 320L491.5 324.6L484.1 316.7Z"/><path fill="#961132" stroke="#961132" d="M481.9 286.2L490.4 307.5L490.7 311.2L482.7 297.3Z"/><path fill="#ad263a" stroke="#ad263a" d="M471 263.3L480.3 281.5L481.6 290.7L472.9 278.9Z"/><path fill="#710038" stroke="#710038" d="M418 302.2L425.3 321L425.3 324.8L418 312.4Z"/><path fill="#9b0043" stroke="#9b0043" d="M432.7 295.4L440 309.2L440 320.5L432.7 313.8Z"/><path fill="#91153e" stroke="#91153e" d="M430 278.4L438.2 295.9L438.8 305.2L430.9 293.7Z"/><path fill="#700043" stroke="#700043" d="M388.6 290.8L395.9 307.2L395.9 316.1L388.6 305.3Z"/><path fill="#800037" stroke="#800037" d="M440 297.9L447.4 318.9L447.4 323L440 309.2Z"/><path fill="#ad0041" stroke="#ad0041" d="M454.7 291.3L462.1 306.4L462.1 318.5L454.7 311.2Z"/><path fill="#a2143d" stroke="#a2143d" d="M451.7 271.2L460.1 290.8L460.7 301.1L452.7 288.2Z"/><path fill="#8e0035" stroke="#8e0035" d="M462.1 294.2L469.4 317L469.4 321.4L462.1 306.4Z"/><path fill="#830041" stroke="#830041" d="M410.6 283.5L418 302.2L418 312.4L410.6 300.1Z"/><path fill="#bd003f" stroke="#bd003f" d="M476.8 287.7L484.1 303.8L484.1 316.7L476.8 308.8Z"/><path fill="#9b0034" stroke="#9b0034" d="M484.1 291L491.5 315.4L491.5 320L484.1 303.8Z"/><path fill="#b1143b" stroke="#b1143b" d="M473.5 264.9L481.9 286.2L482.7 297.3L474.6 283.3Z"/><path fill="#940040" stroke="#940040" d="M432.7 277L440 297.9L440 309.2L432.7 295.4Z"/><path fill="#a4003e" stroke="#a4003e" d="M454.7 271.4L462.1 294.2L462.1 306.4L454.7 291.3Z"/><path fill="#b3003c" stroke="#b3003c" d="M476.8 266.5L484.1 291L484.1 303.8L476.8 287.7Z"/></g><path d="M278.4 339.8L498.8 339.8L498.8 230.3L278.4 339.8ZM278.4 339.8L300.4 339.8L300.4 338.7L278.4 339.8ZM279 350.7L300.4 338.7L300.4 337.6L278.4 339.8ZM280.6 361.6L300.4 337.6L300.4 336.5L278.4 339.8ZM283.3 372.3L300.4 336.5L300.4 335.4L278.4 339.8ZM287 382.7L300.4 335.4L300.4 334.3L278.4 339.8ZM291.8 392.9L300.4 334.3L300.4 333.2L278.4 339.8ZM297.4 402.7L300.4 333.2L300.4 332.1L278.4 339.8ZM303.9 412.1L300.4 332.1L300.4 331L278.4 339.8ZM311.1 421.1L300.4 331L300.4 329.9L278.4 339.8ZM319.1 429.7L300.4 329.9L300.4 328.9L278.4 339.8ZM300.4 328.9L322.5 339.8L322.5 337.6L300.4 338.7ZM300.4 338.7L322.5 337.6L322.5 335.4L300.4 337.6ZM301.5 348.5L322.5 335.4L322.5 333.2L300.4 336.5ZM303.7 358.1L322.5 333.2L322.5 331L300.4 335.4ZM306.9 367.5L322.5 331L322.5 328.9L300.4 334.3ZM311.1 376.6L322.5 328.9L322.5 326.7L300.4 333.2ZM316.2 385.4L322.5 326.7L322.5 324.5L300.4 332.1ZM322.2 393.9L322.5 324.5L322.5 322.3L300.4 331ZM329 401.9L322.5 322.3L322.5 320.1L300.4 329.9ZM336.5 409.5L322.5 320.1L322.5 317.9L300.4 328.9ZM322.5 318.3L344.5 339.8L344.5 336.5L322.5 337.6ZM321.9 326.9L344.5 336.5L344.5 333.2L322.5 335.4ZM322.5 335.4L344.5 333.2L344.5 329.9L322.5 333.2ZM324.1 343.9L344.5 329.9L344.5 326.7L322.5 331ZM326.7 352.1L344.5 326.7L344.5 323.4L322.5 328.9ZM330.4 360.1L344.5 323.4L344.5 320.1L322.5 326.7ZM334.9 367.9L344.5 320.1L344.5 316.8L322.5 324.5ZM340.4 375.2L344.5 316.8L344.5 313.5L322.5 322.3ZM346.6 382.3L344.5 313.5L344.5 310.2L322.5 320.1ZM353.6 388.9L344.5 310.2L344.5 306.9L322.5 317.9ZM344.5 308.3L366.6 339.8L366.6 335.4L344.5 336.5ZM343.5 315.6L366.6 335.4L366.6 331L344.5 333.2ZM343.5 322.8L366.6 331L366.6 326.7L344.5 329.9ZM344.5 329.9L366.6 326.7L366.6 322.3L344.5 326.7ZM346.6 337L366.6 322.3L366.6 317.9L344.5 323.4ZM349.7 343.8L366.6 317.9L366.6 313.5L344.5 320.1ZM353.7 350.3L366.6 313.5L366.6 309.1L344.5 316.8ZM358.5 356.6L366.6 309.1L366.6 304.8L344.5 313.5ZM364.2 362.5L366.6 304.8L366.6 300.4L344.5 310.2ZM370.7 368L366.6 300.4L366.6 296L344.5 307ZM366.6 299.1L388.6 339.8L388.6 334.3L366.6 335.4ZM365 305L388.6 334.3L388.6 328.9L366.6 331ZM364.5 310.8L388.6 328.9L388.6 323.4L366.6 326.7ZM365 316.6L388.6 323.4L388.6 317.9L366.6 322.3ZM366.6 322.3L388.6 317.9L388.6 312.4L366.6 317.9ZM369.1 327.8L388.6 312.4L388.6 307L366.6 313.5ZM372.5 333.1L388.6 307L388.6 301.5L366.6 309.1ZM376.8 338.1L388.6 301.5L388.6 296L366.6 304.8ZM381.9 342.9L388.6 296L388.6 290.5L366.6 300.4ZM387.8 347.3L388.6 290.5L388.6 285.1L366.6 296ZM388.6 290.8L410.6 339.8L410.6 333.2L388.6 334.3ZM386.6 295.2L410.6 333.2L410.6 326.7L388.6 328.9ZM385.7 299.6L410.6 326.7L410.6 320.1L388.6 323.4ZM385.7 304L410.6 320.1L410.6 313.5L388.6 317.9ZM386.7 308.3L410.6 313.5L410.6 307L388.6 312.4ZM388.6 312.4L410.6 307L410.6 300.4L388.6 307ZM391.5 316.4L410.6 300.4L410.6 293.8L388.6 301.5ZM395.2 320.2L410.6 293.8L410.6 287.2L388.6 296ZM399.7 323.7L410.6 287.2L410.6 280.7L388.6 290.5ZM405.1 326.9L410.6 280.7L410.6 274.1L388.6 285.1ZM410.6 283.5L432.7 339.8L432.7 332.1L410.6 333.2ZM408.3 286.3L432.7 332.1L432.7 324.5L410.6 326.7ZM406.9 289.2L432.7 324.5L432.7 316.8L410.6 320.1ZM406.4 292.2L432.7 316.8L432.7 309.1L410.6 313.5ZM406.9 295L432.7 309.1L432.7 301.5L410.6 307ZM408.3 297.8L432.7 301.5L432.7 293.8L410.6 300.4ZM410.6 300.4L432.7 293.8L432.7 286.1L410.6 293.8ZM413.8 302.8L432.7 286.1L432.7 278.5L410.6 287.2ZM417.8 305L432.7 278.5L432.7 270.8L410.6 280.7ZM422.5 307L432.7 270.8L432.7 263.2L410.6 274.1ZM432.7 277L454.7 339.8L454.7 331L432.7 332.1ZM430 278.4L454.7 331L454.7 322.3L432.7 324.5ZM428.2 279.8L454.7 322.3L454.7 313.5L432.7 316.8ZM427.3 281.2L454.7 313.5L454.7 304.8L432.7 309.1ZM427.3 282.6L454.7 304.8L454.7 296L432.7 301.5ZM428.3 283.9L454.7 296L454.7 287.2L432.7 293.8ZM430 285.1L454.7 287.2L454.7 278.5L432.7 286.1ZM432.7 286.1L454.7 278.5L454.7 269.7L432.7 278.5ZM436.1 287L454.7 269.7L454.7 261L432.7 270.8ZM440.3 287.6L454.7 261L454.7 252.2L432.7 263.2ZM454.7 271.4L476.8 339.8L476.8 329.9L454.7 331ZM451.7 271.2L476.8 329.9L476.8 320.1L454.7 322.3ZM449.6 271.1L476.8 320.1L476.8 310.2L454.7 313.5ZM448.3 271.1L476.8 310.2L476.8 300.4L454.7 304.8ZM447.9 271L476.8 300.4L476.8 290.5L454.7 296ZM448.4 270.8L476.8 290.5L476.8 280.7L454.7 287.2ZM449.7 270.6L476.8 280.7L476.8 270.8L454.7 278.5ZM451.8 270.2L476.8 270.8L476.8 261L454.7 269.7ZM454.7 269.7L476.8 261L476.8 251.1L454.7 261ZM458.4 269L476.8 251.1L476.8 241.2L454.7 252.2ZM476.8 266.5L498.8 339.8L498.8 328.9L476.8 329.9ZM473.5 264.9L498.8 328.9L498.8 317.9L476.8 320.1ZM471 263.3L498.8 317.9L498.8 306.9L476.8 310.2ZM469.4 261.7L498.8 307L498.8 296L476.8 300.4ZM468.7 260.1L498.8 296L498.8 285.1L476.8 290.5ZM468.7 258.5L498.8 285.1L498.8 274.1L476.8 280.7ZM469.6 256.8L498.8 274.1L498.8 263.2L476.8 270.8ZM471.2 255.1L498.8 263.2L498.8 252.2L476.8 261ZM473.6 253.2L498.8 252.2L498.8 241.2L476.8 251.1ZM476.8 251.1L498.8 241.2L498.8 230.3L476.8 241.2Z" fill="none" stroke="#333" stroke-opacity="0.3" stroke-width="0.6"/></g><g clip-path="url(#c_right)"><rect x="539" y="230" width="300" height="200" fill="url(#gv)"/><rect x="539" y="230" width="300" height="200" fill="url(#gh)" mask="url(#mt)"/><g class="vright"><path fill="#d3bb46" stroke="#e8ce4d" d="M749.6 252.3L751.2 251L756.4 249.4L755.6 251.7Z"/><path fill="#d38c46" stroke="#e89a4d" d="M728.9 266L731.3 266.2L739.7 268.1L739.7 270.6Z"/><path fill="#d8a848" stroke="#eeb94f" d="M742.3 258.8L743.9 257.8L750.6 257.9L750.6 260.8Z"/><path fill="#dec64a" stroke="#f5d952" d="M755.6 251.7L756.4 249.4L761.6 247.7L761.6 251Z"/><path fill="#dddd4a" stroke="#f3f351" d="M761.6 251L761.6 247.7L765.2 244.3L765.2 247.7Z"/><path fill="#dede4a" stroke="#f4f451" d="M765.2 247.7L765.2 244.3L768.9 240.9L768.9 244.4Z"/><path fill="#dede4a" stroke="#f5f552" d="M768.9 244.4L768.9 240.9L772.5 237.5L772.5 241.1Z"/><path fill="#c4ae41" stroke="#d7bf48" d="M746 252.7L748.3 252.4L752.7 249.7L751.2 251Z"/><path fill="#cfb845" stroke="#e4cb4c" d="M751.2 251L752.7 249.7L757.1 247.1L756.4 249.4Z"/><path fill="#c55842" stroke="#d96048" d="M706.2 283L710.2 285.7L717.9 286.7L717.9 288.5Z"/><path fill="#ca7043" stroke="#df7c4a" d="M718.7 274.6L721.9 276.1L728.8 276.1L728.8 278.3Z"/><path fill="#d08b45" stroke="#e5994c" d="M731.3 266.2L733.7 266.4L739.7 265.5L739.7 268.1Z"/><path fill="#d6a747" stroke="#ecb84f" d="M743.9 257.8L745.4 256.7L750.6 255L750.6 257.9Z"/><path fill="#dcc349" stroke="#f2d751" d="M756.4 249.4L757.1 247.1L761.6 244.4L761.6 247.7Z"/><path fill="#dcdc49" stroke="#f2f251" d="M761.6 247.7L761.6 244.4L765.2 240.9L765.2 244.3Z"/><path fill="#dddd4a" stroke="#f3f351" d="M765.2 244.3L765.2 240.9L768.9 237.4L768.9 240.9Z"/><path fill="#dede4a" stroke="#f4f451" d="M768.9 240.9L768.9 237.4L772.5 233.8L772.5 237.5Z"/><path fill="#f2a151" stroke="#ffb159" d="M721.6 268.2L728.8 273.9L732.4 270.3L727.7 267.3Z"/><path fill="#e1af4b" stroke="#f8c153" d="M735 260.3L739.7 263L743.4 259.3L740.2 258.5Z"/><path fill="#f46c51" stroke="#ff7759" d="M702.5 284.8L710.6 292.1L714.2 288.5L710.2 285.7Z"/><path fill="#ea824e" stroke="#ff8f56" d="M715.1 276L721.5 281.2L725.1 277.6L721.9 276.1Z"/><path fill="#de944a" stroke="#f4a351" d="M727.7 267.3L732.4 270.3L736.1 266.6L733.7 266.4Z"/><path fill="#cea045" stroke="#e3b04c" d="M740.2 258.5L743.4 259.3L747 255.7L745.4 256.7Z"/><path fill="#c9b243" stroke="#ddc44a" d="M748.3 252.4L750.6 252.1L754.3 248.4L752.7 249.7Z"/><path fill="#cab443" stroke="#dfc64a" d="M752.7 249.7L754.3 248.4L757.9 244.8L757.1 247.1Z"/><path fill="#cd5b44" stroke="#e1644b" d="M710.2 285.7L714.2 288.5L717.9 284.9L717.9 286.7Z"/><path fill="#c56d42" stroke="#d97848" d="M721.9 276.1L725.1 277.6L728.8 273.9L728.8 276.1Z"/><path fill="#d44747" stroke="#e94e4e" d="M698.4 295.4L703.3 299.4L706.9 295.8L706.9 297.2Z"/><path fill="#c98643" stroke="#dd934a" d="M733.7 266.4L736.1 266.6L739.7 263L739.7 265.5Z"/><path fill="#db3149" stroke="#f13550" d="M686.7 305L692.3 310.4L696 306.7L696 307.8Z"/><path fill="#d1a246" stroke="#e5b24c" d="M745.4 256.7L747 255.7L750.6 252.1L750.6 255Z"/><path fill="#e1194b" stroke="#f71b52" d="M674.9 314.7L681.4 321.3L685.1 317.6L685.1 318.4Z"/><path fill="#d8c048" stroke="#edd34f" d="M757.1 247.1L757.9 244.8L761.6 241.1L761.6 244.4Z"/><path fill="#e6004d" stroke="#fd0054" d="M663.2 324.3L670.5 332.2L674.1 328.6L674.1 328.9Z"/><path fill="#dcdc49" stroke="#f2f251" d="M761.6 244.4L761.6 241.1L765.2 237.5L765.2 240.9Z"/><path fill="#dddd4a" stroke="#f3f351" d="M765.2 240.9L765.2 237.5L768.9 233.8L768.9 237.4Z"/><path fill="#dede4a" stroke="#f4f451" d="M768.9 237.4L768.9 233.8L772.5 230.2L772.5 233.8Z"/><path fill="#00194a" stroke="#001b52" d="M674.1 350.4L674.1 346.4L677.8 343.9L677.8 346.8Z"/><path fill="#003149" stroke="#003651" d="M688.7 354L688.7 348.3L692.3 343.4L692.3 346.8Z"/><path fill="#005c45" stroke="#00664c" d="M714.2 353.8L714.2 347.3L717.9 337.7L717.9 339.5Z"/><path fill="#00334d" stroke="#003854" d="M685.1 361.3L685.1 353.3L688.7 348.3L688.7 354Z"/><path fill="#007345" stroke="#007f4c" d="M725.1 357.2L725.1 349.2L728.8 337.3L728.8 339.5Z"/><path fill="#004a4a" stroke="#005151" d="M699.6 361.1L699.6 352.7L703.3 345.4L703.3 350.3Z"/><path fill="#008a45" stroke="#00984c" d="M736.1 360.4L736.1 351L739.7 336.9L739.7 339.5Z"/><path fill="#004d4d" stroke="#005555" d="M696 371.9L696 360L699.6 352.7L699.6 361.1Z"/><path fill="#00a145" stroke="#00b14c" d="M747 363.6L747 352.8L750.6 336.6L750.6 339.5Z"/><path fill="#00624a" stroke="#006c51" d="M710.6 368.1L710.6 357L714.2 347.3L714.2 353.8Z"/><path fill="#00b845" stroke="#00ca4c" d="M757.9 366.6L757.9 354.4L761.6 336.2L761.6 339.5Z"/><path fill="#007b4a" stroke="#008751" d="M721.5 374.8L721.5 361.1L725.1 349.2L725.1 357.2Z"/><path fill="#00ce45" stroke="#00e34c" d="M768.9 369.4L768.9 355.9L772.5 335.9L772.5 339.5Z"/><path fill="#00674e" stroke="#007255" d="M706.9 382.4L706.9 366.6L710.6 357L710.6 368.1Z"/><path fill="#343438" style="fill-opacity:0.95" d="M663.2 339.5L663.2 339.5L674.1 338.4L674.1 339.5Z"/><path fill="#45454a" style="fill-opacity:0.95" d="M685.1 339.5L685.1 337.3L696 336.2L696 339.5Z"/><path fill="#4d4d53" style="fill-opacity:0.95" d="M696 339.5L696 336.2L706.9 335.1L706.9 339.5Z"/><path fill="#56565b" style="fill-opacity:0.95" d="M706.9 339.5L706.9 335.1L717.9 334L717.9 339.5Z"/><path fill="#5d5d64" style="fill-opacity:0.95" d="M717.9 339.5L717.9 334L728.8 332.9L728.8 339.5Z"/><path fill="#65656c" style="fill-opacity:0.95" d="M728.8 339.5L728.8 332.9L739.7 331.8L739.7 339.5Z"/><path fill="#6c6c73" style="fill-opacity:0.95" d="M739.7 339.5L739.7 331.8L750.6 330.8L750.6 339.5Z"/><path fill="#73737b" style="fill-opacity:0.95" d="M750.6 339.5L750.6 330.8L761.6 329.7L761.6 339.5Z"/><path fill="#7a7a82" style="fill-opacity:0.95" d="M761.6 339.5L761.6 329.7L772.5 328.6L772.5 339.5Z"/><path fill="#3d3d41" style="fill-opacity:0.95" d="M674.1 339.5L674.1 338.4L685.1 337.3L685.1 339.5Z"/><path fill="#00334c" stroke="#003853" d="M688.7 348.3L688.7 342.6L692.3 340L692.3 343.4Z"/><path fill="#009349" stroke="#00a251" d="M732.4 381.4L732.4 365.1L736.1 351L736.1 360.4Z"/><path fill="#003550" stroke="#003b58" d="M685.1 353.3L685.1 345.3L688.7 342.6L688.7 348.3Z"/><path fill="#004d4d" stroke="#005555" d="M699.6 352.7L699.6 344.3L703.3 340.4L703.3 345.4Z"/><path fill="#008f47" stroke="#009d4f" d="M736.1 351L736.1 341.6L739.7 334.4L739.7 336.9Z"/><path fill="#00814d" stroke="#008e55" d="M717.9 392.5L717.9 373L721.5 361.1L721.5 374.8Z"/><path fill="#005252" stroke="#005a5a" d="M696 360L696 348.1L699.6 344.3L699.6 352.7Z"/><path fill="#00a647" stroke="#00b74e" d="M747 352.8L747 341.9L750.6 333.7L750.6 336.6Z"/><path fill="#00684e" stroke="#007255" d="M710.6 357L710.6 345.9L714.2 340.9L714.2 347.3Z"/><path fill="#00be47" stroke="#00d14e" d="M757.9 354.4L757.9 342.2L761.6 332.9L761.6 336.2Z"/><path fill="#00ab49" stroke="#00bc51" d="M743.4 387.6L743.4 368.9L747 352.8L747 363.6Z"/><path fill="#00824e" stroke="#008f56" d="M721.5 361.1L721.5 347.4L725.1 341.3L725.1 349.2Z"/><path fill="#00d547" stroke="#00ea4e" d="M768.9 355.9L768.9 342.4L772.5 332.2L772.5 335.9Z"/><path fill="#006e52" stroke="#00795b" d="M706.9 366.6L706.9 350.9L710.6 345.9L710.6 357Z"/><path fill="#009c4e" stroke="#00ab56" d="M732.4 365.1L732.4 348.8L736.1 341.6L736.1 351Z"/><path fill="#008952" stroke="#00975b" d="M717.9 373L717.9 353.5L721.5 347.4L721.5 361.1Z"/><path fill="#009b4d" stroke="#00aa55" d="M728.8 402.3L728.8 379.2L732.4 365.1L732.4 381.4Z"/><path fill="#00c349" stroke="#00d650" d="M754.3 393.6L754.3 372.5L757.9 354.4L757.9 366.6Z"/><path fill="#00b54e" stroke="#00c755" d="M743.4 368.9L743.4 350.2L747 341.9L747 352.8Z"/><path fill="#00a552" stroke="#00b55b" d="M728.8 379.2L728.8 356.1L732.4 348.8L732.4 365.1Z"/><path fill="#00ce4d" stroke="#00e355" d="M754.3 372.5L754.3 351.5L757.9 342.2L757.9 354.4Z"/><path fill="#007659" stroke="#008261" d="M706.9 350.9L706.9 335.1L710.6 334.8L710.6 345.9Z"/><path fill="#00ae57" stroke="#00bf60" d="M732.4 348.8L732.4 332.6L736.1 332.2L736.1 341.6Z"/><path fill="#009559" stroke="#00a462" d="M717.9 353.5L717.9 334L721.5 333.7L721.5 347.4Z"/><path fill="#00cc57" stroke="#00e060" d="M743.4 350.2L743.4 331.5L747 331.1L747 341.9Z"/><path fill="#00da49" stroke="#00f050" d="M765.2 399.3L765.2 376L768.9 355.9L768.9 369.4Z"/><path fill="#00b45a" stroke="#00c663" d="M728.8 356.1L728.8 332.9L732.4 332.6L732.4 348.8Z"/><path fill="#00e957" stroke="#00ff60" d="M754.3 351.5L754.3 330.4L757.9 330L757.9 342.2Z"/><path fill="#00e74d" stroke="#00ff55" d="M765.2 376L765.2 352.6L768.9 342.4L768.9 355.9Z"/><path fill="#00b44d" stroke="#00c655" d="M739.7 411.7L739.7 385.1L743.4 368.9L743.4 387.6Z"/><path fill="#00c052" stroke="#00d35a" d="M739.7 385.1L739.7 358.5L743.4 350.2L743.4 368.9Z"/><path fill="#00ff57" stroke="#00ff60" d="M765.2 352.6L765.2 329.3L768.9 328.9L768.9 342.4Z"/><path fill="#00d25a" stroke="#00e763" d="M739.7 358.5L739.7 331.8L743.4 331.5L743.4 350.2Z"/><path fill="#00ef5a" stroke="#00ff63" d="M750.6 360.7L750.6 330.8L754.3 330.4L754.3 351.5Z"/><path fill="#00ff5a" stroke="#00ff63" d="M761.6 362.8L761.6 329.7L765.2 329.3L765.2 352.6Z"/><path fill="#00da52" stroke="#00f05a" d="M750.6 390.7L750.6 360.7L754.3 351.5L754.3 372.5Z"/><path fill="#180049" stroke="#1b0050" d="M662.1 328.6L662.5 332.2L666.4 334.2L666.1 331.9Z"/><path fill="#00cd4d" stroke="#00e154" d="M750.6 420.7L750.6 390.7L754.3 372.5L754.3 393.6Z"/><path fill="#19324b" stroke="#1b3752" d="M686.1 348.1L685.8 343.8L689.2 340.9L689.4 344.2Z"/><path fill="#184949" stroke="#1b5151" d="M701.1 350.2L700.6 344.2L703.8 338.9L704 342.7Z"/><path fill="#177345" stroke="#197e4c" d="M726.5 347.4L726.1 340.6L728.8 330.8L728.8 332.9Z"/><path fill="#178945" stroke="#19974b" d="M737.8 349.6L737.2 341.4L739.7 329.3L739.7 331.8Z"/><path fill="#1a4d4d" stroke="#1c5555" d="M698.1 357.7L697.4 349.5L700.6 344.2L701.1 350.2Z"/><path fill="#00f552" stroke="#00ff5a" d="M761.6 396L761.6 362.8L765.2 352.6L765.2 376Z"/><path fill="#19624a" stroke="#1b6c51" d="M712.7 356.1L712 347.4L714.9 339.8L715.3 345.1Z"/><path fill="#179f44" stroke="#19af4b" d="M749.1 351.7L748.4 342L750.6 327.8L750.6 330.8Z"/><path fill="#17b644" stroke="#19c84b" d="M760.3 353.6L759.5 342.6L761.6 326.4L761.6 329.7Z"/><path fill="#187a49" stroke="#1b8651" d="M724.3 361.8L723.4 350.5L726.1 340.6L726.5 347.4Z"/><path fill="#1a674d" stroke="#1c7155" d="M710.1 367.1L709.1 355L712 347.4L712.7 356.1Z"/><path fill="#17cc44" stroke="#19e04b" d="M771.5 355.4L770.6 343.1L772.5 324.9L772.5 328.6Z"/><path fill="#00e54c" stroke="#00fc54" d="M761.6 429.2L761.6 396L765.2 376L765.2 399.3Z"/><path fill="#189249" stroke="#1ba150" d="M735.9 367.3L734.7 353.4L737.2 341.4L737.8 349.6Z"/><path fill="#343438" style="fill-opacity:0.95" d="M663.2 339.5L663.2 339.5L674.1 337.3L674.1 338.4Z"/><path fill="#4d4d52" style="fill-opacity:0.95" d="M696 336.2L696 332.9L706.9 330.8L706.9 335.1Z"/><path fill="#55555b" style="fill-opacity:0.95" d="M706.9 335.1L706.9 330.8L717.9 328.6L717.9 334Z"/><path fill="#5d5d63" style="fill-opacity:0.95" d="M717.9 334L717.9 328.6L728.8 326.4L728.8 332.9Z"/><path fill="#64646b" style="fill-opacity:0.95" d="M728.8 332.9L728.8 326.4L739.7 324.2L739.7 331.8Z"/><path fill="#6c6c73" style="fill-opacity:0.95" d="M739.7 331.8L739.7 324.2L750.6 322L750.6 330.8Z"/><path fill="#73737a" style="fill-opacity:0.95" d="M750.6 330.8L750.6 322L761.6 319.8L761.6 329.7Z"/><path fill="#797981" style="fill-opacity:0.95" d="M761.6 329.7L761.6 319.8L772.5 317.6L772.5 328.6Z"/><path fill="#45454a" style="fill-opacity:0.95" d="M685.1 337.3L685.1 335.1L696 332.9L696 336.2Z"/><path fill="#3d3d41" style="fill-opacity:0.95" d="M674.1 338.4L674.1 337.3L685.1 335.1L685.1 337.3Z"/><path fill="#1a814d" stroke="#1c8e55" d="M722.1 376.3L720.7 360.4L723.4 350.5L724.3 361.8Z"/><path fill="#194c4c" stroke="#1c5454" d="M700.6 344.2L700.1 338.2L703.5 335.2L703.8 338.9Z"/><path fill="#1b5050" stroke="#1e5959" d="M697.4 349.5L696.7 341.2L700.1 338.2L700.6 344.2Z"/><path fill="#1a674d" stroke="#1c7155" d="M712 347.4L711.3 338.7L714.6 334.6L714.9 339.8Z"/><path fill="#18aa49" stroke="#1bbb50" d="M747.5 372.6L746.1 356.2L748.4 342L749.1 351.7Z"/><path fill="#18a547" stroke="#1ab64e" d="M748.4 342L747.7 332.4L750.6 324.9L750.6 327.8Z"/><path fill="#18bc47" stroke="#1acf4e" d="M759.5 342.6L758.7 331.6L761.6 323.1L761.6 326.4Z"/><path fill="#1a814e" stroke="#1c8e55" d="M723.4 350.5L722.4 339.2L725.6 333.9L726.1 340.6Z"/><path fill="#1b6d52" stroke="#1e785a" d="M709.1 355L708 342.9L711.3 338.7L712 347.4Z"/><path fill="#17d346" stroke="#1ae84d" d="M770.6 343.1L769.7 330.7L772.5 321.3L772.5 324.9Z"/><path fill="#1a9a4d" stroke="#1ca955" d="M734 385L732.3 365.5L734.7 353.4L735.9 367.3Z"/><path fill="#1a9b4e" stroke="#1cab55" d="M734.7 353.4L733.6 339.5L736.6 333.1L737.2 341.4Z"/><path fill="#1b8952" stroke="#1e975b" d="M720.7 360.4L719.3 344.5L722.4 339.2L723.4 350.5Z"/><path fill="#18c148" stroke="#1bd550" d="M759 377.5L757.4 358.8L759.5 342.6L760.3 353.6Z"/><path fill="#1ab54d" stroke="#1cc755" d="M746.1 356.2L744.7 339.8L747.7 332.4L748.4 342Z"/><path fill="#1ba552" stroke="#1eb55b" d="M732.3 365.5L730.5 345.9L733.6 339.5L734.7 353.4Z"/><path fill="#1acd4d" stroke="#1ce255" d="M757.4 358.8L755.9 340L758.7 331.6L759.5 342.6Z"/><path fill="#18d848" stroke="#1aee4f" d="M770.5 382.2L768.7 361.2L770.6 343.1L771.5 355.4Z"/><path fill="#1ab34d" stroke="#1cc554" d="M745.9 393.5L743.8 370.4L746.1 356.2L747.5 372.6Z"/><path fill="#1e9459" stroke="#21a362" d="M719.3 344.5L717.9 328.6L721.5 327.8L722.4 339.2Z"/><path fill="#1ae64d" stroke="#1cfd54" d="M768.7 361.2L767 340.1L769.7 330.7L770.6 343.1Z"/><path fill="#1bbf52" stroke="#1ed35a" d="M743.8 370.4L741.8 347.3L744.7 339.8L746.1 356.2Z"/><path fill="#1dcb57" stroke="#20df60" d="M744.7 339.8L743.4 323.5L747 322.7L747.7 332.4Z"/><path fill="#1eb35a" stroke="#21c563" d="M730.5 345.9L728.8 326.4L732.4 325.7L733.6 339.5Z"/><path fill="#1de957" stroke="#20ff60" d="M755.9 340L754.3 321.3L757.9 320.6L758.7 331.6Z"/><path fill="#1dff57" stroke="#20ff60" d="M767 340.1L765.2 319.1L768.9 318.4L769.7 330.7Z"/><path fill="#1ed25a" stroke="#21e763" d="M741.8 347.3L739.7 324.2L743.4 323.5L744.7 339.8Z"/><path fill="#1ef05a" stroke="#21ff63" d="M753 348.5L750.6 322L754.3 321.3L755.9 340Z"/><path fill="#1bda52" stroke="#1ef05a" d="M755.4 375L753 348.5L755.9 340L757.4 358.8Z"/><path fill="#1eff5a" stroke="#21ff63" d="M764.2 349.6L761.6 319.8L765.2 319.1L767 340.1Z"/><path fill="#19cb4c" stroke="#1ce054" d="M757.7 401.5L755.4 375L757.4 358.8L759 377.5Z"/><path fill="#301848" stroke="#351a4f" d="M672 326.6L672.7 329.8L676.8 331.3L676.3 329.4Z"/><path fill="#32004c" stroke="#370053" d="M658.9 318.1L660.3 325.2L664.9 329.1L664 324.5Z"/><path fill="#300047" stroke="#34004f" d="M664 324.5L664.9 329.1L669.5 333L669.1 330.9Z"/><path fill="#1bf451" stroke="#1eff59" d="M766.9 379.3L764.2 349.6L767 340.1L768.7 361.2Z"/><path fill="#324c4c" stroke="#375353" d="M698.1 343.5L697.4 338.9L700.6 335.7L701 339.3Z"/><path fill="#2e8944" stroke="#32964b" d="M738.8 338.6L737.9 331.6L739.7 321.6L739.7 324.2Z"/><path fill="#31624a" stroke="#366c51" d="M713.4 344.1L712.4 337.8L715.1 332.3L715.6 336.3Z"/><path fill="#2d9e44" stroke="#32ae4b" d="M750.4 339.6L749.2 331.2L750.6 319.1L750.6 322Z"/><path fill="#33674d" stroke="#397155" d="M711.1 351.8L709.7 343.3L712.4 337.8L713.4 344.1Z"/><path fill="#19e44c" stroke="#1cfa53" d="M769.5 409.1L766.9 379.3L768.7 361.2L770.5 382.2Z"/><path fill="#317a49" stroke="#368651" d="M725.7 348.7L724.3 339.8L726.5 332L727.2 337.5Z"/><path fill="#2db443" stroke="#31c64a" d="M761.9 340.5L760.6 330.7L761.6 316.5L761.6 319.8Z"/><path fill="#2dc943" stroke="#31de4a" d="M773.4 341.2L771.9 330.1L772.5 314L772.5 317.6Z"/><path fill="#319249" stroke="#35a050" d="M737.9 353.1L736.1 341.6L737.9 331.6L738.8 338.6Z"/><path fill="#33814d" stroke="#398e55" d="M724.1 359.8L722 347.6L724.3 339.8L725.7 348.7Z"/><path fill="#343437" style="fill-opacity:0.95" d="M663.2 339.5L663.2 339.5L674.1 336.2L674.1 337.3Z"/><path fill="#3c3c40" style="fill-opacity:0.95" d="M674.1 337.3L674.1 336.2L685.1 332.9L685.1 335.1Z"/><path fill="#454549" style="fill-opacity:0.95" d="M685.1 335.1L685.1 332.9L696 329.7L696 332.9Z"/><path fill="#4d4d52" style="fill-opacity:0.95" d="M696 332.9L696 329.7L706.9 326.4L706.9 330.8Z"/><path fill="#55555a" style="fill-opacity:0.95" d="M706.9 330.8L706.9 326.4L717.9 323.1L717.9 328.6Z"/><path fill="#5c5c62" style="fill-opacity:0.95" d="M717.9 328.6L717.9 323.1L728.8 319.8L728.8 326.4Z"/><path fill="#64646a" style="fill-opacity:0.95" d="M728.8 326.4L728.8 319.8L739.7 316.5L739.7 324.2Z"/><path fill="#6b6b72" style="fill-opacity:0.95" d="M739.7 324.2L739.7 316.5L750.6 313.3L750.6 322Z"/><path fill="#717179" style="fill-opacity:0.95" d="M750.6 322L750.6 313.3L761.6 310L761.6 319.8Z"/><path fill="#787880" style="fill-opacity:0.95" d="M761.6 319.8L761.6 310L772.5 306.7L772.5 317.6Z"/><path fill="#35004f" stroke="#3a0057" d="M660.3 325.2L661.8 332.4L665.9 333.8L664.9 329.1Z"/><path fill="#31004a" stroke="#360051" d="M664.9 329.1L665.9 333.8L670 335.2L669.5 333Z"/><path fill="#30a948" stroke="#35ba50" d="M750.1 357.3L747.9 343.3L749.2 331.2L750.4 339.6Z"/><path fill="#33664d" stroke="#387054" d="M712.4 337.8L711.5 331.5L714.7 328.2L715.1 332.3Z"/><path fill="#339a4d" stroke="#38a955" d="M737 367.5L734.3 351.6L736.1 341.6L737.9 353.1Z"/><path fill="#366c51" stroke="#3b7759" d="M709.7 343.3L708.3 334.9L711.5 331.5L712.4 337.8Z"/><path fill="#34814d" stroke="#398e55" d="M724.3 339.8L722.9 330.9L725.8 326.5L726.5 332Z"/><path fill="#2fbb46" stroke="#33ce4d" d="M760.6 330.7L759.3 320.9L761.6 313.3L761.6 316.5Z"/><path fill="#2fd146" stroke="#33e64d" d="M771.9 330.1L770.4 319L772.5 310.4L772.5 314Z"/><path fill="#30c048" stroke="#35d34f" d="M762.3 361.2L759.6 344.9L760.6 330.7L761.9 340.5Z"/><path fill="#349b4d" stroke="#39aa55" d="M736.1 341.6L734.3 330.2L737 324.6L737.9 331.6Z"/><path fill="#378952" stroke="#3c965a" d="M722 347.6L719.9 335.3L722.9 330.9L724.3 339.8Z"/><path fill="#33b44d" stroke="#39c655" d="M747.9 343.3L745.6 329.4L748.1 322.8L749.2 331.2Z"/><path fill="#33b24c" stroke="#38c454" d="M749.8 374.9L746.5 355.4L747.9 343.3L750.1 357.3Z"/><path fill="#37a452" stroke="#3cb55a" d="M734.3 351.6L731.5 335.7L734.3 330.2L736.1 341.6Z"/><path fill="#30d748" stroke="#34ec4f" d="M774.4 364.9L771.3 346.2L771.9 330.1L773.4 341.2Z"/><path fill="#33cd4d" stroke="#38e155" d="M759.6 344.9L756.9 328.5L759.3 320.9L760.6 330.7Z"/><path fill="#37bf52" stroke="#3cd35a" d="M746.5 355.4L743.1 336L745.6 329.4L747.9 343.3Z"/><path fill="#33e54c" stroke="#38fc54" d="M771.3 346.2L768.3 327.5L770.4 319L771.9 330.1Z"/><path fill="#3bb259" stroke="#41c462" d="M731.5 335.7L728.8 319.8L732.4 318.7L734.3 330.2Z"/><path fill="#3ae857" stroke="#40ff60" d="M756.9 328.5L754.3 312.2L757.9 311.1L759.3 320.9Z"/><path fill="#33cb4c" stroke="#38df54" d="M762.6 381.9L758.6 359L759.6 344.9L762.3 361.2Z"/><path fill="#3cd15a" stroke="#42e663" d="M743.1 336L739.7 316.5L743.4 315.5L745.6 329.4Z"/><path fill="#3aff57" stroke="#40ff60" d="M768.3 327.5L765.2 308.9L768.9 307.8L770.4 319Z"/><path fill="#36da52" stroke="#3cf05a" d="M758.6 359L754.6 336.1L756.9 328.5L759.6 344.9Z"/><path fill="#3cf05a" stroke="#42ff63" d="M754.6 336.1L750.6 313.3L754.3 312.2L756.9 328.5Z"/><path fill="#3cff5a" stroke="#42ff63" d="M766.1 336.1L761.6 310L765.2 308.9L768.3 327.5Z"/><path fill="#36f451" stroke="#3cff59" d="M770.7 362.3L766.1 336.1L768.3 327.5L771.3 346.2Z"/><path fill="#4b194b" stroke="#521b52" d="M667.9 315.3L669.9 321.9L675 325.3L673.6 321.2Z"/><path fill="#472f47" stroke="#4e344e" d="M681.9 322.5L683 325.3L687.3 326.4L686.6 324.9Z"/><path fill="#471847" stroke="#4e1a4e" d="M673.6 321.2L675 325.3L680 328.8L679.3 327.1Z"/><path fill="#32e24b" stroke="#37f953" d="M775.3 388.5L770.7 362.3L771.3 346.2L774.4 364.9Z"/><path fill="#4d004d" stroke="#540054" d="M653.8 308.1L656.9 318.6L662.7 324.3L660.6 317.5Z"/><path fill="#480048" stroke="#4f004f" d="M660.6 317.5L662.7 324.3L668.4 330.1L667.3 326.8Z"/><path fill="#4c654c" stroke="#547054" d="M710 336.7L709 331.8L711.9 328.3L712.6 332.1Z"/><path fill="#449e44" stroke="#4aae4a" d="M751 327.6L749.6 320.4L750.6 310.4L750.6 313.3Z"/><path fill="#497a49" stroke="#518751" d="M725.6 335.6L724.2 329.1L726.5 323.4L727.2 327.7Z"/><path fill="#43b343" stroke="#4ac54a" d="M762.8 327.4L761.2 318.8L761.6 306.7L761.6 310Z"/><path fill="#4d814d" stroke="#558e55" d="M724 343.5L721.9 334.9L724.2 329.1L725.6 335.6Z"/><path fill="#43c843" stroke="#49dc49" d="M774.6 327L772.7 317.1L772.5 303.1L772.5 306.7Z"/><path fill="#499249" stroke="#50a050" d="M738.5 338.9L736.4 329.8L738.1 321.9L739.1 327.7Z"/><path fill="#48a948" stroke="#50ba50" d="M751.3 341.9L748.6 330.4L749.6 320.4L751 327.6Z"/><path fill="#4d9a4d" stroke="#55a955" d="M737.8 350L734.8 337.8L736.4 329.8L738.5 338.9Z"/><path fill="#4e1a4e" stroke="#561d56" d="M669.9 321.9L672 328.5L676.4 329.5L675 325.3Z"/><path fill="#491849" stroke="#501b50" d="M675 325.3L676.4 329.5L680.7 330.5L680 328.8Z"/><path fill="#343437" style="fill-opacity:0.95" d="M663.2 339.5L663.2 339.5L674.1 335.1L674.1 336.2Z"/><path fill="#444449" style="fill-opacity:0.95" d="M685.1 332.9L685.1 330.8L696 326.4L696 329.7Z"/><path fill="#4c4c51" style="fill-opacity:0.95" d="M696 329.7L696 326.4L706.9 322L706.9 326.4Z"/><path fill="#545459" style="fill-opacity:0.95" d="M706.9 326.4L706.9 322L717.9 317.6L717.9 323.1Z"/><path fill="#5b5b61" style="fill-opacity:0.95" d="M717.9 323.1L717.9 317.6L728.8 313.3L728.8 319.8Z"/><path fill="#626269" style="fill-opacity:0.95" d="M728.8 319.8L728.8 313.3L739.7 308.9L739.7 316.5Z"/><path fill="#696970" style="fill-opacity:0.95" d="M739.7 316.5L739.7 308.9L750.6 304.5L750.6 313.3Z"/><path fill="#707077" style="fill-opacity:0.95" d="M750.6 313.3L750.6 304.5L761.6 300.2L761.6 310Z"/><path fill="#76767e" style="fill-opacity:0.95" d="M761.6 310L761.6 300.2L772.5 295.8L772.5 306.7Z"/><path fill="#3c3c40" style="fill-opacity:0.95" d="M674.1 336.2L674.1 335.1L685.1 330.8L685.1 332.9Z"/><path fill="#510051" stroke="#590059" d="M656.9 318.6L660.1 329L664.7 331.2L662.7 324.3Z"/><path fill="#4b004b" stroke="#530053" d="M662.7 324.3L664.7 331.2L669.4 333.3L668.4 330.1Z"/><path fill="#48bf48" stroke="#4fd24f" d="M764.1 344.8L760.8 330.9L761.2 318.8L762.8 327.4Z"/><path fill="#4d804d" stroke="#558d55" d="M724.2 329.1L722.9 322.7L725.8 319.1L726.5 323.4Z"/><path fill="#518751" stroke="#599559" d="M721.9 334.9L719.9 326.2L722.9 322.7L724.2 329.1Z"/><path fill="#45d045" stroke="#4ce54c" d="M772.7 317.1L770.8 307.2L772.5 299.4L772.5 303.1Z"/><path fill="#4d9b4d" stroke="#55aa55" d="M736.4 329.8L734.4 320.8L737.1 316.1L738.1 321.9Z"/><path fill="#4cb24c" stroke="#54c454" d="M751.6 356.3L747.7 340.5L748.6 330.4L751.3 341.9Z"/><path fill="#4db44d" stroke="#55c655" d="M748.6 330.4L746 318.9L748.3 313.2L749.6 320.4Z"/><path fill="#47d547" stroke="#4eeb4e" d="M776.8 347.4L772.9 331.1L772.7 317.1L774.6 327Z"/><path fill="#52a452" stroke="#5ab55a" d="M734.8 337.8L731.8 325.5L734.4 320.8L736.4 329.8Z"/><path fill="#4dcd4d" stroke="#54e154" d="M760.8 330.9L757.5 317L759.6 310.2L761.2 318.8Z"/><path fill="#52c052" stroke="#5ad35a" d="M747.7 340.5L743.7 324.7L746 318.9L748.6 330.4Z"/><path fill="#4cca4c" stroke="#53df53" d="M765.3 362.1L760.4 342.9L760.8 330.9L764.1 344.8Z"/><path fill="#4ce54c" stroke="#54fc54" d="M772.9 331.1L769.1 314.9L770.8 307.2L772.7 317.1Z"/><path fill="#52da52" stroke="#5af05a" d="M760.4 342.9L755.5 323.7L757.5 317L760.8 330.9Z"/><path fill="#59d159" stroke="#62e562" d="M743.7 324.7L739.7 308.9L743.4 307.4L746 318.9Z"/><path fill="#57ff57" stroke="#60ff60" d="M769.1 314.9L765.2 298.7L768.9 297.2L770.8 307.2Z"/><path fill="#5af05a" stroke="#63ff63" d="M755.5 323.7L750.6 304.5L754.3 303.1L757.5 317Z"/><path fill="#4be24b" stroke="#53f853" d="M778.9 367.7L773.1 345.2L772.9 331.1L776.8 347.4Z"/><path fill="#51f451" stroke="#59ff59" d="M773.1 345.2L767.3 322.7L769.1 314.9L772.9 331.1Z"/><path fill="#5aff5a" stroke="#63ff63" d="M767.3 322.7L761.6 300.2L765.2 298.7L769.1 314.9Z"/><path fill="#63314a" stroke="#6d3651" d="M677 310.5L679.7 316.6L685.1 319.5L683.3 315.8Z"/><path fill="#65194c" stroke="#701c54" d="M662 304.7L666 314.5L672.4 319.7L669.7 313.4Z"/><path fill="#5d4646" stroke="#664c4c" d="M692 316.3L693.3 318.6L697.8 319.2L697 318.2Z"/><path fill="#5d2e45" stroke="#66334c" d="M683.3 315.8L685.1 319.5L690.6 322.4L689.7 321.1Z"/><path fill="#5f1847" stroke="#691a4f" d="M669.7 313.4L672.4 319.7L678.7 324.8L677.4 322.1Z"/><path fill="#67004d" stroke="#710055" d="M647 298.9L652.4 312.4L659.6 319.9L656 311Z"/><path fill="#610049" stroke="#6a0050" d="M656 311L659.6 319.9L666.9 327.3L665.1 323.1Z"/><path fill="#590043" stroke="#62004a" d="M665.1 323.1L666.9 327.3L674.1 334.8L674.1 335.1Z"/><path fill="#667f4c" stroke="#708c54" d="M721.8 327.5L720.5 322.4L723.3 318.6L724.1 322.8Z"/><path fill="#59b243" stroke="#62c44a" d="M763 314.3L761.3 306.9L761.6 296.9L761.6 300.2Z"/><path fill="#629349" stroke="#6ba151" d="M737.6 324.8L735.9 318.2L737.8 312.3L738.7 316.9Z"/><path fill="#58c742" stroke="#61da49" d="M775.1 312.8L773 304.1L772.5 292.1L772.5 295.8Z"/><path fill="#679a4d" stroke="#71aa55" d="M736.6 332.8L734 324.1L735.9 318.2L737.6 324.8Z"/><path fill="#61a948" stroke="#6aba50" d="M751.1 326.7L748.5 317.6L749.6 309.6L750.9 315.6Z"/><path fill="#60bf48" stroke="#69d24f" d="M764.4 328.4L761 316.9L761.3 306.9L763 314.3Z"/><path fill="#67334d" stroke="#713855" d="M679.7 316.6L682.4 322.6L686.9 323.1L685.1 319.5Z"/><path fill="#6b1b50" stroke="#761d58" d="M666 314.5L670.1 324.3L675.1 325.9L672.4 319.7Z"/><path fill="#5f3048" stroke="#69344f" d="M685.1 319.5L686.9 323.1L691.4 323.7L690.6 322.4Z"/><path fill="#63194b" stroke="#6d1b52" d="M672.4 319.7L675.1 325.9L680.1 327.6L678.7 324.8Z"/><path fill="#66b34d" stroke="#70c554" d="M751.3 337.9L747.4 325.6L748.5 317.6L751.1 326.7Z"/><path fill="#343437" style="fill-opacity:0.95" d="M663.2 339.5L663.2 339.5L674.1 334L674.1 335.1Z"/><path fill="#3c3c40" style="fill-opacity:0.95" d="M674.1 335.1L674.1 334L685.1 328.6L685.1 330.8Z"/><path fill="#434348" style="fill-opacity:0.95" d="M685.1 330.8L685.1 328.6L696 323.1L696 326.4Z"/><path fill="#4b4b50" style="fill-opacity:0.95" d="M696 326.4L696 323.1L706.9 317.6L706.9 322Z"/><path fill="#525258" style="fill-opacity:0.95" d="M706.9 322L706.9 317.6L717.9 312.2L717.9 317.6Z"/><path fill="#5a5a60" style="fill-opacity:0.95" d="M717.9 317.6L717.9 312.2L728.8 306.7L728.8 313.3Z"/><path fill="#616167" style="fill-opacity:0.95" d="M728.8 313.3L728.8 306.7L739.7 301.2L739.7 308.9Z"/><path fill="#68686e" style="fill-opacity:0.95" d="M739.7 308.9L739.7 301.2L750.6 295.8L750.6 304.5Z"/><path fill="#6e6e75" style="fill-opacity:0.95" d="M750.6 304.5L750.6 295.8L761.6 290.3L761.6 300.2Z"/><path fill="#74747c" style="fill-opacity:0.95" d="M761.6 300.2L761.6 290.3L772.5 284.9L772.5 295.8Z"/><path fill="#6d0052" stroke="#78005a" d="M652.4 312.4L657.8 326L663.2 328.8L659.6 319.9Z"/><path fill="#66004c" stroke="#700054" d="M659.6 319.9L663.2 328.8L668.7 331.6L666.9 327.3Z"/><path fill="#679a4d" stroke="#71aa55" d="M735.9 318.2L734.2 311.5L736.9 307.7L737.8 312.3Z"/><path fill="#5fd547" stroke="#68ea4e" d="M777.7 329.9L773.5 316.1L773 304.1L775.1 312.8Z"/><path fill="#6da351" stroke="#77b35a" d="M734 324.1L731.4 315.4L734.2 311.5L735.9 318.2Z"/><path fill="#67b44d" stroke="#71c655" d="M748.5 317.6L745.9 308.5L748.3 303.6L749.6 309.6Z"/><path fill="#65cb4c" stroke="#6fdf54" d="M765.9 342.6L760.8 327L761 316.9L764.4 328.4Z"/><path fill="#67cd4d" stroke="#71e255" d="M761 316.9L757.7 305.5L759.6 299.5L761.3 306.9Z"/><path fill="#6ec052" stroke="#78d35a" d="M747.4 325.6L743.6 313.4L745.9 308.5L748.5 317.6Z"/><path fill="#66e54c" stroke="#70fc54" d="M773.5 316.1L769.4 302.3L770.9 295.4L773 304.1Z"/><path fill="#6ddb52" stroke="#78f15a" d="M760.8 327L755.7 311.4L757.7 305.5L761 316.9Z"/><path fill="#740057" stroke="#800060" d="M657.8 326L663.2 339.5L666.8 337.7L663.2 328.8Z"/><path fill="#64e24b" stroke="#6ef853" d="M780.3 347L774.1 328.1L773.5 316.1L777.7 329.9Z"/><path fill="#6df552" stroke="#78ff5a" d="M774.1 328.1L767.8 309.2L769.4 302.3L773.5 316.1Z"/><path fill="#77ef5a" stroke="#83ff62" d="M755.7 311.4L750.6 295.8L754.3 294L757.7 305.5Z"/><path fill="#78ff5a" stroke="#84ff63" d="M767.8 309.2L761.6 290.3L765.2 288.5L769.4 302.3Z"/><path fill="#7e324b" stroke="#8a3753" d="M670.5 299.4L675.3 308.4L682.2 312.9L679 307.3Z"/><path fill="#7a4949" stroke="#865050" d="M686.3 303.7L689.5 309.1L695.3 311.5L693.2 308.4Z"/><path fill="#801a4d" stroke="#8d1c54" d="M654.6 295L661.1 307.6L669.1 314.4L664.8 306.2Z"/><path fill="#725b44" stroke="#7d644b" d="M702.1 308L703.7 309.8L708.4 310L707.4 309.4Z"/><path fill="#752f46" stroke="#81344e" d="M679 307.3L682.2 312.9L689.1 317.5L687.5 315.2Z"/><path fill="#724444" stroke="#7d4b4b" d="M693.2 308.4L695.3 311.5L701.1 313.8L700 313Z"/><path fill="#781848" stroke="#841a4f" d="M664.8 306.2L669.1 314.4L677.1 321.1L674.9 317.4Z"/><path fill="#6e1642" stroke="#791849" d="M674.9 317.4L677.1 321.1L685.1 327.8L685.1 328.6Z"/><path fill="#82004e" stroke="#8f0056" d="M638.8 290.6L646.9 306.9L656 315.8L650.5 305.1Z"/><path fill="#7a0049" stroke="#860050" d="M650.5 305.1L656 315.8L665.1 324.8L662.3 319.6Z"/><path fill="#700043" stroke="#7b004a" d="M662.3 319.6L665.1 324.8L674.1 333.7L674.1 334Z"/><path fill="#80994d" stroke="#8ca954" d="M733.5 316.2L731.9 310.8L734.5 306.8L735.6 311.2Z"/><path fill="#6ec642" stroke="#79da49" d="M774.9 298.8L772.9 291.2L772.5 281.2L772.5 284.9Z"/><path fill="#7aaa49" stroke="#86bb50" d="M749.6 311.9L747.5 305L749.1 299L750.1 303.8Z"/><path fill="#80b44d" stroke="#8dc655" d="M749 319.9L745.9 311.1L747.5 305L749.6 311.9Z"/><path fill="#78c048" stroke="#84d34f" d="M763.5 312.4L760.4 303.2L761 295.1L762.5 301.3Z"/><path fill="#853550" stroke="#923a57" d="M675.3 308.4L680.2 317.4L685.5 318.6L682.2 312.9Z"/><path fill="#7f4c4c" stroke="#8b5454" d="M689.5 309.1L692.8 314.5L697.5 314.5L695.3 311.5Z"/><path fill="#881b51" stroke="#951e5a" d="M661.1 307.6L667.6 320.3L673.4 322.6L669.1 314.4Z"/><path fill="#7b314a" stroke="#873651" d="M682.2 312.9L685.5 318.6L690.7 319.7L689.1 317.5Z"/><path fill="#754646" stroke="#814d4d" d="M695.3 311.5L697.5 314.5L702.2 314.6L701.1 313.8Z"/><path fill="#7e194c" stroke="#8b1c53" d="M669.1 314.4L673.4 322.6L679.2 324.8L677.1 321.1Z"/><path fill="#76d547" stroke="#82ea4e" d="M777.3 312.7L773.3 301.2L772.9 291.2L774.9 298.8Z"/><path fill="#343437" style="fill-opacity:0.95" d="M663.2 339.5L663.2 339.5L674.1 332.9L674.1 334Z"/><path fill="#3b3b3f" style="fill-opacity:0.95" d="M674.1 334L674.1 332.9L685.1 326.4L685.1 328.6Z"/><path fill="#434347" style="fill-opacity:0.95" d="M685.1 328.6L685.1 326.4L696 319.8L696 323.1Z"/><path fill="#4a4a4f" style="fill-opacity:0.95" d="M696 323.1L696 319.8L706.9 313.3L706.9 317.6Z"/><path fill="#515157" style="fill-opacity:0.95" d="M706.9 317.6L706.9 313.3L717.9 306.7L717.9 312.2Z"/><path fill="#58585e" style="fill-opacity:0.95" d="M717.9 312.2L717.9 306.7L728.8 300.2L728.8 306.7Z"/><path fill="#5f5f65" style="fill-opacity:0.95" d="M728.8 306.7L728.8 300.2L739.7 293.6L739.7 301.2Z"/><path fill="#66666c" style="fill-opacity:0.95" d="M739.7 301.2L739.7 293.6L750.6 287L750.6 295.8Z"/><path fill="#6c6c73" style="fill-opacity:0.95" d="M750.6 295.8L750.6 287L761.6 280.5L761.6 290.3Z"/><path fill="#72727a" style="fill-opacity:0.95" d="M761.6 290.3L761.6 280.5L772.5 273.9L772.5 284.9Z"/><path fill="#8a0053" stroke="#97005b" d="M646.9 306.9L655.1 323.2L661.4 326.6L656 315.8Z"/><path fill="#81004d" stroke="#8d0055" d="M656 315.8L661.4 326.6L667.8 329.9L665.1 324.8Z"/><path fill="#7fcc4c" stroke="#8ce054" d="M764.4 323.4L759.8 311.3L760.4 303.2L763.5 312.4Z"/><path fill="#81b44d" stroke="#8dc655" d="M747.5 305L745.4 298.2L748 294.1L749.1 299Z"/><path fill="#88be52" stroke="#96d15a" d="M745.9 311.1L742.8 302.4L745.4 298.2L747.5 305Z"/><path fill="#81ce4d" stroke="#8de255" d="M760.4 303.2L757.4 294L759.5 288.9L761 295.1Z"/><path fill="#7ee34c" stroke="#8af953" d="M779.7 326.6L773.7 311.2L773.3 301.2L777.3 312.7Z"/><path fill="#80e64d" stroke="#8cfd54" d="M773.3 301.2L769.2 289.8L770.9 283.7L772.9 291.2Z"/><path fill="#89db52" stroke="#97f15a" d="M759.8 311.3L755.2 299.2L757.4 294L760.4 303.2Z"/><path fill="#89f652" stroke="#96ff5a" d="M773.7 311.2L767.6 295.8L769.2 289.8L773.3 301.2Z"/><path fill="#901d57" stroke="#9f205f" d="M667.6 320.3L674.1 332.9L677.8 330.8L673.4 322.6Z"/><path fill="#930058" stroke="#a20061" d="M655.1 323.2L663.2 339.5L666.8 337.3L661.4 326.6Z"/><path fill="#95ff5a" stroke="#a4ff63" d="M767.6 295.8L761.6 280.5L765.2 278.3L769.2 289.8Z"/><path fill="#954b4b" stroke="#a45252" d="M679.3 291.9L684.8 300.1L692.2 304L688.5 299Z"/><path fill="#99334c" stroke="#a83854" d="M662.6 289L670.1 300.8L678.7 306.7L673.8 299.3Z"/><path fill="#906048" stroke="#9f6a4f" d="M695.8 294.8L699.5 299.5L705.6 301.3L703.2 298.8Z"/><path fill="#8b4545" stroke="#994c4c" d="M688.5 299L692.2 304L699.6 307.9L697.7 306.2Z"/><path fill="#9b1a4d" stroke="#aa1c55" d="M646 286.1L655.4 301.4L665.3 309.5L659 299.5Z"/><path fill="#867043" stroke="#937b4a" d="M712.4 297.5L714.2 298.8L719 298.5L717.8 298.4Z"/><path fill="#8e2f47" stroke="#9c344e" d="M673.8 299.3L678.7 306.7L687.4 312.7L684.9 309.6Z"/><path fill="#865943" stroke="#94624a" d="M703.2 298.8L705.6 301.3L711.7 303.1L710.5 302.7Z"/><path fill="#911848" stroke="#9f1b50" d="M659 299.5L665.3 309.5L675.2 317.6L672.1 313Z"/><path fill="#822b41" stroke="#8f3048" d="M684.9 309.6L687.4 312.7L696 318.7L696 319.8Z"/><path fill="#851642" stroke="#921849" d="M672.1 313L675.2 317.6L685.1 325.7L685.1 326.4Z"/><path fill="#9c004e" stroke="#ac0056" d="M629.5 283.3L640.7 302L651.8 312.2L644.3 299.8Z"/><path fill="#930049" stroke="#a10051" d="M644.3 299.8L651.8 312.2L663 322.4L659.2 316.4Z"/><path fill="#870043" stroke="#94004a" d="M659.2 316.4L663 322.4L674.1 332.6L674.1 332.9Z"/><path fill="#9ab34d" stroke="#a9c554" d="M745.1 302.6L743.3 297L745.7 292.7L746.9 297.4Z"/><path fill="#92c249" stroke="#a0d650" d="M761.4 296.7L759 289.7L760.3 283.4L761.5 288.6Z"/><path fill="#8fd748" stroke="#9dec4f" d="M775.7 295.8L772.2 286.6L772.4 278.4L774.1 284.9Z"/><path fill="#9acd4d" stroke="#a9e255" d="M761.3 304.8L757.7 295.9L759 289.7L761.4 296.7Z"/><path fill="#9e4f4f" stroke="#ad5757" d="M684.8 300.1L690.4 308.3L695.9 309L692.2 304Z"/><path fill="#a23651" stroke="#b23b59" d="M670.1 300.8L677.6 312.5L683.7 314.2L678.7 306.7Z"/><path fill="#96644b" stroke="#a56e53" d="M699.5 299.5L703.2 304.2L708.1 303.8L705.6 301.3Z"/><path fill="#914949" stroke="#a05050" d="M692.2 304L695.9 309L701.4 309.7L699.6 307.9Z"/><path fill="#a51b52" stroke="#b51e5b" d="M655.4 301.4L664.8 316.6L671.5 319.4L665.3 309.5Z"/><path fill="#96324b" stroke="#a53752" d="M678.7 306.7L683.7 314.2L689.9 315.9L687.4 312.7Z"/><path fill="#8a5c45" stroke="#98654c" d="M705.6 301.3L708.1 303.8L713 303.4L711.7 303.1Z"/><path fill="#991a4d" stroke="#a81c54" d="M665.3 309.5L671.5 319.4L678.3 322.2L675.2 317.6Z"/><path fill="#8a0045" stroke="#98004c" d="M663 322.4L666.7 328.4L674.1 332.2L674.1 332.6Z"/><path fill="#333337" style="fill-opacity:0.95" d="M663.2 339.5L663.2 339.5L674.1 331.8L674.1 332.9Z"/><path fill="#3b3b3f" style="fill-opacity:0.95" d="M674.1 332.9L674.1 331.8L685.1 324.2L685.1 326.4Z"/><path fill="#424246" style="fill-opacity:0.95" d="M685.1 326.4L685.1 324.2L696 316.5L696 319.8Z"/><path fill="#49494e" style="fill-opacity:0.95" d="M696 319.8L696 316.5L706.9 308.9L706.9 313.3Z"/><path fill="#505055" style="fill-opacity:0.95" d="M706.9 313.3L706.9 308.9L717.9 301.2L717.9 306.7Z"/><path fill="#56565c" style="fill-opacity:0.95" d="M717.9 306.7L717.9 301.2L728.8 293.6L728.8 300.2Z"/><path fill="#5d5d63" style="fill-opacity:0.95" d="M728.8 300.2L728.8 293.6L739.7 285.9L739.7 293.6Z"/><path fill="#63636a" style="fill-opacity:0.95" d="M739.7 293.6L739.7 285.9L750.6 278.3L750.6 287Z"/><path fill="#6a6a71" style="fill-opacity:0.95" d="M750.6 287L750.6 278.3L761.6 270.6L761.6 280.5Z"/><path fill="#6f6f77" style="fill-opacity:0.95" d="M761.6 280.5L761.6 270.6L772.5 263L772.5 273.9Z"/><path fill="#a60053" stroke="#b7005c" d="M640.7 302L652 320.8L659.3 324.6L651.8 312.2Z"/><path fill="#9c004e" stroke="#ab0056" d="M651.8 312.2L659.3 324.6L666.7 328.4L663 322.4Z"/><path fill="#98e44c" stroke="#a7fb54" d="M777.3 306.7L772.1 294.7L772.2 286.6L775.7 295.8Z"/><path fill="#9ace4d" stroke="#aae255" d="M759 289.7L756.6 282.7L759.1 278.3L760.3 283.4Z"/><path fill="#9ae74d" stroke="#a9fe55" d="M772.2 286.6L768.7 277.3L770.6 272L772.4 278.4Z"/><path fill="#a3da52" stroke="#b4f05a" d="M757.7 295.9L754.2 287.1L756.6 282.7L759 289.7Z"/><path fill="#a4f752" stroke="#b5ff5a" d="M772.1 294.7L766.8 282.7L768.7 277.3L772.2 286.6Z"/><path fill="#ac3956" stroke="#bd3f5e" d="M677.6 312.5L685.1 324.2L688.7 321.6L683.7 314.2Z"/><path fill="#af1d58" stroke="#c12061" d="M664.8 316.6L674.1 331.8L677.8 329.3L671.5 319.4Z"/><path fill="#b20059" stroke="#c40062" d="M652 320.8L663.2 339.5L666.8 336.9L659.3 324.6Z"/><path fill="#ab0055" stroke="#bc005e" d="M659.3 324.6L666.8 336.9L670.5 334.4L666.7 328.4Z"/><path fill="#b14c4c" stroke="#c25353" d="M671.1 281L679.4 291.8L688.6 297L683 290.3Z"/><path fill="#ac624a" stroke="#be6c51" d="M688.4 282.4L694.5 289.8L702.3 293L698.2 288.7Z"/><path fill="#b4334d" stroke="#c53855" d="M653.8 279.6L664.2 293.7L674.8 301L667.9 291.9Z"/><path fill="#a67647" stroke="#b6824e" d="M705.6 283.7L709.7 287.7L716 289L713.3 287Z"/><path fill="#a44646" stroke="#b44d4d" d="M683 290.3L688.6 297L697.7 302.2L695 299.6Z"/><path fill="#a05b44" stroke="#b0644b" d="M698.2 288.7L702.3 293L710.1 296.2L708 295Z"/><path fill="#b61a4e" stroke="#c81d56" d="M636.6 278.2L649.1 295.7L661.1 305L652.7 293.5Z"/><path fill="#a73048" stroke="#b8354f" d="M667.9 291.9L674.8 301L685.4 308.2L681.9 304.2Z"/><path fill="#9a6e42" stroke="#a97948" d="M713.3 287L716 289L722.4 290.2L721 290.3Z"/><path fill="#9a8442" stroke="#a99148" d="M722.7 284.9L724.7 285.6L729.7 284.9L728.4 285.2Z"/><path fill="#aa1849" stroke="#bb1b50" d="M652.7 293.5L661.1 305L673.1 314.2L668.9 308.9Z"/><path fill="#9a4242" stroke="#aa4949" d="M695 299.6L697.7 302.2L706.9 307.4L706.9 308.9Z"/><path fill="#982b41" stroke="#a73048" d="M681.9 304.2L685.4 308.2L696 315.5L696 316.5Z"/><path fill="#9b1642" stroke="#aa1849" d="M668.9 308.9L673.1 314.2L685.1 323.5L685.1 324.2Z"/><path fill="#b8004f" stroke="#ca0057" d="M619.3 276.8L633.9 297.7L647.3 309L637.6 295.2Z"/><path fill="#ac004a" stroke="#bd0051" d="M637.6 295.2L647.3 309L660.7 320.2L655.9 313.5Z"/><path fill="#9d0043" stroke="#ad004a" d="M655.9 313.5L660.7 320.2L674.1 331.5L674.1 331.8Z"/><path fill="#b3cd4d" stroke="#c5e155" d="M756.6 286.8L754.6 281L756.9 276.5L758.3 281.4Z"/><path fill="#a9da49" stroke="#baef50" d="M773.1 279.3L770.4 272.2L771.5 265.8L772.8 271.1Z"/><path fill="#bc5050" stroke="#ce5858" d="M679.4 291.8L687.7 302.5L694.1 303.7L688.6 297Z"/><path fill="#b6684e" stroke="#c87256" d="M694.5 289.8L700.7 297.1L706.4 297.3L702.3 293Z"/><path fill="#b3e64d" stroke="#c5fd54" d="M773.3 287.4L769.4 278.6L770.4 272.2L773.1 279.3Z"/><path fill="#bf3752" stroke="#d23c5a" d="M664.2 293.7L674.6 307.9L681.8 310L674.8 301Z"/><path fill="#ad7b4a" stroke="#be8851" d="M709.7 287.7L713.8 291.8L718.8 290.9L716 289Z"/><path fill="#ad4a4a" stroke="#be5151" d="M688.6 297L694.1 303.7L700.5 304.8L697.7 302.2Z"/><path fill="#a75f48" stroke="#b8694f" d="M702.3 293L706.4 297.3L712.1 297.4L710.1 296.2Z"/><path fill="#c21c53" stroke="#d51e5b" d="M649.1 295.7L661.6 313.2L669.4 316.4L661.1 305Z"/><path fill="#b1334c" stroke="#c33853" d="M674.8 301L681.8 310L688.9 312.2L685.4 308.2Z"/><path fill="#9f7144" stroke="#ae7d4b" d="M716 289L718.8 290.9L723.8 290.1L722.4 290.2Z"/><path fill="#b41a4d" stroke="#c61c55" d="M661.1 305L669.4 316.4L677.2 319.6L673.1 314.2Z"/><path fill="#9f1744" stroke="#af194b" d="M673.1 314.2L677.2 319.6L685.1 322.7L685.1 323.5Z"/><path fill="#c40054" stroke="#d7005c" d="M633.9 297.7L648.6 318.6L657.1 322.8L647.3 309Z"/><path fill="#a20045" stroke="#b2004c" d="M660.7 320.2L665.6 326.9L674.1 331.1L674.1 331.5Z"/><path fill="#333337" style="fill-opacity:0.95" d="M663.2 339.5L663.2 339.5L674.1 330.8L674.1 331.8Z"/><path fill="#414145" style="fill-opacity:0.95" d="M685.1 324.2L685.1 322L696 313.3L696 316.5Z"/><path fill="#48484c" style="fill-opacity:0.95" d="M696 316.5L696 313.3L706.9 304.5L706.9 308.9Z"/><path fill="#4e4e54" style="fill-opacity:0.95" d="M706.9 308.9L706.9 304.5L717.9 295.8L717.9 301.2Z"/><path fill="#55555a" style="fill-opacity:0.95" d="M717.9 301.2L717.9 295.8L728.8 287L728.8 293.6Z"/><path fill="#5b5b61" style="fill-opacity:0.95" d="M728.8 293.6L728.8 287L739.7 278.3L739.7 285.9Z"/><path fill="#616168" style="fill-opacity:0.95" d="M739.7 285.9L739.7 278.3L750.6 269.5L750.6 278.3Z"/><path fill="#67676e" style="fill-opacity:0.95" d="M750.6 278.3L750.6 269.5L761.6 260.8L761.6 270.6Z"/><path fill="#6d6d74" style="fill-opacity:0.95" d="M761.6 270.6L761.6 260.8L772.5 252.1L772.5 263Z"/><path fill="#b7004e" stroke="#c90056" d="M647.3 309L657.1 322.8L665.6 326.9L660.7 320.2Z"/><path fill="#3a3a3e" style="fill-opacity:0.95" d="M674.1 331.8L674.1 330.8L685.1 322L685.1 324.2Z"/><path fill="#b4e84d" stroke="#c6ff55" d="M770.4 272.2L767.8 265L770.2 260.4L771.5 265.8Z"/><path fill="#bff652" stroke="#d2ff5a" d="M769.4 278.6L765.5 269.7L767.8 265L770.4 272.2Z"/><path fill="#c75555" stroke="#db5e5e" d="M687.7 302.5L696 313.3L699.6 310.4L694.1 303.7Z"/><path fill="#cc3a57" stroke="#e04060" d="M674.6 307.9L685.1 322L688.7 319.1L681.8 310Z"/><path fill="#cf1e59" stroke="#e32061" d="M661.6 313.2L674.1 330.8L677.8 327.8L669.4 316.4Z"/><path fill="#c61c55" stroke="#da1f5d" d="M669.4 316.4L677.8 327.8L681.4 324.9L677.2 319.6Z"/><path fill="#d10059" stroke="#e50062" d="M648.6 318.6L663.2 339.5L666.8 336.6L657.1 322.8Z"/><path fill="#c90056" stroke="#dd005f" d="M657.1 322.8L666.8 336.6L670.5 333.7L665.6 326.9Z"/><path fill="#c8644b" stroke="#dc6e53" d="M679.9 270.8L688.9 280.6L698.6 285L692.6 279.1Z"/><path fill="#cc4c4c" stroke="#e05454" d="M662.1 270.9L673.4 283.9L684.6 290.3L677 282.1Z"/><path fill="#c37a49" stroke="#d68650" d="M697.7 270.6L704.4 277.2L712.6 279.8L708.1 276.1Z"/><path fill="#cf344e" stroke="#e43955" d="M644.2 271L657.8 287.2L670.6 295.6L661.5 285.1Z"/><path fill="#bb8c46" stroke="#cd9a4d" d="M715.5 270.4L719.9 273.8L726.5 274.4L723.6 273Z"/><path fill="#b95c45" stroke="#cb664c" d="M692.6 279.1L698.6 285L708.2 289.5L705.2 287.5Z"/><path fill="#bd4747" stroke="#d04e4e" d="M677 282.1L684.6 290.3L695.7 296.7L692 293.3Z"/><path fill="#b47043" stroke="#c67b4a" d="M708.1 276.1L712.6 279.8L720.7 282.3L718.4 281.6Z"/><path fill="#c03048" stroke="#d3354f" d="M661.5 285.1L670.6 295.6L683.3 303.9L678.7 299.2Z"/><path fill="#ae8341" stroke="#c09048" d="M723.6 273L726.5 274.4L733.1 275.1L731.6 275.7Z"/><path fill="#d11a4e" stroke="#e61d56" d="M626.4 271.1L642.3 290.6L656.5 300.8L645.9 288Z"/><path fill="#ae9841" stroke="#c0a848" d="M733.1 270.1L735.3 270.3L740.4 269L739 269.9Z"/><path fill="#c31849" stroke="#d71b50" d="M645.9 288L656.5 300.8L670.8 311.1L665.5 305Z"/><path fill="#b45a43" stroke="#c6634a" d="M705.2 287.5L708.2 289.5L717.9 294L717.9 295.8Z"/><path fill="#b04242" stroke="#c14949" d="M692 293.3L695.7 296.7L706.9 303.1L706.9 304.5Z"/><path fill="#ae2c41" stroke="#c03048" d="M678.7 299.2L683.3 303.9L696 312.2L696 313.3Z"/><path fill="#b11642" stroke="#c31849" d="M665.5 305L670.8 311.1L685.1 321.3L685.1 322Z"/><path fill="#d3004f" stroke="#e90057" d="M608.6 271.2L626.8 294L642.6 306.1L630.4 291.1Z"/><path fill="#c6004a" stroke="#d90052" d="M630.4 291.1L642.6 306.1L658.3 318.3L652.3 310.9Z"/><path fill="#b40044" stroke="#c6004a" d="M652.3 310.9L658.3 318.3L674.1 330.4L674.1 330.8Z"/><path fill="#cde74d" stroke="#e2fe55" d="M768 268.9L765.9 262.9L768.1 258.1L769.5 263.3Z"/><path fill="#d56a50" stroke="#ea7558" d="M688.9 280.6L697.9 290.4L704.6 291L698.6 285Z"/><path fill="#d95252" stroke="#ef5a5a" d="M673.4 283.9L684.7 297L692.1 298.5L684.6 290.3Z"/><path fill="#ce814d" stroke="#e38e55" d="M704.4 277.2L711.1 283.8L717 283.4L712.6 279.8Z"/><path fill="#dd3753" stroke="#f33d5b" d="M657.8 287.2L671.4 303.5L679.6 306.1L670.6 295.6Z"/><path fill="#c39249" stroke="#d6a150" d="M719.9 273.8L724.3 277.1L729.5 275.8L726.5 274.4Z"/><path fill="#c36249" stroke="#d76b51" d="M698.6 285L704.6 291L711.2 291.5L708.2 289.5Z"/><path fill="#c94b4b" stroke="#dd5353" d="M684.6 290.3L692.1 298.5L699.5 300.1L695.7 296.7Z"/><path fill="#bc7647" stroke="#cf814e" d="M712.6 279.8L717 283.4L722.9 283L720.7 282.3Z"/><path fill="#cd334d" stroke="#e13854" d="M670.6 295.6L679.6 306.1L687.8 308.6L683.3 303.9Z"/><path fill="#b28643" stroke="#c4934a" d="M726.5 274.4L729.5 275.8L734.6 274.5L733.1 275.1Z"/><path fill="#df1c54" stroke="#f51f5c" d="M642.3 290.6L658.2 310.1L667.2 313.6L656.5 300.8Z"/><path fill="#d01a4e" stroke="#e51d56" d="M656.5 300.8L667.2 313.6L676.1 317.1L670.8 311.1Z"/><path fill="#b32d43" stroke="#c5314a" d="M683.3 303.9L687.8 308.6L696 311.1L696 312.2Z"/><path fill="#b61744" stroke="#c9194b" d="M670.8 311.1L676.1 317.1L685.1 320.6L685.1 321.3Z"/><path fill="#333336" style="fill-opacity:0.95" d="M663.2 339.5L663.2 339.5L674.1 329.7L674.1 330.8Z"/><path fill="#404044" style="fill-opacity:0.95" d="M685.1 322L685.1 319.8L696 310L696 313.3Z"/><path fill="#47474b" style="fill-opacity:0.95" d="M696 313.3L696 310L706.9 300.2L706.9 304.5Z"/><path fill="#4d4d52" style="fill-opacity:0.95" d="M706.9 304.5L706.9 300.2L717.9 290.3L717.9 295.8Z"/><path fill="#535359" style="fill-opacity:0.95" d="M717.9 295.8L717.9 290.3L728.8 280.5L728.8 287Z"/><path fill="#59595f" style="fill-opacity:0.95" d="M728.8 287L728.8 280.5L739.7 270.6L739.7 278.3Z"/><path fill="#5f5f65" style="fill-opacity:0.95" d="M739.7 278.3L739.7 270.6L750.6 260.8L750.6 269.5Z"/><path fill="#65656c" style="fill-opacity:0.95" d="M750.6 269.5L750.6 260.8L761.6 251L761.6 260.8Z"/><path fill="#6a6a71" style="fill-opacity:0.95" d="M761.6 260.8L761.6 251L772.5 241.1L772.5 252.1Z"/><path fill="#e10054" stroke="#f7005d" d="M626.8 294L645 316.7L654.7 321.2L642.6 306.1Z"/><path fill="#d2004f" stroke="#e80057" d="M642.6 306.1L654.7 321.2L664.4 325.6L658.3 318.3Z"/><path fill="#3a3a3d" style="fill-opacity:0.95" d="M674.1 330.8L674.1 329.7L685.1 319.8L685.1 322Z"/><path fill="#ba0046" stroke="#cc004d" d="M658.3 318.3L664.4 325.6L674.1 330L674.1 330.4Z"/><path fill="#e27155" stroke="#f87c5d" d="M697.9 290.4L706.9 300.2L710.6 296.9L704.6 291Z"/><path fill="#e75757" stroke="#fe5f5f" d="M684.7 297L696 310L699.6 306.7L692.1 298.5Z"/><path fill="#eb3b58" stroke="#ff4161" d="M671.4 303.5L685.1 319.8L688.7 316.5L679.6 306.1Z"/><path fill="#e03854" stroke="#f73e5d" d="M679.6 306.1L688.7 316.5L692.3 313.3L687.8 308.6Z"/><path fill="#ee1e59" stroke="#ff2162" d="M658.2 310.1L674.1 329.7L677.8 326.4L667.2 313.6Z"/><path fill="#e51d56" stroke="#fc1f5e" d="M667.2 313.6L677.8 326.4L681.4 323.1L676.1 317.1Z"/><path fill="#ef005a" stroke="#ff0063" d="M645 316.7L663.2 339.5L666.8 336.2L654.7 321.2Z"/><path fill="#e80057" stroke="#ff0060" d="M654.7 321.2L666.8 336.2L670.5 332.9L664.4 325.6Z"/><path fill="#e4654c" stroke="#fa6f53" d="M670.8 260L682.8 271.9L694.5 277.4L686.5 270.1Z"/><path fill="#df7c4a" stroke="#f58852" d="M689.1 258.4L698.7 267.2L708.7 270.9L702.3 265.7Z"/><path fill="#e74d4d" stroke="#ff5555" d="M652.4 261.5L666.9 276.6L680.3 284L670.6 274.4Z"/><path fill="#d99048" stroke="#ee9f4f" d="M707.4 256.7L714.5 262.4L722.9 264.3L718.2 261.3Z"/><path fill="#eb344e" stroke="#ff3956" d="M634 263.1L651 281.3L666 290.5L654.7 278.7Z"/><path fill="#cfa145" stroke="#e4b14c" d="M725.6 254.9L730.3 257.6L737.1 257.7L733.9 256.9Z"/><path fill="#d25d46" stroke="#e7674d" d="M686.5 270.1L694.5 277.4L706.2 283L702.2 280.2Z"/><path fill="#cd7244" stroke="#e17d4b" d="M702.3 265.7L708.7 270.9L718.7 274.6L715.6 273.1Z"/><path fill="#d64747" stroke="#eb4e4e" d="M670.6 274.4L680.3 284L693.6 291.3L688.7 287.3Z"/><path fill="#c78542" stroke="#db9249" d="M718.2 261.3L722.9 264.3L731.3 266.2L728.9 266Z"/><path fill="#da3049" stroke="#ef3550" d="M654.7 278.7L666 290.5L681 299.7L675.3 294.4Z"/><path fill="#c89b43" stroke="#dbab49" d="M733.9 256.9L737.1 257.7L743.9 257.8L742.3 258.8Z"/><path fill="#ed1a4f" stroke="#ff1d57" d="M615.7 264.7L635.2 286L651.8 297L638.8 283.1Z"/><path fill="#c7b142" stroke="#dbc349" d="M743.6 253L746 252.7L751.2 251L749.6 252.3Z"/><path fill="#dd194a" stroke="#f31b51" d="M638.8 283.1L651.8 297L668.4 308.1L661.9 301.5Z"/><path fill="#c95a43" stroke="#de624a" d="M702.2 280.2L706.2 283L717.9 288.5L717.9 290.3Z"/><path fill="#ce7245" stroke="#e27e4b" d="M715.6 273.1L718.7 274.6L728.8 278.3L728.8 280.5Z"/><path fill="#c54242" stroke="#d94848" d="M688.7 287.3L693.6 291.3L706.9 298.7L706.9 300.2Z"/><path fill="#c42c41" stroke="#d83048" d="M675.3 294.4L681 299.7L696 308.9L696 310Z"/><path fill="#c81643" stroke="#dc1849" d="M661.9 301.5L668.4 308.1L685.1 319.1L685.1 319.8Z"/><path fill="#ef0050" stroke="#ff0058" d="M597.4 266.4L619.3 290.8L637.6 303.6L623 287.5Z"/><path fill="#e0004b" stroke="#f60052" d="M623 287.5L637.6 303.6L655.9 316.5L648.6 308.6Z"/><path fill="#cb0044" stroke="#df004a" d="M648.6 308.6L655.9 316.5L674.1 329.3L674.1 329.7Z"/><path fill="#f36c51" stroke="#ff7759" d="M682.8 271.9L694.9 283.8L702.5 284.8L694.5 277.4Z"/><path fill="#ee844f" stroke="#ff9157" d="M698.7 267.2L708.3 276L715.1 276L708.7 270.9Z"/><path fill="#f75252" stroke="#ff5b5b" d="M666.9 276.6L681.5 291.7L689.9 293.5L680.3 284Z"/><path fill="#e6994d" stroke="#fda854" d="M714.5 262.4L721.6 268.2L727.7 267.3L722.9 264.3Z"/><path fill="#fa3853" stroke="#ff3d5c" d="M651 281.3L668 299.5L677.4 302.2L666 290.5Z"/><path fill="#d8a848" stroke="#eeb94f" d="M730.3 257.6L735 260.3L740.2 258.5L737.1 257.7Z"/><path fill="#df634a" stroke="#f66d52" d="M694.5 277.4L702.5 284.8L710.2 285.7L706.2 283Z"/><path fill="#d97948" stroke="#ef8550" d="M708.7 270.9L715.1 276L721.9 276.1L718.7 274.6Z"/><path fill="#e44c4c" stroke="#fb5454" d="M680.3 284L689.9 293.5L698.4 295.4L693.6 291.3Z"/><path fill="#d18b46" stroke="#e5994c" d="M722.9 264.3L727.7 267.3L733.7 266.4L731.3 266.2Z"/><path fill="#e8344d" stroke="#ff3955" d="M666 290.5L677.4 302.2L686.7 305L681 299.7Z"/><path fill="#c59942" stroke="#d9a948" d="M737.1 257.7L740.2 258.5L745.4 256.7L743.9 257.8Z"/><path fill="#fd1c54" stroke="#ff1f5d" d="M635.2 286L654.6 307.3L664.8 311L651.8 297Z"/><path fill="#ec1a4f" stroke="#ff1d56" d="M651.8 297L664.8 311L674.9 314.7L668.4 308.1Z"/><path fill="#c64242" stroke="#da4949" d="M693.6 291.3L698.4 295.4L706.9 297.2L706.9 298.7Z"/><path fill="#ca2d43" stroke="#de314a" d="M681 299.7L686.7 305L696 307.8L696 308.9Z"/><path fill="#ce1745" stroke="#e3194c" d="M668.4 308.1L674.9 314.7L685.1 318.4L685.1 319.1Z"/><path fill="#333336" style="fill-opacity:0.95" d="M663.2 339.5L663.2 339.5L674.1 328.6L674.1 329.7Z"/><path fill="#39393d" style="fill-opacity:0.95" d="M674.1 329.7L674.1 328.6L685.1 317.6L685.1 319.8Z"/><path fill="#3f3f44" style="fill-opacity:0.95" d="M685.1 319.8L685.1 317.6L696 306.7L696 310Z"/><path fill="#45454a" style="fill-opacity:0.95" d="M696 310L696 306.7L706.9 295.8L706.9 300.2Z"/><path fill="#4c4c51" style="fill-opacity:0.95" d="M706.9 300.2L706.9 295.8L717.9 284.9L717.9 290.3Z"/><path fill="#515157" style="fill-opacity:0.95" d="M717.9 290.3L717.9 284.9L728.8 273.9L728.8 280.5Z"/><path fill="#57575d" style="fill-opacity:0.95" d="M728.8 280.5L728.8 273.9L739.7 263L739.7 270.6Z"/><path fill="#5d5d63" style="fill-opacity:0.95" d="M739.7 270.6L739.7 263L750.6 252.1L750.6 260.8Z"/><path fill="#626269" style="fill-opacity:0.95" d="M750.6 260.8L750.6 252.1L761.6 241.1L761.6 251Z"/><path fill="#68686f" style="fill-opacity:0.95" d="M761.6 251L761.6 241.1L772.5 230.2L772.5 241.1Z"/><path fill="#ff0055" stroke="#ff005d" d="M619.3 290.8L641.3 315.1L652.2 319.7L637.6 303.6Z"/><path fill="#ef0050" stroke="#ff0057" d="M637.6 303.6L652.2 319.7L663.2 324.3L655.9 316.5Z"/><path fill="#d20046" stroke="#e7004d" d="M655.9 316.5L663.2 324.3L674.1 328.9L674.1 329.3Z"/><path fill="#ff7356" stroke="#ff7f5f" d="M694.9 283.8L706.9 295.8L710.6 292.1L702.5 284.8Z"/><path fill="#fc8c54" stroke="#ff9a5c" d="M708.3 276L717.9 284.9L721.5 281.2L715.1 276Z"/><path fill="#ff5858" stroke="#ff6161" d="M681.5 291.7L696 306.7L699.6 303.1L689.9 293.5Z"/><path fill="#ff3b59" stroke="#ff4162" d="M668 299.5L685.1 317.6L688.7 314L677.4 302.2Z"/><path fill="#fb5454" stroke="#ff5c5c" d="M689.9 293.5L699.6 303.1L703.3 299.4L698.4 295.4Z"/><path fill="#ff3955" stroke="#ff3f5e" d="M677.4 302.2L688.7 314L692.3 310.4L686.7 305Z"/><path fill="#ff1e5a" stroke="#ff2162" d="M654.6 307.3L674.1 328.6L677.8 324.9L664.8 311Z"/><path fill="#ff1d57" stroke="#ff205f" d="M664.8 311L677.8 324.9L681.4 321.3L674.9 314.7Z"/><path fill="#ff005a" stroke="#ff0063" d="M641.3 315.1L663.2 339.5L666.8 335.9L652.2 319.7Z"/><path fill="#ff0058" stroke="#ff0060" d="M652.2 319.7L666.8 335.9L670.5 332.2L663.2 324.3Z"/><path fill="#000041" stroke="#000048" style="fill-opacity:0.6" d="M663.2 339.5L663.2 339.5L666.8 339.4L666.8 339.5Z"/><path fill="#000042" stroke="#000048" style="fill-opacity:0.6" d="M666.8 339.5L666.8 339.4L670.5 339.3L670.5 339.5Z"/><path fill="#000042" stroke="#000049" style="fill-opacity:0.6" d="M670.5 339.5L670.5 339.3L674.1 339.1L674.1 339.5Z"/><path fill="#001745" stroke="#00194b" style="fill-opacity:0.6" d="M681.4 343.1L681.4 341.3L685.1 338.8L685.1 339.5Z"/><path fill="#001847" stroke="#001a4f" style="fill-opacity:0.6" d="M677.8 346.8L677.8 343.9L681.4 341.3L681.4 343.1Z"/><path fill="#002e45" stroke="#00334c" style="fill-opacity:0.6" d="M692.3 346.8L692.3 343.4L696 338.4L696 339.5Z"/><path fill="#004545" stroke="#004c4c" style="fill-opacity:0.6" d="M703.3 350.3L703.3 345.4L706.9 338L706.9 339.5Z"/><path fill="#000041" stroke="#000048" style="fill-opacity:0.6" d="M663.2 339.5L663.2 339.5L666.8 339.3L666.8 339.4Z"/><path fill="#000042" stroke="#000048" style="fill-opacity:0.6" d="M666.8 339.4L666.8 339.3L670.5 339L670.5 339.3Z"/><path fill="#000042" stroke="#000049" style="fill-opacity:0.6" d="M670.5 339.3L670.5 339L674.1 338.8L674.1 339.1Z"/><path fill="#001745" stroke="#00194c" style="fill-opacity:0.6" d="M681.4 341.3L681.4 339.5L685.1 338L685.1 338.8Z"/><path fill="#001848" stroke="#001b50" style="fill-opacity:0.6" d="M677.8 343.9L677.8 341L681.4 339.5L681.4 341.3Z"/><path fill="#002f47" stroke="#00344e" style="fill-opacity:0.6" d="M692.3 343.4L692.3 340L696 337.3L696 338.4Z"/><path fill="#00194b" stroke="#001c53" style="fill-opacity:0.6" d="M674.1 346.4L674.1 342.4L677.8 341L677.8 343.9Z"/><path fill="#004747" stroke="#004e4e" style="fill-opacity:0.6" d="M703.3 345.4L703.3 340.4L706.9 336.6L706.9 338Z"/><path fill="#005f47" stroke="#00694f" style="fill-opacity:0.6" d="M714.2 347.3L714.2 340.9L717.9 335.9L717.9 337.7Z"/><path fill="#007747" stroke="#00834f" style="fill-opacity:0.6" d="M725.1 349.2L725.1 341.3L728.8 335.1L728.8 337.3Z"/><path fill="#000041" stroke="#000048" style="fill-opacity:0.6" d="M663.2 339.5L663.2 339.5L666.8 339.1L666.8 339.3Z"/><path fill="#000042" stroke="#000048" style="fill-opacity:0.6" d="M666.8 339.3L666.8 339.1L670.5 338.8L670.5 339Z"/><path fill="#000042" stroke="#000049" style="fill-opacity:0.6" d="M670.5 339L670.5 338.8L674.1 338.4L674.1 338.8Z"/><path fill="#001746" stroke="#00194c" style="fill-opacity:0.6" d="M681.4 339.5L681.4 337.7L685.1 337.3L685.1 338Z"/><path fill="#001849" stroke="#001b50" style="fill-opacity:0.6" d="M677.8 341L677.8 338L681.4 337.7L681.4 339.5Z"/><path fill="#003048" stroke="#003550" style="fill-opacity:0.6" d="M692.3 340L692.3 336.6L696 336.2L696 337.3Z"/><path fill="#00194c" stroke="#001c54" style="fill-opacity:0.6" d="M674.1 342.4L674.1 338.4L677.8 338L677.8 341Z"/><path fill="#004b4b" stroke="#005252" style="fill-opacity:0.6" d="M703.3 340.4L703.3 335.5L706.9 335.1L706.9 336.6Z"/><path fill="#00354f" stroke="#003a57" style="fill-opacity:0.6" d="M688.7 342.6L688.7 336.9L692.3 336.6L692.3 340Z"/><path fill="#00664c" stroke="#007054" style="fill-opacity:0.6" d="M714.2 340.9L714.2 334.4L717.9 334L717.9 335.9Z"/><path fill="#003853" stroke="#003d5c" style="fill-opacity:0.6" d="M685.1 345.3L685.1 337.3L688.7 336.9L688.7 342.6Z"/><path fill="#00814e" stroke="#008e55" style="fill-opacity:0.6" d="M725.1 341.3L725.1 333.3L728.8 332.9L728.8 335.1Z"/><path fill="#005353" stroke="#005b5b" style="fill-opacity:0.6" d="M699.6 344.3L699.6 335.9L703.3 335.5L703.3 340.4Z"/><path fill="#009d4e" stroke="#00ad56" style="fill-opacity:0.6" d="M736.1 341.6L736.1 332.2L739.7 331.8L739.7 334.4Z"/><path fill="#005757" stroke="#005f5f" style="fill-opacity:0.6" d="M696 348.1L696 336.2L699.6 335.9L699.6 344.3Z"/><path fill="#00b84f" stroke="#00cb57" style="fill-opacity:0.6" d="M747 341.9L747 331.1L750.6 330.8L750.6 333.7Z"/><path fill="#007155" stroke="#007c5d" style="fill-opacity:0.6" d="M710.6 345.9L710.6 334.8L714.2 334.4L714.2 340.9Z"/><path fill="#00d34f" stroke="#00e857" style="fill-opacity:0.6" d="M757.9 342.2L757.9 330L761.6 329.7L761.6 332.9Z"/><path fill="#009056" stroke="#009e5f" style="fill-opacity:0.6" d="M721.5 347.4L721.5 333.7L725.1 333.3L725.1 341.3Z"/><path fill="#00ee4f" stroke="#00ff57" style="fill-opacity:0.6" d="M768.9 342.4L768.9 328.9L772.5 328.6L772.5 332.2Z"/><path fill="#170046" stroke="#1a004d" style="fill-opacity:0.6" d="M666.1 331.9L666.4 334.2L670.2 336.1L670.1 335.1Z"/><path fill="#160042" stroke="#180048" style="fill-opacity:0.6" d="M670.1 335.1L670.2 336.1L674.1 338L674.1 338.4Z"/><path fill="#161643" stroke="#181849" style="fill-opacity:0.6" d="M674.1 338.4L674.1 338L677.8 337.6L677.8 338Z"/><path fill="#161643" stroke="#19194a" style="fill-opacity:0.6" d="M677.8 338L677.8 337.6L681.4 337.1L681.4 337.7Z"/><path fill="#161643" stroke="#19194a" style="fill-opacity:0.6" d="M681.4 337.7L681.4 337.1L685.1 336.6L685.1 337.3Z"/><path fill="#172e45" stroke="#19334c" style="fill-opacity:0.6" d="M692.7 340.2L692.6 338L696 335.1L696 336.2Z"/><path fill="#174545" stroke="#194c4c" style="fill-opacity:0.6" d="M704 342.7L703.8 338.9L706.9 333.7L706.9 335.1Z"/><path fill="#183048" stroke="#1a354f" style="fill-opacity:0.6" d="M689.4 344.2L689.2 340.9L692.6 338L692.7 340.2Z"/><path fill="#175c45" stroke="#19654c" style="fill-opacity:0.6" d="M715.3 345.1L714.9 339.8L717.9 332.2L717.9 334Z"/><path fill="#19004a" stroke="#1b0052" style="fill-opacity:0.6" d="M662.5 332.2L662.8 335.9L666.6 336.5L666.4 334.2Z"/><path fill="#170046" stroke="#1a004d" style="fill-opacity:0.6" d="M666.4 334.2L666.6 336.5L670.4 337.1L670.2 336.1Z"/><path fill="#160042" stroke="#180049" style="fill-opacity:0.6" d="M670.2 336.1L670.4 337.1L674.1 337.7L674.1 338Z"/><path fill="#161643" stroke="#181849" style="fill-opacity:0.6" d="M674.1 338L674.1 337.7L677.8 337.1L677.8 337.6Z"/><path fill="#161643" stroke="#19194a" style="fill-opacity:0.6" d="M677.8 337.6L677.8 337.1L681.4 336.5L681.4 337.1Z"/><path fill="#161643" stroke="#19194a" style="fill-opacity:0.6" d="M681.4 337.1L681.4 336.5L685.1 335.9L685.1 336.6Z"/><path fill="#172f46" stroke="#1a334d" style="fill-opacity:0.6" d="M692.6 338L692.5 335.8L696 334L696 335.1Z"/><path fill="#184747" stroke="#1a4e4e" style="fill-opacity:0.6" d="M703.8 338.9L703.5 335.2L706.9 332.2L706.9 333.7Z"/><path fill="#183149" stroke="#1b3651" style="fill-opacity:0.6" d="M689.2 340.9L688.9 337.7L692.5 335.8L692.6 338Z"/><path fill="#19334c" stroke="#1c3854" style="fill-opacity:0.6" d="M685.8 343.8L685.4 339.5L688.9 337.7L689.2 340.9Z"/><path fill="#185f47" stroke="#1a694f" style="fill-opacity:0.6" d="M714.9 339.8L714.6 334.6L717.9 330.4L717.9 332.2Z"/><path fill="#187747" stroke="#1a834e" style="fill-opacity:0.6" d="M726.1 340.6L725.6 333.9L728.8 328.6L728.8 330.8Z"/><path fill="#188e47" stroke="#1a9c4e" style="fill-opacity:0.6" d="M737.2 341.4L736.6 333.1L739.7 326.7L739.7 329.3Z"/><path fill="#19004b" stroke="#1c0053" style="fill-opacity:0.6" d="M662.8 335.9L663.2 339.5L666.8 338.8L666.6 336.5Z"/><path fill="#180047" stroke="#1a004e" style="fill-opacity:0.6" d="M666.6 336.5L666.8 338.8L670.5 338L670.4 337.1Z"/><path fill="#160042" stroke="#180049" style="fill-opacity:0.6" d="M670.4 337.1L670.5 338L674.1 337.3L674.1 337.7Z"/><path fill="#161643" stroke="#181849" style="fill-opacity:0.6" d="M674.1 337.7L674.1 337.3L677.8 336.6L677.8 337.1Z"/><path fill="#161643" stroke="#19194a" style="fill-opacity:0.6" d="M677.8 337.1L677.8 336.6L681.4 335.9L681.4 336.5Z"/><path fill="#161643" stroke="#19194a" style="fill-opacity:0.6" d="M681.4 336.5L681.4 335.9L685.1 335.1L685.1 335.9Z"/><path fill="#182f47" stroke="#1a344e" style="fill-opacity:0.6" d="M692.5 335.8L692.3 333.7L696 332.9L696 334Z"/><path fill="#184949" stroke="#1b5151" style="fill-opacity:0.6" d="M703.5 335.2L703.3 331.5L706.9 330.8L706.9 332.2Z"/><path fill="#19324a" stroke="#1b3652" style="fill-opacity:0.6" d="M688.9 337.7L688.7 334.4L692.3 333.7L692.5 335.8Z"/><path fill="#1a344d" stroke="#1c3955" style="fill-opacity:0.6" d="M685.4 339.5L685.1 335.1L688.7 334.4L688.9 337.7Z"/><path fill="#19654b" stroke="#1c6f53" style="fill-opacity:0.6" d="M714.6 334.6L714.2 329.3L717.9 328.6L717.9 330.4Z"/><path fill="#1b5050" stroke="#1d5858" style="fill-opacity:0.6" d="M700.1 338.2L699.6 332.2L703.3 331.5L703.5 335.2Z"/><path fill="#1a804d" stroke="#1c8d55" style="fill-opacity:0.6" d="M725.6 333.9L725.1 327.1L728.8 326.4L728.8 328.6Z"/><path fill="#1a9c4e" stroke="#1dab56" style="fill-opacity:0.6" d="M736.6 333.1L736.1 324.9L739.7 324.2L739.7 326.7Z"/><path fill="#1c5454" stroke="#1f5c5c" style="fill-opacity:0.6" d="M696.7 341.2L696 332.9L699.6 332.2L700.1 338.2Z"/><path fill="#1c6f53" stroke="#1e7a5b" style="fill-opacity:0.6" d="M711.3 338.7L710.6 330L714.2 329.3L714.6 334.6Z"/><path fill="#1ab74f" stroke="#1dca56" style="fill-opacity:0.6" d="M747.7 332.4L747 322.7L750.6 322L750.6 324.9Z"/><path fill="#1ad24f" stroke="#1de757" style="fill-opacity:0.6" d="M758.7 331.6L757.9 320.6L761.6 319.8L761.6 323.1Z"/><path fill="#1c8e55" stroke="#1f9c5e" style="fill-opacity:0.6" d="M722.4 339.2L721.5 327.8L725.1 327.1L725.6 333.9Z"/><path fill="#1d7457" stroke="#208060" style="fill-opacity:0.6" d="M708 342.9L706.9 330.8L710.6 330L711.3 338.7Z"/><path fill="#1aed4f" stroke="#1dff57" style="fill-opacity:0.6" d="M769.7 330.7L768.9 318.4L772.5 317.6L772.5 321.3Z"/><path fill="#1dad56" stroke="#20be5f" style="fill-opacity:0.6" d="M733.6 339.5L732.4 325.7L736.1 324.9L736.6 333.1Z"/><path fill="#2e1744" stroke="#32194b" style="fill-opacity:0.6" d="M676.3 329.4L676.8 331.3L680.9 332.9L680.7 332.3Z"/><path fill="#2c1641" stroke="#301848" style="fill-opacity:0.6" d="M680.7 332.3L680.9 332.9L685.1 334.4L685.1 335.1Z"/><path fill="#2c0043" stroke="#310049" style="fill-opacity:0.6" d="M669.1 330.9L669.5 333L674.1 336.9L674.1 337.3Z"/><path fill="#2d2d44" stroke="#32324b" style="fill-opacity:0.6" d="M685.1 335.1L685.1 334.4L688.7 333.5L688.7 334.4Z"/><path fill="#2e2e44" stroke="#32324b" style="fill-opacity:0.6" d="M688.7 334.4L688.7 333.5L692.3 332.7L692.3 333.7Z"/><path fill="#2e2e45" stroke="#32324c" style="fill-opacity:0.6" d="M692.3 333.7L692.3 332.7L696 331.8L696 332.9Z"/><path fill="#2f4646" stroke="#334d4d" style="fill-opacity:0.6" d="M704 335L703.7 332.5L706.9 329.3L706.9 330.8Z"/><path fill="#2e5d45" stroke="#33664c" style="fill-opacity:0.6" d="M715.6 336.3L715.1 332.3L717.9 326.7L717.9 328.6Z"/><path fill="#314949" stroke="#355050" style="fill-opacity:0.6" d="M701 339.3L700.6 335.7L703.7 332.5L704 335Z"/><path fill="#2e7345" stroke="#327e4c" style="fill-opacity:0.6" d="M727.2 337.5L726.5 332L728.8 324.2L728.8 326.4Z"/><path fill="#311849" stroke="#361b50" style="fill-opacity:0.6" d="M672.7 329.8L673.4 333L677.3 333.2L676.8 331.3Z"/><path fill="#2e1745" stroke="#33194c" style="fill-opacity:0.6" d="M676.8 331.3L677.3 333.2L681.2 333.5L680.9 332.9Z"/><path fill="#2c1641" stroke="#301848" style="fill-opacity:0.6" d="M680.9 332.9L681.2 333.5L685.1 333.7L685.1 334.4Z"/><path fill="#2d0043" stroke="#31004a" style="fill-opacity:0.6" d="M669.5 333L670 335.2L674.1 336.6L674.1 336.9Z"/><path fill="#2d2d44" stroke="#32324b" style="fill-opacity:0.6" d="M685.1 334.4L685.1 333.7L688.7 332.7L688.7 333.5Z"/><path fill="#2d2d44" stroke="#32324b" style="fill-opacity:0.6" d="M688.7 333.5L688.7 332.7L692.3 331.7L692.3 332.7Z"/><path fill="#2e2e45" stroke="#32324c" style="fill-opacity:0.6" d="M692.3 332.7L692.3 331.7L696 330.8L696 331.8Z"/><path fill="#2f4747" stroke="#344e4e" style="fill-opacity:0.6" d="M703.7 332.5L703.5 330L706.9 327.8L706.9 329.3Z"/><path fill="#305f47" stroke="#34694f" style="fill-opacity:0.6" d="M715.1 332.3L714.7 328.2L717.9 324.9L717.9 326.7Z"/><path fill="#314a4a" stroke="#365252" style="fill-opacity:0.6" d="M700.6 335.7L700.1 332.1L703.5 330L703.7 332.5Z"/><path fill="#307747" stroke="#34834e" style="fill-opacity:0.6" d="M726.5 332L725.8 326.5L728.8 322L728.8 324.2Z"/><path fill="#334d4d" stroke="#395555" style="fill-opacity:0.6" d="M697.4 338.9L696.7 334.3L700.1 332.1L700.6 335.7Z"/><path fill="#2f8e47" stroke="#349c4e" style="fill-opacity:0.6" d="M737.9 331.6L737 324.6L739.7 319.1L739.7 321.6Z"/><path fill="#2fa547" stroke="#34b54e" style="fill-opacity:0.6" d="M749.2 331.2L748.1 322.8L750.6 316.2L750.6 319.1Z"/><path fill="#31194a" stroke="#361b51" style="fill-opacity:0.6" d="M673.4 333L674.1 336.2L677.8 335.1L677.3 333.2Z"/><path fill="#2e1746" stroke="#331a4d" style="fill-opacity:0.6" d="M677.3 333.2L677.8 335.1L681.4 334L681.2 333.5Z"/><path fill="#2b1641" stroke="#301848" style="fill-opacity:0.6" d="M681.2 333.5L681.4 334L685.1 332.9L685.1 333.7Z"/><path fill="#370052" stroke="#3c005a" style="fill-opacity:0.6" d="M661.8 332.4L663.2 339.5L666.8 338.4L665.9 333.8Z"/><path fill="#33004c" stroke="#380054" style="fill-opacity:0.6" d="M665.9 333.8L666.8 338.4L670.5 337.3L670 335.2Z"/><path fill="#2d0044" stroke="#32004b" style="fill-opacity:0.6" d="M670 335.2L670.5 337.3L674.1 336.2L674.1 336.6Z"/><path fill="#2d2d44" stroke="#32324b" style="fill-opacity:0.6" d="M685.1 333.7L685.1 332.9L688.7 331.8L688.7 332.7Z"/><path fill="#2d2d44" stroke="#32324b" style="fill-opacity:0.6" d="M688.7 332.7L688.7 331.8L692.3 330.8L692.3 331.7Z"/><path fill="#2e2e45" stroke="#32324c" style="fill-opacity:0.6" d="M692.3 331.7L692.3 330.8L696 329.7L696 330.8Z"/><path fill="#304848" stroke="#354f4f" style="fill-opacity:0.6" d="M703.5 330L703.3 327.5L706.9 326.4L706.9 327.8Z"/><path fill="#31634a" stroke="#366d52" style="fill-opacity:0.6" d="M714.7 328.2L714.2 324.2L717.9 323.1L717.9 324.9Z"/><path fill="#324b4b" stroke="#375353" style="fill-opacity:0.6" d="M700.1 332.1L699.6 328.6L703.3 327.5L703.5 330Z"/><path fill="#337f4c" stroke="#388b54" style="fill-opacity:0.6" d="M725.8 326.5L725.1 320.9L728.8 319.8L728.8 322Z"/><path fill="#344e4e" stroke="#3a5656" style="fill-opacity:0.6" d="M696.7 334.3L696 329.7L699.6 328.6L700.1 332.1Z"/><path fill="#339a4d" stroke="#39aa55" style="fill-opacity:0.6" d="M737 324.6L736.1 317.6L739.7 316.5L739.7 319.1Z"/><path fill="#366b50" stroke="#3b7658" style="fill-opacity:0.6" d="M711.5 331.5L710.6 325.3L714.2 324.2L714.7 328.2Z"/><path fill="#34b64e" stroke="#39c856" style="fill-opacity:0.6" d="M748.1 322.8L747 314.4L750.6 313.3L750.6 316.2Z"/><path fill="#387155" stroke="#3e7c5d" style="fill-opacity:0.6" d="M708.3 334.9L706.9 326.4L710.6 325.3L711.5 331.5Z"/><path fill="#388b54" stroke="#3d995c" style="fill-opacity:0.6" d="M722.9 330.9L721.5 322L725.1 320.9L725.8 326.5Z"/><path fill="#34d14e" stroke="#3ae656" style="fill-opacity:0.6" d="M759.3 320.9L757.9 311.1L761.6 310L761.6 313.3Z"/><path fill="#34ec4f" stroke="#3aff57" style="fill-opacity:0.6" d="M770.4 319L768.9 307.8L772.5 306.7L772.5 310.4Z"/><path fill="#39ab56" stroke="#3fbc5e" style="fill-opacity:0.6" d="M734.3 330.2L732.4 318.7L736.1 317.6L737 324.6Z"/><path fill="#3a9258" stroke="#40a161" style="fill-opacity:0.6" d="M719.9 335.3L717.9 323.1L721.5 322L722.9 330.9Z"/><path fill="#3aca57" stroke="#40de5f" style="fill-opacity:0.6" d="M745.6 329.4L743.4 315.5L747 314.4L748.1 322.8Z"/><path fill="#432d43" stroke="#4a314a" style="fill-opacity:0.6" d="M686.6 324.9L687.3 326.4L691.7 327.5L691.3 327.3Z"/><path fill="#421642" stroke="#481848" style="fill-opacity:0.6" d="M679.3 327.1L680 328.8L685.1 332.2L685.1 332.9Z"/><path fill="#432d43" stroke="#493149" style="fill-opacity:0.6" d="M691.3 327.3L691.7 327.5L696 328.6L696 329.7Z"/><path fill="#430043" stroke="#4a004a" style="fill-opacity:0.6" d="M667.3 326.8L668.4 330.1L674.1 335.9L674.1 336.2Z"/><path fill="#454545" stroke="#4c4c4c" style="fill-opacity:0.6" d="M696 329.7L696 328.6L699.6 327.4L699.6 328.6Z"/><path fill="#454545" stroke="#4c4c4c" style="fill-opacity:0.6" d="M699.6 328.6L699.6 327.4L703.3 326.1L703.3 327.5Z"/><path fill="#464646" stroke="#4d4d4d" style="fill-opacity:0.6" d="M703.3 327.5L703.3 326.1L706.9 324.9L706.9 326.4Z"/><path fill="#465e46" stroke="#4d674d" style="fill-opacity:0.6" d="M715.2 327.6L714.9 324.8L717.9 321.3L717.9 323.1Z"/><path fill="#457345" stroke="#4c7f4c" style="fill-opacity:0.6" d="M727.2 327.7L726.5 323.4L728.8 317.6L728.8 319.8Z"/><path fill="#496249" stroke="#516b51" style="fill-opacity:0.6" d="M712.6 332.1L711.9 328.3L714.9 324.8L715.2 327.6Z"/><path fill="#448944" stroke="#4b964b" style="fill-opacity:0.6" d="M739.1 327.7L738.1 321.9L739.7 314L739.7 316.5Z"/><path fill="#483048" stroke="#4f354f" style="fill-opacity:0.6" d="M683 325.3L684 328L688 327.8L687.3 326.4Z"/><path fill="#442d44" stroke="#4b324b" style="fill-opacity:0.6" d="M687.3 326.4L688 327.8L692 327.7L691.7 327.5Z"/><path fill="#421642" stroke="#491849" style="fill-opacity:0.6" d="M680 328.8L680.7 330.5L685.1 331.5L685.1 332.2Z"/><path fill="#432c43" stroke="#493149" style="fill-opacity:0.6" d="M691.7 327.5L692 327.7L696 327.5L696 328.6Z"/><path fill="#440044" stroke="#4b004b" style="fill-opacity:0.6" d="M668.4 330.1L669.4 333.3L674.1 335.5L674.1 335.9Z"/><path fill="#454545" stroke="#4c4c4c" style="fill-opacity:0.6" d="M696 328.6L696 327.5L699.6 326.1L699.6 327.4Z"/><path fill="#454545" stroke="#4c4c4c" style="fill-opacity:0.6" d="M699.6 327.4L699.6 326.1L703.3 324.8L703.3 326.1Z"/><path fill="#464646" stroke="#4d4d4d" style="fill-opacity:0.6" d="M703.3 326.1L703.3 324.8L706.9 323.5L706.9 324.9Z"/><path fill="#475f47" stroke="#4f694f" style="fill-opacity:0.6" d="M714.9 324.8L714.5 321.9L717.9 319.5L717.9 321.3Z"/><path fill="#487748" stroke="#4f834f" style="fill-opacity:0.6" d="M726.5 323.4L725.8 319.1L728.8 315.5L728.8 317.6Z"/><path fill="#4b644b" stroke="#526e52" style="fill-opacity:0.6" d="M711.9 328.3L711.2 324.4L714.5 321.9L714.9 324.8Z"/><path fill="#478e47" stroke="#4e9d4e" style="fill-opacity:0.6" d="M738.1 321.9L737.1 316.1L739.7 311.4L739.7 314Z"/><path fill="#4e684e" stroke="#567256" style="fill-opacity:0.6" d="M709 331.8L707.9 326.9L711.2 324.4L711.9 328.3Z"/><path fill="#47a547" stroke="#4eb54e" style="fill-opacity:0.6" d="M749.6 320.4L748.3 313.2L750.6 307.4L750.6 310.4Z"/><path fill="#46bb46" stroke="#4dcd4d" style="fill-opacity:0.6" d="M761.2 318.8L759.6 310.2L761.6 303.4L761.6 306.7Z"/><path fill="#511b51" stroke="#591e59" style="fill-opacity:0.6" d="M672 328.5L674.1 335.1L677.8 333.7L676.4 329.5Z"/><path fill="#493049" stroke="#503550" style="fill-opacity:0.6" d="M684 328L685.1 330.8L688.7 329.3L688 327.8Z"/><path fill="#4b194b" stroke="#531c53" style="fill-opacity:0.6" d="M676.4 329.5L677.8 333.7L681.4 332.2L680.7 330.5Z"/><path fill="#442e44" stroke="#4b324b" style="fill-opacity:0.6" d="M688 327.8L688.7 329.3L692.3 327.8L692 327.7Z"/><path fill="#431643" stroke="#4a194a" style="fill-opacity:0.6" d="M680.7 330.5L681.4 332.2L685.1 330.8L685.1 331.5Z"/><path fill="#432c43" stroke="#493149" style="fill-opacity:0.6" d="M692 327.7L692.3 327.8L696 326.4L696 327.5Z"/><path fill="#550055" stroke="#5e005e" style="fill-opacity:0.6" d="M660.1 329L663.2 339.5L666.8 338L664.7 331.2Z"/><path fill="#500050" stroke="#580058" style="fill-opacity:0.6" d="M664.7 331.2L666.8 338L670.5 336.6L669.4 333.3Z"/><path fill="#460046" stroke="#4d004d" style="fill-opacity:0.6" d="M669.4 333.3L670.5 336.6L674.1 335.1L674.1 335.5Z"/><path fill="#454545" stroke="#4c4c4c" style="fill-opacity:0.6" d="M696 327.5L696 326.4L699.6 324.9L699.6 326.1Z"/><path fill="#454545" stroke="#4c4c4c" style="fill-opacity:0.6" d="M699.6 326.1L699.6 324.9L703.3 323.5L703.3 324.8Z"/><path fill="#464646" stroke="#4d4d4d" style="fill-opacity:0.6" d="M703.3 324.8L703.3 323.5L706.9 322L706.9 323.5Z"/><path fill="#496149" stroke="#506a50" style="fill-opacity:0.6" d="M714.5 321.9L714.2 319.1L717.9 317.6L717.9 319.5Z"/><path fill="#4b7d4b" stroke="#528952" style="fill-opacity:0.6" d="M725.8 319.1L725.1 314.7L728.8 313.3L728.8 315.5Z"/><path fill="#4c654c" stroke="#547054" style="fill-opacity:0.6" d="M711.2 324.4L710.6 320.6L714.2 319.1L714.5 321.9Z"/><path fill="#4c994c" stroke="#54a854" style="fill-opacity:0.6" d="M737.1 316.1L736.1 310.4L739.7 308.9L739.7 311.4Z"/><path fill="#4f6a4f" stroke="#577457" style="fill-opacity:0.6" d="M707.9 326.9L706.9 322L710.6 320.6L711.2 324.4Z"/><path fill="#4db54d" stroke="#55c755" style="fill-opacity:0.6" d="M748.3 313.2L747 306L750.6 304.5L750.6 307.4Z"/><path fill="#518751" stroke="#599459" style="fill-opacity:0.6" d="M722.9 322.7L721.5 316.2L725.1 314.7L725.8 319.1Z"/><path fill="#4ed04e" stroke="#56e556" style="fill-opacity:0.6" d="M759.6 310.2L757.9 301.6L761.6 300.2L761.6 303.4Z"/><path fill="#558e55" stroke="#5e9c5e" style="fill-opacity:0.6" d="M719.9 326.2L717.9 317.6L721.5 316.2L722.9 322.7Z"/><path fill="#4eeb4e" stroke="#56ff56" style="fill-opacity:0.6" d="M770.8 307.2L768.9 297.2L772.5 295.8L772.5 299.4Z"/><path fill="#54a854" stroke="#5cb95c" style="fill-opacity:0.6" d="M734.4 320.8L732.4 311.8L736.1 310.4L737.1 316.1Z"/><path fill="#56c856" stroke="#5edc5e" style="fill-opacity:0.6" d="M746 318.9L743.4 307.4L747 306L748.3 313.2Z"/><path fill="#58b058" stroke="#61c261" style="fill-opacity:0.6" d="M731.8 325.5L728.8 313.3L732.4 311.8L734.4 320.8Z"/><path fill="#57e757" stroke="#5fff5f" style="fill-opacity:0.6" d="M757.5 317L754.3 303.1L757.9 301.6L759.6 310.2Z"/><path fill="#584242" stroke="#604848" style="fill-opacity:0.6" d="M697 318.2L697.8 319.2L702.4 319.9L701.9 320.1Z"/><path fill="#582c42" stroke="#603048" style="fill-opacity:0.6" d="M689.7 321.1L690.6 322.4L696 325.3L696 326.4Z"/><path fill="#581642" stroke="#611849" style="fill-opacity:0.6" d="M677.4 322.1L678.7 324.8L685.1 330L685.1 330.8Z"/><path fill="#5b4444" stroke="#644b4b" style="fill-opacity:0.6" d="M701.9 320.1L702.4 319.9L706.9 320.6L706.9 322Z"/><path fill="#5d5d46" stroke="#67674d" style="fill-opacity:0.6" d="M706.9 322L706.9 320.6L710.6 319L710.6 320.6Z"/><path fill="#5e5e46" stroke="#67674e" style="fill-opacity:0.6" d="M710.6 320.6L710.6 319L714.2 317.4L714.2 319.1Z"/><path fill="#5e5e47" stroke="#68684e" style="fill-opacity:0.6" d="M714.2 319.1L714.2 317.4L717.9 315.8L717.9 317.6Z"/><path fill="#5e7647" stroke="#67814e" style="fill-opacity:0.6" d="M726.5 318L726 314.9L728.8 311.1L728.8 313.3Z"/><path fill="#5c8a45" stroke="#65984c" style="fill-opacity:0.6" d="M738.7 316.9L737.8 312.3L739.7 306.3L739.7 308.9Z"/><path fill="#627b4a" stroke="#6c8751" style="fill-opacity:0.6" d="M724.1 322.8L723.3 318.6L726 314.9L726.5 318Z"/><path fill="#5a9e44" stroke="#63ae4b" style="fill-opacity:0.6" d="M750.9 315.6L749.6 309.6L750.6 301.6L750.6 304.5Z"/><path fill="#5e4747" stroke="#684e4e" style="fill-opacity:0.6" d="M693.3 318.6L694.6 320.8L698.7 320.3L697.8 319.2Z"/><path fill="#594242" stroke="#614949" style="fill-opacity:0.6" d="M697.8 319.2L698.7 320.3L702.8 319.7L702.4 319.9Z"/><path fill="#572b41" stroke="#603048" style="fill-opacity:0.6" d="M690.6 322.4L691.4 323.7L696 324.2L696 325.3Z"/><path fill="#591643" stroke="#62194a" style="fill-opacity:0.6" d="M678.7 324.8L680.1 327.6L685.1 329.3L685.1 330Z"/><path fill="#5b4444" stroke="#644b4b" style="fill-opacity:0.6" d="M702.4 319.9L702.8 319.7L706.9 319.1L706.9 320.6Z"/><path fill="#5b0044" stroke="#64004b" style="fill-opacity:0.6" d="M666.9 327.3L668.7 331.6L674.1 334.4L674.1 334.8Z"/><path fill="#5d5d46" stroke="#67674d" style="fill-opacity:0.6" d="M706.9 320.6L706.9 319.1L710.6 317.4L710.6 319Z"/><path fill="#5e5e46" stroke="#67674d" style="fill-opacity:0.6" d="M710.6 319L710.6 317.4L714.2 315.7L714.2 317.4Z"/><path fill="#5e5e47" stroke="#68684e" style="fill-opacity:0.6" d="M714.2 317.4L714.2 315.7L717.9 314L717.9 315.8Z"/><path fill="#607848" stroke="#6a844f" style="fill-opacity:0.6" d="M726 314.9L725.6 311.7L728.8 308.9L728.8 311.1Z"/><path fill="#608f48" stroke="#699e4f" style="fill-opacity:0.6" d="M737.8 312.3L736.9 307.7L739.7 303.8L739.7 306.3Z"/><path fill="#647d4b" stroke="#6e8a53" style="fill-opacity:0.6" d="M723.3 318.6L722.4 314.5L725.6 311.7L726 314.9Z"/><path fill="#5fa647" stroke="#68b64e" style="fill-opacity:0.6" d="M749.6 309.6L748.3 303.6L750.6 298.7L750.6 301.6Z"/><path fill="#68834e" stroke="#739056" style="fill-opacity:0.6" d="M720.5 322.4L719.2 317.3L722.4 314.5L723.3 318.6Z"/><path fill="#5ebb46" stroke="#67ce4d" style="fill-opacity:0.6" d="M761.3 306.9L759.6 299.5L761.6 293.6L761.6 296.9Z"/><path fill="#5cd045" stroke="#66e54c" style="fill-opacity:0.6" d="M773 304.1L770.9 295.4L772.5 288.5L772.5 292.1Z"/><path fill="#6a3550" stroke="#753a58" style="fill-opacity:0.6" d="M682.4 322.6L685.1 328.6L688.7 326.7L686.9 323.1Z"/><path fill="#711c54" stroke="#7c1f5d" style="fill-opacity:0.6" d="M670.1 324.3L674.1 334L677.8 332.2L675.1 325.9Z"/><path fill="#5f4747" stroke="#694f4f" style="fill-opacity:0.6" d="M694.6 320.8L696 323.1L699.6 321.3L698.7 320.3Z"/><path fill="#62314a" stroke="#6c3651" style="fill-opacity:0.6" d="M686.9 323.1L688.7 326.7L692.3 324.9L691.4 323.7Z"/><path fill="#691a4f" stroke="#741d57" style="fill-opacity:0.6" d="M675.1 325.9L677.8 332.2L681.4 330.4L680.1 327.6Z"/><path fill="#594343" stroke="#624a4a" style="fill-opacity:0.6" d="M698.7 320.3L699.6 321.3L703.3 319.5L702.8 319.7Z"/><path fill="#572c42" stroke="#603048" style="fill-opacity:0.6" d="M691.4 323.7L692.3 324.9L696 323.1L696 324.2Z"/><path fill="#5c1745" stroke="#65194c" style="fill-opacity:0.6" d="M680.1 327.6L681.4 330.4L685.1 328.6L685.1 329.3Z"/><path fill="#5a4444" stroke="#634a4a" style="fill-opacity:0.6" d="M702.8 319.7L703.3 319.5L706.9 317.6L706.9 319.1Z"/><path fill="#6e0052" stroke="#79005b" style="fill-opacity:0.6" d="M663.2 328.8L666.8 337.7L670.5 335.9L668.7 331.6Z"/><path fill="#5f0048" stroke="#69004f" style="fill-opacity:0.6" d="M668.7 331.6L670.5 335.9L674.1 334L674.1 334.4Z"/><path fill="#5d5d46" stroke="#67674d" style="fill-opacity:0.6" d="M706.9 319.1L706.9 317.6L710.6 315.8L710.6 317.4Z"/><path fill="#5e5e46" stroke="#67674d" style="fill-opacity:0.6" d="M710.6 317.4L710.6 315.8L714.2 314L714.2 315.7Z"/><path fill="#5e5e47" stroke="#68684e" style="fill-opacity:0.6" d="M714.2 315.7L714.2 314L717.9 312.2L717.9 314Z"/><path fill="#627a49" stroke="#6c8651" style="fill-opacity:0.6" d="M725.6 311.7L725.1 308.5L728.8 306.7L728.8 308.9Z"/><path fill="#64974b" stroke="#6ea653" style="fill-opacity:0.6" d="M736.9 307.7L736.1 303.1L739.7 301.2L739.7 303.8Z"/><path fill="#66804d" stroke="#718d54" style="fill-opacity:0.6" d="M722.4 314.5L721.5 310.4L725.1 308.5L725.6 311.7Z"/><path fill="#66b34d" stroke="#71c554" style="fill-opacity:0.6" d="M748.3 303.6L747 297.6L750.6 295.8L750.6 298.7Z"/><path fill="#6b8550" stroke="#759258" style="fill-opacity:0.6" d="M719.2 317.3L717.9 312.2L721.5 310.4L722.4 314.5Z"/><path fill="#67cf4e" stroke="#72e455" style="fill-opacity:0.6" d="M759.6 299.5L757.9 292.1L761.6 290.3L761.6 293.6Z"/><path fill="#6da351" stroke="#77b35a" style="fill-opacity:0.6" d="M734.2 311.5L732.4 304.9L736.1 303.1L736.9 307.7Z"/><path fill="#68ea4e" stroke="#73ff56" style="fill-opacity:0.6" d="M770.9 295.4L768.9 286.7L772.5 284.9L772.5 288.5Z"/><path fill="#72ab56" stroke="#7ebc5e" style="fill-opacity:0.6" d="M731.4 315.4L728.8 306.7L732.4 304.9L734.2 311.5Z"/><path fill="#70c554" stroke="#7cd95d" style="fill-opacity:0.6" d="M745.9 308.5L743.4 299.4L747 297.6L748.3 303.6Z"/><path fill="#73e556" stroke="#7efc5f" style="fill-opacity:0.6" d="M757.7 305.5L754.3 294L757.9 292.1L759.6 299.5Z"/><path fill="#76ce58" stroke="#82e361" style="fill-opacity:0.6" d="M743.6 313.4L739.7 301.2L743.4 299.4L745.9 308.5Z"/><path fill="#74ff57" stroke="#7fff60" style="fill-opacity:0.6" d="M769.4 302.3L765.2 288.5L768.9 286.7L770.9 295.4Z"/><path fill="#6d5742" stroke="#786048" style="fill-opacity:0.6" d="M707.4 309.4L708.4 310L713.1 310.2L712.6 310.8Z"/><path fill="#6d2b41" stroke="#783048" style="fill-opacity:0.6" d="M687.5 315.2L689.1 317.5L696 322L696 323.1Z"/><path fill="#704343" stroke="#7b4a4a" style="fill-opacity:0.6" d="M700 313L701.1 313.8L706.9 316.2L706.9 317.6Z"/><path fill="#745d46" stroke="#7f664c" style="fill-opacity:0.6" d="M712.6 310.8L713.1 310.2L717.9 310.4L717.9 312.2Z"/><path fill="#767647" stroke="#82824e" style="fill-opacity:0.6" d="M717.9 312.2L717.9 310.4L721.5 308.4L721.5 310.4Z"/><path fill="#777747" stroke="#83834f" style="fill-opacity:0.6" d="M721.5 310.4L721.5 308.4L725.1 306.5L725.1 308.5Z"/><path fill="#787848" stroke="#84844f" style="fill-opacity:0.6" d="M725.1 308.5L725.1 306.5L728.8 304.5L728.8 306.7Z"/><path fill="#768d47" stroke="#829b4e" style="fill-opacity:0.6" d="M737.6 306.2L737.1 302.7L739.7 298.7L739.7 301.2Z"/><path fill="#72a045" stroke="#7eb04c" style="fill-opacity:0.6" d="M750.1 303.8L749.1 299L750.6 292.9L750.6 295.8Z"/><path fill="#7b934a" stroke="#87a251" style="fill-opacity:0.6" d="M735.6 311.2L734.5 306.8L737.1 302.7L737.6 306.2Z"/><path fill="#70b343" stroke="#7bc54a" style="fill-opacity:0.6" d="M762.5 301.3L761 295.1L761.6 287L761.6 290.3Z"/><path fill="#745c45" stroke="#7f664c" style="fill-opacity:0.6" d="M703.7 309.8L705.3 311.5L709.5 310.5L708.4 310Z"/><path fill="#6d5741" stroke="#776048" style="fill-opacity:0.6" d="M708.4 310L709.5 310.5L713.7 309.5L713.1 310.2Z"/><path fill="#6e2c42" stroke="#783048" style="fill-opacity:0.6" d="M689.1 317.5L690.7 319.7L696 320.9L696 322Z"/><path fill="#6f4343" stroke="#7a4949" style="fill-opacity:0.6" d="M701.1 313.8L702.2 314.6L706.9 314.7L706.9 316.2Z"/><path fill="#701643" stroke="#7c194a" style="fill-opacity:0.6" d="M677.1 321.1L679.2 324.8L685.1 327.1L685.1 327.8Z"/><path fill="#745c45" stroke="#7f664c" style="fill-opacity:0.6" d="M713.1 310.2L713.7 309.5L717.9 308.5L717.9 310.4Z"/><path fill="#730045" stroke="#7e004c" style="fill-opacity:0.6" d="M665.1 324.8L667.8 329.9L674.1 333.3L674.1 333.7Z"/><path fill="#767647" stroke="#82824e" style="fill-opacity:0.6" d="M717.9 310.4L717.9 308.5L721.5 306.5L721.5 308.4Z"/><path fill="#777747" stroke="#83834e" style="fill-opacity:0.6" d="M721.5 308.4L721.5 306.5L725.1 304.4L725.1 306.5Z"/><path fill="#777748" stroke="#83834f" style="fill-opacity:0.6" d="M725.1 306.5L725.1 304.4L728.8 302.3L728.8 304.5Z"/><path fill="#799148" stroke="#859f50" style="fill-opacity:0.6" d="M737.1 302.7L736.6 299.3L739.7 296.1L739.7 298.7Z"/><path fill="#77a748" stroke="#83b84f" style="fill-opacity:0.6" d="M749.1 299L748 294.1L750.6 290L750.6 292.9Z"/><path fill="#7e974c" stroke="#8ba653" style="fill-opacity:0.6" d="M734.5 306.8L733.5 302.4L736.6 299.3L737.1 302.7Z"/><path fill="#76bc47" stroke="#82cf4e" style="fill-opacity:0.6" d="M761 295.1L759.5 288.9L761.6 283.8L761.6 287Z"/><path fill="#839d4f" stroke="#90ad57" style="fill-opacity:0.6" d="M731.9 310.8L730.4 305.5L733.5 302.4L734.5 306.8Z"/><path fill="#74d146" stroke="#80e64d" style="fill-opacity:0.6" d="M772.9 291.2L770.9 283.7L772.5 277.6L772.5 281.2Z"/><path fill="#8b3854" stroke="#993d5c" style="fill-opacity:0.6" d="M680.2 317.4L685.1 326.4L688.7 324.2L685.5 318.6Z"/><path fill="#834f4f" stroke="#905757" style="fill-opacity:0.6" d="M692.8 314.5L696 319.8L699.6 317.6L697.5 314.5Z"/><path fill="#755e46" stroke="#81674d" style="fill-opacity:0.6" d="M705.3 311.5L706.9 313.3L710.6 311.1L709.5 310.5Z"/><path fill="#82344e" stroke="#8f3956" style="fill-opacity:0.6" d="M685.5 318.6L688.7 324.2L692.3 322L690.7 319.7Z"/><path fill="#794949" stroke="#855050" style="fill-opacity:0.6" d="M697.5 314.5L699.6 317.6L703.3 315.5L702.2 314.6Z"/><path fill="#881b52" stroke="#961e5a" style="fill-opacity:0.6" d="M673.4 322.6L677.8 330.8L681.4 328.6L679.2 324.8Z"/><path fill="#6e5842" stroke="#796149" style="fill-opacity:0.6" d="M709.5 310.5L710.6 311.1L714.2 308.9L713.7 309.5Z"/><path fill="#702d43" stroke="#7c314a" style="fill-opacity:0.6" d="M690.7 319.7L692.3 322L696 319.8L696 320.9Z"/><path fill="#6d4242" stroke="#784848" style="fill-opacity:0.6" d="M702.2 314.6L703.3 315.5L706.9 313.3L706.9 314.7Z"/><path fill="#751746" stroke="#811a4d" style="fill-opacity:0.6" d="M679.2 324.8L681.4 328.6L685.1 326.4L685.1 327.1Z"/><path fill="#735c45" stroke="#7e654c" style="fill-opacity:0.6" d="M713.7 309.5L714.2 308.9L717.9 306.7L717.9 308.5Z"/><path fill="#8c0054" stroke="#9a005d" style="fill-opacity:0.6" d="M661.4 326.6L666.8 337.3L670.5 335.1L667.8 329.9Z"/><path fill="#790049" stroke="#860050" style="fill-opacity:0.6" d="M667.8 329.9L670.5 335.1L674.1 332.9L674.1 333.3Z"/><path fill="#767647" stroke="#82824e" style="fill-opacity:0.6" d="M717.9 308.5L717.9 306.7L721.5 304.5L721.5 306.5Z"/><path fill="#777747" stroke="#83834e" style="fill-opacity:0.6" d="M721.5 306.5L721.5 304.5L725.1 302.3L725.1 304.4Z"/><path fill="#777748" stroke="#83834f" style="fill-opacity:0.6" d="M725.1 304.4L725.1 302.3L728.8 300.2L728.8 302.3Z"/><path fill="#7b944a" stroke="#88a351" style="fill-opacity:0.6" d="M736.6 299.3L736.1 295.8L739.7 293.6L739.7 296.1Z"/><path fill="#7eb14c" stroke="#8bc253" style="fill-opacity:0.6" d="M748 294.1L747 289.2L750.6 287L750.6 290Z"/><path fill="#819b4d" stroke="#8eaa55" style="fill-opacity:0.6" d="M733.5 302.4L732.4 298L736.1 295.8L736.6 299.3Z"/><path fill="#80cd4d" stroke="#8de255" style="fill-opacity:0.6" d="M759.5 288.9L757.9 282.7L761.6 280.5L761.6 283.8Z"/><path fill="#86a150" stroke="#94b159" style="fill-opacity:0.6" d="M730.4 305.5L728.8 300.2L732.4 298L733.5 302.4Z"/><path fill="#81e94e" stroke="#8eff55" style="fill-opacity:0.6" d="M770.9 283.7L768.9 276.1L772.5 273.9L772.5 277.6Z"/><path fill="#88bf52" stroke="#96d25a" style="fill-opacity:0.6" d="M745.4 298.2L743.4 291.4L747 289.2L748 294.1Z"/><path fill="#8fc956" stroke="#9edd5f" style="fill-opacity:0.6" d="M742.8 302.4L739.7 293.6L743.4 291.4L745.4 298.2Z"/><path fill="#8de255" stroke="#9bf85d" style="fill-opacity:0.6" d="M757.4 294L754.3 284.9L757.9 282.7L759.5 288.9Z"/><path fill="#90ff56" stroke="#9eff5f" style="fill-opacity:0.6" d="M769.2 289.8L765.2 278.3L768.9 276.1L770.9 283.7Z"/><path fill="#94ec59" stroke="#a2ff61" style="fill-opacity:0.6" d="M755.2 299.2L750.6 287L754.3 284.9L757.4 294Z"/><path fill="#866f43" stroke="#937b4a" style="fill-opacity:0.6" d="M717.8 298.4L719 298.5L723.9 298.2L723.3 299.3Z"/><path fill="#854242" stroke="#924949" style="fill-opacity:0.6" d="M697.7 306.2L699.6 307.9L706.9 311.8L706.9 313.3Z"/><path fill="#895b44" stroke="#96644b" style="fill-opacity:0.6" d="M710.5 302.7L711.7 303.1L717.9 304.9L717.9 306.7Z"/><path fill="#8e7647" stroke="#9c824e" style="fill-opacity:0.6" d="M723.3 299.3L723.9 298.2L728.8 298L728.8 300.2Z"/><path fill="#909048" stroke="#9e9e4f" style="fill-opacity:0.6" d="M728.8 300.2L728.8 298L732.4 295.7L732.4 298Z"/><path fill="#909048" stroke="#9f9f4f" style="fill-opacity:0.6" d="M732.4 298L732.4 295.7L736.1 293.4L736.1 295.8Z"/><path fill="#919149" stroke="#a0a050" style="fill-opacity:0.6" d="M736.1 295.8L736.1 293.4L739.7 291L739.7 293.6Z"/><path fill="#8da547" stroke="#9cb64e" style="fill-opacity:0.6" d="M748.8 292.2L748.2 288.4L750.6 284.1L750.6 287Z"/><path fill="#89b644" stroke="#96c84b" style="fill-opacity:0.6" d="M761.5 288.6L760.3 283.4L761.6 277.2L761.6 280.5Z"/><path fill="#94ac4a" stroke="#a2bd51" style="fill-opacity:0.6" d="M746.9 297.4L745.7 292.7L748.2 288.4L748.8 292.2Z"/><path fill="#85c843" stroke="#92dc49" style="fill-opacity:0.6" d="M774.1 284.9L772.4 278.4L772.5 270.3L772.5 273.9Z"/><path fill="#887244" stroke="#967d4b" style="fill-opacity:0.6" d="M714.2 298.8L716 300L720.3 298.6L719 298.5Z"/><path fill="#846e42" stroke="#917949" style="fill-opacity:0.6" d="M719 298.5L720.3 298.6L724.5 297.2L723.9 298.2Z"/><path fill="#834242" stroke="#904848" style="fill-opacity:0.6" d="M699.6 307.9L701.4 309.7L706.9 310.4L706.9 311.8Z"/><path fill="#852c42" stroke="#923149" style="fill-opacity:0.6" d="M687.4 312.7L689.9 315.9L696 317.6L696 318.7Z"/><path fill="#885b44" stroke="#95644b" style="fill-opacity:0.6" d="M711.7 303.1L713 303.4L717.9 303.1L717.9 304.9Z"/><path fill="#881744" stroke="#95194b" style="fill-opacity:0.6" d="M675.2 317.6L678.3 322.2L685.1 324.9L685.1 325.7Z"/><path fill="#8d7546" stroke="#9b814e" style="fill-opacity:0.6" d="M723.9 298.2L724.5 297.2L728.8 295.8L728.8 298Z"/><path fill="#8f8f48" stroke="#9e9e4f" style="fill-opacity:0.6" d="M728.8 298L728.8 295.8L732.4 293.4L732.4 295.7Z"/><path fill="#909048" stroke="#9f9f4f" style="fill-opacity:0.6" d="M732.4 295.7L732.4 293.4L736.1 290.9L736.1 293.4Z"/><path fill="#919148" stroke="#9f9f50" style="fill-opacity:0.6" d="M736.1 293.4L736.1 290.9L739.7 288.5L739.7 291Z"/><path fill="#91a949" stroke="#a0ba50" style="fill-opacity:0.6" d="M748.2 288.4L747.6 284.6L750.6 281.2L750.6 284.1Z"/><path fill="#8fbf48" stroke="#9ed24f" style="fill-opacity:0.6" d="M760.3 283.4L759.1 278.3L761.6 273.9L761.6 277.2Z"/><path fill="#98b14c" stroke="#a7c354" style="fill-opacity:0.6" d="M745.7 292.7L744.6 288.1L747.6 284.6L748.2 288.4Z"/><path fill="#8dd346" stroke="#9be84d" style="fill-opacity:0.6" d="M772.4 278.4L770.6 272L772.5 266.6L772.5 270.3Z"/><path fill="#9eb84f" stroke="#aecb57" style="fill-opacity:0.6" d="M743.3 297L741.5 291.5L744.6 288.1L745.7 292.7Z"/><path fill="#a65353" stroke="#b65b5b" style="fill-opacity:0.6" d="M690.4 308.3L696 316.5L699.6 314L695.9 309Z"/><path fill="#9b684e" stroke="#ab7255" style="fill-opacity:0.6" d="M703.2 304.2L706.9 308.9L710.6 306.3L708.1 303.8Z"/><path fill="#9a4d4d" stroke="#a95454" style="fill-opacity:0.6" d="M695.9 309L699.6 314L703.3 311.4L701.4 309.7Z"/><path fill="#8b7445" stroke="#987f4c" style="fill-opacity:0.6" d="M716 300L717.9 301.2L721.5 298.7L720.3 298.6Z"/><path fill="#a13651" stroke="#b23b59" style="fill-opacity:0.6" d="M683.7 314.2L688.7 321.6L692.3 319.1L689.9 315.9Z"/><path fill="#8f5f48" stroke="#9d694f" style="fill-opacity:0.6" d="M708.1 303.8L710.6 306.3L714.2 303.8L713 303.4Z"/><path fill="#a71c53" stroke="#b81f5c" style="fill-opacity:0.6" d="M671.5 319.4L677.8 329.3L681.4 326.7L678.3 322.2Z"/><path fill="#826c41" stroke="#8f7748" style="fill-opacity:0.6" d="M720.3 298.6L721.5 298.7L725.1 296.1L724.5 297.2Z"/><path fill="#844242" stroke="#924949" style="fill-opacity:0.6" d="M701.4 309.7L703.3 311.4L706.9 308.9L706.9 310.4Z"/><path fill="#8a2e45" stroke="#98334c" style="fill-opacity:0.6" d="M689.9 315.9L692.3 319.1L696 316.5L696 317.6Z"/><path fill="#865943" stroke="#936249" style="fill-opacity:0.6" d="M713 303.4L714.2 303.8L717.9 301.2L717.9 303.1Z"/><path fill="#8f1848" stroke="#9e1a4f" style="fill-opacity:0.6" d="M678.3 322.2L681.4 326.7L685.1 324.2L685.1 324.9Z"/><path fill="#8b7446" stroke="#99804d" style="fill-opacity:0.6" d="M724.5 297.2L725.1 296.1L728.8 293.6L728.8 295.8Z"/><path fill="#94004a" stroke="#a30051" style="fill-opacity:0.6" d="M666.7 328.4L670.5 334.4L674.1 331.8L674.1 332.2Z"/><path fill="#8f8f48" stroke="#9e9e4f" style="fill-opacity:0.6" d="M728.8 295.8L728.8 293.6L732.4 291L732.4 293.4Z"/><path fill="#909048" stroke="#9e9e4f" style="fill-opacity:0.6" d="M732.4 293.4L732.4 291L736.1 288.5L736.1 290.9Z"/><path fill="#919148" stroke="#9f9f50" style="fill-opacity:0.6" d="M736.1 290.9L736.1 288.5L739.7 285.9L739.7 288.5Z"/><path fill="#95ae4a" stroke="#a4bf52" style="fill-opacity:0.6" d="M747.6 284.6L747 280.8L750.6 278.3L750.6 281.2Z"/><path fill="#98cb4c" stroke="#a7df54" style="fill-opacity:0.6" d="M759.1 278.3L757.9 273.2L761.6 270.6L761.6 273.9Z"/><path fill="#9cb64e" stroke="#abc856" style="fill-opacity:0.6" d="M744.6 288.1L743.4 283.4L747 280.8L747.6 284.6Z"/><path fill="#9ae74d" stroke="#aafe55" style="fill-opacity:0.6" d="M770.6 272L768.9 265.5L772.5 263L772.5 266.6Z"/><path fill="#a2bd51" stroke="#b2d059" style="fill-opacity:0.6" d="M741.5 291.5L739.7 285.9L743.4 283.4L744.6 288.1Z"/><path fill="#a4db52" stroke="#b5f15a" style="fill-opacity:0.6" d="M756.6 282.7L754.3 275.7L757.9 273.2L759.1 278.3Z"/><path fill="#aafe55" stroke="#bbff5d" style="fill-opacity:0.6" d="M768.7 277.3L765.2 268.1L768.9 265.5L770.6 272Z"/><path fill="#ade656" stroke="#befd5f" style="fill-opacity:0.6" d="M754.2 287.1L750.6 278.3L754.3 275.7L756.6 282.7Z"/><path fill="#b2ff59" stroke="#c3ff62" style="fill-opacity:0.6" d="M766.8 282.7L761.6 270.6L765.2 268.1L768.7 277.3Z"/><path fill="#9f8844" stroke="#af964b" style="fill-opacity:0.6" d="M728.4 285.2L729.7 284.9L734.7 284.1L734 285.6Z"/><path fill="#9e5a44" stroke="#ae634a" style="fill-opacity:0.6" d="M708 295L710.1 296.2L717.9 299.4L717.9 301.2Z"/><path fill="#a27446" stroke="#b3804d" style="fill-opacity:0.6" d="M721 290.3L722.4 290.2L728.8 291.4L728.8 293.6Z"/><path fill="#a89048" stroke="#b99e4f" style="fill-opacity:0.6" d="M734 285.6L734.7 284.1L739.7 283.4L739.7 285.9Z"/><path fill="#a9a949" stroke="#baba50" style="fill-opacity:0.6" d="M739.7 285.9L739.7 283.4L743.4 280.7L743.4 283.4Z"/><path fill="#aaaa49" stroke="#bbbb50" style="fill-opacity:0.6" d="M743.4 283.4L743.4 280.7L747 278L747 280.8Z"/><path fill="#abab49" stroke="#bcbc50" style="fill-opacity:0.6" d="M747 280.8L747 278L750.6 275.4L750.6 278.3Z"/><path fill="#a5bd47" stroke="#b6cf4e" style="fill-opacity:0.6" d="M759.9 276L759.3 271.9L761.6 267.4L761.6 270.6Z"/><path fill="#9ecc44" stroke="#aee04b" style="fill-opacity:0.6" d="M772.8 271.1L771.5 265.8L772.5 259.3L772.5 263Z"/><path fill="#acc54a" stroke="#bed951" style="fill-opacity:0.6" d="M758.3 281.4L756.9 276.5L759.3 271.9L759.9 276Z"/><path fill="#9d8643" stroke="#ac944a" style="fill-opacity:0.6" d="M724.7 285.6L726.8 286.3L731.1 284.5L729.7 284.9Z"/><path fill="#9d8643" stroke="#ac944a" style="fill-opacity:0.6" d="M729.7 284.9L731.1 284.5L735.4 282.7L734.7 284.1Z"/><path fill="#984141" stroke="#a74848" style="fill-opacity:0.6" d="M697.7 302.2L700.5 304.8L706.9 306L706.9 307.4Z"/><path fill="#9c5943" stroke="#ac624a" style="fill-opacity:0.6" d="M710.1 296.2L712.1 297.4L717.9 297.6L717.9 299.4Z"/><path fill="#9c2c43" stroke="#ab3149" style="fill-opacity:0.6" d="M685.4 308.2L688.9 312.2L696 314.4L696 315.5Z"/><path fill="#a17345" stroke="#b27f4c" style="fill-opacity:0.6" d="M722.4 290.2L723.8 290.1L728.8 289.2L728.8 291.4Z"/><path fill="#a78f48" stroke="#b89d4f" style="fill-opacity:0.6" d="M734.7 284.1L735.4 282.7L739.7 280.8L739.7 283.4Z"/><path fill="#a9a948" stroke="#baba50" style="fill-opacity:0.6" d="M739.7 283.4L739.7 280.8L743.4 278L743.4 280.7Z"/><path fill="#aaaa49" stroke="#bbbb50" style="fill-opacity:0.6" d="M743.4 280.7L743.4 278L747 275.3L747 278Z"/><path fill="#aaaa49" stroke="#bbbb50" style="fill-opacity:0.6" d="M747 278L747 275.3L750.6 272.5L750.6 275.4Z"/><path fill="#aac249" stroke="#bbd650" style="fill-opacity:0.6" d="M759.3 271.9L758.6 267.8L761.6 264.1L761.6 267.4Z"/><path fill="#a7d748" stroke="#b8ec4f" style="fill-opacity:0.6" d="M771.5 265.8L770.2 260.4L772.5 255.7L772.5 259.3Z"/><path fill="#b2cb4c" stroke="#c4e054" style="fill-opacity:0.6" d="M756.9 276.5L755.6 271.6L758.6 267.8L759.3 271.9Z"/><path fill="#b9d34f" stroke="#cce957" style="fill-opacity:0.6" d="M754.6 281L752.6 275.3L755.6 271.6L756.9 276.5Z"/><path fill="#bf6d52" stroke="#d3785a" style="fill-opacity:0.6" d="M700.7 297.1L706.9 304.5L710.6 301.6L706.4 297.3Z"/><path fill="#b3804d" stroke="#c58d54" style="fill-opacity:0.6" d="M713.8 291.8L717.9 295.8L721.5 292.9L718.8 290.9Z"/><path fill="#ba5050" stroke="#cd5858" style="fill-opacity:0.6" d="M694.1 303.7L699.6 310.4L703.3 307.4L700.5 304.8Z"/><path fill="#b1654c" stroke="#c36f53" style="fill-opacity:0.6" d="M706.4 297.3L710.6 301.6L714.2 298.7L712.1 297.4Z"/><path fill="#c13753" stroke="#d43d5b" style="fill-opacity:0.6" d="M681.8 310L688.7 319.1L692.3 316.2L688.9 312.2Z"/><path fill="#a57647" stroke="#b5814e" style="fill-opacity:0.6" d="M718.8 290.9L721.5 292.9L725.1 290L723.8 290.1Z"/><path fill="#a08944" stroke="#b0964b" style="fill-opacity:0.6" d="M726.8 286.3L728.8 287L732.4 284.1L731.1 284.5Z"/><path fill="#9a8442" stroke="#a99149" style="fill-opacity:0.6" d="M731.1 284.5L732.4 284.1L736.1 281.2L735.4 282.7Z"/><path fill="#9e4444" stroke="#ae4b4b" style="fill-opacity:0.6" d="M700.5 304.8L703.3 307.4L706.9 304.5L706.9 306Z"/><path fill="#985741" stroke="#a75f48" style="fill-opacity:0.6" d="M712.1 297.4L714.2 298.7L717.9 295.8L717.9 297.6Z"/><path fill="#a52f47" stroke="#b5344e" style="fill-opacity:0.6" d="M688.9 312.2L692.3 316.2L696 313.3L696 314.4Z"/><path fill="#9e7144" stroke="#ae7c4b" style="fill-opacity:0.6" d="M723.8 290.1L725.1 290L728.8 287L728.8 289.2Z"/><path fill="#aa1849" stroke="#bb1b50" style="fill-opacity:0.6" d="M677.2 319.6L681.4 324.9L685.1 322L685.1 322.7Z"/><path fill="#a58d47" stroke="#b59b4e" style="fill-opacity:0.6" d="M735.4 282.7L736.1 281.2L739.7 278.3L739.7 280.8Z"/><path fill="#af004b" stroke="#c00052" style="fill-opacity:0.6" d="M665.6 326.9L670.5 333.7L674.1 330.8L674.1 331.1Z"/><path fill="#a9a948" stroke="#baba50" style="fill-opacity:0.6" d="M739.7 280.8L739.7 278.3L743.4 275.4L743.4 278Z"/><path fill="#a9a949" stroke="#baba50" style="fill-opacity:0.6" d="M743.4 278L743.4 275.4L747 272.5L747 275.3Z"/><path fill="#aaaa49" stroke="#bbbb50" style="fill-opacity:0.6" d="M747 275.3L747 272.5L750.6 269.5L750.6 272.5Z"/><path fill="#afc84b" stroke="#c0dc52" style="fill-opacity:0.6" d="M758.6 267.8L757.9 263.7L761.6 260.8L761.6 264.1Z"/><path fill="#b2e54c" stroke="#c4fc54" style="fill-opacity:0.6" d="M770.2 260.4L768.9 255L772.5 252.1L772.5 255.7Z"/><path fill="#b7d14e" stroke="#c9e656" style="fill-opacity:0.6" d="M755.6 271.6L754.3 266.6L757.9 263.7L758.6 267.8Z"/><path fill="#bed951" stroke="#d1ee59" style="fill-opacity:0.6" d="M752.6 275.3L750.6 269.5L754.3 266.6L755.6 271.6Z"/><path fill="#c0f752" stroke="#d3ff5b" style="fill-opacity:0.6" d="M767.8 265L765.2 257.9L768.9 255L770.2 260.4Z"/><path fill="#caff57" stroke="#deff5f" style="fill-opacity:0.6" d="M765.5 269.7L761.6 260.8L765.2 257.9L767.8 265Z"/><path fill="#b9a245" stroke="#cbb24c" style="fill-opacity:0.6" d="M739 269.9L740.4 269L745.5 267.8L744.8 269.7Z"/><path fill="#b87345" stroke="#ca7e4c" style="fill-opacity:0.6" d="M718.4 281.6L720.7 282.3L728.8 284.9L728.8 287Z"/><path fill="#bd8e47" stroke="#d09c4e" style="fill-opacity:0.6" d="M731.6 275.7L733.1 275.1L739.7 275.7L739.7 278.3Z"/><path fill="#c3ab49" stroke="#d6bc50" style="fill-opacity:0.6" d="M744.8 269.7L745.5 267.8L750.6 266.6L750.6 269.5Z"/><path fill="#c3c349" stroke="#d6d650" style="fill-opacity:0.6" d="M750.6 269.5L750.6 266.6L754.3 263.6L754.3 266.6Z"/><path fill="#c4c449" stroke="#d7d751" style="fill-opacity:0.6" d="M754.3 266.6L754.3 263.6L757.9 260.6L757.9 263.7Z"/><path fill="#c5c54a" stroke="#d8d851" style="fill-opacity:0.6" d="M757.9 263.7L757.9 260.6L761.6 257.5L761.6 260.8Z"/><path fill="#bdd447" stroke="#cfe94e" style="fill-opacity:0.6" d="M771 257.7L770.3 253.2L772.5 248.4L772.5 252.1Z"/><path fill="#c5de4a" stroke="#d9f451" style="fill-opacity:0.6" d="M769.5 263.3L768.1 258.1L770.3 253.2L771 257.7Z"/><path fill="#b09a42" stroke="#c2aa49" style="fill-opacity:0.6" d="M735.3 270.3L737.5 270.4L741.9 268.2L740.4 269Z"/><path fill="#b69f44" stroke="#c8af4b" style="fill-opacity:0.6" d="M740.4 269L741.9 268.2L746.3 266L745.5 267.8Z"/><path fill="#b15842" stroke="#c26149" style="fill-opacity:0.6" d="M708.2 289.5L711.2 291.5L717.9 292.1L717.9 294Z"/><path fill="#af4242" stroke="#c04848" style="fill-opacity:0.6" d="M695.7 296.7L699.5 300.1L706.9 301.6L706.9 303.1Z"/><path fill="#b67244" stroke="#c87d4b" style="fill-opacity:0.6" d="M720.7 282.3L722.9 283L728.8 282.7L728.8 284.9Z"/><path fill="#bc8d46" stroke="#ce9b4d" style="fill-opacity:0.6" d="M733.1 275.1L734.6 274.5L739.7 273.2L739.7 275.7Z"/><path fill="#c1a948" stroke="#d5ba50" style="fill-opacity:0.6" d="M745.5 267.8L746.3 266L750.6 263.7L750.6 266.6Z"/><path fill="#c3c349" stroke="#d6d650" style="fill-opacity:0.6" d="M750.6 266.6L750.6 263.7L754.3 260.6L754.3 263.6Z"/><path fill="#c3c349" stroke="#d7d751" style="fill-opacity:0.6" d="M754.3 263.6L754.3 260.6L757.9 257.4L757.9 260.6Z"/><path fill="#c4c44a" stroke="#d8d851" style="fill-opacity:0.6" d="M757.9 260.6L757.9 257.4L761.6 254.2L761.6 257.5Z"/><path fill="#c3db49" stroke="#d6f150" style="fill-opacity:0.6" d="M770.3 253.2L769.6 248.8L772.5 244.8L772.5 248.4Z"/><path fill="#cce54c" stroke="#e0fc54" style="fill-opacity:0.6" d="M768.1 258.1L766.6 252.9L769.6 248.8L770.3 253.2Z"/><path fill="#d4ee4f" stroke="#e9ff57" style="fill-opacity:0.6" d="M765.9 262.9L763.7 256.9L766.6 252.9L768.1 258.1Z"/><path fill="#d98851" stroke="#ef9559" style="fill-opacity:0.6" d="M711.1 283.8L717.9 290.3L721.5 287L717 283.4Z"/><path fill="#ca984c" stroke="#dfa754" style="fill-opacity:0.6" d="M724.3 277.1L728.8 280.5L732.4 277.2L729.5 275.8Z"/><path fill="#d3694f" stroke="#e87457" style="fill-opacity:0.6" d="M704.6 291L710.6 296.9L714.2 293.6L711.2 291.5Z"/><path fill="#db5252" stroke="#f05a5a" style="fill-opacity:0.6" d="M692.1 298.5L699.6 306.7L703.3 303.4L699.5 300.1Z"/><path fill="#c87d4b" stroke="#dc8952" style="fill-opacity:0.6" d="M717 283.4L721.5 287L725.1 283.8L722.9 283Z"/><path fill="#ba8b46" stroke="#cc994d" style="fill-opacity:0.6" d="M729.5 275.8L732.4 277.2L736.1 273.9L734.6 274.5Z"/><path fill="#b49e44" stroke="#c6ad4a" style="fill-opacity:0.6" d="M737.5 270.4L739.7 270.6L743.4 267.4L741.9 268.2Z"/><path fill="#b29c43" stroke="#c4ab49" style="fill-opacity:0.6" d="M741.9 268.2L743.4 267.4L747 264.1L746.3 266Z"/><path fill="#b25943" stroke="#c46249" style="fill-opacity:0.6" d="M711.2 291.5L714.2 293.6L717.9 290.3L717.9 292.1Z"/><path fill="#b94545" stroke="#cb4c4c" style="fill-opacity:0.6" d="M699.5 300.1L703.3 303.4L706.9 300.2L706.9 301.6Z"/><path fill="#b06e42" stroke="#c27949" style="fill-opacity:0.6" d="M722.9 283L725.1 283.8L728.8 280.5L728.8 282.7Z"/><path fill="#bf3048" stroke="#d3354f" style="fill-opacity:0.6" d="M687.8 308.6L692.3 313.3L696 310L696 311.1Z"/><path fill="#b78945" stroke="#ca974c" style="fill-opacity:0.6" d="M734.6 274.5L736.1 273.9L739.7 270.6L739.7 273.2Z"/><path fill="#c5194a" stroke="#d91b51" style="fill-opacity:0.6" d="M676.1 317.1L681.4 323.1L685.1 319.8L685.1 320.6Z"/><path fill="#bea647" stroke="#d1b74e" style="fill-opacity:0.6" d="M746.3 266L747 264.1L750.6 260.8L750.6 263.7Z"/><path fill="#ca004c" stroke="#de0053" style="fill-opacity:0.6" d="M664.4 325.6L670.5 332.9L674.1 329.7L674.1 330Z"/><path fill="#c2c249" stroke="#d6d650" style="fill-opacity:0.6" d="M750.6 263.7L750.6 260.8L754.3 257.5L754.3 260.6Z"/><path fill="#c3c349" stroke="#d7d750" style="fill-opacity:0.6" d="M754.3 260.6L754.3 257.5L757.9 254.2L757.9 257.4Z"/><path fill="#c4c449" stroke="#d7d751" style="fill-opacity:0.6" d="M757.9 257.4L757.9 254.2L761.6 251L761.6 254.2Z"/><path fill="#c9e24b" stroke="#ddf853" style="fill-opacity:0.6" d="M769.6 248.8L768.9 244.4L772.5 241.1L772.5 244.8Z"/><path fill="#d2ec4f" stroke="#e7ff56" style="fill-opacity:0.6" d="M766.6 252.9L765.2 247.7L768.9 244.4L769.6 248.8Z"/><path fill="#daf552" stroke="#efff5a" style="fill-opacity:0.6" d="M763.7 256.9L761.6 251L765.2 247.7L766.6 252.9Z"/></g><path d="M663.2 339.5L663.2 339.5L772.5 230.2L772.5 339.5ZM663.2 339.5L663.2 339.5L674.1 338.4L674.1 339.5ZM674.1 350.4L674.1 338.4L685.1 337.3L685.1 339.5ZM685.1 361.3L685.1 337.3L696 336.2L696 339.5ZM696 371.9L696 336.2L706.9 335.1L706.9 339.5ZM706.9 382.4L706.9 335.1L717.9 334L717.9 339.5ZM717.9 392.5L717.9 334L728.8 332.9L728.8 339.5ZM728.8 402.3L728.8 332.9L739.7 331.8L739.7 339.5ZM739.7 411.7L739.7 331.8L750.6 330.8L750.6 339.5ZM750.6 420.7L750.6 330.8L761.6 329.7L761.6 339.5ZM761.6 429.2L761.6 329.7L772.5 328.6L772.5 339.5ZM662.1 328.6L663.2 339.5L674.1 337.3L674.1 338.4ZM674.1 338.4L674.1 337.3L685.1 335.1L685.1 337.3ZM686.1 348.1L685.1 335.1L696 332.9L696 336.2ZM698.1 357.7L696 332.9L706.9 330.8L706.9 335.1ZM710.1 367.1L706.9 330.8L717.9 328.6L717.9 334ZM722.1 376.3L717.9 328.6L728.8 326.4L728.8 332.9ZM734 385L728.8 326.4L739.7 324.2L739.7 331.8ZM745.9 393.5L739.7 324.2L750.6 322L750.6 330.8ZM757.7 401.5L750.6 322L761.6 319.8L761.6 329.7ZM769.5 409.1L761.6 319.8L772.5 317.6L772.5 328.6ZM658.9 318.1L663.2 339.5L674.1 336.2L674.1 337.3ZM672 326.6L674.1 336.2L685.1 332.9L685.1 335.1ZM685.1 335.1L685.1 332.9L696 329.7L696 332.9ZM698.1 343.5L696 329.7L706.9 326.4L706.9 330.8ZM711.1 351.8L706.9 326.4L717.9 323.1L717.9 328.6ZM724.1 359.8L717.9 323.1L728.8 319.8L728.8 326.4ZM737 367.5L728.8 319.8L739.7 316.5L739.7 324.2ZM749.8 374.9L739.7 316.5L750.6 313.3L750.6 322ZM762.6 381.9L750.6 313.3L761.6 310L761.6 319.8ZM775.3 388.5L761.6 310L772.5 306.7L772.5 317.6ZM653.8 308.1L663.2 339.5L674.1 335.1L674.1 336.2ZM667.9 315.3L674.1 335.1L685.1 330.8L685.1 332.9ZM681.9 322.5L685.1 330.8L696 326.4L696 329.7ZM696 329.7L696 326.4L706.9 322L706.9 326.4ZM710 336.7L706.9 322L717.9 317.6L717.9 323.1ZM724 343.5L717.9 317.6L728.8 313.3L728.8 319.8ZM737.8 350L728.8 313.3L739.7 308.9L739.7 316.5ZM751.6 356.3L739.7 308.9L750.6 304.5L750.6 313.3ZM765.3 362.1L750.6 304.5L761.6 300.2L761.6 310ZM778.9 367.7L761.6 300.2L772.5 295.8L772.5 306.7ZM647 298.9L663.2 339.5L674.1 334L674.1 335.1ZM662 304.7L674.1 334L685.1 328.6L685.1 330.8ZM677 310.5L685.1 328.6L696 323.1L696 326.4ZM692 316.3L696 323.1L706.9 317.6L706.9 322ZM706.9 322L706.9 317.6L717.9 312.2L717.9 317.6ZM721.8 327.5L717.9 312.2L728.8 306.7L728.8 313.3ZM736.6 332.8L728.8 306.7L739.7 301.2L739.7 308.9ZM751.3 337.9L739.7 301.2L750.6 295.8L750.6 304.5ZM765.9 342.6L750.6 295.8L761.6 290.3L761.6 300.2ZM780.3 347L761.6 290.3L772.5 284.9L772.5 295.8ZM638.8 290.6L663.2 339.5L674.1 332.9L674.1 334ZM654.6 295L674.1 332.9L685.1 326.4L685.1 328.6ZM670.5 299.4L685.1 326.4L696 319.8L696 323.1ZM686.3 303.7L696 319.8L706.9 313.3L706.9 317.6ZM702.1 308L706.9 313.3L717.9 306.7L717.9 312.2ZM717.9 312.2L717.9 306.7L728.8 300.2L728.8 306.7ZM733.5 316.2L728.8 300.2L739.7 293.6L739.7 301.2ZM749 319.9L739.7 293.6L750.6 287L750.6 295.8ZM764.4 323.4L750.6 287L761.6 280.5L761.6 290.3ZM779.7 326.6L761.6 280.5L772.5 273.9L772.5 284.9ZM629.5 283.3L663.2 339.5L674.1 331.8L674.1 332.9ZM646 286.1L674.1 331.8L685.1 324.2L685.1 326.4ZM662.6 289L685.1 324.2L696 316.5L696 319.8ZM679.3 291.9L696 316.5L706.9 308.9L706.9 313.3ZM695.8 294.8L706.9 308.9L717.9 301.2L717.9 306.7ZM712.4 297.5L717.9 301.2L728.8 293.6L728.8 300.2ZM728.8 300.2L728.8 293.6L739.7 285.9L739.7 293.6ZM745.1 302.6L739.7 285.9L750.6 278.3L750.6 287ZM761.3 304.8L750.6 278.3L761.6 270.6L761.6 280.5ZM777.3 306.7L761.6 270.6L772.5 263L772.5 273.9ZM619.3 276.8L663.2 339.5L674.1 330.8L674.1 331.8ZM636.6 278.2L674.1 330.8L685.1 322L685.1 324.2ZM653.8 279.6L685.1 322L696 313.3L696 316.5ZM671.1 281L696 313.3L706.9 304.5L706.9 308.9ZM688.4 282.4L706.9 304.5L717.9 295.8L717.9 301.2ZM705.6 283.7L717.9 295.8L728.8 287L728.8 293.6ZM722.7 284.9L728.8 287L739.7 278.3L739.7 285.9ZM739.7 285.9L739.7 278.3L750.6 269.5L750.6 278.3ZM756.6 286.8L750.6 269.5L761.6 260.8L761.6 270.6ZM773.3 287.4L761.6 260.8L772.5 252.1L772.5 263ZM608.6 271.2L663.2 339.5L674.1 329.7L674.1 330.8ZM626.4 271.1L674.1 329.7L685.1 319.8L685.1 322ZM644.2 271L685.1 319.8L696 310L696 313.3ZM662.1 270.9L696 310L706.9 300.2L706.9 304.5ZM679.9 270.8L706.9 300.2L717.9 290.3L717.9 295.8ZM697.7 270.6L717.9 290.3L728.8 280.5L728.8 287ZM715.5 270.4L728.8 280.5L739.7 270.6L739.7 278.3ZM733.1 270.1L739.7 270.6L750.6 260.8L750.6 269.5ZM750.6 269.5L750.6 260.8L761.6 251L761.6 260.8ZM768 268.9L761.6 251L772.5 241.1L772.5 252.1ZM597.4 266.4L663.2 339.5L674.1 328.6L674.1 329.7ZM615.7 264.7L674.1 328.6L685.1 317.6L685.1 319.8ZM634 263.1L685.1 317.6L696 306.7L696 310ZM652.4 261.5L696 306.7L706.9 295.8L706.9 300.2ZM670.8 260L706.9 295.8L717.9 284.9L717.9 290.3ZM689.1 258.4L717.9 284.9L728.8 273.9L728.8 280.5ZM707.4 256.7L728.8 273.9L739.7 263L739.7 270.6ZM725.6 254.9L739.7 263L750.6 252.1L750.6 260.8ZM743.6 253L750.6 252.1L761.6 241.1L761.6 251ZM761.6 251L761.6 241.1L772.5 230.2L772.5 241.1Z" fill="none" stroke="#333" stroke-opacity="0.35" stroke-width="0.6"/></g><path d="M239 229.5H839" stroke="#3b6499" stroke-opacity=".8"/></svg>
</div>
</body></html>
